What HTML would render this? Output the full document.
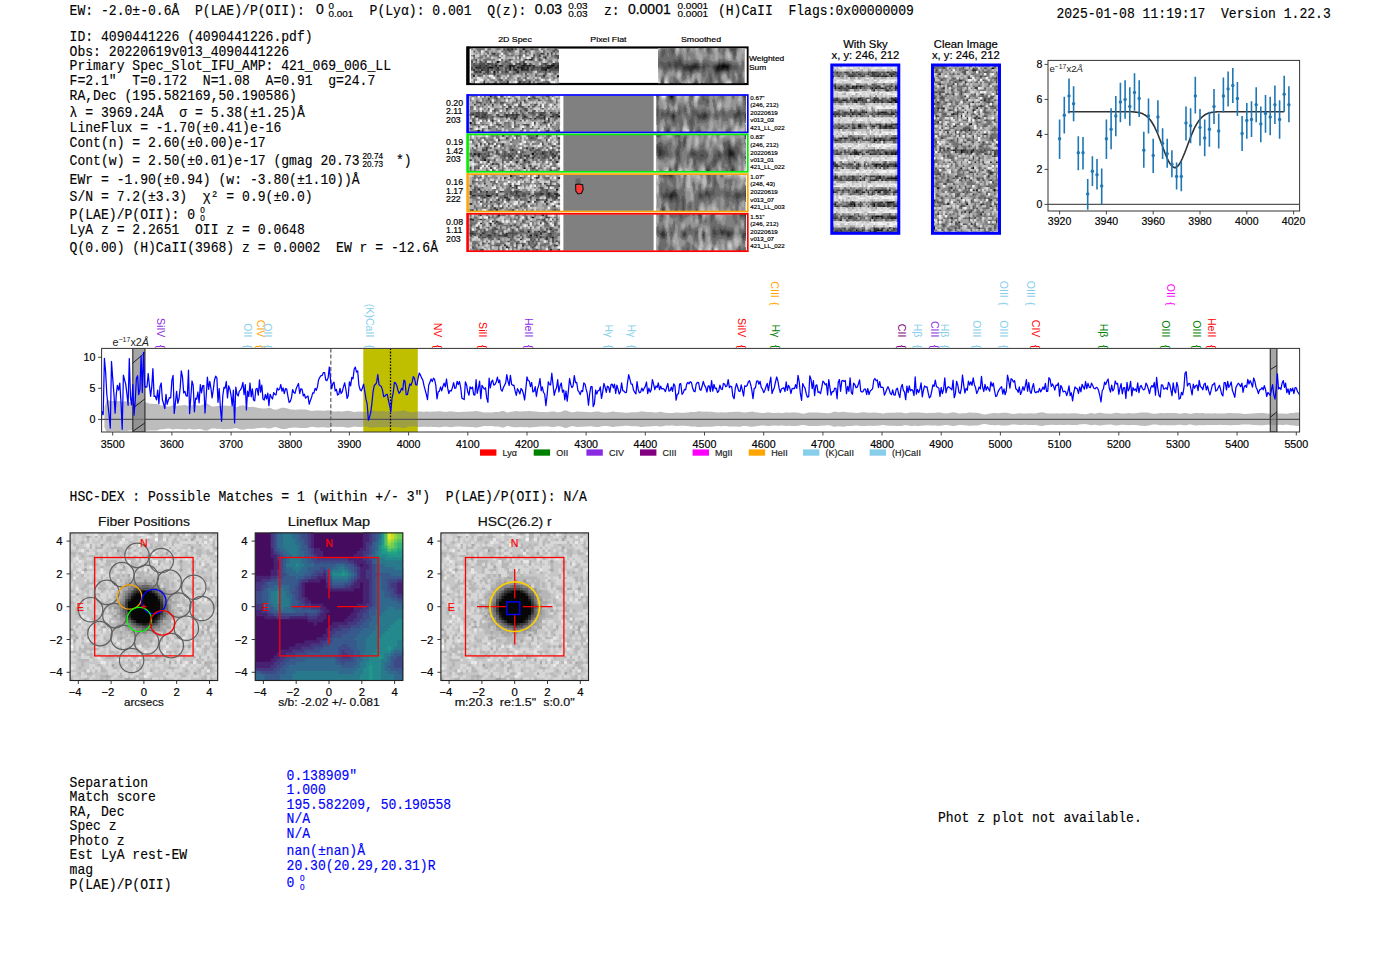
<!DOCTYPE html>
<html><head><meta charset="utf-8"><style>html,body{margin:0;padding:0;background:#fff;overflow:hidden}svg{display:block} text{white-space:pre}</style></head>
<body><svg xml:space="preserve" width="1400" height="953" viewBox="0 0 1400 953">
<rect width="1400" height="953" fill="#fff"/>
<text transform="translate(69.60 14.90) scale(0.934 1)" font-family="'Liberation Mono', monospace" font-size="14" fill="#000" stroke="#000" stroke-width="0.15">EW: -2.0±-0.6Å  P(LAE)/P(OII):</text>
<text transform="translate(316.00 14.30) scale(1.0 1)" font-family="'Liberation Sans', sans-serif" font-size="14" fill="#000" stroke="#000" stroke-width="0.25">0</text>
<text transform="translate(328.60 8.60) scale(1.13 1)" font-family="'Liberation Sans', sans-serif" font-size="8.7" fill="#000" stroke="#000" stroke-width="0.18">0</text>
<text transform="translate(328.60 17.40) scale(1.13 1)" font-family="'Liberation Sans', sans-serif" font-size="8.7" fill="#000" stroke="#000" stroke-width="0.18">0.001</text>
<text transform="translate(369.60 14.90) scale(0.934 1)" font-family="'Liberation Mono', monospace" font-size="14" fill="#000" stroke="#000" stroke-width="0.15">P(Lyα): 0.001  Q(z):</text>
<text transform="translate(534.80 14.30) scale(1.0 1)" font-family="'Liberation Sans', sans-serif" font-size="14" fill="#000" stroke="#000" stroke-width="0.25">0.03</text>
<text transform="translate(568.20 8.90) scale(1.15 1)" font-family="'Liberation Sans', sans-serif" font-size="8.7" fill="#000" stroke="#000" stroke-width="0.18">0.03</text>
<text transform="translate(568.20 17.40) scale(1.15 1)" font-family="'Liberation Sans', sans-serif" font-size="8.7" fill="#000" stroke="#000" stroke-width="0.18">0.03</text>
<text transform="translate(604.00 14.90) scale(0.934 1)" font-family="'Liberation Mono', monospace" font-size="14" fill="#000" stroke="#000" stroke-width="0.15">z:</text>
<text transform="translate(627.90 14.30) scale(1.0 1)" font-family="'Liberation Sans', sans-serif" font-size="14" fill="#000" stroke="#000" stroke-width="0.25">0.0001</text>
<text transform="translate(677.50 8.90) scale(1.15 1)" font-family="'Liberation Sans', sans-serif" font-size="8.7" fill="#000" stroke="#000" stroke-width="0.18">0.0001</text>
<text transform="translate(677.50 17.40) scale(1.15 1)" font-family="'Liberation Sans', sans-serif" font-size="8.7" fill="#000" stroke="#000" stroke-width="0.18">0.0001</text>
<text transform="translate(717.90 14.90) scale(0.934 1)" font-family="'Liberation Mono', monospace" font-size="14" fill="#000" stroke="#000" stroke-width="0.15">(H)CaII  Flags:0x00000009</text>
<text transform="translate(1056.40 17.60) scale(0.934 1)" font-family="'Liberation Mono', monospace" font-size="14" fill="#000" stroke="#000" stroke-width="0.15">2025-01-08 11:19:17  Version 1.22.3</text>
<text transform="translate(69.60 41.30) scale(0.934 1)" font-family="'Liberation Mono', monospace" font-size="14" fill="#000" stroke="#000" stroke-width="0.15">ID: 4090441226 (4090441226.pdf)</text>
<text transform="translate(69.60 55.60) scale(0.934 1)" font-family="'Liberation Mono', monospace" font-size="14" fill="#000" stroke="#000" stroke-width="0.15">Obs: 20220619v013_4090441226</text>
<text transform="translate(69.60 70.20) scale(0.934 1)" font-family="'Liberation Mono', monospace" font-size="14" fill="#000" stroke="#000" stroke-width="0.15">Primary Spec_Slot_IFU_AMP: 421_069_006_LL</text>
<text transform="translate(69.60 84.90) scale(0.934 1)" font-family="'Liberation Mono', monospace" font-size="14" fill="#000" stroke="#000" stroke-width="0.15">F=2.1"  T=0.172  N=1.08  A=0.91  g=24.7</text>
<text transform="translate(69.60 99.90) scale(0.934 1)" font-family="'Liberation Mono', monospace" font-size="14" fill="#000" stroke="#000" stroke-width="0.15">RA,Dec (195.582169,50.190586)</text>
<text transform="translate(69.60 117.00) scale(0.934 1)" font-family="'Liberation Mono', monospace" font-size="14" fill="#000" stroke="#000" stroke-width="0.15">λ = 3969.24Å  σ = 5.38(±1.25)Å</text>
<text transform="translate(69.60 132.00) scale(0.934 1)" font-family="'Liberation Mono', monospace" font-size="14" fill="#000" stroke="#000" stroke-width="0.15">LineFlux = -1.70(±0.41)e-16</text>
<text transform="translate(69.60 147.00) scale(0.934 1)" font-family="'Liberation Mono', monospace" font-size="14" fill="#000" stroke="#000" stroke-width="0.15">Cont(n) = 2.60(±0.00)e-17</text>
<text transform="translate(69.60 164.90) scale(0.934 1)" font-family="'Liberation Mono', monospace" font-size="14" fill="#000" stroke="#000" stroke-width="0.15">Cont(w) = 2.50(±0.01)e-17 (gmag 20.73</text>
<text transform="translate(69.60 183.50) scale(0.934 1)" font-family="'Liberation Mono', monospace" font-size="14" fill="#000" stroke="#000" stroke-width="0.15">EWr = -1.90(±0.94) (w: -3.80(±1.10))Å</text>
<text transform="translate(69.60 200.60) scale(0.934 1)" font-family="'Liberation Mono', monospace" font-size="14" fill="#000" stroke="#000" stroke-width="0.15">S/N = 7.2(±3.3)  χ² = 0.9(±0.0)</text>
<text transform="translate(69.60 218.50) scale(0.934 1)" font-family="'Liberation Mono', monospace" font-size="14" fill="#000" stroke="#000" stroke-width="0.15">P(LAE)/P(OII): 0</text>
<text transform="translate(69.60 234.20) scale(0.934 1)" font-family="'Liberation Mono', monospace" font-size="14" fill="#000" stroke="#000" stroke-width="0.15">LyA z = 2.2651  OII z = 0.0648</text>
<text transform="translate(69.60 252.00) scale(0.934 1)" font-family="'Liberation Mono', monospace" font-size="14" fill="#000" stroke="#000" stroke-width="0.15">Q(0.00) (H)CaII(3968) z = 0.0002  EW r = -12.6Å</text>
<text transform="translate(362.50 158.80) scale(1.0 1)" font-family="'Liberation Sans', sans-serif" font-size="8.2" fill="#000" stroke="#000" stroke-width="0.18">20.74</text>
<text transform="translate(362.50 167.20) scale(1.0 1)" font-family="'Liberation Sans', sans-serif" font-size="8.2" fill="#000" stroke="#000" stroke-width="0.18">20.73</text>
<text transform="translate(396.00 164.90) scale(0.934 1)" font-family="'Liberation Mono', monospace" font-size="14" fill="#000" stroke="#000" stroke-width="0.15">*)</text>
<text transform="translate(200.30 212.90) scale(1.0 1)" font-family="'Liberation Sans', sans-serif" font-size="8.2" fill="#000" stroke="#000" stroke-width="0.18">0</text>
<text transform="translate(200.30 221.00) scale(1.0 1)" font-family="'Liberation Sans', sans-serif" font-size="8.2" fill="#000" stroke="#000" stroke-width="0.18">0</text>
<text transform="translate(69.60 786.80) scale(0.934 1)" font-family="'Liberation Mono', monospace" font-size="14" fill="#000" stroke="#000" stroke-width="0.15">Separation</text>
<text transform="translate(69.60 801.00) scale(0.934 1)" font-family="'Liberation Mono', monospace" font-size="14" fill="#000" stroke="#000" stroke-width="0.15">Match score</text>
<text transform="translate(69.60 816.40) scale(0.934 1)" font-family="'Liberation Mono', monospace" font-size="14" fill="#000" stroke="#000" stroke-width="0.15">RA, Dec</text>
<text transform="translate(69.60 830.40) scale(0.934 1)" font-family="'Liberation Mono', monospace" font-size="14" fill="#000" stroke="#000" stroke-width="0.15">Spec z</text>
<text transform="translate(69.60 845.10) scale(0.934 1)" font-family="'Liberation Mono', monospace" font-size="14" fill="#000" stroke="#000" stroke-width="0.15">Photo z</text>
<text transform="translate(69.60 859.40) scale(0.934 1)" font-family="'Liberation Mono', monospace" font-size="14" fill="#000" stroke="#000" stroke-width="0.15">Est LyA rest-EW</text>
<text transform="translate(69.60 873.80) scale(0.934 1)" font-family="'Liberation Mono', monospace" font-size="14" fill="#000" stroke="#000" stroke-width="0.15">mag</text>
<text transform="translate(69.60 889.20) scale(0.934 1)" font-family="'Liberation Mono', monospace" font-size="14" fill="#000" stroke="#000" stroke-width="0.15">P(LAE)/P(OII)</text>
<text transform="translate(286.60 779.70) scale(0.934 1)" font-family="'Liberation Mono', monospace" font-size="14" fill="#0000ff" stroke="#0000ff" stroke-width="0.15">0.138909"</text>
<text transform="translate(286.60 794.40) scale(0.934 1)" font-family="'Liberation Mono', monospace" font-size="14" fill="#0000ff" stroke="#0000ff" stroke-width="0.15">1.000</text>
<text transform="translate(286.60 808.80) scale(0.934 1)" font-family="'Liberation Mono', monospace" font-size="14" fill="#0000ff" stroke="#0000ff" stroke-width="0.15">195.582209, 50.190558</text>
<text transform="translate(286.60 823.10) scale(0.934 1)" font-family="'Liberation Mono', monospace" font-size="14" fill="#0000ff" stroke="#0000ff" stroke-width="0.15">N/A</text>
<text transform="translate(286.60 837.80) scale(0.934 1)" font-family="'Liberation Mono', monospace" font-size="14" fill="#0000ff" stroke="#0000ff" stroke-width="0.15">N/A</text>
<text transform="translate(286.60 854.60) scale(0.934 1)" font-family="'Liberation Mono', monospace" font-size="14" fill="#0000ff" stroke="#0000ff" stroke-width="0.15">nan(±nan)Å</text>
<text transform="translate(286.60 870.10) scale(0.934 1)" font-family="'Liberation Mono', monospace" font-size="14" fill="#0000ff" stroke="#0000ff" stroke-width="0.15">20.30(20.29,20.31)R</text>
<text transform="translate(286.60 887.00) scale(0.934 1)" font-family="'Liberation Mono', monospace" font-size="14" fill="#0000ff" stroke="#0000ff" stroke-width="0.15">0</text>
<text transform="translate(300.00 881.00) scale(1.0 1)" font-family="'Liberation Sans', sans-serif" font-size="8.2" fill="#0000ff" stroke="#0000ff" stroke-width="0.18">0</text>
<text transform="translate(300.00 890.00) scale(1.0 1)" font-family="'Liberation Sans', sans-serif" font-size="8.2" fill="#0000ff" stroke="#0000ff" stroke-width="0.18">0</text>
<text transform="translate(938.00 822.40) scale(0.934 1)" font-family="'Liberation Mono', monospace" font-size="14" fill="#000" stroke="#000" stroke-width="0.15">Phot z plot not available.</text>
<text transform="translate(69.60 501.10) scale(0.934 1)" font-family="'Liberation Mono', monospace" font-size="14" fill="#000" stroke="#000" stroke-width="0.15">HSC-DEX : Possible Matches = 1 (within +/- 3")  P(LAE)/P(OII): N/A</text>
<text transform="translate(515.00 41.80) scale(1.1 1)" font-family="'Liberation Sans', sans-serif" font-size="8.0" fill="#000" text-anchor="middle" stroke="#000" stroke-width="0.18">2D Spec</text>
<text transform="translate(608.40 41.80) scale(1.1 1)" font-family="'Liberation Sans', sans-serif" font-size="8.0" fill="#000" text-anchor="middle" stroke="#000" stroke-width="0.18">Pixel Flat</text>
<text transform="translate(701.00 41.80) scale(1.1 1)" font-family="'Liberation Sans', sans-serif" font-size="8.0" fill="#000" text-anchor="middle" stroke="#000" stroke-width="0.18">Smoothed</text>
<rect x="467.5" y="47.5" width="280" height="36.5" fill="#fff" stroke="#000" stroke-width="2.2"/>
<g><rect x="471" y="48.6" width="87.5" height="34.4" fill="#8f8f8f"/>
<path stroke="#0f0f0f" stroke-width="2.52" d="M522.7 49.6h2.5M530.7 59.7h2.5M496.9 61.8h2.5M494.9 65.8h2.5M498.8 65.8h2.5M508.8 65.8h2.5M522.7 65.8h2.5M528.7 65.8h2.5M550.5 65.8h4.5M475 67.8h2.5M488.9 67.8h4.5M496.9 67.8h2.5M508.8 67.8h2.5M516.7 67.8h2.5M520.7 67.8h2.5M526.7 67.8h2.5M546.6 67.8h4.5M554.5 67.8h2.5M508.8 69.8h2.5M514.8 69.8h2.5M520.7 69.8h2.5M544.6 69.8h2.5M492.9 71.9h2.5M516.7 71.9h2.5M473 75.9h2.5M556.5 75.9h2.5"/>
<path stroke="#2f2f2f" stroke-width="2.52" d="M506.8 49.6h2.5M510.8 49.6h2.5M524.7 51.6h2.5M492.9 53.7h2.5M540.6 53.7h2.5M546.6 53.7h2.5M550.5 53.7h2.5M538.6 55.7h2.5M544.6 57.7h2.5M524.7 59.7h2.5M528.7 59.7h2.5M522.7 61.8h2.5M486.9 63.8h2.5M518.7 63.8h2.5M522.7 63.8h4.5M544.6 63.8h2.5M552.5 63.8h2.5M479 65.8h2.5M484.9 65.8h2.5M500.8 65.8h2.5M510.8 65.8h4.5M520.7 65.8h2.5M524.7 65.8h4.5M532.6 65.8h2.5M546.6 65.8h4.5M556.5 65.8h2.5M477 67.8h4.5M482.9 67.8h2.5M486.9 67.8h2.5M512.8 67.8h2.5M518.7 67.8h2.5M522.7 67.8h2.5M532.6 67.8h2.5M540.6 67.8h6.5M550.5 67.8h2.5M556.5 67.8h2.5M473 69.8h2.5M480.9 69.8h2.5M486.9 69.8h2.5M496.9 69.8h2.5M512.8 69.8h2.5M522.7 69.8h6.5M530.7 69.8h2.5M540.6 69.8h4.5M475 71.9h2.5M479 71.9h2.5M486.9 71.9h2.5M504.8 71.9h2.5M492.9 73.9h2.5M524.7 73.9h2.5M542.6 75.9h2.5M482.9 82h2.5M506.8 82h2.5M518.7 82h2.5M528.7 82h2.5"/>
<path stroke="#4f4f4f" stroke-width="2.52" d="M502.8 49.6h2.5M508.8 49.6h2.5M514.8 49.6h2.5M530.7 49.6h2.5M554.5 49.6h2.5M473 51.6h2.5M484.9 51.6h2.5M508.8 51.6h2.5M518.7 51.6h2.5M552.5 51.6h2.5M486.9 53.7h2.5M490.9 53.7h2.5M542.6 53.7h2.5M473 55.7h2.5M496.9 55.7h2.5M518.7 55.7h2.5M532.6 55.7h2.5M554.5 55.7h4.5M498.8 57.7h2.5M518.7 57.7h2.5M530.7 57.7h4.5M542.6 57.7h2.5M556.5 57.7h2.5M475 59.7h2.5M500.8 59.7h2.5M508.8 59.7h2.5M538.6 59.7h2.5M471 61.8h2.5M479 61.8h2.5M484.9 61.8h2.5M504.8 61.8h2.5M473 63.8h2.5M479 63.8h6.5M488.9 63.8h4.5M494.9 63.8h2.5M508.8 63.8h2.5M514.8 63.8h4.5M528.7 63.8h2.5M542.6 63.8h2.5M554.5 63.8h4.5M473 65.8h6.5M480.9 65.8h4.5M486.9 65.8h2.5M490.9 65.8h4.5M506.8 65.8h2.5M514.8 65.8h2.5M518.7 65.8h2.5M530.7 65.8h2.5M540.6 65.8h2.5M544.6 65.8h2.5M554.5 65.8h2.5M471 67.8h2.5M480.9 67.8h2.5M484.9 67.8h2.5M492.9 67.8h4.5M504.8 67.8h4.5M524.7 67.8h2.5M530.7 67.8h2.5M534.6 67.8h6.5M552.5 67.8h2.5M471 69.8h2.5M477 69.8h2.5M482.9 69.8h4.5M490.9 69.8h2.5M494.9 69.8h2.5M498.8 69.8h2.5M504.8 69.8h2.5M516.7 69.8h2.5M532.6 69.8h2.5M536.6 69.8h2.5M548.6 69.8h10.4M473 71.9h2.5M477 71.9h2.5M484.9 71.9h2.5M496.9 71.9h2.5M500.8 71.9h2.5M506.8 71.9h2.5M514.8 71.9h2.5M526.7 71.9h2.5M538.6 71.9h2.5M544.6 71.9h2.5M548.6 71.9h2.5M482.9 73.9h2.5M486.9 73.9h2.5M512.8 73.9h2.5M544.6 73.9h2.5M554.5 73.9h2.5M477 75.9h4.5M496.9 75.9h2.5M526.7 75.9h2.5M534.6 75.9h2.5M516.7 77.9h2.5M524.7 77.9h2.5M498.8 80h4.5M534.6 80h2.5M494.9 82h2.5M522.7 82h2.5M532.6 82h2.5M546.6 82h2.5"/>
<path stroke="#6f6f6f" stroke-width="2.52" d="M477 49.6h6.5M486.9 49.6h4.5M496.9 49.6h2.5M504.8 49.6h2.5M524.7 49.6h2.5M532.6 49.6h6.5M540.6 49.6h2.5M546.6 49.6h2.5M479 51.6h2.5M500.8 51.6h2.5M504.8 51.6h2.5M510.8 51.6h2.5M520.7 51.6h2.5M526.7 51.6h2.5M542.6 51.6h2.5M556.5 51.6h2.5M496.9 53.7h2.5M502.8 53.7h4.5M518.7 53.7h2.5M524.7 53.7h2.5M528.7 53.7h2.5M536.6 53.7h2.5M554.5 53.7h2.5M484.9 55.7h2.5M488.9 55.7h2.5M492.9 55.7h4.5M506.8 55.7h2.5M510.8 55.7h2.5M520.7 55.7h2.5M524.7 55.7h4.5M536.6 55.7h2.5M546.6 55.7h2.5M550.5 55.7h2.5M473 57.7h2.5M479 57.7h4.5M496.9 57.7h2.5M514.8 57.7h2.5M536.6 57.7h2.5M554.5 57.7h2.5M473 59.7h2.5M482.9 59.7h8.5M492.9 59.7h2.5M510.8 59.7h2.5M526.7 59.7h2.5M532.6 59.7h2.5M540.6 59.7h2.5M475 61.8h2.5M490.9 61.8h2.5M506.8 61.8h2.5M518.7 61.8h4.5M548.6 61.8h4.5M471 63.8h2.5M475 63.8h2.5M484.9 63.8h2.5M500.8 63.8h4.5M506.8 63.8h2.5M520.7 63.8h2.5M540.6 63.8h2.5M546.6 63.8h2.5M471 65.8h2.5M496.9 65.8h2.5M504.8 65.8h2.5M542.6 65.8h2.5M473 67.8h2.5M498.8 67.8h4.5M514.8 67.8h2.5M528.7 67.8h2.5M475 69.8h2.5M488.9 69.8h2.5M492.9 69.8h2.5M500.8 69.8h2.5M506.8 69.8h2.5M510.8 69.8h2.5M518.7 69.8h2.5M528.7 69.8h2.5M534.6 69.8h2.5M538.6 69.8h2.5M488.9 71.9h2.5M502.8 71.9h2.5M512.8 71.9h2.5M518.7 71.9h8.5M528.7 71.9h4.5M536.6 71.9h2.5M540.6 71.9h4.5M546.6 71.9h2.5M552.5 71.9h6.5M471 73.9h4.5M477 73.9h2.5M488.9 73.9h4.5M500.8 73.9h6.5M508.8 73.9h2.5M520.7 73.9h2.5M534.6 73.9h2.5M480.9 75.9h2.5M498.8 75.9h2.5M508.8 75.9h2.5M524.7 75.9h2.5M538.6 75.9h4.5M550.5 75.9h2.5M486.9 77.9h2.5M506.8 77.9h2.5M518.7 77.9h2.5M522.7 77.9h2.5M532.6 77.9h2.5M540.6 77.9h4.5M546.6 77.9h2.5M552.5 77.9h2.5M473 80h4.5M490.9 80h2.5M496.9 80h2.5M504.8 80h2.5M516.7 80h2.5M520.7 80h2.5M526.7 80h2.5M536.6 80h2.5M473 82h2.5M498.8 82h2.5M502.8 82h2.5M520.7 82h2.5M524.7 82h2.5M542.6 82h4.5"/>
<path stroke="#afafaf" stroke-width="2.52" d="M473 49.6h2.5M490.9 49.6h4.5M500.8 49.6h2.5M516.7 49.6h2.5M544.6 49.6h2.5M475 51.6h2.5M482.9 51.6h2.5M488.9 51.6h2.5M492.9 51.6h2.5M496.9 51.6h2.5M522.7 51.6h2.5M532.6 51.6h2.5M546.6 51.6h2.5M473 53.7h2.5M477 53.7h2.5M484.9 53.7h2.5M488.9 53.7h2.5M508.8 53.7h2.5M514.8 53.7h4.5M526.7 53.7h2.5M544.6 53.7h2.5M548.6 53.7h2.5M552.5 53.7h2.5M556.5 53.7h2.5M528.7 55.7h2.5M540.6 55.7h2.5M548.6 55.7h2.5M475 57.7h2.5M482.9 57.7h2.5M492.9 57.7h4.5M506.8 57.7h6.5M520.7 57.7h6.5M534.6 57.7h2.5M540.6 57.7h2.5M546.6 57.7h2.5M477 59.7h2.5M480.9 59.7h2.5M494.9 59.7h4.5M502.8 59.7h2.5M512.8 59.7h2.5M552.5 59.7h4.5M473 61.8h2.5M477 61.8h2.5M492.9 61.8h2.5M526.7 61.8h6.5M544.6 61.8h2.5M498.8 63.8h2.5M526.7 63.8h2.5M532.6 63.8h2.5M548.6 63.8h2.5M490.9 71.9h2.5M498.8 71.9h2.5M508.8 71.9h2.5M532.6 71.9h2.5M522.7 73.9h2.5M526.7 73.9h2.5M532.6 73.9h2.5M538.6 73.9h4.5M546.6 73.9h2.5M550.5 73.9h2.5M556.5 73.9h2.5M475 75.9h2.5M486.9 75.9h2.5M500.8 75.9h4.5M512.8 75.9h4.5M518.7 75.9h2.5M522.7 75.9h2.5M528.7 75.9h2.5M532.6 75.9h2.5M546.6 75.9h4.5M554.5 75.9h2.5M473 77.9h4.5M480.9 77.9h6.5M512.8 77.9h2.5M520.7 77.9h2.5M528.7 77.9h4.5M548.6 77.9h4.5M494.9 80h2.5M502.8 80h2.5M510.8 80h2.5M514.8 80h2.5M532.6 80h2.5M546.6 80h2.5M556.5 80h2.5M471 82h2.5M479 82h4.5M484.9 82h2.5M488.9 82h4.5M496.9 82h2.5M510.8 82h2.5M530.7 82h2.5M534.6 82h2.5M556.5 82h2.5"/>
<path stroke="#cfcfcf" stroke-width="2.52" d="M484.9 49.6h2.5M538.6 49.6h2.5M471 51.6h2.5M498.8 51.6h2.5M514.8 51.6h4.5M530.7 51.6h2.5M540.6 51.6h2.5M471 53.7h2.5M480.9 53.7h2.5M530.7 53.7h2.5M475 55.7h4.5M486.9 55.7h2.5M498.8 55.7h2.5M502.8 55.7h2.5M530.7 55.7h2.5M471 57.7h2.5M490.9 57.7h2.5M500.8 57.7h4.5M512.8 57.7h2.5M516.7 57.7h2.5M528.7 57.7h2.5M520.7 59.7h2.5M534.6 59.7h2.5M542.6 59.7h2.5M486.9 61.8h4.5M510.8 61.8h2.5M516.7 61.8h2.5M524.7 61.8h2.5M542.6 61.8h2.5M552.5 61.8h2.5M512.8 63.8h2.5M538.6 63.8h2.5M471 71.9h2.5M534.6 71.9h2.5M548.6 73.9h2.5M482.9 75.9h2.5M506.8 75.9h2.5M516.7 75.9h2.5M479 77.9h2.5M490.9 77.9h2.5M500.8 77.9h2.5M504.8 77.9h2.5M514.8 77.9h2.5M526.7 77.9h2.5M534.6 77.9h2.5M538.6 77.9h2.5M471 80h2.5M477 80h2.5M486.9 80h2.5M522.7 80h2.5M542.6 80h2.5M554.5 80h2.5M508.8 82h2.5M512.8 82h2.5M554.5 82h2.5"/>
<path stroke="#efefef" stroke-width="2.52" d="M480.9 51.6h2.5M500.8 53.7h2.5M522.7 55.7h2.5M526.7 57.7h2.5M498.8 59.7h2.5M488.9 75.9h4.5M477 77.9h2.5M492.9 77.9h2.5M479 80h4.5M540.6 80h2.5M548.6 80h2.5M475 82h4.5M514.8 82h2.5M550.5 82h4.5"/>
</g>
<g><rect x="658" y="48.6" width="86.8" height="34.4" fill="#7f7f7f"/>
<path stroke="#090909" stroke-width="1.51" d="M721.9 65.3h3.5M717.9 66.3h2.5M720.9 66.3h7.5M717.9 67.3h2.5M720.9 67.3h7.5M716.9 68.3h2.5M721.9 68.3h2.5"/>
<path stroke="#1d1d1d" stroke-width="1.51" d="M718.9 64.3h1.5M721.9 64.3h4.5M717.9 65.3h4.5M724.8 65.3h4.5M692.9 66.3h4.5M716.9 66.3h1.5M719.9 66.3h1.5M727.8 66.3h1.5M690.9 67.3h5.5M715.9 67.3h2.5M719.9 67.3h1.5M727.8 67.3h1.5M689.9 68.3h2.5M715.9 68.3h1.5M718.9 68.3h3.5M723.8 68.3h5.5M715.9 69.3h8.5M725.8 69.3h2.5M716.9 70.4h2.5"/>
<path stroke="#313131" stroke-width="1.51" d="M718.9 63.3h1.5M721.9 63.3h3.5M675 64.3h1.5M693.9 64.3h3.5M717.9 64.3h1.5M719.9 64.3h2.5M725.8 64.3h3.5M675 65.3h1.5M690.9 65.3h7.5M715.9 65.3h2.5M728.8 65.3h1.5M675 66.3h1.5M685.9 66.3h7.5M696.9 66.3h2.5M714.9 66.3h2.5M728.8 66.3h1.5M682.9 67.3h8.5M695.9 67.3h3.5M713.9 67.3h2.5M728.8 67.3h1.5M682.9 68.3h7.5M691.9 68.3h6.5M713.9 68.3h2.5M728.8 68.3h1.5M687.9 69.3h6.5M714.9 69.3h1.5M723.8 69.3h2.5M727.8 69.3h1.5M688.9 70.4h3.5M714.9 70.4h2.5M718.9 70.4h4.5M725.8 70.4h3.5M689.9 71.4h1.5M714.9 71.4h5.5"/>
<path stroke="#444444" stroke-width="1.51" d="M706.9 49.1h2.5M729.8 49.1h6.5M730.8 50.1h5.5M733.8 51.1h1.5M733.8 52.1h1.5M733.8 53.2h1.5M679 59.2h1.5M678 60.2h3.5M675 61.2h1.5M678 61.2h3.5M674 62.3h8.5M718.9 62.3h1.5M721.9 62.3h3.5M668 63.3h2.5M674 63.3h8.5M692.9 63.3h5.5M717.9 63.3h1.5M719.9 63.3h2.5M724.8 63.3h4.5M668 64.3h3.5M674 64.3h1.5M676 64.3h7.5M685.9 64.3h2.5M690.9 64.3h3.5M696.9 64.3h2.5M702.9 64.3h1.5M716.9 64.3h1.5M728.8 64.3h2.5M667 65.3h4.5M674 65.3h1.5M676 65.3h15.5M697.9 65.3h1.5M702.9 65.3h2.5M713.9 65.3h2.5M729.8 65.3h2.5M668 66.3h3.5M674 66.3h1.5M676 66.3h10.5M698.9 66.3h1.5M701.9 66.3h3.5M712.9 66.3h2.5M729.8 66.3h2.5M664 67.3h2.5M674 67.3h4.5M680.9 67.3h2.5M698.9 67.3h1.5M701.9 67.3h3.5M712.9 67.3h1.5M729.8 67.3h2.5M675 68.3h2.5M681.9 68.3h1.5M697.9 68.3h2.5M701.9 68.3h3.5M712.9 68.3h1.5M729.8 68.3h2.5M681.9 69.3h6.5M693.9 69.3h5.5M702.9 69.3h1.5M713.9 69.3h1.5M728.8 69.3h2.5M682.9 70.4h6.5M691.9 70.4h2.5M713.9 70.4h1.5M722.9 70.4h3.5M728.8 70.4h1.5M683.9 71.4h1.5M688.9 71.4h1.5M690.9 71.4h2.5M713.9 71.4h1.5M719.9 71.4h2.5M726.8 71.4h2.5M689.9 72.4h2.5M714.9 72.4h5.5M714.9 73.4h4.5M662 81.5h1.5M662 82.5h1.5M694.9 82.5h2.5"/>
<path stroke="#585858" stroke-width="1.51" d="M670 49.1h4.5M708.9 49.1h1.5M735.8 49.1h1.5M662 50.1h3.5M670 50.1h4.5M706.9 50.1h3.5M729.8 50.1h1.5M662 51.1h3.5M670 51.1h4.5M706.9 51.1h2.5M730.8 51.1h3.5M734.8 51.1h1.5M661 52.1h4.5M671 52.1h3.5M731.8 52.1h2.5M734.8 52.1h1.5M661 53.2h4.5M671 53.2h3.5M732.8 53.2h1.5M734.8 53.2h1.5M661 54.2h4.5M671 54.2h2.5M732.8 54.2h3.5M661 55.2h3.5M672 55.2h1.5M732.8 55.2h3.5M661 56.2h3.5M733.8 56.2h1.5M661 57.2h2.5M678 57.2h3.5M733.8 57.2h1.5M678 58.2h3.5M673 59.2h2.5M677 59.2h2.5M679.9 59.2h2.5M673 60.2h5.5M680.9 60.2h1.5M660 61.2h2.5M667 61.2h4.5M672 61.2h3.5M676 61.2h2.5M680.9 61.2h2.5M718.9 61.2h1.5M721.9 61.2h3.5M659 62.3h5.5M666 62.3h8.5M681.9 62.3h1.5M691.9 62.3h6.5M702.9 62.3h2.5M717.9 62.3h1.5M719.9 62.3h2.5M724.8 62.3h4.5M659 63.3h9.5M670 63.3h4.5M681.9 63.3h2.5M685.9 63.3h3.5M689.9 63.3h3.5M697.9 63.3h1.5M702.9 63.3h5.5M716.9 63.3h1.5M728.8 63.3h2.5M659 64.3h9.5M671 64.3h3.5M682.9 64.3h3.5M687.9 64.3h3.5M698.9 64.3h1.5M701.9 64.3h1.5M703.9 64.3h5.5M712.9 64.3h4.5M730.8 64.3h1.5M660 65.3h7.5M671 65.3h3.5M698.9 65.3h1.5M701.9 65.3h1.5M704.9 65.3h5.5M711.9 65.3h2.5M731.8 65.3h5.5M661 66.3h7.5M671 66.3h3.5M699.9 66.3h2.5M704.9 66.3h8.5M731.8 66.3h6.5M662 67.3h2.5M666 67.3h6.5M673 67.3h1.5M678 67.3h3.5M699.9 67.3h2.5M704.9 67.3h5.5M710.9 67.3h2.5M731.8 67.3h6.5M663 68.3h8.5M674 68.3h1.5M677 68.3h5.5M699.9 68.3h2.5M704.9 68.3h1.5M711.9 68.3h1.5M731.8 68.3h6.5M663 69.3h4.5M675 69.3h2.5M680.9 69.3h1.5M698.9 69.3h1.5M700.9 69.3h2.5M703.9 69.3h2.5M711.9 69.3h2.5M730.8 69.3h8.5M664 70.4h2.5M681.9 70.4h1.5M693.9 70.4h5.5M701.9 70.4h3.5M712.9 70.4h1.5M729.8 70.4h1.5M731.8 70.4h1.5M681.9 71.4h2.5M684.9 71.4h4.5M692.9 71.4h1.5M701.9 71.4h3.5M721.9 71.4h5.5M728.8 71.4h1.5M682.9 72.4h3.5M688.9 72.4h1.5M691.9 72.4h1.5M702.9 72.4h1.5M713.9 72.4h1.5M719.9 72.4h2.5M726.8 72.4h3.5M682.9 73.4h2.5M688.9 73.4h3.5M709.9 73.4h1.5M713.9 73.4h1.5M718.9 73.4h2.5M726.8 73.4h2.5M682.9 74.4h2.5M689.9 74.4h1.5M708.9 74.4h2.5M714.9 74.4h5.5M727.8 74.4h1.5M738.8 74.4h2.5M682.9 75.4h2.5M708.9 75.4h2.5M714.9 75.4h5.5M738.8 75.4h2.5M708.9 76.4h2.5M717.9 76.4h2.5M738.8 76.4h2.5M708.9 77.4h3.5M717.9 77.4h2.5M738.8 77.4h2.5M708.9 78.4h3.5M717.9 78.4h2.5M732.8 78.4h1.5M739.8 78.4h1.5M662 79.5h1.5M708.9 79.5h3.5M717.9 79.5h2.5M738.8 79.5h2.5M661 80.5h2.5M708.9 80.5h3.5M718.9 80.5h1.5M738.8 80.5h2.5M661 81.5h1.5M675 81.5h2.5M694.9 81.5h2.5M708.9 81.5h3.5M718.9 81.5h1.5M738.8 81.5h3.5M661 82.5h1.5M663 82.5h1.5M675 82.5h3.5M693.9 82.5h1.5M706.9 82.5h1.5M708.9 82.5h3.5M718.9 82.5h2.5M737.8 82.5h4.5"/>
<path stroke="#6b6b6b" stroke-width="1.51" d="M661 49.1h5.5M668 49.1h2.5M674 49.1h1.5M686.9 49.1h2.5M705.9 49.1h1.5M709.9 49.1h1.5M717.9 49.1h2.5M722.9 49.1h2.5M728.8 49.1h1.5M661 50.1h1.5M665 50.1h1.5M668 50.1h2.5M674 50.1h1.5M686.9 50.1h2.5M705.9 50.1h1.5M709.9 50.1h1.5M718.9 50.1h1.5M722.9 50.1h2.5M728.8 50.1h1.5M735.8 50.1h1.5M661 51.1h1.5M665 51.1h2.5M668 51.1h2.5M674 51.1h1.5M686.9 51.1h1.5M705.9 51.1h1.5M708.9 51.1h2.5M718.9 51.1h1.5M721.9 51.1h3.5M729.8 51.1h1.5M735.8 51.1h1.5M660 52.1h1.5M665 52.1h2.5M668 52.1h3.5M674 52.1h1.5M686.9 52.1h1.5M706.9 52.1h4.5M721.9 52.1h2.5M730.8 52.1h1.5M735.8 52.1h1.5M660 53.2h1.5M665 53.2h2.5M669 53.2h2.5M674 53.2h1.5M707.9 53.2h2.5M721.9 53.2h2.5M731.8 53.2h1.5M660 54.2h1.5M665 54.2h2.5M669 54.2h2.5M673 54.2h2.5M722.9 54.2h1.5M731.8 54.2h1.5M660 55.2h1.5M664 55.2h3.5M669 55.2h3.5M673 55.2h2.5M679 55.2h2.5M660 56.2h1.5M664 56.2h3.5M670 56.2h5.5M678 56.2h4.5M732.8 56.2h1.5M734.8 56.2h1.5M659 57.2h2.5M663 57.2h5.5M669 57.2h6.5M677 57.2h1.5M680.9 57.2h1.5M732.8 57.2h1.5M734.8 57.2h1.5M659 58.2h19.5M680.9 58.2h2.5M732.8 58.2h3.5M658 59.2h15.5M675 59.2h2.5M681.9 59.2h1.5M722.9 59.2h1.5M733.8 59.2h1.5M658 60.2h15.5M681.9 60.2h1.5M692.9 60.2h4.5M702.9 60.2h5.5M717.9 60.2h3.5M721.9 60.2h3.5M658 61.2h2.5M662 61.2h5.5M671 61.2h1.5M682.9 61.2h1.5M685.9 61.2h2.5M690.9 61.2h7.5M702.9 61.2h6.5M717.9 61.2h1.5M719.9 61.2h2.5M724.8 61.2h3.5M658 62.3h1.5M664 62.3h2.5M682.9 62.3h1.5M684.9 62.3h7.5M697.9 62.3h1.5M701.9 62.3h1.5M704.9 62.3h6.5M716.9 62.3h1.5M728.8 62.3h3.5M741.8 62.3h2.5M658 63.3h1.5M683.9 63.3h2.5M688.9 63.3h1.5M698.9 63.3h1.5M701.9 63.3h1.5M707.9 63.3h9.5M730.8 63.3h6.5M741.8 63.3h2.5M658 64.3h1.5M699.9 64.3h2.5M708.9 64.3h4.5M731.8 64.3h6.5M741.8 64.3h2.5M658 65.3h2.5M699.9 65.3h2.5M709.9 65.3h2.5M736.8 65.3h2.5M741.8 65.3h2.5M658 66.3h3.5M737.8 66.3h1.5M740.8 66.3h3.5M660 67.3h2.5M672 67.3h1.5M709.9 67.3h1.5M737.8 67.3h2.5M740.8 67.3h3.5M661 68.3h2.5M671 68.3h3.5M705.9 68.3h6.5M737.8 68.3h6.5M662 69.3h1.5M667 69.3h5.5M674 69.3h1.5M677 69.3h4.5M699.9 69.3h1.5M705.9 69.3h6.5M738.8 69.3h4.5M663 70.4h1.5M666 70.4h2.5M674 70.4h3.5M680.9 70.4h1.5M698.9 70.4h3.5M704.9 70.4h8.5M730.8 70.4h1.5M732.8 70.4h10.5M663 71.4h4.5M675 71.4h1.5M680.9 71.4h1.5M693.9 71.4h5.5M700.9 71.4h1.5M704.9 71.4h1.5M707.9 71.4h6.5M729.8 71.4h4.5M735.8 71.4h6.5M664 72.4h2.5M681.9 72.4h1.5M685.9 72.4h3.5M692.9 72.4h1.5M700.9 72.4h2.5M703.9 72.4h2.5M707.9 72.4h4.5M712.9 72.4h1.5M721.9 72.4h5.5M729.8 72.4h1.5M731.8 72.4h2.5M736.8 72.4h5.5M664 73.4h1.5M681.9 73.4h1.5M684.9 73.4h4.5M691.9 73.4h1.5M701.9 73.4h4.5M707.9 73.4h2.5M710.9 73.4h1.5M712.9 73.4h1.5M720.9 73.4h1.5M725.8 73.4h1.5M728.8 73.4h1.5M731.8 73.4h2.5M737.8 73.4h4.5M681.9 74.4h1.5M684.9 74.4h2.5M688.9 74.4h1.5M690.9 74.4h1.5M701.9 74.4h3.5M707.9 74.4h1.5M710.9 74.4h1.5M713.9 74.4h1.5M719.9 74.4h1.5M726.8 74.4h1.5M728.8 74.4h1.5M731.8 74.4h2.5M737.8 74.4h1.5M740.8 74.4h1.5M681.9 75.4h1.5M684.9 75.4h1.5M689.9 75.4h2.5M701.9 75.4h3.5M707.9 75.4h1.5M710.9 75.4h1.5M713.9 75.4h1.5M719.9 75.4h1.5M726.8 75.4h3.5M731.8 75.4h2.5M737.8 75.4h1.5M740.8 75.4h1.5M681.9 76.4h4.5M689.9 76.4h1.5M702.9 76.4h2.5M707.9 76.4h1.5M710.9 76.4h1.5M713.9 76.4h4.5M719.9 76.4h1.5M727.8 76.4h2.5M731.8 76.4h3.5M737.8 76.4h1.5M740.8 76.4h1.5M662 77.4h1.5M681.9 77.4h4.5M706.9 77.4h2.5M714.9 77.4h3.5M719.9 77.4h1.5M727.8 77.4h1.5M731.8 77.4h3.5M737.8 77.4h1.5M740.8 77.4h1.5M661 78.4h3.5M673 78.4h3.5M681.9 78.4h3.5M706.9 78.4h2.5M716.9 78.4h1.5M719.9 78.4h1.5M731.8 78.4h1.5M733.8 78.4h1.5M737.8 78.4h2.5M740.8 78.4h2.5M661 79.5h1.5M663 79.5h1.5M673 79.5h3.5M682.9 79.5h1.5M694.9 79.5h1.5M705.9 79.5h3.5M716.9 79.5h1.5M719.9 79.5h1.5M731.8 79.5h3.5M737.8 79.5h1.5M740.8 79.5h2.5M663 80.5h1.5M673 80.5h4.5M694.9 80.5h2.5M705.9 80.5h3.5M711.9 80.5h1.5M717.9 80.5h1.5M719.9 80.5h1.5M731.8 80.5h3.5M737.8 80.5h1.5M740.8 80.5h2.5M663 81.5h1.5M673 81.5h2.5M677 81.5h1.5M693.9 81.5h1.5M705.9 81.5h3.5M711.9 81.5h1.5M717.9 81.5h1.5M719.9 81.5h2.5M732.8 81.5h2.5M736.8 81.5h2.5M741.8 81.5h1.5M669 82.5h2.5M673 82.5h2.5M678 82.5h1.5M696.9 82.5h1.5M704.9 82.5h2.5M707.9 82.5h1.5M711.9 82.5h1.5M717.9 82.5h1.5M720.9 82.5h1.5M732.8 82.5h5.5M741.8 82.5h3.5"/>
<path stroke="#939393" stroke-width="1.51" d="M675 49.1h1.5M679 49.1h1.5M680.9 49.1h2.5M684.9 49.1h1.5M689.9 49.1h1.5M691.9 49.1h3.5M697.9 49.1h1.5M702.9 49.1h1.5M704.9 49.1h1.5M711.9 49.1h2.5M716.9 49.1h1.5M725.8 49.1h2.5M737.8 49.1h2.5M743.8 49.1h1.5M659 50.1h1.5M675 50.1h1.5M679 50.1h1.5M680.9 50.1h2.5M684.9 50.1h1.5M689.9 50.1h5.5M697.9 50.1h1.5M701.9 50.1h2.5M704.9 50.1h1.5M711.9 50.1h2.5M716.9 50.1h1.5M725.8 50.1h1.5M727.8 50.1h1.5M737.8 50.1h2.5M743.8 50.1h1.5M658 51.1h1.5M675 51.1h1.5M679 51.1h1.5M680.9 51.1h3.5M684.9 51.1h1.5M689.9 51.1h6.5M697.9 51.1h2.5M700.9 51.1h3.5M704.9 51.1h1.5M712.9 51.1h1.5M716.9 51.1h1.5M725.8 51.1h1.5M736.8 51.1h3.5M743.8 51.1h1.5M658 52.1h1.5M675 52.1h1.5M678 52.1h1.5M681.9 52.1h2.5M684.9 52.1h1.5M690.9 52.1h2.5M693.9 52.1h2.5M698.9 52.1h7.5M712.9 52.1h2.5M716.9 52.1h1.5M724.8 52.1h1.5M728.8 52.1h1.5M736.8 52.1h1.5M743.8 52.1h1.5M675 53.2h1.5M677 53.2h2.5M681.9 53.2h4.5M693.9 53.2h2.5M698.9 53.2h7.5M712.9 53.2h2.5M717.9 53.2h1.5M724.8 53.2h1.5M729.8 53.2h1.5M736.8 53.2h1.5M742.8 53.2h2.5M676 54.2h2.5M682.9 54.2h3.5M694.9 54.2h1.5M700.9 54.2h5.5M712.9 54.2h2.5M717.9 54.2h1.5M724.8 54.2h1.5M729.8 54.2h1.5M741.8 54.2h3.5M676 55.2h1.5M682.9 55.2h3.5M694.9 55.2h2.5M701.9 55.2h5.5M709.9 55.2h5.5M717.9 55.2h3.5M724.8 55.2h1.5M730.8 55.2h1.5M740.8 55.2h4.5M682.9 56.2h3.5M694.9 56.2h2.5M701.9 56.2h4.5M709.9 56.2h5.5M717.9 56.2h3.5M724.8 56.2h1.5M730.8 56.2h1.5M740.8 56.2h4.5M683.9 57.2h2.5M687.9 57.2h2.5M695.9 57.2h2.5M701.9 57.2h1.5M709.9 57.2h5.5M717.9 57.2h4.5M724.8 57.2h1.5M730.8 57.2h1.5M735.8 57.2h1.5M740.8 57.2h4.5M683.9 58.2h2.5M687.9 58.2h2.5M695.9 58.2h2.5M701.9 58.2h1.5M709.9 58.2h5.5M717.9 58.2h1.5M719.9 58.2h1.5M724.8 58.2h2.5M730.8 58.2h1.5M735.8 58.2h1.5M740.8 58.2h4.5M683.9 59.2h2.5M687.9 59.2h2.5M696.9 59.2h2.5M701.9 59.2h1.5M709.9 59.2h5.5M716.9 59.2h1.5M725.8 59.2h2.5M730.8 59.2h1.5M735.8 59.2h2.5M739.8 59.2h2.5M743.8 59.2h1.5M698.9 60.2h1.5M700.9 60.2h1.5M711.9 60.2h6.5M727.8 60.2h4.5M736.8 60.2h1.5M739.8 60.2h2.5M743.8 60.2h1.5M698.9 61.2h3.5M715.9 61.2h1.5M736.8 61.2h4.5M699.9 62.3h2.5M737.8 62.3h3.5M738.8 63.3h2.5M738.8 64.3h1.5M658 69.3h2.5M659 70.4h3.5M743.8 70.4h1.5M661 71.4h1.5M672 71.4h2.5M678 71.4h2.5M743.8 71.4h1.5M661 72.4h1.5M668 72.4h2.5M671 72.4h3.5M677 72.4h1.5M679.9 72.4h1.5M742.8 72.4h1.5M661 73.4h1.5M667 73.4h7.5M676 73.4h1.5M679.9 73.4h1.5M695.9 73.4h4.5M723.8 73.4h1.5M734.8 73.4h1.5M742.8 73.4h1.5M661 74.4h1.5M666 74.4h8.5M675 74.4h2.5M692.9 74.4h5.5M698.9 74.4h2.5M721.9 74.4h4.5M734.8 74.4h2.5M742.8 74.4h1.5M661 75.4h1.5M665 75.4h8.5M675 75.4h2.5M691.9 75.4h1.5M693.9 75.4h3.5M699.9 75.4h1.5M721.9 75.4h1.5M734.8 75.4h2.5M742.8 75.4h1.5M660 76.4h1.5M665 76.4h1.5M668 76.4h2.5M676 76.4h1.5M679.9 76.4h1.5M686.9 76.4h2.5M691.9 76.4h1.5M693.9 76.4h3.5M699.9 76.4h1.5M720.9 76.4h2.5M725.8 76.4h1.5M735.8 76.4h1.5M742.8 76.4h1.5M660 77.4h1.5M664 77.4h1.5M668 77.4h1.5M676 77.4h1.5M679.9 77.4h1.5M686.9 77.4h2.5M693.9 77.4h3.5M699.9 77.4h1.5M720.9 77.4h1.5M725.8 77.4h1.5M735.8 77.4h1.5M743.8 77.4h1.5M660 78.4h1.5M664 78.4h1.5M668 78.4h1.5M677 78.4h1.5M679.9 78.4h1.5M686.9 78.4h3.5M690.9 78.4h1.5M693.9 78.4h1.5M696.9 78.4h1.5M699.9 78.4h1.5M720.9 78.4h2.5M725.8 78.4h2.5M735.8 78.4h1.5M743.8 78.4h1.5M664 79.5h1.5M668 79.5h1.5M678 79.5h3.5M685.9 79.5h2.5M688.9 79.5h3.5M696.9 79.5h1.5M699.9 79.5h1.5M721.9 79.5h1.5M726.8 79.5h4.5M668 80.5h1.5M679 80.5h2.5M684.9 80.5h2.5M689.9 80.5h2.5M692.9 80.5h1.5M699.9 80.5h1.5M721.9 80.5h2.5M729.8 80.5h1.5M668 81.5h1.5M679.9 81.5h1.5M682.9 81.5h4.5M689.9 81.5h2.5M692.9 81.5h1.5M697.9 81.5h1.5M699.9 81.5h1.5M702.9 81.5h1.5M714.9 81.5h2.5M722.9 81.5h2.5M730.8 81.5h1.5M668 82.5h1.5M680.9 82.5h4.5M690.9 82.5h2.5M697.9 82.5h1.5M699.9 82.5h1.5M702.9 82.5h1.5M713.9 82.5h3.5M722.9 82.5h2.5M730.8 82.5h1.5"/>
<path stroke="#a6a6a6" stroke-width="1.51" d="M659 49.1h1.5M678 49.1h1.5M682.9 49.1h2.5M690.9 49.1h1.5M694.9 49.1h1.5M696.9 49.1h1.5M703.9 49.1h1.5M713.9 49.1h1.5M739.8 49.1h2.5M742.8 49.1h1.5M658 50.1h1.5M678 50.1h1.5M682.9 50.1h2.5M694.9 50.1h3.5M703.9 50.1h1.5M713.9 50.1h3.5M726.8 50.1h1.5M739.8 50.1h4.5M676 51.1h1.5M678 51.1h1.5M683.9 51.1h1.5M695.9 51.1h2.5M703.9 51.1h1.5M713.9 51.1h3.5M726.8 51.1h2.5M739.8 51.1h4.5M676 52.1h2.5M683.9 52.1h1.5M695.9 52.1h3.5M714.9 52.1h2.5M725.8 52.1h3.5M737.8 52.1h6.5M676 53.2h1.5M695.9 53.2h3.5M714.9 53.2h3.5M725.8 53.2h2.5M728.8 53.2h1.5M737.8 53.2h5.5M695.9 54.2h5.5M714.9 54.2h3.5M725.8 54.2h1.5M728.8 54.2h1.5M736.8 54.2h5.5M696.9 55.2h5.5M714.9 55.2h3.5M725.8 55.2h1.5M729.8 55.2h1.5M736.8 55.2h4.5M696.9 56.2h5.5M714.9 56.2h3.5M725.8 56.2h2.5M729.8 56.2h1.5M736.8 56.2h4.5M697.9 57.2h4.5M714.9 57.2h3.5M725.8 57.2h2.5M729.8 57.2h1.5M736.8 57.2h4.5M697.9 58.2h4.5M714.9 58.2h3.5M726.8 58.2h4.5M736.8 58.2h4.5M698.9 59.2h3.5M714.9 59.2h2.5M727.8 59.2h3.5M737.8 59.2h2.5M699.9 60.2h1.5M737.8 60.2h2.5M658 70.4h1.5M658 71.4h3.5M658 72.4h3.5M678 72.4h2.5M743.8 72.4h1.5M659 73.4h2.5M677 73.4h3.5M743.8 73.4h1.5M659 74.4h2.5M677 74.4h1.5M679.9 74.4h1.5M697.9 74.4h1.5M743.8 74.4h1.5M659 75.4h2.5M677 75.4h1.5M679.9 75.4h1.5M692.9 75.4h1.5M696.9 75.4h3.5M722.9 75.4h3.5M743.8 75.4h1.5M659 76.4h1.5M666 76.4h2.5M677 76.4h1.5M679 76.4h1.5M692.9 76.4h1.5M696.9 76.4h3.5M722.9 76.4h3.5M743.8 76.4h1.5M659 77.4h1.5M665 77.4h3.5M677 77.4h3.5M691.9 77.4h2.5M696.9 77.4h3.5M721.9 77.4h4.5M659 78.4h1.5M665 78.4h1.5M667 78.4h1.5M678 78.4h2.5M691.9 78.4h2.5M697.9 78.4h2.5M722.9 78.4h3.5M659 79.5h1.5M667 79.5h1.5M687.9 79.5h1.5M691.9 79.5h2.5M697.9 79.5h2.5M722.9 79.5h4.5M659 80.5h1.5M664 80.5h1.5M667 80.5h1.5M686.9 80.5h3.5M691.9 80.5h1.5M697.9 80.5h2.5M723.8 80.5h6.5M664 81.5h1.5M667 81.5h1.5M686.9 81.5h1.5M688.9 81.5h1.5M691.9 81.5h1.5M698.9 81.5h1.5M724.8 81.5h2.5M729.8 81.5h1.5M664 82.5h1.5M684.9 82.5h3.5M689.9 82.5h1.5M698.9 82.5h1.5M724.8 82.5h1.5"/>
<path stroke="#bababa" stroke-width="1.51" d="M658 49.1h1.5M676 49.1h1.5M695.9 49.1h1.5M714.9 49.1h2.5M741.8 49.1h1.5M676 50.1h2.5M677 51.1h1.5M727.8 53.2h1.5M726.8 54.2h2.5M726.8 55.2h3.5M727.8 56.2h2.5M727.8 57.2h2.5M658 73.4h1.5M658 74.4h1.5M678 74.4h2.5M658 75.4h1.5M678 75.4h2.5M658 76.4h1.5M678 76.4h1.5M658 77.4h1.5M658 78.4h1.5M666 78.4h1.5M665 79.5h2.5M665 80.5h2.5M659 81.5h1.5M687.9 81.5h1.5M726.8 81.5h3.5M659 82.5h1.5M667 82.5h1.5M687.9 82.5h2.5M725.8 82.5h1.5M729.8 82.5h1.5"/>
<path stroke="#cdcdcd" stroke-width="1.51" d="M677 49.1h1.5M658 79.5h1.5M658 80.5h1.5M658 81.5h1.5M665 81.5h2.5M666 82.5h1.5M726.8 82.5h3.5"/>
<path stroke="#e1e1e1" stroke-width="1.51" d="M658 82.5h1.5M665 82.5h1.5"/>
</g>
<rect x="466.4" y="46.6" width="3.2" height="38.4" fill="#000"/>
<rect x="744.8" y="48.6" width="1.8" height="34.4" fill="#fff"/>
<text transform="translate(749.00 61.00) scale(1.05 1)" font-family="'Liberation Sans', sans-serif" font-size="8.0" fill="#000" stroke="#000" stroke-width="0.18">Weighted</text>
<text transform="translate(749.00 70.00) scale(1.05 1)" font-family="'Liberation Sans', sans-serif" font-size="8.0" fill="#000" stroke="#000" stroke-width="0.18">Sum</text>
<g><rect x="469.6" y="95.6" width="90" height="36.2" fill="#6f6f6f"/>
<path stroke="#0f0f0f" stroke-width="2.51" d="M489.6 96.6h2.5M475.6 116.7h2.5M557.6 116.7h2.5M469.6 122.8h2.5M477.6 130.8h2.5"/>
<path stroke="#2f2f2f" stroke-width="2.51" d="M487.6 98.6h2.5M527.6 98.6h2.5M523.6 100.6h2.5M489.6 102.6h2.5M519.6 102.6h2.5M473.6 104.7h2.5M483.6 104.7h2.5M491.6 104.7h2.5M509.6 106.7h2.5M527.6 106.7h2.5M505.6 108.7h2.5M525.6 110.7h2.5M549.6 112.7h2.5M471.6 114.7h2.5M483.6 114.7h2.5M505.6 114.7h2.5M511.6 114.7h2.5M515.6 114.7h4.5M539.6 114.7h2.5M555.6 114.7h2.5M481.6 116.7h2.5M499.6 116.7h2.5M505.6 116.7h2.5M515.6 116.7h2.5M523.6 116.7h2.5M543.6 116.7h2.5M549.6 116.7h4.5M513.6 118.7h2.5M533.6 118.7h2.5M543.6 118.7h2.5M547.6 118.7h2.5M491.6 120.7h2.5M547.6 120.7h2.5M533.6 122.8h2.5M543.6 122.8h2.5M549.6 124.8h2.5M477.6 126.8h2.5M501.6 126.8h2.5M481.6 130.8h2.5"/>
<path stroke="#4f4f4f" stroke-width="2.51" d="M483.6 96.6h2.5M493.6 96.6h2.5M499.6 96.6h4.5M531.6 96.6h2.5M545.6 96.6h4.5M495.6 98.6h2.5M503.6 98.6h2.5M507.6 98.6h2.5M533.6 98.6h2.5M515.6 100.6h2.5M537.6 100.6h2.5M475.6 102.6h6.5M493.6 102.6h2.5M499.6 102.6h4.5M555.6 102.6h2.5M519.6 104.7h2.5M533.6 104.7h4.5M553.6 104.7h2.5M477.6 106.7h2.5M491.6 106.7h2.5M507.6 106.7h2.5M517.6 106.7h6.5M531.6 106.7h2.5M539.6 106.7h2.5M487.6 108.7h2.5M515.6 108.7h2.5M523.6 108.7h4.5M541.6 108.7h2.5M493.6 110.7h2.5M505.6 110.7h2.5M519.6 110.7h2.5M533.6 110.7h2.5M475.6 112.7h4.5M481.6 112.7h2.5M485.6 112.7h2.5M511.6 112.7h2.5M515.6 112.7h2.5M527.6 112.7h2.5M531.6 112.7h2.5M539.6 112.7h6.5M557.6 112.7h2.5M469.6 114.7h2.5M475.6 114.7h4.5M481.6 114.7h2.5M495.6 114.7h4.5M503.6 114.7h2.5M507.6 114.7h4.5M513.6 114.7h2.5M521.6 114.7h2.5M533.6 114.7h2.5M541.6 114.7h2.5M551.6 114.7h4.5M477.6 116.7h2.5M483.6 116.7h4.5M491.6 116.7h2.5M497.6 116.7h2.5M501.6 116.7h2.5M507.6 116.7h2.5M511.6 116.7h2.5M525.6 116.7h2.5M535.6 116.7h4.5M555.6 116.7h2.5M479.6 118.7h2.5M483.6 118.7h4.5M509.6 118.7h2.5M521.6 118.7h2.5M529.6 118.7h2.5M539.6 118.7h4.5M555.6 118.7h2.5M471.6 120.7h2.5M485.6 120.7h2.5M519.6 120.7h2.5M523.6 120.7h2.5M473.6 122.8h2.5M513.6 122.8h2.5M551.6 122.8h2.5M473.6 124.8h2.5M481.6 124.8h2.5M495.6 124.8h6.5M523.6 124.8h6.5M539.6 124.8h2.5M487.6 126.8h2.5M513.6 126.8h2.5M469.6 128.8h2.5M487.6 128.8h2.5M521.6 128.8h2.5M537.6 128.8h2.5M545.6 130.8h4.5M555.6 130.8h4.5"/>
<path stroke="#8f8f8f" stroke-width="2.51" d="M469.6 96.6h2.5M473.6 96.6h2.5M487.6 96.6h2.5M491.6 96.6h2.5M505.6 96.6h2.5M513.6 96.6h2.5M519.6 96.6h6.5M529.6 96.6h2.5M539.6 96.6h2.5M543.6 96.6h2.5M469.6 98.6h2.5M475.6 98.6h2.5M483.6 98.6h4.5M489.6 98.6h4.5M497.6 98.6h6.5M509.6 98.6h2.5M519.6 98.6h6.5M543.6 98.6h2.5M549.6 98.6h2.5M557.6 98.6h2.5M477.6 100.6h2.5M483.6 100.6h2.5M493.6 100.6h2.5M499.6 100.6h2.5M503.6 100.6h2.5M507.6 100.6h2.5M517.6 100.6h6.5M527.6 100.6h2.5M531.6 100.6h4.5M543.6 100.6h4.5M551.6 100.6h2.5M481.6 102.6h4.5M487.6 102.6h2.5M497.6 102.6h2.5M505.6 102.6h2.5M535.6 102.6h2.5M541.6 102.6h2.5M545.6 102.6h4.5M551.6 102.6h2.5M475.6 104.7h2.5M481.6 104.7h2.5M495.6 104.7h2.5M509.6 104.7h2.5M531.6 104.7h2.5M543.6 104.7h2.5M475.6 106.7h2.5M479.6 106.7h2.5M485.6 106.7h2.5M515.6 106.7h2.5M523.6 106.7h2.5M537.6 106.7h2.5M545.6 106.7h4.5M475.6 108.7h4.5M497.6 108.7h4.5M511.6 108.7h4.5M519.6 108.7h2.5M531.6 108.7h2.5M539.6 108.7h2.5M545.6 108.7h2.5M549.6 108.7h2.5M469.6 110.7h6.5M485.6 110.7h2.5M501.6 110.7h2.5M507.6 110.7h2.5M515.6 110.7h4.5M521.6 110.7h2.5M537.6 110.7h2.5M549.6 110.7h6.5M557.6 110.7h2.5M491.6 112.7h2.5M497.6 112.7h2.5M501.6 112.7h2.5M513.6 112.7h2.5M523.6 112.7h2.5M545.6 112.7h2.5M555.6 112.7h2.5M491.6 114.7h2.5M501.6 114.7h2.5M519.6 114.7h2.5M525.6 114.7h4.5M547.6 114.7h4.5M493.6 116.7h2.5M517.6 116.7h4.5M527.6 116.7h2.5M533.6 116.7h2.5M545.6 116.7h4.5M469.6 118.7h2.5M487.6 118.7h2.5M499.6 118.7h4.5M517.6 118.7h2.5M531.6 118.7h2.5M551.6 118.7h2.5M477.6 120.7h2.5M493.6 120.7h4.5M501.6 120.7h2.5M507.6 120.7h2.5M511.6 120.7h2.5M515.6 120.7h4.5M529.6 120.7h2.5M533.6 120.7h4.5M539.6 120.7h2.5M545.6 120.7h2.5M551.6 120.7h2.5M471.6 122.8h2.5M481.6 122.8h4.5M497.6 122.8h2.5M509.6 122.8h2.5M537.6 122.8h4.5M555.6 122.8h4.5M477.6 124.8h4.5M483.6 124.8h2.5M487.6 124.8h2.5M493.6 124.8h2.5M505.6 124.8h2.5M509.6 124.8h2.5M515.6 124.8h2.5M541.6 124.8h4.5M557.6 124.8h2.5M471.6 126.8h2.5M489.6 126.8h2.5M499.6 126.8h2.5M503.6 126.8h4.5M537.6 126.8h2.5M549.6 126.8h2.5M553.6 126.8h4.5M483.6 128.8h2.5M491.6 128.8h4.5M499.6 128.8h2.5M503.6 128.8h8.5M513.6 128.8h2.5M523.6 128.8h6.5M535.6 128.8h2.5M551.6 128.8h2.5M555.6 128.8h2.5M469.6 130.8h6.5M479.6 130.8h2.5M489.6 130.8h6.5M503.6 130.8h2.5M507.6 130.8h6.5M525.6 130.8h4.5M535.6 130.8h2.5M543.6 130.8h2.5M553.6 130.8h2.5"/>
<path stroke="#afafaf" stroke-width="2.51" d="M485.6 96.6h2.5M509.6 96.6h2.5M535.6 96.6h4.5M549.6 96.6h2.5M553.6 96.6h2.5M557.6 96.6h2.5M473.6 98.6h2.5M477.6 98.6h4.5M505.6 98.6h2.5M539.6 98.6h2.5M545.6 98.6h2.5M553.6 98.6h2.5M471.6 100.6h4.5M501.6 100.6h2.5M511.6 100.6h4.5M525.6 100.6h2.5M535.6 100.6h2.5M541.6 100.6h2.5M469.6 102.6h2.5M473.6 102.6h2.5M491.6 102.6h2.5M507.6 102.6h4.5M517.6 102.6h2.5M527.6 102.6h2.5M531.6 102.6h2.5M553.6 102.6h2.5M557.6 102.6h2.5M469.6 104.7h4.5M477.6 104.7h2.5M485.6 104.7h2.5M489.6 104.7h2.5M493.6 104.7h2.5M497.6 104.7h2.5M525.6 104.7h2.5M547.6 104.7h2.5M551.6 104.7h2.5M555.6 104.7h2.5M483.6 106.7h2.5M489.6 106.7h2.5M493.6 106.7h6.5M525.6 106.7h2.5M529.6 106.7h2.5M535.6 106.7h2.5M481.6 108.7h2.5M485.6 108.7h2.5M503.6 108.7h2.5M517.6 108.7h2.5M527.6 108.7h2.5M543.6 108.7h2.5M553.6 108.7h6.5M475.6 110.7h2.5M483.6 110.7h2.5M503.6 110.7h2.5M509.6 110.7h2.5M527.6 110.7h4.5M539.6 110.7h2.5M545.6 110.7h2.5M555.6 110.7h2.5M489.6 112.7h2.5M505.6 112.7h2.5M517.6 112.7h2.5M525.6 112.7h2.5M547.6 112.7h2.5M493.6 114.7h2.5M499.6 114.7h2.5M535.6 114.7h2.5M529.6 116.7h2.5M495.6 118.7h4.5M503.6 118.7h2.5M519.6 118.7h2.5M549.6 118.7h2.5M557.6 118.7h2.5M475.6 120.7h2.5M483.6 120.7h2.5M503.6 120.7h2.5M509.6 120.7h2.5M527.6 120.7h2.5M537.6 120.7h2.5M541.6 120.7h2.5M549.6 120.7h2.5M555.6 120.7h4.5M485.6 122.8h4.5M501.6 122.8h2.5M515.6 122.8h8.5M525.6 122.8h6.5M549.6 122.8h2.5M491.6 124.8h2.5M501.6 124.8h2.5M519.6 124.8h2.5M529.6 124.8h2.5M537.6 124.8h2.5M551.6 124.8h4.5M469.6 126.8h2.5M473.6 126.8h4.5M523.6 126.8h2.5M539.6 126.8h4.5M477.6 128.8h2.5M485.6 128.8h2.5M497.6 128.8h2.5M515.6 128.8h4.5M533.6 128.8h2.5M545.6 128.8h2.5M483.6 130.8h2.5M487.6 130.8h2.5M513.6 130.8h6.5M533.6 130.8h2.5M539.6 130.8h4.5M549.6 130.8h4.5"/>
<path stroke="#cfcfcf" stroke-width="2.51" d="M481.6 96.6h2.5M503.6 96.6h2.5M515.6 96.6h4.5M555.6 96.6h2.5M511.6 98.6h2.5M517.6 98.6h2.5M525.6 98.6h2.5M479.6 100.6h2.5M509.6 100.6h2.5M553.6 100.6h2.5M557.6 100.6h2.5M521.6 102.6h2.5M529.6 102.6h2.5M533.6 102.6h2.5M537.6 102.6h4.5M543.6 102.6h2.5M513.6 104.7h2.5M521.6 104.7h4.5M527.6 104.7h2.5M537.6 104.7h2.5M557.6 104.7h2.5M473.6 106.7h2.5M487.6 106.7h2.5M499.6 106.7h2.5M505.6 106.7h2.5M511.6 106.7h2.5M549.6 106.7h2.5M553.6 106.7h2.5M557.6 106.7h2.5M489.6 108.7h4.5M533.6 108.7h6.5M547.6 108.7h2.5M551.6 108.7h2.5M479.6 110.7h2.5M511.6 110.7h2.5M535.6 110.7h2.5M541.6 110.7h2.5M487.6 112.7h2.5M495.6 112.7h2.5M509.6 112.7h2.5M471.6 116.7h2.5M475.6 118.7h2.5M493.6 118.7h2.5M507.6 118.7h2.5M545.6 118.7h2.5M469.6 120.7h2.5M505.6 120.7h2.5M521.6 120.7h2.5M525.6 120.7h2.5M475.6 122.8h2.5M489.6 122.8h2.5M493.6 122.8h2.5M499.6 122.8h2.5M511.6 122.8h2.5M523.6 122.8h2.5M535.6 122.8h2.5M553.6 122.8h2.5M511.6 124.8h2.5M535.6 124.8h2.5M479.6 126.8h2.5M483.6 126.8h4.5M495.6 126.8h2.5M519.6 126.8h2.5M529.6 126.8h2.5M533.6 126.8h4.5M543.6 126.8h2.5M547.6 126.8h2.5M473.6 128.8h2.5M479.6 128.8h2.5M501.6 128.8h2.5M519.6 128.8h2.5M539.6 128.8h4.5M549.6 128.8h2.5M485.6 130.8h2.5M501.6 130.8h2.5M505.6 130.8h2.5M529.6 130.8h4.5"/>
<path stroke="#efefef" stroke-width="2.51" d="M477.6 96.6h2.5M497.6 96.6h2.5M507.6 96.6h2.5M527.6 96.6h2.5M471.6 98.6h2.5M551.6 98.6h2.5M491.6 100.6h2.5M505.6 100.6h2.5M503.6 104.7h2.5M515.6 104.7h2.5M541.6 104.7h2.5M549.6 104.7h2.5M541.6 106.7h2.5M473.6 108.7h2.5M479.6 108.7h2.5M489.6 110.7h2.5M499.6 110.7h2.5M479.6 120.7h2.5M487.6 120.7h2.5M497.6 120.7h2.5M477.6 122.8h2.5M531.6 122.8h2.5M489.6 124.8h2.5M531.6 124.8h2.5M547.6 124.8h2.5M481.6 126.8h2.5M511.6 126.8h2.5M521.6 126.8h2.5M475.6 128.8h2.5M523.6 130.8h2.5M537.6 130.8h2.5"/>
</g>
<rect x="563.4" y="95.6" width="90.2" height="36.2" fill="#808080"/>
<g><rect x="656.5" y="95.6" width="89" height="36.2" fill="#7f7f7f"/>
<path stroke="#090909" stroke-width="1.51" d="M670.5 96.1h2.5M670.5 97.1h2.5"/>
<path stroke="#1d1d1d" stroke-width="1.51" d="M669.5 96.1h1.5M672.5 96.1h1.5M670.5 98.1h2.5M672.5 116.2h1.5"/>
<path stroke="#313131" stroke-width="1.51" d="M656.5 96.1h1.5M669.5 97.1h1.5M672.5 97.1h1.5M669.5 98.1h1.5M672.5 98.1h1.5M670.5 99.1h2.5M737.5 112.2h1.5M737.5 113.2h2.5M672.5 114.2h1.5M703.5 114.2h2.5M737.5 114.2h1.5M671.5 115.2h3.5M702.5 115.2h4.5M671.5 116.2h1.5M673.5 116.2h1.5M702.5 116.2h4.5M671.5 117.2h3.5M702.5 117.2h3.5M672.5 118.2h2.5"/>
<path stroke="#444444" stroke-width="1.51" d="M668.5 96.1h1.5M673.5 96.1h1.5M743.5 96.1h2.5M656.5 97.1h1.5M668.5 97.1h1.5M673.5 97.1h1.5M743.5 97.1h2.5M668.5 98.1h1.5M744.5 98.1h1.5M669.5 99.1h1.5M672.5 99.1h1.5M670.5 100.1h3.5M656.5 109.2h1.5M656.5 110.2h1.5M737.5 110.2h2.5M656.5 111.2h1.5M737.5 111.2h2.5M656.5 112.2h1.5M667.5 112.2h1.5M703.5 112.2h2.5M736.5 112.2h1.5M738.5 112.2h2.5M656.5 113.2h1.5M661.5 113.2h1.5M666.5 113.2h2.5M672.5 113.2h2.5M701.5 113.2h5.5M735.5 113.2h2.5M739.5 113.2h1.5M656.5 114.2h1.5M661.5 114.2h1.5M666.5 114.2h2.5M671.5 114.2h1.5M673.5 114.2h1.5M696.5 114.2h2.5M700.5 114.2h3.5M705.5 114.2h2.5M734.5 114.2h3.5M738.5 114.2h2.5M744.5 114.2h1.5M656.5 115.2h1.5M661.5 115.2h1.5M670.5 115.2h1.5M674.5 115.2h1.5M696.5 115.2h6.5M706.5 115.2h1.5M733.5 115.2h7.5M744.5 115.2h1.5M670.5 116.2h1.5M674.5 116.2h1.5M696.5 116.2h6.5M706.5 116.2h1.5M733.5 116.2h7.5M744.5 116.2h1.5M670.5 117.2h1.5M674.5 117.2h1.5M697.5 117.2h5.5M705.5 117.2h2.5M734.5 117.2h3.5M744.5 117.2h1.5M671.5 118.2h1.5M697.5 118.2h9.5M734.5 118.2h2.5M744.5 118.2h1.5M671.5 119.2h3.5M701.5 119.2h4.5M672.5 120.2h2.5M666.5 129.3h2.5M666.5 130.3h2.5M666.5 131.3h3.5M697.5 131.3h1.5"/>
<path stroke="#585858" stroke-width="1.51" d="M657.5 96.1h1.5M667.5 96.1h1.5M689.5 96.1h3.5M701.5 96.1h2.5M732.5 96.1h1.5M742.5 96.1h1.5M657.5 97.1h1.5M667.5 97.1h1.5M690.5 97.1h2.5M701.5 97.1h3.5M742.5 97.1h1.5M656.5 98.1h1.5M667.5 98.1h1.5M673.5 98.1h1.5M701.5 98.1h3.5M743.5 98.1h1.5M656.5 99.1h1.5M668.5 99.1h1.5M673.5 99.1h1.5M701.5 99.1h6.5M743.5 99.1h2.5M668.5 100.1h2.5M673.5 100.1h1.5M701.5 100.1h7.5M743.5 100.1h2.5M670.5 101.1h4.5M702.5 101.1h2.5M705.5 101.1h3.5M744.5 101.1h1.5M671.5 102.1h3.5M705.5 102.1h3.5M744.5 102.1h1.5M672.5 103.1h1.5M705.5 103.1h3.5M744.5 103.1h1.5M706.5 104.1h1.5M744.5 104.1h1.5M744.5 105.2h1.5M656.5 107.2h1.5M684.5 107.2h1.5M656.5 108.2h1.5M683.5 108.2h2.5M737.5 108.2h1.5M657.5 109.2h1.5M678.5 109.2h1.5M683.5 109.2h2.5M692.5 109.2h1.5M736.5 109.2h3.5M657.5 110.2h1.5M666.5 110.2h2.5M678.5 110.2h2.5M683.5 110.2h2.5M691.5 110.2h3.5M736.5 110.2h1.5M739.5 110.2h1.5M657.5 111.2h1.5M661.5 111.2h1.5M666.5 111.2h3.5M678.5 111.2h2.5M683.5 111.2h3.5M691.5 111.2h6.5M702.5 111.2h3.5M721.5 111.2h2.5M736.5 111.2h1.5M739.5 111.2h2.5M657.5 112.2h1.5M660.5 112.2h3.5M665.5 112.2h2.5M668.5 112.2h1.5M672.5 112.2h2.5M677.5 112.2h3.5M684.5 112.2h1.5M691.5 112.2h7.5M700.5 112.2h3.5M705.5 112.2h1.5M715.5 112.2h1.5M721.5 112.2h3.5M735.5 112.2h1.5M740.5 112.2h5.5M657.5 113.2h1.5M660.5 113.2h1.5M662.5 113.2h4.5M668.5 113.2h4.5M677.5 113.2h3.5M691.5 113.2h10.5M706.5 113.2h2.5M715.5 113.2h1.5M721.5 113.2h3.5M732.5 113.2h3.5M740.5 113.2h5.5M657.5 114.2h1.5M660.5 114.2h1.5M662.5 114.2h4.5M668.5 114.2h3.5M674.5 114.2h1.5M677.5 114.2h3.5M691.5 114.2h5.5M698.5 114.2h2.5M707.5 114.2h2.5M714.5 114.2h3.5M721.5 114.2h3.5M731.5 114.2h3.5M740.5 114.2h4.5M657.5 115.2h1.5M659.5 115.2h2.5M662.5 115.2h8.5M675.5 115.2h1.5M677.5 115.2h2.5M691.5 115.2h5.5M707.5 115.2h2.5M714.5 115.2h3.5M722.5 115.2h3.5M732.5 115.2h1.5M740.5 115.2h4.5M656.5 116.2h2.5M660.5 116.2h10.5M675.5 116.2h1.5M691.5 116.2h3.5M695.5 116.2h1.5M707.5 116.2h1.5M714.5 116.2h3.5M722.5 116.2h3.5M732.5 116.2h1.5M740.5 116.2h2.5M743.5 116.2h1.5M656.5 117.2h2.5M660.5 117.2h2.5M664.5 117.2h3.5M669.5 117.2h1.5M675.5 117.2h1.5M690.5 117.2h3.5M696.5 117.2h1.5M707.5 117.2h1.5M715.5 117.2h2.5M733.5 117.2h1.5M737.5 117.2h4.5M743.5 117.2h1.5M656.5 118.2h2.5M665.5 118.2h1.5M670.5 118.2h1.5M674.5 118.2h1.5M690.5 118.2h3.5M696.5 118.2h1.5M706.5 118.2h2.5M733.5 118.2h1.5M736.5 118.2h5.5M656.5 119.2h1.5M670.5 119.2h1.5M674.5 119.2h1.5M689.5 119.2h4.5M697.5 119.2h4.5M705.5 119.2h2.5M734.5 119.2h2.5M738.5 119.2h3.5M744.5 119.2h1.5M656.5 120.2h1.5M671.5 120.2h1.5M674.5 120.2h1.5M688.5 120.2h5.5M697.5 120.2h9.5M734.5 120.2h1.5M739.5 120.2h2.5M744.5 120.2h1.5M671.5 121.2h4.5M688.5 121.2h5.5M739.5 121.2h2.5M672.5 122.2h3.5M688.5 122.2h5.5M739.5 122.2h1.5M673.5 123.3h1.5M680.5 123.3h1.5M688.5 123.3h5.5M680.5 124.3h1.5M689.5 124.3h4.5M689.5 125.3h3.5M690.5 126.3h2.5M666.5 127.3h2.5M690.5 127.3h2.5M665.5 128.3h4.5M690.5 128.3h2.5M665.5 129.3h1.5M668.5 129.3h1.5M690.5 129.3h2.5M665.5 130.3h1.5M668.5 130.3h1.5M690.5 130.3h1.5M697.5 130.3h2.5M665.5 131.3h1.5M690.5 131.3h1.5M696.5 131.3h1.5M698.5 131.3h1.5M726.5 131.3h3.5"/>
<path stroke="#6b6b6b" stroke-width="1.51" d="M674.5 96.1h1.5M692.5 96.1h1.5M700.5 96.1h1.5M703.5 96.1h4.5M719.5 96.1h4.5M731.5 96.1h1.5M733.5 96.1h1.5M674.5 97.1h1.5M689.5 97.1h1.5M692.5 97.1h1.5M700.5 97.1h1.5M704.5 97.1h4.5M720.5 97.1h3.5M731.5 97.1h3.5M657.5 98.1h1.5M666.5 98.1h1.5M674.5 98.1h1.5M689.5 98.1h3.5M700.5 98.1h1.5M704.5 98.1h4.5M721.5 98.1h2.5M732.5 98.1h1.5M742.5 98.1h1.5M657.5 99.1h1.5M666.5 99.1h2.5M674.5 99.1h1.5M689.5 99.1h3.5M699.5 99.1h2.5M707.5 99.1h1.5M722.5 99.1h1.5M742.5 99.1h1.5M656.5 100.1h2.5M667.5 100.1h1.5M674.5 100.1h1.5M689.5 100.1h2.5M699.5 100.1h2.5M708.5 100.1h1.5M713.5 100.1h1.5M656.5 101.1h1.5M667.5 101.1h3.5M674.5 101.1h1.5M689.5 101.1h1.5M698.5 101.1h4.5M704.5 101.1h1.5M708.5 101.1h1.5M712.5 101.1h2.5M743.5 101.1h1.5M656.5 102.1h1.5M667.5 102.1h4.5M689.5 102.1h1.5M698.5 102.1h7.5M708.5 102.1h1.5M712.5 102.1h2.5M743.5 102.1h1.5M656.5 103.1h1.5M671.5 103.1h1.5M673.5 103.1h1.5M689.5 103.1h1.5M698.5 103.1h7.5M712.5 103.1h2.5M743.5 103.1h1.5M656.5 104.1h1.5M671.5 104.1h3.5M689.5 104.1h1.5M698.5 104.1h4.5M703.5 104.1h3.5M707.5 104.1h1.5M713.5 104.1h1.5M743.5 104.1h1.5M656.5 105.2h1.5M672.5 105.2h1.5M689.5 105.2h2.5M704.5 105.2h4.5M713.5 105.2h2.5M743.5 105.2h1.5M656.5 106.2h2.5M678.5 106.2h2.5M683.5 106.2h2.5M689.5 106.2h4.5M705.5 106.2h2.5M713.5 106.2h2.5M743.5 106.2h2.5M657.5 107.2h1.5M667.5 107.2h1.5M678.5 107.2h2.5M682.5 107.2h2.5M685.5 107.2h1.5M690.5 107.2h3.5M714.5 107.2h1.5M736.5 107.2h3.5M743.5 107.2h2.5M657.5 108.2h1.5M667.5 108.2h1.5M677.5 108.2h4.5M682.5 108.2h1.5M685.5 108.2h1.5M690.5 108.2h4.5M704.5 108.2h1.5M714.5 108.2h1.5M736.5 108.2h1.5M738.5 108.2h2.5M743.5 108.2h2.5M666.5 109.2h3.5M677.5 109.2h1.5M679.5 109.2h2.5M682.5 109.2h1.5M685.5 109.2h1.5M690.5 109.2h2.5M693.5 109.2h2.5M701.5 109.2h4.5M714.5 109.2h1.5M721.5 109.2h2.5M739.5 109.2h2.5M742.5 109.2h3.5M658.5 110.2h1.5M660.5 110.2h3.5M668.5 110.2h1.5M677.5 110.2h1.5M680.5 110.2h3.5M685.5 110.2h1.5M690.5 110.2h1.5M694.5 110.2h4.5M700.5 110.2h6.5M714.5 110.2h2.5M720.5 110.2h4.5M730.5 110.2h2.5M735.5 110.2h1.5M740.5 110.2h5.5M658.5 111.2h3.5M662.5 111.2h4.5M669.5 111.2h1.5M672.5 111.2h2.5M677.5 111.2h1.5M680.5 111.2h3.5M690.5 111.2h1.5M697.5 111.2h5.5M705.5 111.2h4.5M714.5 111.2h3.5M720.5 111.2h1.5M723.5 111.2h1.5M729.5 111.2h7.5M741.5 111.2h4.5M658.5 112.2h2.5M663.5 112.2h2.5M669.5 112.2h3.5M674.5 112.2h1.5M676.5 112.2h1.5M680.5 112.2h4.5M685.5 112.2h1.5M690.5 112.2h1.5M698.5 112.2h2.5M706.5 112.2h4.5M714.5 112.2h1.5M716.5 112.2h1.5M719.5 112.2h2.5M724.5 112.2h1.5M728.5 112.2h7.5M658.5 113.2h2.5M674.5 113.2h3.5M680.5 113.2h1.5M682.5 113.2h5.5M690.5 113.2h1.5M708.5 113.2h2.5M714.5 113.2h1.5M716.5 113.2h5.5M724.5 113.2h2.5M727.5 113.2h5.5M658.5 114.2h2.5M675.5 114.2h2.5M680.5 114.2h1.5M683.5 114.2h4.5M690.5 114.2h1.5M709.5 114.2h1.5M713.5 114.2h1.5M717.5 114.2h4.5M724.5 114.2h7.5M658.5 115.2h1.5M676.5 115.2h1.5M679.5 115.2h2.5M684.5 115.2h3.5M689.5 115.2h2.5M709.5 115.2h1.5M713.5 115.2h1.5M717.5 115.2h5.5M725.5 115.2h7.5M658.5 116.2h2.5M676.5 116.2h5.5M685.5 116.2h6.5M694.5 116.2h1.5M708.5 116.2h2.5M713.5 116.2h1.5M717.5 116.2h2.5M720.5 116.2h2.5M725.5 116.2h7.5M742.5 116.2h1.5M658.5 117.2h2.5M662.5 117.2h2.5M667.5 117.2h2.5M676.5 117.2h5.5M686.5 117.2h4.5M693.5 117.2h3.5M708.5 117.2h1.5M713.5 117.2h2.5M717.5 117.2h1.5M721.5 117.2h9.5M731.5 117.2h2.5M741.5 117.2h2.5M658.5 118.2h7.5M666.5 118.2h4.5M675.5 118.2h6.5M686.5 118.2h4.5M693.5 118.2h3.5M708.5 118.2h1.5M714.5 118.2h4.5M721.5 118.2h6.5M732.5 118.2h1.5M741.5 118.2h3.5M657.5 119.2h4.5M664.5 119.2h3.5M669.5 119.2h1.5M675.5 119.2h6.5M686.5 119.2h3.5M693.5 119.2h1.5M695.5 119.2h2.5M707.5 119.2h1.5M715.5 119.2h3.5M722.5 119.2h5.5M733.5 119.2h1.5M736.5 119.2h2.5M741.5 119.2h1.5M743.5 119.2h1.5M657.5 120.2h2.5M664.5 120.2h2.5M670.5 120.2h1.5M675.5 120.2h7.5M687.5 120.2h1.5M693.5 120.2h1.5M696.5 120.2h1.5M706.5 120.2h2.5M722.5 120.2h5.5M733.5 120.2h1.5M735.5 120.2h4.5M741.5 120.2h1.5M656.5 121.2h3.5M664.5 121.2h2.5M670.5 121.2h1.5M675.5 121.2h2.5M678.5 121.2h4.5M687.5 121.2h1.5M693.5 121.2h1.5M696.5 121.2h11.5M734.5 121.2h2.5M738.5 121.2h1.5M741.5 121.2h1.5M744.5 121.2h1.5M656.5 122.2h2.5M665.5 122.2h1.5M671.5 122.2h1.5M675.5 122.2h2.5M678.5 122.2h4.5M687.5 122.2h1.5M693.5 122.2h1.5M696.5 122.2h10.5M734.5 122.2h1.5M738.5 122.2h1.5M740.5 122.2h1.5M744.5 122.2h1.5M656.5 123.3h2.5M665.5 123.3h1.5M671.5 123.3h2.5M674.5 123.3h2.5M678.5 123.3h2.5M681.5 123.3h1.5M687.5 123.3h1.5M693.5 123.3h1.5M697.5 123.3h1.5M738.5 123.3h3.5M656.5 124.3h1.5M665.5 124.3h2.5M671.5 124.3h5.5M679.5 124.3h1.5M681.5 124.3h1.5M687.5 124.3h2.5M693.5 124.3h1.5M739.5 124.3h2.5M665.5 125.3h4.5M672.5 125.3h4.5M679.5 125.3h3.5M688.5 125.3h1.5M692.5 125.3h2.5M739.5 125.3h1.5M665.5 126.3h5.5M679.5 126.3h3.5M688.5 126.3h2.5M692.5 126.3h1.5M664.5 127.3h2.5M668.5 127.3h2.5M679.5 127.3h2.5M689.5 127.3h1.5M692.5 127.3h1.5M697.5 127.3h2.5M664.5 128.3h1.5M669.5 128.3h1.5M680.5 128.3h1.5M689.5 128.3h1.5M692.5 128.3h1.5M697.5 128.3h2.5M728.5 128.3h1.5M664.5 129.3h1.5M669.5 129.3h1.5M680.5 129.3h1.5M689.5 129.3h1.5M696.5 129.3h4.5M727.5 129.3h3.5M664.5 130.3h1.5M669.5 130.3h1.5M679.5 130.3h2.5M689.5 130.3h1.5M691.5 130.3h1.5M696.5 130.3h1.5M699.5 130.3h1.5M726.5 130.3h4.5M657.5 131.3h1.5M664.5 131.3h1.5M669.5 131.3h1.5M679.5 131.3h2.5M689.5 131.3h1.5M691.5 131.3h1.5M695.5 131.3h1.5M699.5 131.3h1.5M725.5 131.3h1.5M729.5 131.3h1.5"/>
<path stroke="#939393" stroke-width="1.51" d="M675.5 96.1h1.5M681.5 96.1h2.5M693.5 96.1h1.5M709.5 96.1h3.5M714.5 96.1h3.5M724.5 96.1h4.5M729.5 96.1h1.5M734.5 96.1h4.5M665.5 97.1h1.5M681.5 97.1h2.5M693.5 97.1h1.5M698.5 97.1h1.5M709.5 97.1h3.5M714.5 97.1h3.5M724.5 97.1h2.5M730.5 97.1h1.5M734.5 97.1h4.5M659.5 98.1h1.5M665.5 98.1h1.5M680.5 98.1h3.5M687.5 98.1h1.5M693.5 98.1h1.5M698.5 98.1h1.5M709.5 98.1h3.5M714.5 98.1h2.5M724.5 98.1h2.5M730.5 98.1h1.5M734.5 98.1h4.5M741.5 98.1h1.5M659.5 99.1h1.5M676.5 99.1h1.5M679.5 99.1h4.5M687.5 99.1h1.5M697.5 99.1h1.5M709.5 99.1h2.5M715.5 99.1h1.5M724.5 99.1h2.5M730.5 99.1h1.5M734.5 99.1h3.5M741.5 99.1h1.5M659.5 100.1h1.5M664.5 100.1h1.5M676.5 100.1h1.5M678.5 100.1h5.5M687.5 100.1h1.5M697.5 100.1h1.5M709.5 100.1h2.5M715.5 100.1h1.5M718.5 100.1h2.5M724.5 100.1h2.5M730.5 100.1h2.5M733.5 100.1h4.5M741.5 100.1h1.5M659.5 101.1h2.5M664.5 101.1h1.5M676.5 101.1h8.5M687.5 101.1h1.5M709.5 101.1h2.5M717.5 101.1h4.5M724.5 101.1h2.5M730.5 101.1h7.5M741.5 101.1h1.5M658.5 102.1h4.5M664.5 102.1h2.5M675.5 102.1h9.5M686.5 102.1h1.5M696.5 102.1h1.5M709.5 102.1h2.5M716.5 102.1h2.5M720.5 102.1h1.5M723.5 102.1h2.5M730.5 102.1h8.5M740.5 102.1h2.5M658.5 103.1h4.5M665.5 103.1h1.5M675.5 103.1h3.5M683.5 103.1h4.5M693.5 103.1h1.5M696.5 103.1h1.5M709.5 103.1h3.5M716.5 103.1h1.5M720.5 103.1h5.5M730.5 103.1h8.5M740.5 103.1h1.5M658.5 104.1h4.5M665.5 104.1h1.5M675.5 104.1h2.5M685.5 104.1h3.5M693.5 104.1h1.5M696.5 104.1h1.5M709.5 104.1h3.5M716.5 104.1h1.5M721.5 104.1h4.5M729.5 104.1h6.5M737.5 104.1h4.5M659.5 105.2h4.5M665.5 105.2h1.5M669.5 105.2h1.5M674.5 105.2h1.5M676.5 105.2h1.5M686.5 105.2h2.5M693.5 105.2h1.5M696.5 105.2h1.5M709.5 105.2h3.5M716.5 105.2h1.5M721.5 105.2h3.5M729.5 105.2h6.5M738.5 105.2h3.5M659.5 106.2h4.5M669.5 106.2h2.5M674.5 106.2h1.5M676.5 106.2h1.5M686.5 106.2h2.5M694.5 106.2h3.5M709.5 106.2h3.5M716.5 106.2h1.5M720.5 106.2h4.5M729.5 106.2h6.5M659.5 107.2h4.5M665.5 107.2h1.5M669.5 107.2h3.5M673.5 107.2h1.5M676.5 107.2h1.5M686.5 107.2h2.5M694.5 107.2h2.5M709.5 107.2h3.5M716.5 107.2h1.5M720.5 107.2h1.5M723.5 107.2h2.5M728.5 107.2h2.5M732.5 107.2h3.5M662.5 108.2h2.5M665.5 108.2h1.5M670.5 108.2h2.5M673.5 108.2h1.5M676.5 108.2h1.5M687.5 108.2h2.5M709.5 108.2h4.5M716.5 108.2h1.5M720.5 108.2h1.5M724.5 108.2h6.5M733.5 108.2h2.5M663.5 109.2h2.5M670.5 109.2h2.5M674.5 109.2h1.5M676.5 109.2h1.5M687.5 109.2h2.5M710.5 109.2h3.5M716.5 109.2h2.5M719.5 109.2h1.5M724.5 109.2h5.5M733.5 109.2h2.5M670.5 110.2h1.5M674.5 110.2h2.5M687.5 110.2h2.5M710.5 110.2h3.5M717.5 110.2h2.5M725.5 110.2h2.5M675.5 111.2h1.5M687.5 111.2h2.5M711.5 111.2h2.5M687.5 112.2h2.5M711.5 112.2h2.5M710.5 118.2h1.5M684.5 119.2h1.5M710.5 119.2h2.5M719.5 119.2h1.5M730.5 119.2h2.5M662.5 120.2h1.5M683.5 120.2h3.5M709.5 120.2h4.5M718.5 120.2h2.5M729.5 120.2h1.5M731.5 120.2h1.5M661.5 121.2h2.5M683.5 121.2h3.5M709.5 121.2h1.5M711.5 121.2h5.5M718.5 121.2h2.5M729.5 121.2h1.5M732.5 121.2h1.5M660.5 122.2h4.5M683.5 122.2h1.5M685.5 122.2h1.5M708.5 122.2h2.5M712.5 122.2h4.5M718.5 122.2h2.5M729.5 122.2h1.5M732.5 122.2h1.5M660.5 123.3h4.5M683.5 123.3h1.5M685.5 123.3h1.5M708.5 123.3h2.5M712.5 123.3h4.5M718.5 123.3h2.5M729.5 123.3h1.5M732.5 123.3h1.5M736.5 123.3h2.5M742.5 123.3h2.5M659.5 124.3h2.5M662.5 124.3h2.5M683.5 124.3h1.5M708.5 124.3h1.5M712.5 124.3h5.5M718.5 124.3h2.5M723.5 124.3h2.5M729.5 124.3h2.5M732.5 124.3h1.5M735.5 124.3h3.5M742.5 124.3h2.5M659.5 125.3h2.5M662.5 125.3h2.5M686.5 125.3h1.5M708.5 125.3h1.5M712.5 125.3h8.5M722.5 125.3h4.5M730.5 125.3h6.5M737.5 125.3h1.5M741.5 125.3h4.5M659.5 126.3h1.5M662.5 126.3h1.5M682.5 126.3h1.5M686.5 126.3h1.5M701.5 126.3h2.5M708.5 126.3h1.5M712.5 126.3h1.5M714.5 126.3h6.5M722.5 126.3h5.5M730.5 126.3h5.5M738.5 126.3h1.5M741.5 126.3h1.5M743.5 126.3h2.5M659.5 127.3h1.5M662.5 127.3h1.5M682.5 127.3h1.5M687.5 127.3h1.5M700.5 127.3h4.5M708.5 127.3h1.5M712.5 127.3h1.5M714.5 127.3h6.5M722.5 127.3h1.5M724.5 127.3h2.5M732.5 127.3h2.5M738.5 127.3h4.5M744.5 127.3h1.5M659.5 128.3h1.5M671.5 128.3h3.5M687.5 128.3h1.5M700.5 128.3h4.5M708.5 128.3h1.5M711.5 128.3h2.5M715.5 128.3h8.5M724.5 128.3h2.5M732.5 128.3h2.5M739.5 128.3h1.5M744.5 128.3h1.5M659.5 129.3h1.5M671.5 129.3h4.5M701.5 129.3h4.5M707.5 129.3h1.5M711.5 129.3h2.5M716.5 129.3h2.5M719.5 129.3h3.5M724.5 129.3h1.5M732.5 129.3h1.5M744.5 129.3h1.5M659.5 130.3h1.5M671.5 130.3h1.5M674.5 130.3h1.5M688.5 130.3h1.5M693.5 130.3h1.5M701.5 130.3h7.5M711.5 130.3h2.5M716.5 130.3h2.5M720.5 130.3h2.5M724.5 130.3h1.5M731.5 130.3h2.5M744.5 130.3h1.5M659.5 131.3h1.5M670.5 131.3h1.5M674.5 131.3h1.5M688.5 131.3h1.5M693.5 131.3h1.5M701.5 131.3h6.5M711.5 131.3h2.5M716.5 131.3h1.5M721.5 131.3h1.5M723.5 131.3h2.5M731.5 131.3h1.5M744.5 131.3h1.5"/>
<path stroke="#a6a6a6" stroke-width="1.51" d="M659.5 96.1h1.5M665.5 96.1h1.5M676.5 96.1h1.5M679.5 96.1h2.5M683.5 96.1h1.5M687.5 96.1h1.5M698.5 96.1h1.5M728.5 96.1h1.5M738.5 96.1h1.5M740.5 96.1h1.5M659.5 97.1h1.5M676.5 97.1h1.5M678.5 97.1h3.5M683.5 97.1h1.5M687.5 97.1h1.5M726.5 97.1h4.5M738.5 97.1h1.5M740.5 97.1h1.5M660.5 98.1h1.5M664.5 98.1h1.5M676.5 98.1h4.5M683.5 98.1h1.5M697.5 98.1h1.5M726.5 98.1h4.5M738.5 98.1h1.5M740.5 98.1h1.5M660.5 99.1h1.5M664.5 99.1h1.5M677.5 99.1h2.5M683.5 99.1h1.5M686.5 99.1h1.5M693.5 99.1h1.5M726.5 99.1h4.5M737.5 99.1h1.5M740.5 99.1h1.5M660.5 100.1h4.5M677.5 100.1h1.5M683.5 100.1h2.5M686.5 100.1h1.5M693.5 100.1h1.5M696.5 100.1h1.5M726.5 100.1h4.5M737.5 100.1h1.5M740.5 100.1h1.5M661.5 101.1h3.5M684.5 101.1h3.5M693.5 101.1h1.5M696.5 101.1h1.5M726.5 101.1h4.5M737.5 101.1h4.5M662.5 102.1h2.5M684.5 102.1h2.5M693.5 102.1h1.5M718.5 102.1h2.5M725.5 102.1h5.5M738.5 102.1h2.5M662.5 103.1h3.5M694.5 103.1h2.5M717.5 103.1h3.5M725.5 103.1h5.5M738.5 103.1h2.5M662.5 104.1h3.5M694.5 104.1h2.5M717.5 104.1h1.5M720.5 104.1h1.5M725.5 104.1h4.5M663.5 105.2h2.5M675.5 105.2h1.5M694.5 105.2h2.5M720.5 105.2h1.5M724.5 105.2h5.5M663.5 106.2h3.5M675.5 106.2h1.5M724.5 106.2h5.5M663.5 107.2h2.5M674.5 107.2h2.5M717.5 107.2h1.5M719.5 107.2h1.5M725.5 107.2h3.5M664.5 108.2h1.5M674.5 108.2h2.5M717.5 108.2h3.5M675.5 109.2h1.5M718.5 109.2h1.5M730.5 120.2h1.5M710.5 121.2h1.5M730.5 121.2h2.5M684.5 122.2h1.5M710.5 122.2h2.5M730.5 122.2h2.5M684.5 123.3h1.5M710.5 123.3h2.5M730.5 123.3h2.5M661.5 124.3h1.5M684.5 124.3h2.5M709.5 124.3h3.5M731.5 124.3h1.5M661.5 125.3h1.5M683.5 125.3h3.5M709.5 125.3h3.5M736.5 125.3h1.5M660.5 126.3h2.5M683.5 126.3h1.5M685.5 126.3h1.5M709.5 126.3h3.5M735.5 126.3h3.5M742.5 126.3h1.5M660.5 127.3h2.5M686.5 127.3h1.5M709.5 127.3h3.5M723.5 127.3h1.5M734.5 127.3h1.5M737.5 127.3h1.5M742.5 127.3h2.5M660.5 128.3h3.5M682.5 128.3h1.5M686.5 128.3h1.5M709.5 128.3h2.5M723.5 128.3h1.5M734.5 128.3h1.5M737.5 128.3h2.5M740.5 128.3h4.5M660.5 129.3h1.5M662.5 129.3h1.5M682.5 129.3h1.5M687.5 129.3h1.5M708.5 129.3h3.5M718.5 129.3h1.5M722.5 129.3h2.5M733.5 129.3h1.5M737.5 129.3h4.5M743.5 129.3h1.5M662.5 130.3h1.5M672.5 130.3h2.5M708.5 130.3h3.5M718.5 130.3h2.5M722.5 130.3h2.5M733.5 130.3h1.5M738.5 130.3h1.5M743.5 130.3h1.5M662.5 131.3h1.5M671.5 131.3h3.5M707.5 131.3h2.5M710.5 131.3h1.5M717.5 131.3h4.5M722.5 131.3h1.5M732.5 131.3h1.5M743.5 131.3h1.5"/>
<path stroke="#bababa" stroke-width="1.51" d="M660.5 96.1h1.5M677.5 96.1h2.5M684.5 96.1h3.5M694.5 96.1h1.5M697.5 96.1h1.5M739.5 96.1h1.5M660.5 97.1h1.5M664.5 97.1h1.5M677.5 97.1h1.5M684.5 97.1h3.5M697.5 97.1h1.5M739.5 97.1h1.5M661.5 98.1h1.5M684.5 98.1h3.5M696.5 98.1h1.5M739.5 98.1h1.5M661.5 99.1h3.5M684.5 99.1h2.5M696.5 99.1h1.5M738.5 99.1h2.5M685.5 100.1h1.5M694.5 100.1h1.5M738.5 100.1h2.5M694.5 101.1h2.5M694.5 102.1h2.5M718.5 104.1h2.5M717.5 105.2h3.5M717.5 106.2h3.5M718.5 107.2h1.5M684.5 126.3h1.5M683.5 127.3h3.5M735.5 127.3h2.5M683.5 128.3h1.5M685.5 128.3h1.5M735.5 128.3h2.5M661.5 129.3h1.5M686.5 129.3h1.5M734.5 129.3h3.5M741.5 129.3h2.5M660.5 130.3h2.5M682.5 130.3h1.5M687.5 130.3h1.5M734.5 130.3h1.5M736.5 130.3h2.5M739.5 130.3h4.5M660.5 131.3h1.5M682.5 131.3h1.5M709.5 131.3h1.5M733.5 131.3h1.5M736.5 131.3h5.5M742.5 131.3h1.5"/>
<path stroke="#cdcdcd" stroke-width="1.51" d="M664.5 96.1h1.5M661.5 97.1h1.5M694.5 97.1h1.5M696.5 97.1h1.5M662.5 98.1h2.5M694.5 98.1h2.5M694.5 99.1h2.5M695.5 100.1h1.5M684.5 128.3h1.5M683.5 129.3h3.5M683.5 130.3h4.5M735.5 130.3h1.5M661.5 131.3h1.5M683.5 131.3h3.5M687.5 131.3h1.5M734.5 131.3h2.5M741.5 131.3h1.5"/>
<path stroke="#e1e1e1" stroke-width="1.51" d="M661.5 96.1h1.5M695.5 96.1h2.5M662.5 97.1h2.5M695.5 97.1h1.5M686.5 131.3h1.5"/>
<path stroke="#f5f5f5" stroke-width="1.51" d="M662.5 96.1h2.5"/>
</g>
<rect x="467.4" y="95.0" width="280.4" height="37.4" fill="none" stroke="#0000ff" stroke-width="1.7"/>
<rect x="466.5" y="94.2" width="2.4" height="39.0" fill="#0000ff"/>
<text transform="translate(446.00 106.00) scale(1.05 1)" font-family="'Liberation Sans', sans-serif" font-size="8.4" fill="#000" stroke="#000" stroke-width="0.18">0.20</text>
<text transform="translate(446.00 114.40) scale(1.05 1)" font-family="'Liberation Sans', sans-serif" font-size="8.4" fill="#000" stroke="#000" stroke-width="0.18">2.11</text>
<text transform="translate(446.00 122.80) scale(1.05 1)" font-family="'Liberation Sans', sans-serif" font-size="8.4" fill="#000" stroke="#000" stroke-width="0.18">203</text>
<text transform="translate(750.30 100.00) scale(1.05 1)" font-family="'Liberation Sans', sans-serif" font-size="5.9" fill="#000" stroke="#000" stroke-width="0.18">0.67"</text>
<text transform="translate(750.30 107.20) scale(1.05 1)" font-family="'Liberation Sans', sans-serif" font-size="5.9" fill="#000" stroke="#000" stroke-width="0.18">(246, 212)</text>
<text transform="translate(750.30 115.20) scale(1.05 1)" font-family="'Liberation Sans', sans-serif" font-size="5.9" fill="#000" stroke="#000" stroke-width="0.18">20220619</text>
<text transform="translate(750.30 122.40) scale(1.05 1)" font-family="'Liberation Sans', sans-serif" font-size="5.9" fill="#000" stroke="#000" stroke-width="0.18">v013_03</text>
<text transform="translate(750.30 129.60) scale(1.05 1)" font-family="'Liberation Sans', sans-serif" font-size="5.9" fill="#000" stroke="#000" stroke-width="0.18">421_LL_022</text>
<g><rect x="469.6" y="135" width="90" height="36.2" fill="#8f8f8f"/>
<path stroke="#0f0f0f" stroke-width="2.51" d="M473.6 154.1h2.5M477.6 154.1h2.5M531.6 154.1h2.5M509.6 156.1h2.5M483.6 160.1h2.5M523.6 160.1h2.5M523.6 168.2h2.5"/>
<path stroke="#2f2f2f" stroke-width="2.51" d="M501.6 136h2.5M535.6 136h2.5M505.6 138h2.5M557.6 138h2.5M497.6 140h2.5M545.6 140h2.5M479.6 144.1h2.5M487.6 144.1h2.5M501.6 144.1h2.5M541.6 144.1h2.5M475.6 146.1h2.5M493.6 146.1h2.5M553.6 146.1h2.5M485.6 148.1h2.5M489.6 148.1h2.5M525.6 148.1h2.5M531.6 148.1h2.5M481.6 150.1h2.5M485.6 150.1h2.5M511.6 150.1h2.5M495.6 152.1h2.5M541.6 152.1h2.5M549.6 152.1h2.5M507.6 154.1h2.5M541.6 154.1h2.5M551.6 154.1h2.5M477.6 156.1h2.5M487.6 156.1h2.5M523.6 156.1h2.5M527.6 156.1h2.5M553.6 156.1h2.5M511.6 158.1h2.5M519.6 158.1h2.5M531.6 158.1h2.5M551.6 158.1h2.5M557.6 158.1h2.5M469.6 160.1h2.5M549.6 160.1h2.5M487.6 162.2h2.5M515.6 162.2h2.5M555.6 162.2h2.5M491.6 164.2h2.5M529.6 166.2h2.5M477.6 168.2h2.5M489.6 168.2h2.5M531.6 168.2h2.5"/>
<path stroke="#4f4f4f" stroke-width="2.51" d="M515.6 136h2.5M527.6 136h2.5M547.6 136h2.5M483.6 138h2.5M515.6 138h2.5M529.6 138h4.5M471.6 140h2.5M493.6 142h2.5M509.6 142h2.5M483.6 144.1h2.5M491.6 144.1h2.5M495.6 144.1h2.5M531.6 144.1h2.5M547.6 144.1h2.5M557.6 144.1h2.5M501.6 146.1h2.5M551.6 146.1h2.5M471.6 148.1h2.5M545.6 148.1h2.5M557.6 148.1h2.5M473.6 150.1h2.5M483.6 150.1h2.5M495.6 150.1h2.5M509.6 150.1h2.5M529.6 150.1h2.5M535.6 150.1h4.5M551.6 150.1h2.5M487.6 152.1h2.5M491.6 152.1h2.5M503.6 152.1h2.5M515.6 152.1h2.5M521.6 152.1h2.5M533.6 152.1h2.5M543.6 152.1h4.5M555.6 152.1h4.5M469.6 154.1h2.5M475.6 154.1h2.5M479.6 154.1h2.5M483.6 154.1h2.5M487.6 154.1h2.5M495.6 154.1h4.5M503.6 154.1h2.5M511.6 154.1h2.5M515.6 154.1h2.5M519.6 154.1h2.5M535.6 154.1h2.5M539.6 154.1h2.5M543.6 154.1h2.5M549.6 154.1h2.5M555.6 154.1h2.5M471.6 156.1h2.5M481.6 156.1h2.5M485.6 156.1h2.5M501.6 156.1h8.5M513.6 156.1h2.5M519.6 156.1h2.5M525.6 156.1h2.5M533.6 156.1h2.5M543.6 156.1h4.5M551.6 156.1h2.5M557.6 156.1h2.5M481.6 158.1h4.5M503.6 158.1h2.5M507.6 158.1h2.5M515.6 158.1h2.5M525.6 158.1h2.5M537.6 158.1h2.5M541.6 158.1h4.5M547.6 158.1h2.5M481.6 160.1h2.5M487.6 160.1h2.5M493.6 160.1h2.5M501.6 160.1h2.5M509.6 160.1h2.5M477.6 162.2h2.5M501.6 162.2h2.5M523.6 162.2h2.5M527.6 162.2h2.5M495.6 164.2h4.5M519.6 164.2h2.5M483.6 166.2h2.5M497.6 166.2h2.5M509.6 166.2h2.5M513.6 166.2h2.5M533.6 166.2h2.5M469.6 168.2h2.5M473.6 168.2h2.5M533.6 168.2h2.5M557.6 168.2h2.5M491.6 170.2h2.5M501.6 170.2h2.5M535.6 170.2h2.5M549.6 170.2h2.5"/>
<path stroke="#6f6f6f" stroke-width="2.51" d="M491.6 136h2.5M495.6 136h2.5M509.6 136h2.5M513.6 136h2.5M517.6 136h2.5M529.6 136h4.5M545.6 136h2.5M549.6 136h2.5M555.6 136h2.5M475.6 138h2.5M479.6 138h4.5M495.6 138h4.5M507.6 138h2.5M519.6 138h2.5M527.6 138h2.5M533.6 138h4.5M543.6 138h2.5M547.6 138h2.5M469.6 140h2.5M477.6 140h2.5M483.6 140h4.5M489.6 140h4.5M511.6 140h2.5M529.6 140h6.5M537.6 140h4.5M557.6 140h2.5M471.6 142h2.5M477.6 142h2.5M485.6 142h2.5M519.6 142h2.5M541.6 142h2.5M545.6 142h2.5M557.6 142h2.5M489.6 144.1h2.5M499.6 144.1h2.5M525.6 144.1h4.5M533.6 144.1h2.5M537.6 144.1h2.5M549.6 144.1h2.5M555.6 144.1h2.5M487.6 146.1h2.5M495.6 146.1h2.5M509.6 146.1h2.5M513.6 146.1h2.5M517.6 146.1h2.5M543.6 146.1h2.5M475.6 148.1h2.5M481.6 148.1h4.5M487.6 148.1h2.5M499.6 148.1h2.5M503.6 148.1h2.5M509.6 148.1h2.5M521.6 148.1h4.5M529.6 148.1h2.5M537.6 148.1h6.5M493.6 150.1h2.5M501.6 150.1h2.5M513.6 150.1h2.5M517.6 150.1h6.5M531.6 150.1h2.5M539.6 150.1h2.5M547.6 150.1h4.5M553.6 150.1h2.5M473.6 152.1h6.5M485.6 152.1h2.5M489.6 152.1h2.5M497.6 152.1h2.5M501.6 152.1h2.5M505.6 152.1h2.5M509.6 152.1h2.5M513.6 152.1h2.5M519.6 152.1h2.5M523.6 152.1h2.5M537.6 152.1h4.5M547.6 152.1h2.5M551.6 152.1h4.5M481.6 154.1h2.5M485.6 154.1h2.5M501.6 154.1h2.5M505.6 154.1h2.5M509.6 154.1h2.5M513.6 154.1h2.5M517.6 154.1h2.5M537.6 154.1h2.5M545.6 154.1h2.5M469.6 156.1h2.5M489.6 156.1h2.5M499.6 156.1h2.5M511.6 156.1h2.5M517.6 156.1h2.5M521.6 156.1h2.5M535.6 156.1h2.5M539.6 156.1h4.5M547.6 156.1h2.5M499.6 158.1h4.5M521.6 158.1h2.5M529.6 158.1h2.5M545.6 158.1h2.5M473.6 160.1h2.5M479.6 160.1h2.5M503.6 160.1h6.5M517.6 160.1h2.5M525.6 160.1h2.5M531.6 160.1h2.5M535.6 160.1h2.5M539.6 160.1h6.5M547.6 160.1h2.5M553.6 160.1h2.5M473.6 162.2h2.5M505.6 162.2h4.5M525.6 162.2h2.5M535.6 162.2h2.5M541.6 162.2h2.5M551.6 162.2h2.5M479.6 164.2h2.5M485.6 164.2h2.5M489.6 164.2h2.5M493.6 164.2h2.5M509.6 164.2h2.5M521.6 164.2h2.5M547.6 164.2h2.5M553.6 164.2h2.5M473.6 166.2h6.5M487.6 166.2h2.5M501.6 166.2h2.5M511.6 166.2h2.5M521.6 166.2h4.5M527.6 166.2h2.5M535.6 166.2h2.5M539.6 166.2h2.5M543.6 166.2h2.5M549.6 166.2h2.5M553.6 166.2h2.5M475.6 168.2h2.5M485.6 168.2h2.5M501.6 168.2h2.5M529.6 168.2h2.5M537.6 168.2h4.5M549.6 168.2h2.5M469.6 170.2h2.5M473.6 170.2h2.5M485.6 170.2h2.5M493.6 170.2h2.5M499.6 170.2h2.5M513.6 170.2h2.5M517.6 170.2h2.5M525.6 170.2h2.5M529.6 170.2h4.5M553.6 170.2h4.5"/>
<path stroke="#afafaf" stroke-width="2.51" d="M473.6 136h4.5M481.6 136h4.5M487.6 136h2.5M499.6 136h2.5M505.6 136h2.5M539.6 136h2.5M543.6 136h2.5M473.6 138h2.5M477.6 138h2.5M485.6 138h2.5M503.6 138h2.5M509.6 138h2.5M517.6 138h2.5M541.6 138h2.5M551.6 138h4.5M473.6 140h2.5M493.6 140h2.5M541.6 140h4.5M475.6 142h2.5M481.6 142h2.5M489.6 142h2.5M495.6 142h2.5M499.6 142h2.5M505.6 142h4.5M527.6 142h2.5M533.6 142h2.5M543.6 142h2.5M547.6 142h2.5M469.6 144.1h2.5M481.6 144.1h2.5M505.6 144.1h2.5M517.6 144.1h2.5M521.6 144.1h2.5M543.6 144.1h4.5M551.6 144.1h2.5M515.6 146.1h2.5M525.6 146.1h2.5M529.6 146.1h4.5M535.6 146.1h2.5M545.6 146.1h4.5M555.6 146.1h4.5M469.6 148.1h2.5M477.6 148.1h4.5M491.6 148.1h2.5M495.6 148.1h4.5M501.6 148.1h2.5M505.6 148.1h2.5M517.6 148.1h2.5M535.6 148.1h2.5M543.6 148.1h2.5M553.6 148.1h2.5M477.6 150.1h4.5M487.6 150.1h6.5M505.6 150.1h2.5M523.6 150.1h2.5M541.6 150.1h2.5M493.6 152.1h2.5M507.6 152.1h2.5M489.6 154.1h2.5M557.6 154.1h2.5M495.6 156.1h2.5M529.6 156.1h2.5M469.6 158.1h2.5M475.6 158.1h2.5M487.6 158.1h4.5M497.6 158.1h2.5M505.6 158.1h2.5M513.6 158.1h2.5M523.6 158.1h2.5M555.6 158.1h2.5M471.6 160.1h2.5M477.6 160.1h2.5M497.6 160.1h4.5M529.6 160.1h2.5M537.6 160.1h2.5M545.6 160.1h2.5M551.6 160.1h2.5M481.6 162.2h2.5M497.6 162.2h4.5M511.6 162.2h2.5M519.6 162.2h2.5M531.6 162.2h2.5M539.6 162.2h2.5M549.6 162.2h2.5M475.6 164.2h2.5M483.6 164.2h2.5M513.6 164.2h2.5M517.6 164.2h2.5M525.6 164.2h2.5M535.6 164.2h2.5M543.6 164.2h2.5M555.6 164.2h2.5M491.6 166.2h6.5M499.6 166.2h2.5M519.6 166.2h2.5M531.6 166.2h2.5M541.6 166.2h2.5M483.6 168.2h2.5M499.6 168.2h2.5M509.6 168.2h2.5M513.6 168.2h2.5M519.6 168.2h2.5M525.6 168.2h4.5M471.6 170.2h2.5M475.6 170.2h10.5M503.6 170.2h2.5M521.6 170.2h2.5M539.6 170.2h2.5M543.6 170.2h2.5"/>
<path stroke="#cfcfcf" stroke-width="2.51" d="M477.6 136h4.5M511.6 136h2.5M521.6 136h4.5M551.6 136h4.5M557.6 136h2.5M471.6 138h2.5M493.6 138h2.5M499.6 138h4.5M521.6 138h2.5M525.6 138h2.5M537.6 138h4.5M549.6 138h2.5M509.6 140h2.5M521.6 140h2.5M553.6 140h2.5M501.6 142h4.5M521.6 142h2.5M531.6 142h2.5M551.6 142h2.5M555.6 142h2.5M477.6 144.1h2.5M485.6 144.1h2.5M509.6 144.1h2.5M529.6 144.1h2.5M469.6 146.1h4.5M477.6 146.1h2.5M481.6 146.1h2.5M489.6 146.1h4.5M523.6 146.1h2.5M533.6 146.1h2.5M539.6 146.1h2.5M473.6 148.1h2.5M545.6 150.1h2.5M555.6 150.1h2.5M499.6 152.1h2.5M493.6 156.1h2.5M515.6 156.1h2.5M491.6 158.1h2.5M549.6 158.1h2.5M495.6 160.1h2.5M519.6 160.1h2.5M469.6 162.2h4.5M483.6 162.2h2.5M489.6 162.2h2.5M503.6 162.2h2.5M533.6 162.2h2.5M469.6 164.2h2.5M473.6 164.2h2.5M487.6 164.2h2.5M499.6 164.2h2.5M505.6 164.2h4.5M511.6 164.2h2.5M531.6 164.2h4.5M537.6 164.2h2.5M471.6 166.2h2.5M515.6 166.2h2.5M525.6 166.2h2.5M537.6 166.2h2.5M545.6 166.2h4.5M557.6 166.2h2.5M471.6 168.2h2.5M487.6 168.2h2.5M505.6 168.2h2.5M517.6 168.2h2.5M535.6 168.2h2.5M543.6 168.2h2.5M553.6 168.2h2.5M495.6 170.2h2.5M505.6 170.2h4.5M511.6 170.2h2.5M523.6 170.2h2.5M527.6 170.2h2.5"/>
<path stroke="#efefef" stroke-width="2.51" d="M471.6 136h2.5M485.6 136h2.5M513.6 138h2.5M481.6 140h2.5M495.6 140h2.5M547.6 140h2.5M469.6 142h2.5M483.6 142h2.5M523.6 142h2.5M493.6 144.1h2.5M519.6 144.1h2.5M539.6 144.1h2.5M553.6 144.1h2.5M497.6 146.1h2.5M537.6 146.1h2.5M519.6 148.1h2.5M549.6 148.1h2.5M517.6 152.1h2.5M479.6 162.2h2.5M509.6 162.2h2.5M545.6 162.2h2.5M471.6 164.2h2.5M549.6 164.2h2.5M557.6 164.2h2.5M481.6 166.2h2.5M485.6 166.2h2.5M503.6 166.2h2.5M479.6 168.2h2.5M493.6 168.2h2.5M551.6 168.2h2.5M489.6 170.2h2.5"/>
</g>
<rect x="563.4" y="135.0" width="90.2" height="36.2" fill="#808080"/>
<g><rect x="656.5" y="135" width="89" height="36.2" fill="#6b6b6b"/>
<path stroke="#090909" stroke-width="1.51" d="M729.5 152.6h1.5M729.5 153.6h1.5"/>
<path stroke="#1d1d1d" stroke-width="1.51" d="M728.5 150.6h2.5M728.5 151.6h3.5M728.5 152.6h1.5M730.5 152.6h2.5M728.5 153.6h1.5M730.5 153.6h3.5M728.5 154.6h5.5M728.5 155.6h3.5"/>
<path stroke="#313131" stroke-width="1.51" d="M728.5 147.6h1.5M728.5 148.6h2.5M658.5 149.6h2.5M727.5 149.6h4.5M658.5 150.6h3.5M727.5 150.6h1.5M730.5 150.6h2.5M658.5 151.6h3.5M727.5 151.6h1.5M731.5 151.6h2.5M658.5 152.6h3.5M727.5 152.6h1.5M732.5 152.6h2.5M658.5 153.6h3.5M727.5 153.6h1.5M733.5 153.6h1.5M658.5 154.6h3.5M727.5 154.6h1.5M733.5 154.6h1.5M658.5 155.6h2.5M727.5 155.6h1.5M731.5 155.6h3.5M727.5 156.6h7.5M728.5 157.6h2.5M728.5 158.6h1.5M706.5 169.7h2.5M731.5 169.7h2.5M706.5 170.7h2.5M731.5 170.7h2.5"/>
<path stroke="#444444" stroke-width="1.51" d="M656.5 135.5h2.5M744.5 135.5h1.5M744.5 136.5h1.5M683.5 140.5h1.5M683.5 141.5h1.5M683.5 142.5h1.5M683.5 143.5h1.5M727.5 144.6h2.5M727.5 145.6h2.5M656.5 146.6h5.5M726.5 146.6h4.5M656.5 147.6h5.5M726.5 147.6h2.5M729.5 147.6h1.5M656.5 148.6h6.5M726.5 148.6h2.5M730.5 148.6h1.5M656.5 149.6h2.5M660.5 149.6h2.5M725.5 149.6h2.5M731.5 149.6h2.5M656.5 150.6h2.5M661.5 150.6h3.5M725.5 150.6h2.5M732.5 150.6h2.5M656.5 151.6h2.5M661.5 151.6h4.5M676.5 151.6h2.5M691.5 151.6h1.5M724.5 151.6h3.5M733.5 151.6h2.5M656.5 152.6h2.5M661.5 152.6h4.5M676.5 152.6h2.5M690.5 152.6h4.5M718.5 152.6h1.5M724.5 152.6h3.5M734.5 152.6h1.5M657.5 153.6h1.5M661.5 153.6h4.5M676.5 153.6h2.5M690.5 153.6h5.5M717.5 153.6h2.5M724.5 153.6h3.5M734.5 153.6h1.5M657.5 154.6h1.5M661.5 154.6h3.5M676.5 154.6h2.5M690.5 154.6h6.5M700.5 154.6h3.5M717.5 154.6h3.5M724.5 154.6h3.5M734.5 154.6h1.5M657.5 155.6h1.5M660.5 155.6h3.5M676.5 155.6h2.5M691.5 155.6h5.5M699.5 155.6h4.5M717.5 155.6h3.5M725.5 155.6h2.5M734.5 155.6h1.5M658.5 156.6h3.5M699.5 156.6h4.5M716.5 156.6h4.5M726.5 156.6h1.5M734.5 156.6h1.5M727.5 157.6h1.5M730.5 157.6h5.5M727.5 158.6h1.5M729.5 158.6h2.5M732.5 158.6h3.5M714.5 159.6h1.5M727.5 159.6h3.5M713.5 160.6h2.5M728.5 160.6h2.5M713.5 161.6h2.5M728.5 161.6h2.5M713.5 162.7h1.5M728.5 162.7h2.5M675.5 166.7h1.5M675.5 167.7h1.5M707.5 167.7h1.5M731.5 167.7h2.5M675.5 168.7h1.5M706.5 168.7h2.5M731.5 168.7h2.5M675.5 169.7h1.5M708.5 169.7h1.5M730.5 169.7h1.5M669.5 170.7h1.5M675.5 170.7h1.5M708.5 170.7h1.5M730.5 170.7h1.5"/>
<path stroke="#585858" stroke-width="1.51" d="M658.5 135.5h2.5M675.5 135.5h4.5M656.5 136.5h3.5M678.5 136.5h1.5M684.5 137.5h1.5M744.5 137.5h1.5M683.5 138.5h2.5M744.5 138.5h1.5M683.5 139.5h2.5M678.5 140.5h1.5M682.5 140.5h1.5M684.5 140.5h1.5M678.5 141.5h1.5M682.5 141.5h1.5M684.5 141.5h1.5M727.5 141.5h1.5M678.5 142.5h2.5M682.5 142.5h1.5M684.5 142.5h1.5M726.5 142.5h3.5M658.5 143.5h3.5M678.5 143.5h2.5M682.5 143.5h1.5M684.5 143.5h1.5M723.5 143.5h6.5M656.5 144.6h5.5M678.5 144.6h2.5M682.5 144.6h3.5M723.5 144.6h4.5M729.5 144.6h1.5M656.5 145.6h6.5M678.5 145.6h2.5M682.5 145.6h3.5M723.5 145.6h4.5M729.5 145.6h1.5M661.5 146.6h1.5M665.5 146.6h1.5M677.5 146.6h3.5M683.5 146.6h1.5M723.5 146.6h3.5M730.5 146.6h1.5M735.5 146.6h1.5M661.5 147.6h5.5M677.5 147.6h3.5M723.5 147.6h3.5M730.5 147.6h2.5M734.5 147.6h3.5M662.5 148.6h4.5M676.5 148.6h3.5M723.5 148.6h3.5M731.5 148.6h7.5M662.5 149.6h4.5M676.5 149.6h3.5M691.5 149.6h1.5M723.5 149.6h2.5M733.5 149.6h5.5M664.5 150.6h3.5M675.5 150.6h4.5M690.5 150.6h4.5M700.5 150.6h3.5M723.5 150.6h2.5M734.5 150.6h4.5M665.5 151.6h2.5M675.5 151.6h1.5M678.5 151.6h1.5M690.5 151.6h1.5M692.5 151.6h3.5M699.5 151.6h5.5M716.5 151.6h3.5M723.5 151.6h1.5M735.5 151.6h3.5M665.5 152.6h2.5M675.5 152.6h1.5M678.5 152.6h1.5M689.5 152.6h1.5M694.5 152.6h3.5M698.5 152.6h7.5M716.5 152.6h2.5M719.5 152.6h1.5M723.5 152.6h1.5M735.5 152.6h3.5M656.5 153.6h1.5M665.5 153.6h3.5M675.5 153.6h1.5M678.5 153.6h1.5M689.5 153.6h1.5M695.5 153.6h11.5M715.5 153.6h2.5M719.5 153.6h1.5M723.5 153.6h1.5M735.5 153.6h2.5M656.5 154.6h1.5M664.5 154.6h4.5M675.5 154.6h1.5M678.5 154.6h1.5M689.5 154.6h1.5M696.5 154.6h4.5M703.5 154.6h4.5M714.5 154.6h3.5M720.5 154.6h1.5M722.5 154.6h2.5M735.5 154.6h2.5M656.5 155.6h1.5M663.5 155.6h4.5M675.5 155.6h1.5M678.5 155.6h1.5M689.5 155.6h2.5M696.5 155.6h3.5M703.5 155.6h4.5M713.5 155.6h4.5M720.5 155.6h1.5M722.5 155.6h3.5M735.5 155.6h1.5M657.5 156.6h1.5M661.5 156.6h3.5M675.5 156.6h4.5M690.5 156.6h9.5M703.5 156.6h4.5M713.5 156.6h3.5M720.5 156.6h1.5M723.5 156.6h3.5M735.5 156.6h1.5M744.5 156.6h1.5M658.5 157.6h5.5M676.5 157.6h3.5M692.5 157.6h14.5M713.5 157.6h8.5M724.5 157.6h3.5M735.5 157.6h1.5M744.5 157.6h1.5M659.5 158.6h1.5M676.5 158.6h3.5M693.5 158.6h12.5M713.5 158.6h7.5M724.5 158.6h3.5M731.5 158.6h1.5M735.5 158.6h1.5M744.5 158.6h1.5M676.5 159.6h3.5M693.5 159.6h3.5M698.5 159.6h4.5M712.5 159.6h2.5M715.5 159.6h3.5M725.5 159.6h2.5M730.5 159.6h6.5M677.5 160.6h2.5M693.5 160.6h2.5M699.5 160.6h1.5M712.5 160.6h1.5M715.5 160.6h2.5M726.5 160.6h2.5M730.5 160.6h1.5M733.5 160.6h1.5M677.5 161.6h1.5M693.5 161.6h2.5M712.5 161.6h1.5M715.5 161.6h1.5M727.5 161.6h1.5M730.5 161.6h1.5M676.5 162.7h1.5M693.5 162.7h2.5M711.5 162.7h2.5M714.5 162.7h2.5M727.5 162.7h1.5M730.5 162.7h1.5M675.5 163.7h2.5M693.5 163.7h2.5M711.5 163.7h4.5M728.5 163.7h3.5M675.5 164.7h2.5M694.5 164.7h1.5M711.5 164.7h4.5M728.5 164.7h3.5M674.5 165.7h3.5M708.5 165.7h1.5M712.5 165.7h2.5M728.5 165.7h5.5M674.5 166.7h1.5M676.5 166.7h1.5M706.5 166.7h3.5M729.5 166.7h5.5M674.5 167.7h1.5M676.5 167.7h1.5M705.5 167.7h2.5M708.5 167.7h2.5M730.5 167.7h1.5M733.5 167.7h1.5M669.5 168.7h1.5M674.5 168.7h1.5M676.5 168.7h1.5M705.5 168.7h1.5M708.5 168.7h2.5M730.5 168.7h1.5M733.5 168.7h1.5M669.5 169.7h1.5M674.5 169.7h1.5M676.5 169.7h1.5M705.5 169.7h1.5M709.5 169.7h1.5M733.5 169.7h1.5M670.5 170.7h1.5M674.5 170.7h1.5M676.5 170.7h1.5M695.5 170.7h1.5M705.5 170.7h1.5M709.5 170.7h1.5M726.5 170.7h1.5M733.5 170.7h1.5"/>
<path stroke="#7f7f7f" stroke-width="1.51" d="M661.5 135.5h1.5M672.5 135.5h2.5M680.5 135.5h1.5M682.5 135.5h2.5M686.5 135.5h1.5M697.5 135.5h3.5M703.5 135.5h4.5M718.5 135.5h1.5M735.5 135.5h1.5M743.5 135.5h1.5M660.5 136.5h1.5M672.5 136.5h2.5M680.5 136.5h3.5M686.5 136.5h1.5M698.5 136.5h2.5M703.5 136.5h3.5M716.5 136.5h2.5M743.5 136.5h1.5M659.5 137.5h2.5M673.5 137.5h1.5M680.5 137.5h3.5M686.5 137.5h1.5M703.5 137.5h3.5M716.5 137.5h2.5M743.5 137.5h1.5M656.5 138.5h5.5M673.5 138.5h4.5M680.5 138.5h2.5M686.5 138.5h1.5M703.5 138.5h3.5M716.5 138.5h2.5M723.5 138.5h6.5M736.5 138.5h4.5M743.5 138.5h1.5M656.5 139.5h6.5M668.5 139.5h4.5M673.5 139.5h4.5M680.5 139.5h2.5M702.5 139.5h3.5M717.5 139.5h1.5M722.5 139.5h8.5M735.5 139.5h6.5M743.5 139.5h1.5M656.5 140.5h7.5M664.5 140.5h8.5M674.5 140.5h3.5M680.5 140.5h2.5M702.5 140.5h3.5M710.5 140.5h1.5M722.5 140.5h1.5M724.5 140.5h2.5M729.5 140.5h1.5M735.5 140.5h3.5M740.5 140.5h1.5M743.5 140.5h1.5M656.5 141.5h2.5M661.5 141.5h8.5M670.5 141.5h2.5M674.5 141.5h3.5M701.5 141.5h4.5M710.5 141.5h1.5M721.5 141.5h1.5M734.5 141.5h3.5M740.5 141.5h1.5M743.5 141.5h1.5M656.5 142.5h1.5M662.5 142.5h5.5M671.5 142.5h1.5M674.5 142.5h3.5M699.5 142.5h3.5M703.5 142.5h2.5M709.5 142.5h3.5M721.5 142.5h1.5M730.5 142.5h1.5M734.5 142.5h1.5M740.5 142.5h2.5M743.5 142.5h1.5M663.5 143.5h2.5M671.5 143.5h1.5M675.5 143.5h2.5M691.5 143.5h1.5M699.5 143.5h3.5M704.5 143.5h1.5M709.5 143.5h3.5M721.5 143.5h1.5M730.5 143.5h1.5M734.5 143.5h1.5M741.5 143.5h4.5M671.5 144.6h2.5M674.5 144.6h3.5M685.5 144.6h1.5M691.5 144.6h2.5M698.5 144.6h3.5M704.5 144.6h1.5M709.5 144.6h3.5M721.5 144.6h1.5M733.5 144.6h1.5M741.5 144.6h2.5M744.5 144.6h1.5M671.5 145.6h2.5M674.5 145.6h2.5M685.5 145.6h1.5M690.5 145.6h3.5M698.5 145.6h1.5M704.5 145.6h1.5M709.5 145.6h2.5M713.5 145.6h3.5M731.5 145.6h3.5M741.5 145.6h1.5M671.5 146.6h5.5M685.5 146.6h1.5M690.5 146.6h3.5M698.5 146.6h1.5M704.5 146.6h1.5M709.5 146.6h2.5M712.5 146.6h5.5M732.5 146.6h1.5M740.5 146.6h2.5M671.5 147.6h4.5M685.5 147.6h1.5M690.5 147.6h1.5M692.5 147.6h2.5M697.5 147.6h2.5M704.5 147.6h1.5M709.5 147.6h9.5M722.5 147.6h1.5M740.5 147.6h2.5M671.5 148.6h4.5M684.5 148.6h2.5M689.5 148.6h1.5M693.5 148.6h2.5M697.5 148.6h1.5M704.5 148.6h2.5M709.5 148.6h1.5M711.5 148.6h2.5M716.5 148.6h3.5M722.5 148.6h1.5M740.5 148.6h2.5M670.5 149.6h4.5M684.5 149.6h2.5M689.5 149.6h1.5M694.5 149.6h4.5M705.5 149.6h2.5M711.5 149.6h2.5M718.5 149.6h1.5M722.5 149.6h1.5M740.5 149.6h2.5M671.5 150.6h3.5M683.5 150.6h3.5M688.5 150.6h1.5M706.5 150.6h3.5M710.5 150.6h2.5M719.5 150.6h1.5M741.5 150.6h1.5M671.5 151.6h2.5M682.5 151.6h7.5M707.5 151.6h2.5M710.5 151.6h2.5M720.5 151.6h2.5M741.5 151.6h1.5M672.5 152.6h1.5M681.5 152.6h7.5M708.5 152.6h1.5M710.5 152.6h2.5M721.5 152.6h1.5M741.5 152.6h1.5M744.5 152.6h1.5M672.5 153.6h1.5M681.5 153.6h6.5M708.5 153.6h1.5M710.5 153.6h2.5M742.5 153.6h3.5M672.5 154.6h2.5M681.5 154.6h5.5M708.5 154.6h4.5M742.5 154.6h2.5M672.5 155.6h2.5M681.5 155.6h5.5M708.5 155.6h4.5M738.5 155.6h2.5M742.5 155.6h2.5M672.5 156.6h2.5M681.5 156.6h5.5M708.5 156.6h4.5M737.5 156.6h3.5M742.5 156.6h2.5M671.5 157.6h4.5M681.5 157.6h5.5M708.5 157.6h4.5M737.5 157.6h3.5M742.5 157.6h1.5M656.5 158.6h1.5M664.5 158.6h8.5M674.5 158.6h1.5M681.5 158.6h5.5M689.5 158.6h2.5M707.5 158.6h4.5M737.5 158.6h1.5M739.5 158.6h2.5M742.5 158.6h2.5M657.5 159.6h1.5M664.5 159.6h7.5M674.5 159.6h1.5M681.5 159.6h5.5M688.5 159.6h2.5M691.5 159.6h1.5M707.5 159.6h4.5M737.5 159.6h1.5M740.5 159.6h4.5M658.5 160.6h10.5M674.5 160.6h1.5M681.5 160.6h5.5M688.5 160.6h1.5M707.5 160.6h3.5M737.5 160.6h1.5M740.5 160.6h4.5M660.5 161.6h7.5M674.5 161.6h1.5M681.5 161.6h3.5M685.5 161.6h1.5M688.5 161.6h1.5M706.5 161.6h3.5M718.5 161.6h3.5M737.5 161.6h1.5M740.5 161.6h2.5M744.5 161.6h1.5M663.5 162.7h3.5M674.5 162.7h1.5M681.5 162.7h3.5M685.5 162.7h1.5M688.5 162.7h1.5M701.5 162.7h3.5M707.5 162.7h1.5M717.5 162.7h4.5M736.5 162.7h2.5M740.5 162.7h2.5M744.5 162.7h1.5M664.5 163.7h2.5M673.5 163.7h1.5M679.5 163.7h4.5M685.5 163.7h1.5M688.5 163.7h1.5M697.5 163.7h1.5M699.5 163.7h5.5M717.5 163.7h1.5M720.5 163.7h1.5M734.5 163.7h4.5M740.5 163.7h2.5M673.5 164.7h1.5M678.5 164.7h5.5M685.5 164.7h3.5M691.5 164.7h1.5M697.5 164.7h4.5M703.5 164.7h1.5M716.5 164.7h1.5M720.5 164.7h1.5M724.5 164.7h2.5M734.5 164.7h4.5M740.5 164.7h2.5M668.5 165.7h2.5M673.5 165.7h1.5M678.5 165.7h1.5M680.5 165.7h3.5M686.5 165.7h2.5M691.5 165.7h1.5M697.5 165.7h3.5M703.5 165.7h1.5M716.5 165.7h1.5M720.5 165.7h1.5M724.5 165.7h3.5M734.5 165.7h3.5M741.5 165.7h1.5M668.5 166.7h2.5M681.5 166.7h2.5M686.5 166.7h1.5M691.5 166.7h1.5M697.5 166.7h2.5M704.5 166.7h1.5M715.5 166.7h2.5M720.5 166.7h1.5M725.5 166.7h1.5M734.5 166.7h3.5M741.5 166.7h1.5M659.5 167.7h2.5M668.5 167.7h1.5M670.5 167.7h1.5M672.5 167.7h1.5M691.5 167.7h2.5M697.5 167.7h2.5M704.5 167.7h1.5M714.5 167.7h3.5M720.5 167.7h1.5M735.5 167.7h2.5M741.5 167.7h1.5M659.5 168.7h2.5M671.5 168.7h2.5M677.5 168.7h1.5M692.5 168.7h1.5M697.5 168.7h1.5M704.5 168.7h1.5M711.5 168.7h6.5M721.5 168.7h1.5M723.5 168.7h1.5M735.5 168.7h2.5M741.5 168.7h1.5M659.5 169.7h3.5M671.5 169.7h3.5M677.5 169.7h1.5M692.5 169.7h2.5M697.5 169.7h1.5M704.5 169.7h1.5M711.5 169.7h7.5M721.5 169.7h3.5M728.5 169.7h1.5M735.5 169.7h2.5M741.5 169.7h1.5M659.5 170.7h3.5M671.5 170.7h1.5M673.5 170.7h1.5M692.5 170.7h2.5M697.5 170.7h1.5M704.5 170.7h1.5M710.5 170.7h2.5M715.5 170.7h3.5M721.5 170.7h4.5M728.5 170.7h1.5M735.5 170.7h2.5M741.5 170.7h1.5"/>
<path stroke="#939393" stroke-width="1.51" d="M662.5 135.5h3.5M671.5 135.5h1.5M681.5 135.5h1.5M687.5 135.5h2.5M691.5 135.5h3.5M696.5 135.5h1.5M700.5 135.5h3.5M711.5 135.5h2.5M714.5 135.5h2.5M726.5 135.5h3.5M733.5 135.5h2.5M736.5 135.5h3.5M742.5 135.5h1.5M661.5 136.5h5.5M671.5 136.5h1.5M687.5 136.5h2.5M691.5 136.5h3.5M697.5 136.5h1.5M700.5 136.5h3.5M706.5 136.5h1.5M710.5 136.5h3.5M715.5 136.5h1.5M718.5 136.5h1.5M724.5 136.5h6.5M734.5 136.5h6.5M661.5 137.5h6.5M669.5 137.5h4.5M687.5 137.5h2.5M691.5 137.5h3.5M698.5 137.5h5.5M706.5 137.5h1.5M710.5 137.5h2.5M715.5 137.5h1.5M718.5 137.5h1.5M722.5 137.5h8.5M734.5 137.5h7.5M742.5 137.5h1.5M661.5 138.5h12.5M687.5 138.5h1.5M691.5 138.5h3.5M698.5 138.5h5.5M706.5 138.5h1.5M710.5 138.5h2.5M718.5 138.5h1.5M721.5 138.5h2.5M729.5 138.5h1.5M734.5 138.5h2.5M740.5 138.5h3.5M662.5 139.5h6.5M672.5 139.5h1.5M686.5 139.5h1.5M691.5 139.5h3.5M698.5 139.5h4.5M705.5 139.5h2.5M709.5 139.5h3.5M716.5 139.5h1.5M718.5 139.5h4.5M730.5 139.5h1.5M734.5 139.5h1.5M741.5 139.5h2.5M663.5 140.5h1.5M672.5 140.5h2.5M686.5 140.5h1.5M690.5 140.5h4.5M698.5 140.5h4.5M705.5 140.5h1.5M708.5 140.5h2.5M711.5 140.5h1.5M716.5 140.5h6.5M730.5 140.5h1.5M734.5 140.5h1.5M741.5 140.5h2.5M672.5 141.5h2.5M686.5 141.5h1.5M690.5 141.5h4.5M698.5 141.5h3.5M705.5 141.5h1.5M708.5 141.5h2.5M711.5 141.5h2.5M716.5 141.5h5.5M730.5 141.5h1.5M741.5 141.5h2.5M672.5 142.5h2.5M686.5 142.5h1.5M690.5 142.5h4.5M698.5 142.5h1.5M705.5 142.5h1.5M708.5 142.5h1.5M712.5 142.5h1.5M716.5 142.5h5.5M731.5 142.5h1.5M733.5 142.5h1.5M742.5 142.5h1.5M672.5 143.5h3.5M686.5 143.5h1.5M690.5 143.5h1.5M692.5 143.5h2.5M698.5 143.5h1.5M705.5 143.5h1.5M708.5 143.5h1.5M712.5 143.5h9.5M731.5 143.5h3.5M673.5 144.6h1.5M686.5 144.6h1.5M690.5 144.6h1.5M693.5 144.6h1.5M697.5 144.6h1.5M705.5 144.6h1.5M708.5 144.6h1.5M712.5 144.6h9.5M731.5 144.6h2.5M743.5 144.6h1.5M673.5 145.6h1.5M686.5 145.6h1.5M689.5 145.6h1.5M693.5 145.6h1.5M697.5 145.6h1.5M705.5 145.6h1.5M708.5 145.6h1.5M711.5 145.6h2.5M716.5 145.6h3.5M721.5 145.6h1.5M742.5 145.6h3.5M686.5 146.6h1.5M689.5 146.6h1.5M693.5 146.6h1.5M696.5 146.6h2.5M705.5 146.6h1.5M707.5 146.6h2.5M711.5 146.6h1.5M717.5 146.6h2.5M721.5 146.6h1.5M742.5 146.6h3.5M686.5 147.6h1.5M689.5 147.6h1.5M694.5 147.6h3.5M705.5 147.6h4.5M718.5 147.6h2.5M721.5 147.6h1.5M742.5 147.6h3.5M686.5 148.6h3.5M695.5 148.6h2.5M706.5 148.6h3.5M710.5 148.6h1.5M719.5 148.6h1.5M721.5 148.6h1.5M742.5 148.6h1.5M744.5 148.6h1.5M686.5 149.6h3.5M707.5 149.6h4.5M719.5 149.6h3.5M742.5 149.6h1.5M686.5 150.6h2.5M709.5 150.6h1.5M720.5 150.6h2.5M742.5 150.6h3.5M709.5 151.6h1.5M742.5 151.6h3.5M709.5 152.6h1.5M742.5 152.6h2.5M709.5 153.6h1.5M672.5 158.6h2.5M738.5 158.6h1.5M656.5 159.6h1.5M671.5 159.6h3.5M690.5 159.6h1.5M738.5 159.6h2.5M656.5 160.6h2.5M668.5 160.6h4.5M673.5 160.6h1.5M689.5 160.6h3.5M738.5 160.6h2.5M657.5 161.6h3.5M667.5 161.6h3.5M673.5 161.6h1.5M684.5 161.6h1.5M689.5 161.6h3.5M738.5 161.6h2.5M742.5 161.6h2.5M657.5 162.7h6.5M666.5 162.7h4.5M673.5 162.7h1.5M684.5 162.7h1.5M689.5 162.7h1.5M691.5 162.7h1.5M738.5 162.7h2.5M742.5 162.7h2.5M658.5 163.7h6.5M666.5 163.7h4.5M683.5 163.7h2.5M689.5 163.7h1.5M691.5 163.7h1.5M718.5 163.7h2.5M738.5 163.7h2.5M742.5 163.7h3.5M657.5 164.7h13.5M672.5 164.7h1.5M683.5 164.7h2.5M688.5 164.7h1.5M690.5 164.7h1.5M701.5 164.7h2.5M717.5 164.7h3.5M738.5 164.7h2.5M742.5 164.7h1.5M657.5 165.7h11.5M670.5 165.7h3.5M679.5 165.7h1.5M683.5 165.7h3.5M688.5 165.7h1.5M690.5 165.7h1.5M700.5 165.7h3.5M717.5 165.7h3.5M737.5 165.7h4.5M742.5 165.7h1.5M657.5 166.7h11.5M670.5 166.7h3.5M678.5 166.7h3.5M683.5 166.7h3.5M687.5 166.7h2.5M690.5 166.7h1.5M699.5 166.7h2.5M703.5 166.7h1.5M717.5 166.7h1.5M719.5 166.7h1.5M737.5 166.7h1.5M740.5 166.7h1.5M742.5 166.7h1.5M657.5 167.7h2.5M661.5 167.7h2.5M667.5 167.7h1.5M671.5 167.7h1.5M678.5 167.7h1.5M680.5 167.7h8.5M690.5 167.7h1.5M699.5 167.7h1.5M703.5 167.7h1.5M717.5 167.7h1.5M737.5 167.7h1.5M740.5 167.7h1.5M742.5 167.7h1.5M657.5 168.7h2.5M661.5 168.7h2.5M667.5 168.7h1.5M681.5 168.7h3.5M690.5 168.7h2.5M698.5 168.7h2.5M717.5 168.7h1.5M720.5 168.7h1.5M737.5 168.7h1.5M740.5 168.7h1.5M742.5 168.7h1.5M658.5 169.7h1.5M662.5 169.7h1.5M682.5 169.7h2.5M691.5 169.7h1.5M698.5 169.7h1.5M720.5 169.7h1.5M737.5 169.7h1.5M740.5 169.7h1.5M742.5 169.7h1.5M658.5 170.7h1.5M662.5 170.7h1.5M672.5 170.7h1.5M677.5 170.7h1.5M682.5 170.7h2.5M691.5 170.7h1.5M698.5 170.7h1.5M712.5 170.7h3.5M720.5 170.7h1.5M737.5 170.7h1.5M740.5 170.7h1.5M742.5 170.7h1.5"/>
<path stroke="#a6a6a6" stroke-width="1.51" d="M665.5 135.5h2.5M670.5 135.5h1.5M689.5 135.5h2.5M694.5 135.5h2.5M707.5 135.5h1.5M710.5 135.5h1.5M713.5 135.5h1.5M719.5 135.5h1.5M723.5 135.5h3.5M729.5 135.5h4.5M739.5 135.5h3.5M666.5 136.5h5.5M689.5 136.5h2.5M694.5 136.5h3.5M707.5 136.5h1.5M713.5 136.5h2.5M719.5 136.5h1.5M722.5 136.5h2.5M730.5 136.5h4.5M740.5 136.5h3.5M667.5 137.5h2.5M689.5 137.5h2.5M694.5 137.5h4.5M707.5 137.5h1.5M709.5 137.5h1.5M712.5 137.5h3.5M719.5 137.5h3.5M730.5 137.5h4.5M741.5 137.5h1.5M688.5 138.5h3.5M694.5 138.5h1.5M697.5 138.5h1.5M707.5 138.5h3.5M712.5 138.5h1.5M715.5 138.5h1.5M719.5 138.5h2.5M730.5 138.5h2.5M733.5 138.5h1.5M687.5 139.5h4.5M694.5 139.5h1.5M697.5 139.5h1.5M707.5 139.5h2.5M712.5 139.5h1.5M715.5 139.5h1.5M731.5 139.5h1.5M733.5 139.5h1.5M687.5 140.5h3.5M694.5 140.5h1.5M697.5 140.5h1.5M706.5 140.5h2.5M712.5 140.5h2.5M715.5 140.5h1.5M731.5 140.5h1.5M733.5 140.5h1.5M687.5 141.5h3.5M694.5 141.5h1.5M697.5 141.5h1.5M706.5 141.5h2.5M713.5 141.5h3.5M731.5 141.5h3.5M687.5 142.5h3.5M694.5 142.5h1.5M697.5 142.5h1.5M706.5 142.5h2.5M713.5 142.5h3.5M732.5 142.5h1.5M687.5 143.5h3.5M694.5 143.5h1.5M696.5 143.5h2.5M706.5 143.5h2.5M687.5 144.6h3.5M694.5 144.6h1.5M696.5 144.6h1.5M706.5 144.6h2.5M687.5 145.6h2.5M694.5 145.6h3.5M706.5 145.6h2.5M719.5 145.6h2.5M687.5 146.6h2.5M694.5 146.6h2.5M706.5 146.6h1.5M719.5 146.6h2.5M687.5 147.6h2.5M720.5 147.6h1.5M720.5 148.6h1.5M743.5 148.6h1.5M743.5 149.6h2.5M672.5 160.6h1.5M656.5 161.6h1.5M670.5 161.6h3.5M656.5 162.7h1.5M670.5 162.7h3.5M690.5 162.7h1.5M656.5 163.7h2.5M670.5 163.7h3.5M690.5 163.7h1.5M656.5 164.7h1.5M670.5 164.7h2.5M689.5 164.7h1.5M743.5 164.7h2.5M656.5 165.7h1.5M689.5 165.7h1.5M743.5 165.7h2.5M656.5 166.7h1.5M689.5 166.7h1.5M701.5 166.7h2.5M718.5 166.7h1.5M738.5 166.7h2.5M743.5 166.7h1.5M656.5 167.7h1.5M663.5 167.7h4.5M679.5 167.7h1.5M688.5 167.7h2.5M700.5 167.7h3.5M718.5 167.7h2.5M738.5 167.7h2.5M743.5 167.7h1.5M656.5 168.7h1.5M663.5 168.7h3.5M678.5 168.7h1.5M680.5 168.7h1.5M684.5 168.7h6.5M700.5 168.7h2.5M703.5 168.7h1.5M718.5 168.7h2.5M738.5 168.7h2.5M743.5 168.7h1.5M656.5 169.7h2.5M663.5 169.7h2.5M667.5 169.7h1.5M678.5 169.7h1.5M681.5 169.7h1.5M684.5 169.7h1.5M686.5 169.7h5.5M699.5 169.7h2.5M703.5 169.7h1.5M718.5 169.7h2.5M738.5 169.7h2.5M743.5 169.7h1.5M657.5 170.7h1.5M663.5 170.7h1.5M667.5 170.7h1.5M681.5 170.7h1.5M684.5 170.7h1.5M689.5 170.7h2.5M699.5 170.7h2.5M718.5 170.7h2.5M738.5 170.7h2.5M743.5 170.7h1.5"/>
<path stroke="#bababa" stroke-width="1.51" d="M667.5 135.5h3.5M708.5 135.5h2.5M720.5 135.5h3.5M708.5 136.5h2.5M720.5 136.5h2.5M708.5 137.5h1.5M695.5 138.5h2.5M713.5 138.5h2.5M732.5 138.5h1.5M695.5 139.5h2.5M713.5 139.5h2.5M732.5 139.5h1.5M695.5 140.5h2.5M714.5 140.5h1.5M732.5 140.5h1.5M695.5 141.5h2.5M695.5 142.5h2.5M695.5 143.5h1.5M695.5 144.6h1.5M744.5 166.7h1.5M744.5 167.7h1.5M666.5 168.7h1.5M679.5 168.7h1.5M702.5 168.7h1.5M665.5 169.7h2.5M679.5 169.7h2.5M685.5 169.7h1.5M701.5 169.7h2.5M656.5 170.7h1.5M664.5 170.7h1.5M678.5 170.7h1.5M680.5 170.7h1.5M685.5 170.7h4.5M701.5 170.7h3.5"/>
<path stroke="#cdcdcd" stroke-width="1.51" d="M744.5 168.7h1.5M744.5 169.7h1.5M665.5 170.7h2.5M679.5 170.7h1.5"/>
<path stroke="#e1e1e1" stroke-width="1.51" d="M744.5 170.7h1.5"/>
</g>
<rect x="467.4" y="134.4" width="280.4" height="37.4" fill="none" stroke="#00ee00" stroke-width="1.7"/>
<rect x="466.5" y="133.6" width="2.4" height="39.0" fill="#00ee00"/>
<text transform="translate(446.00 145.40) scale(1.05 1)" font-family="'Liberation Sans', sans-serif" font-size="8.4" fill="#000" stroke="#000" stroke-width="0.18">0.19</text>
<text transform="translate(446.00 153.80) scale(1.05 1)" font-family="'Liberation Sans', sans-serif" font-size="8.4" fill="#000" stroke="#000" stroke-width="0.18">1.42</text>
<text transform="translate(446.00 162.20) scale(1.05 1)" font-family="'Liberation Sans', sans-serif" font-size="8.4" fill="#000" stroke="#000" stroke-width="0.18">203</text>
<text transform="translate(750.30 139.40) scale(1.05 1)" font-family="'Liberation Sans', sans-serif" font-size="5.9" fill="#000" stroke="#000" stroke-width="0.18">0.83"</text>
<text transform="translate(750.30 146.60) scale(1.05 1)" font-family="'Liberation Sans', sans-serif" font-size="5.9" fill="#000" stroke="#000" stroke-width="0.18">(246, 212)</text>
<text transform="translate(750.30 154.60) scale(1.05 1)" font-family="'Liberation Sans', sans-serif" font-size="5.9" fill="#000" stroke="#000" stroke-width="0.18">20220619</text>
<text transform="translate(750.30 161.80) scale(1.05 1)" font-family="'Liberation Sans', sans-serif" font-size="5.9" fill="#000" stroke="#000" stroke-width="0.18">v013_01</text>
<text transform="translate(750.30 169.00) scale(1.05 1)" font-family="'Liberation Sans', sans-serif" font-size="5.9" fill="#000" stroke="#000" stroke-width="0.18">421_LL_022</text>
<g><rect x="469.6" y="174.7" width="90" height="36.2" fill="#8f8f8f"/>
<path stroke="#0f0f0f" stroke-width="2.51" d="M509.6 175.7h2.5M555.6 189.8h2.5M547.6 193.8h2.5M485.6 195.8h4.5M527.6 201.9h2.5M469.6 203.9h2.5"/>
<path stroke="#2f2f2f" stroke-width="2.51" d="M537.6 175.7h2.5M503.6 177.7h2.5M519.6 177.7h2.5M535.6 177.7h4.5M557.6 177.7h2.5M483.6 183.8h2.5M543.6 183.8h2.5M509.6 185.8h2.5M515.6 185.8h2.5M515.6 187.8h2.5M477.6 189.8h2.5M469.6 191.8h2.5M479.6 191.8h2.5M485.6 191.8h2.5M499.6 191.8h2.5M515.6 191.8h2.5M469.6 193.8h2.5M515.6 193.8h2.5M539.6 193.8h4.5M553.6 193.8h4.5M471.6 195.8h4.5M477.6 195.8h2.5M489.6 195.8h2.5M495.6 195.8h2.5M517.6 195.8h2.5M531.6 195.8h2.5M547.6 195.8h2.5M555.6 195.8h4.5M483.6 197.8h2.5M503.6 197.8h4.5M529.6 197.8h2.5M555.6 197.8h2.5M497.6 199.8h2.5M507.6 199.8h2.5M535.6 199.8h2.5M545.6 199.8h2.5M479.6 201.9h2.5M533.6 201.9h2.5M543.6 201.9h2.5M545.6 203.9h2.5M507.6 205.9h2.5M553.6 205.9h2.5M493.6 207.9h2.5M471.6 209.9h2.5M495.6 209.9h2.5M511.6 209.9h2.5"/>
<path stroke="#4f4f4f" stroke-width="2.51" d="M479.6 177.7h2.5M547.6 177.7h2.5M529.6 179.7h2.5M471.6 181.7h2.5M489.6 181.7h2.5M493.6 181.7h2.5M549.6 181.7h2.5M539.6 183.8h2.5M549.6 183.8h2.5M469.6 185.8h2.5M485.6 185.8h2.5M491.6 185.8h2.5M513.6 185.8h2.5M545.6 185.8h8.5M557.6 185.8h2.5M473.6 187.8h2.5M511.6 187.8h2.5M539.6 187.8h4.5M547.6 187.8h2.5M473.6 189.8h2.5M541.6 189.8h2.5M545.6 189.8h2.5M473.6 191.8h2.5M493.6 191.8h2.5M501.6 191.8h2.5M509.6 191.8h2.5M513.6 191.8h2.5M517.6 191.8h4.5M539.6 191.8h2.5M545.6 191.8h2.5M485.6 193.8h2.5M491.6 193.8h2.5M495.6 193.8h2.5M505.6 193.8h2.5M509.6 193.8h4.5M521.6 193.8h4.5M527.6 193.8h2.5M533.6 193.8h6.5M545.6 193.8h2.5M549.6 193.8h2.5M479.6 195.8h4.5M503.6 195.8h2.5M513.6 195.8h4.5M521.6 195.8h4.5M535.6 195.8h6.5M545.6 195.8h2.5M549.6 195.8h4.5M481.6 197.8h2.5M499.6 197.8h2.5M517.6 197.8h2.5M545.6 197.8h4.5M551.6 197.8h4.5M501.6 199.8h2.5M505.6 199.8h2.5M515.6 199.8h2.5M519.6 199.8h2.5M537.6 199.8h2.5M553.6 199.8h2.5M485.6 201.9h2.5M489.6 201.9h2.5M549.6 201.9h2.5M497.6 203.9h2.5M523.6 203.9h2.5M557.6 203.9h2.5M473.6 205.9h2.5M481.6 205.9h2.5M485.6 205.9h2.5M491.6 205.9h2.5M519.6 205.9h2.5M525.6 205.9h2.5M529.6 205.9h2.5M483.6 207.9h2.5M499.6 207.9h4.5M515.6 207.9h2.5M469.6 209.9h2.5M475.6 209.9h2.5M489.6 209.9h2.5M553.6 209.9h2.5"/>
<path stroke="#6f6f6f" stroke-width="2.51" d="M473.6 175.7h2.5M485.6 175.7h2.5M511.6 175.7h4.5M529.6 175.7h2.5M473.6 177.7h2.5M477.6 177.7h2.5M495.6 177.7h2.5M499.6 177.7h2.5M505.6 177.7h2.5M511.6 177.7h2.5M515.6 177.7h2.5M521.6 177.7h4.5M529.6 177.7h2.5M533.6 177.7h2.5M543.6 177.7h4.5M483.6 179.7h2.5M487.6 179.7h2.5M507.6 179.7h2.5M513.6 179.7h2.5M517.6 179.7h2.5M521.6 179.7h2.5M545.6 179.7h2.5M473.6 181.7h4.5M483.6 181.7h2.5M497.6 181.7h2.5M515.6 181.7h2.5M523.6 181.7h2.5M529.6 181.7h2.5M551.6 181.7h4.5M471.6 183.8h2.5M477.6 183.8h2.5M491.6 183.8h6.5M507.6 183.8h4.5M519.6 183.8h2.5M525.6 183.8h4.5M533.6 183.8h2.5M537.6 183.8h2.5M545.6 183.8h2.5M555.6 183.8h2.5M499.6 185.8h2.5M517.6 185.8h4.5M523.6 185.8h2.5M527.6 185.8h2.5M535.6 185.8h2.5M539.6 185.8h2.5M553.6 185.8h4.5M475.6 187.8h2.5M481.6 187.8h2.5M495.6 187.8h2.5M501.6 187.8h2.5M507.6 187.8h2.5M513.6 187.8h2.5M533.6 187.8h2.5M537.6 187.8h2.5M553.6 187.8h4.5M471.6 189.8h2.5M493.6 189.8h2.5M505.6 189.8h6.5M517.6 189.8h2.5M543.6 189.8h2.5M471.6 191.8h2.5M475.6 191.8h2.5M481.6 191.8h4.5M489.6 191.8h4.5M497.6 191.8h2.5M503.6 191.8h6.5M525.6 191.8h4.5M533.6 191.8h2.5M541.6 191.8h4.5M553.6 191.8h4.5M471.6 193.8h2.5M475.6 193.8h8.5M487.6 193.8h4.5M493.6 193.8h2.5M517.6 193.8h4.5M525.6 193.8h2.5M543.6 193.8h2.5M551.6 193.8h2.5M475.6 195.8h2.5M483.6 195.8h2.5M493.6 195.8h2.5M501.6 195.8h2.5M505.6 195.8h2.5M509.6 195.8h4.5M519.6 195.8h2.5M469.6 197.8h6.5M479.6 197.8h2.5M485.6 197.8h2.5M489.6 197.8h2.5M493.6 197.8h2.5M501.6 197.8h2.5M513.6 197.8h4.5M523.6 197.8h2.5M535.6 197.8h4.5M475.6 199.8h4.5M481.6 199.8h2.5M485.6 199.8h4.5M495.6 199.8h2.5M521.6 199.8h6.5M529.6 199.8h2.5M539.6 199.8h4.5M551.6 199.8h2.5M557.6 199.8h2.5M475.6 201.9h2.5M481.6 201.9h2.5M493.6 201.9h4.5M501.6 201.9h2.5M507.6 201.9h2.5M517.6 201.9h2.5M529.6 201.9h2.5M535.6 201.9h2.5M483.6 203.9h2.5M503.6 203.9h2.5M509.6 203.9h2.5M521.6 203.9h2.5M535.6 203.9h2.5M547.6 203.9h2.5M497.6 205.9h2.5M501.6 205.9h2.5M515.6 205.9h2.5M521.6 205.9h4.5M531.6 205.9h2.5M551.6 205.9h2.5M473.6 207.9h4.5M481.6 207.9h2.5M489.6 207.9h2.5M505.6 207.9h2.5M523.6 207.9h2.5M487.6 209.9h2.5M491.6 209.9h2.5M507.6 209.9h4.5M521.6 209.9h2.5M525.6 209.9h2.5M531.6 209.9h2.5M551.6 209.9h2.5M555.6 209.9h4.5"/>
<path stroke="#afafaf" stroke-width="2.51" d="M471.6 175.7h2.5M477.6 175.7h2.5M489.6 175.7h2.5M495.6 175.7h6.5M503.6 175.7h6.5M521.6 175.7h2.5M531.6 175.7h2.5M535.6 175.7h2.5M539.6 175.7h2.5M547.6 175.7h2.5M551.6 175.7h4.5M557.6 175.7h2.5M469.6 177.7h2.5M513.6 177.7h2.5M525.6 177.7h4.5M469.6 179.7h2.5M485.6 179.7h2.5M495.6 179.7h4.5M505.6 179.7h2.5M511.6 179.7h2.5M519.6 179.7h2.5M523.6 179.7h2.5M527.6 179.7h2.5M539.6 179.7h4.5M551.6 179.7h4.5M469.6 181.7h2.5M485.6 181.7h4.5M509.6 181.7h4.5M519.6 181.7h2.5M525.6 181.7h4.5M533.6 181.7h2.5M543.6 181.7h2.5M469.6 183.8h2.5M481.6 183.8h2.5M485.6 183.8h6.5M497.6 183.8h2.5M531.6 183.8h2.5M547.6 183.8h2.5M551.6 183.8h2.5M471.6 185.8h2.5M479.6 185.8h2.5M483.6 185.8h2.5M487.6 185.8h4.5M497.6 185.8h2.5M503.6 185.8h2.5M521.6 185.8h2.5M525.6 185.8h2.5M531.6 185.8h2.5M537.6 185.8h2.5M541.6 185.8h4.5M471.6 187.8h2.5M483.6 187.8h6.5M503.6 187.8h2.5M531.6 187.8h2.5M535.6 187.8h2.5M543.6 187.8h2.5M469.6 189.8h2.5M481.6 189.8h2.5M485.6 189.8h2.5M489.6 189.8h2.5M519.6 189.8h2.5M537.6 189.8h2.5M553.6 189.8h2.5M477.6 191.8h2.5M499.6 193.8h4.5M531.6 193.8h2.5M491.6 197.8h2.5M531.6 197.8h2.5M541.6 197.8h2.5M469.6 199.8h2.5M479.6 199.8h2.5M493.6 199.8h2.5M499.6 199.8h2.5M503.6 199.8h2.5M517.6 199.8h2.5M527.6 199.8h2.5M531.6 199.8h4.5M547.6 199.8h4.5M469.6 201.9h2.5M473.6 201.9h2.5M483.6 201.9h2.5M487.6 201.9h2.5M509.6 201.9h4.5M539.6 201.9h2.5M547.6 201.9h2.5M557.6 201.9h2.5M473.6 203.9h2.5M493.6 203.9h2.5M501.6 203.9h2.5M507.6 203.9h2.5M511.6 203.9h2.5M519.6 203.9h2.5M525.6 203.9h6.5M533.6 203.9h2.5M537.6 203.9h4.5M543.6 203.9h2.5M553.6 203.9h2.5M469.6 205.9h4.5M475.6 205.9h6.5M483.6 205.9h2.5M503.6 205.9h2.5M517.6 205.9h2.5M537.6 205.9h4.5M547.6 205.9h4.5M469.6 207.9h4.5M487.6 207.9h2.5M503.6 207.9h2.5M507.6 207.9h2.5M511.6 207.9h2.5M521.6 207.9h2.5M527.6 207.9h2.5M531.6 207.9h2.5M535.6 207.9h8.5M557.6 207.9h2.5M473.6 209.9h2.5M477.6 209.9h2.5M485.6 209.9h2.5M501.6 209.9h2.5M519.6 209.9h2.5M527.6 209.9h2.5M539.6 209.9h2.5M545.6 209.9h2.5"/>
<path stroke="#cfcfcf" stroke-width="2.51" d="M469.6 175.7h2.5M487.6 175.7h2.5M519.6 175.7h2.5M545.6 175.7h2.5M481.6 177.7h2.5M497.6 177.7h2.5M501.6 177.7h2.5M507.6 177.7h2.5M539.6 177.7h2.5M549.6 177.7h2.5M479.6 179.7h2.5M489.6 179.7h4.5M501.6 179.7h2.5M525.6 179.7h2.5M533.6 179.7h2.5M537.6 179.7h2.5M513.6 181.7h2.5M521.6 181.7h2.5M539.6 181.7h4.5M545.6 181.7h4.5M557.6 181.7h2.5M475.6 183.8h2.5M505.6 183.8h2.5M515.6 183.8h2.5M541.6 183.8h2.5M553.6 183.8h2.5M477.6 185.8h2.5M481.6 185.8h2.5M493.6 185.8h2.5M511.6 185.8h2.5M499.6 187.8h2.5M519.6 187.8h4.5M525.6 187.8h6.5M545.6 187.8h2.5M551.6 187.8h2.5M499.6 189.8h4.5M511.6 189.8h2.5M527.6 189.8h2.5M531.6 189.8h4.5M531.6 191.8h2.5M557.6 191.8h2.5M477.6 197.8h2.5M495.6 197.8h2.5M511.6 197.8h2.5M539.6 197.8h2.5M543.6 197.8h2.5M557.6 197.8h2.5M483.6 199.8h2.5M489.6 199.8h2.5M477.6 201.9h2.5M513.6 201.9h2.5M519.6 201.9h4.5M541.6 201.9h2.5M555.6 201.9h2.5M505.6 203.9h2.5M515.6 203.9h2.5M549.6 203.9h2.5M487.6 205.9h2.5M493.6 205.9h4.5M505.6 205.9h2.5M509.6 205.9h2.5M557.6 205.9h2.5M529.6 207.9h2.5M533.6 207.9h2.5M481.6 209.9h2.5M515.6 209.9h2.5M523.6 209.9h2.5M533.6 209.9h2.5"/>
<path stroke="#efefef" stroke-width="2.51" d="M481.6 175.7h2.5M527.6 175.7h2.5M533.6 175.7h2.5M531.6 177.7h2.5M553.6 177.7h2.5M475.6 179.7h2.5M495.6 181.7h2.5M507.6 181.7h2.5M517.6 181.7h2.5M531.6 181.7h2.5M503.6 183.8h2.5M511.6 183.8h2.5M517.6 183.8h2.5M529.6 185.8h2.5M533.6 185.8h2.5M491.6 187.8h4.5M517.6 187.8h2.5M549.6 187.8h2.5M495.6 191.8h2.5M503.6 201.9h2.5M515.6 201.9h2.5M531.6 201.9h2.5M553.6 201.9h2.5M479.6 203.9h2.5M513.6 203.9h2.5M551.6 203.9h2.5M499.6 205.9h2.5M527.6 205.9h2.5M555.6 205.9h2.5M547.6 207.9h2.5M483.6 209.9h2.5"/>
</g>
<rect x="563.4" y="174.7" width="90.2" height="36.2" fill="#808080"/>
<g><rect x="656.5" y="174.7" width="89" height="36.2" fill="#7f7f7f"/>
<path stroke="#1d1d1d" stroke-width="1.51" d="M670.5 194.3h3.5M670.5 195.3h2.5M669.5 196.3h3.5M669.5 197.3h2.5"/>
<path stroke="#313131" stroke-width="1.51" d="M668.5 175.2h3.5M673.5 191.3h1.5M671.5 192.3h4.5M670.5 193.3h5.5M705.5 193.3h1.5M669.5 194.3h1.5M673.5 194.3h3.5M668.5 195.3h2.5M672.5 195.3h4.5M668.5 196.3h1.5M672.5 196.3h4.5M668.5 197.3h1.5M671.5 197.3h2.5M669.5 198.3h3.5M669.5 199.3h2.5M662.5 210.4h1.5"/>
<path stroke="#444444" stroke-width="1.51" d="M663.5 175.2h2.5M667.5 175.2h1.5M671.5 175.2h1.5M668.5 176.2h4.5M669.5 177.2h2.5M672.5 190.3h3.5M671.5 191.3h2.5M674.5 191.3h1.5M705.5 191.3h2.5M665.5 192.3h1.5M669.5 192.3h2.5M675.5 192.3h1.5M704.5 192.3h4.5M664.5 193.3h6.5M675.5 193.3h1.5M699.5 193.3h1.5M704.5 193.3h1.5M706.5 193.3h3.5M735.5 193.3h2.5M744.5 193.3h1.5M664.5 194.3h5.5M676.5 194.3h1.5M698.5 194.3h3.5M704.5 194.3h6.5M734.5 194.3h6.5M744.5 194.3h1.5M662.5 195.3h6.5M676.5 195.3h1.5M698.5 195.3h4.5M704.5 195.3h6.5M734.5 195.3h6.5M744.5 195.3h1.5M662.5 196.3h6.5M676.5 196.3h1.5M698.5 196.3h4.5M707.5 196.3h2.5M734.5 196.3h6.5M744.5 196.3h1.5M662.5 197.3h6.5M673.5 197.3h4.5M699.5 197.3h3.5M708.5 197.3h1.5M735.5 197.3h4.5M667.5 198.3h2.5M672.5 198.3h5.5M735.5 198.3h3.5M668.5 199.3h1.5M671.5 199.3h2.5M674.5 199.3h3.5M736.5 199.3h1.5M669.5 200.3h3.5M676.5 200.3h1.5M682.5 200.3h1.5M670.5 201.3h1.5M676.5 201.3h1.5M682.5 201.3h1.5M682.5 202.4h1.5M682.5 203.4h1.5M682.5 204.4h1.5M682.5 205.4h1.5M682.5 206.4h1.5M662.5 207.4h1.5M682.5 207.4h1.5M661.5 208.4h2.5M682.5 208.4h1.5M661.5 209.4h3.5M682.5 209.4h1.5M661.5 210.4h1.5M663.5 210.4h1.5M682.5 210.4h1.5"/>
<path stroke="#585858" stroke-width="1.51" d="M662.5 175.2h1.5M665.5 175.2h2.5M672.5 175.2h1.5M707.5 175.2h2.5M662.5 176.2h6.5M672.5 176.2h1.5M707.5 176.2h2.5M664.5 177.2h1.5M668.5 177.2h1.5M671.5 177.2h2.5M707.5 177.2h2.5M713.5 177.2h1.5M669.5 178.2h4.5M707.5 178.2h2.5M713.5 178.2h2.5M671.5 179.2h2.5M707.5 179.2h2.5M713.5 179.2h2.5M708.5 180.2h1.5M713.5 180.2h2.5M713.5 181.2h2.5M713.5 182.2h3.5M713.5 183.2h3.5M713.5 184.3h3.5M713.5 185.3h3.5M660.5 186.3h1.5M713.5 186.3h2.5M660.5 187.3h1.5M665.5 187.3h1.5M713.5 187.3h2.5M660.5 188.3h1.5M665.5 188.3h2.5M673.5 188.3h1.5M712.5 188.3h2.5M660.5 189.3h1.5M665.5 189.3h3.5M672.5 189.3h3.5M706.5 189.3h1.5M712.5 189.3h2.5M744.5 189.3h1.5M660.5 190.3h1.5M664.5 190.3h5.5M670.5 190.3h2.5M675.5 190.3h1.5M699.5 190.3h1.5M705.5 190.3h3.5M711.5 190.3h3.5M744.5 190.3h1.5M660.5 191.3h1.5M664.5 191.3h7.5M675.5 191.3h1.5M698.5 191.3h2.5M704.5 191.3h1.5M707.5 191.3h7.5M724.5 191.3h2.5M728.5 191.3h1.5M735.5 191.3h1.5M743.5 191.3h2.5M660.5 192.3h2.5M663.5 192.3h2.5M666.5 192.3h3.5M676.5 192.3h1.5M698.5 192.3h3.5M708.5 192.3h6.5M724.5 192.3h6.5M734.5 192.3h6.5M742.5 192.3h3.5M660.5 193.3h4.5M676.5 193.3h1.5M697.5 193.3h2.5M700.5 193.3h4.5M709.5 193.3h6.5M724.5 193.3h6.5M733.5 193.3h2.5M737.5 193.3h7.5M660.5 194.3h4.5M677.5 194.3h1.5M697.5 194.3h1.5M701.5 194.3h3.5M710.5 194.3h4.5M724.5 194.3h6.5M733.5 194.3h1.5M740.5 194.3h4.5M660.5 195.3h2.5M677.5 195.3h1.5M682.5 195.3h1.5M697.5 195.3h1.5M702.5 195.3h2.5M710.5 195.3h4.5M724.5 195.3h7.5M732.5 195.3h2.5M740.5 195.3h4.5M661.5 196.3h1.5M677.5 196.3h2.5M681.5 196.3h2.5M697.5 196.3h1.5M702.5 196.3h5.5M709.5 196.3h2.5M724.5 196.3h10.5M740.5 196.3h4.5M661.5 197.3h1.5M677.5 197.3h2.5M681.5 197.3h3.5M697.5 197.3h2.5M702.5 197.3h6.5M709.5 197.3h2.5M725.5 197.3h4.5M731.5 197.3h4.5M739.5 197.3h3.5M743.5 197.3h2.5M662.5 198.3h5.5M677.5 198.3h2.5M681.5 198.3h3.5M697.5 198.3h7.5M707.5 198.3h3.5M726.5 198.3h2.5M732.5 198.3h3.5M738.5 198.3h3.5M744.5 198.3h1.5M662.5 199.3h6.5M673.5 199.3h1.5M677.5 199.3h2.5M680.5 199.3h4.5M697.5 199.3h6.5M708.5 199.3h2.5M726.5 199.3h1.5M733.5 199.3h3.5M737.5 199.3h2.5M744.5 199.3h1.5M667.5 200.3h2.5M672.5 200.3h4.5M677.5 200.3h2.5M680.5 200.3h2.5M683.5 200.3h1.5M709.5 200.3h1.5M735.5 200.3h3.5M668.5 201.3h2.5M671.5 201.3h5.5M677.5 201.3h2.5M680.5 201.3h2.5M683.5 201.3h1.5M735.5 201.3h3.5M669.5 202.4h4.5M674.5 202.4h5.5M681.5 202.4h1.5M683.5 202.4h1.5M736.5 202.4h2.5M670.5 203.4h1.5M675.5 203.4h3.5M681.5 203.4h1.5M683.5 203.4h1.5M736.5 203.4h2.5M675.5 204.4h3.5M681.5 204.4h1.5M683.5 204.4h1.5M736.5 204.4h1.5M662.5 205.4h1.5M675.5 205.4h3.5M681.5 205.4h1.5M683.5 205.4h1.5M689.5 205.4h1.5M661.5 206.4h2.5M675.5 206.4h3.5M681.5 206.4h1.5M683.5 206.4h1.5M688.5 206.4h2.5M661.5 207.4h1.5M663.5 207.4h1.5M675.5 207.4h2.5M681.5 207.4h1.5M683.5 207.4h1.5M688.5 207.4h2.5M663.5 208.4h1.5M674.5 208.4h3.5M681.5 208.4h1.5M683.5 208.4h1.5M695.5 208.4h1.5M674.5 209.4h3.5M681.5 209.4h1.5M683.5 209.4h1.5M695.5 209.4h2.5M674.5 210.4h3.5M681.5 210.4h1.5M683.5 210.4h1.5M695.5 210.4h2.5M736.5 210.4h1.5"/>
<path stroke="#6b6b6b" stroke-width="1.51" d="M659.5 175.2h3.5M673.5 175.2h1.5M684.5 175.2h1.5M706.5 175.2h1.5M709.5 175.2h1.5M713.5 175.2h2.5M720.5 175.2h2.5M659.5 176.2h1.5M661.5 176.2h1.5M673.5 176.2h1.5M683.5 176.2h2.5M706.5 176.2h1.5M709.5 176.2h1.5M712.5 176.2h3.5M720.5 176.2h2.5M662.5 177.2h2.5M665.5 177.2h3.5M673.5 177.2h1.5M683.5 177.2h2.5M706.5 177.2h1.5M709.5 177.2h1.5M712.5 177.2h1.5M714.5 177.2h1.5M663.5 178.2h6.5M673.5 178.2h2.5M683.5 178.2h2.5M706.5 178.2h1.5M709.5 178.2h1.5M712.5 178.2h1.5M715.5 178.2h1.5M664.5 179.2h2.5M668.5 179.2h3.5M673.5 179.2h2.5M683.5 179.2h1.5M709.5 179.2h1.5M712.5 179.2h1.5M715.5 179.2h1.5M664.5 180.2h2.5M669.5 180.2h6.5M683.5 180.2h1.5M707.5 180.2h1.5M709.5 180.2h1.5M712.5 180.2h1.5M715.5 180.2h1.5M725.5 180.2h1.5M728.5 180.2h3.5M664.5 181.2h2.5M670.5 181.2h5.5M683.5 181.2h1.5M707.5 181.2h3.5M712.5 181.2h1.5M715.5 181.2h1.5M724.5 181.2h7.5M664.5 182.2h2.5M671.5 182.2h4.5M683.5 182.2h1.5M707.5 182.2h2.5M712.5 182.2h1.5M724.5 182.2h2.5M728.5 182.2h3.5M660.5 183.2h2.5M663.5 183.2h3.5M672.5 183.2h3.5M682.5 183.2h2.5M692.5 183.2h2.5M707.5 183.2h2.5M712.5 183.2h1.5M716.5 183.2h1.5M724.5 183.2h2.5M728.5 183.2h3.5M659.5 184.3h7.5M672.5 184.3h3.5M682.5 184.3h2.5M692.5 184.3h2.5M712.5 184.3h1.5M716.5 184.3h1.5M728.5 184.3h3.5M659.5 185.3h8.5M673.5 185.3h2.5M682.5 185.3h2.5M692.5 185.3h2.5M699.5 185.3h1.5M712.5 185.3h1.5M716.5 185.3h2.5M729.5 185.3h1.5M659.5 186.3h1.5M661.5 186.3h7.5M673.5 186.3h2.5M682.5 186.3h2.5M692.5 186.3h2.5M698.5 186.3h2.5M712.5 186.3h1.5M715.5 186.3h3.5M729.5 186.3h1.5M744.5 186.3h1.5M659.5 187.3h1.5M661.5 187.3h4.5M666.5 187.3h3.5M672.5 187.3h3.5M682.5 187.3h2.5M692.5 187.3h2.5M698.5 187.3h2.5M712.5 187.3h1.5M715.5 187.3h3.5M724.5 187.3h1.5M729.5 187.3h1.5M743.5 187.3h2.5M659.5 188.3h1.5M661.5 188.3h4.5M667.5 188.3h6.5M674.5 188.3h2.5M682.5 188.3h1.5M692.5 188.3h2.5M698.5 188.3h2.5M705.5 188.3h3.5M711.5 188.3h1.5M714.5 188.3h4.5M724.5 188.3h1.5M729.5 188.3h1.5M742.5 188.3h3.5M659.5 189.3h1.5M661.5 189.3h4.5M668.5 189.3h4.5M675.5 189.3h1.5M680.5 189.3h3.5M693.5 189.3h1.5M698.5 189.3h3.5M704.5 189.3h2.5M707.5 189.3h5.5M714.5 189.3h5.5M723.5 189.3h3.5M728.5 189.3h2.5M734.5 189.3h2.5M742.5 189.3h2.5M659.5 190.3h1.5M661.5 190.3h3.5M669.5 190.3h1.5M676.5 190.3h1.5M679.5 190.3h4.5M693.5 190.3h1.5M698.5 190.3h1.5M700.5 190.3h1.5M704.5 190.3h1.5M708.5 190.3h3.5M714.5 190.3h5.5M723.5 190.3h7.5M734.5 190.3h3.5M741.5 190.3h3.5M659.5 191.3h1.5M661.5 191.3h3.5M676.5 191.3h7.5M697.5 191.3h1.5M700.5 191.3h2.5M703.5 191.3h1.5M714.5 191.3h10.5M726.5 191.3h2.5M729.5 191.3h2.5M733.5 191.3h2.5M736.5 191.3h7.5M659.5 192.3h1.5M662.5 192.3h1.5M677.5 192.3h7.5M696.5 192.3h2.5M701.5 192.3h3.5M714.5 192.3h10.5M730.5 192.3h1.5M732.5 192.3h2.5M740.5 192.3h2.5M659.5 193.3h1.5M677.5 193.3h7.5M696.5 193.3h1.5M715.5 193.3h9.5M730.5 193.3h3.5M659.5 194.3h1.5M678.5 194.3h6.5M694.5 194.3h3.5M714.5 194.3h6.5M722.5 194.3h2.5M730.5 194.3h3.5M659.5 195.3h1.5M678.5 195.3h4.5M683.5 195.3h1.5M694.5 195.3h3.5M714.5 195.3h6.5M722.5 195.3h2.5M731.5 195.3h1.5M659.5 196.3h2.5M679.5 196.3h2.5M683.5 196.3h1.5M694.5 196.3h3.5M711.5 196.3h5.5M718.5 196.3h1.5M723.5 196.3h1.5M660.5 197.3h1.5M679.5 197.3h2.5M684.5 197.3h1.5M694.5 197.3h3.5M711.5 197.3h4.5M723.5 197.3h2.5M729.5 197.3h2.5M742.5 197.3h1.5M660.5 198.3h2.5M679.5 198.3h2.5M684.5 198.3h1.5M694.5 198.3h3.5M704.5 198.3h3.5M710.5 198.3h3.5M724.5 198.3h2.5M728.5 198.3h4.5M741.5 198.3h3.5M661.5 199.3h1.5M679.5 199.3h1.5M684.5 199.3h1.5M695.5 199.3h2.5M703.5 199.3h5.5M710.5 199.3h2.5M724.5 199.3h2.5M727.5 199.3h6.5M739.5 199.3h3.5M743.5 199.3h1.5M661.5 200.3h6.5M679.5 200.3h1.5M684.5 200.3h1.5M694.5 200.3h12.5M707.5 200.3h2.5M710.5 200.3h1.5M725.5 200.3h4.5M730.5 200.3h5.5M738.5 200.3h3.5M744.5 200.3h1.5M662.5 201.3h3.5M667.5 201.3h1.5M679.5 201.3h1.5M684.5 201.3h1.5M694.5 201.3h6.5M702.5 201.3h3.5M708.5 201.3h3.5M725.5 201.3h3.5M731.5 201.3h4.5M738.5 201.3h1.5M744.5 201.3h1.5M662.5 202.4h2.5M668.5 202.4h1.5M673.5 202.4h1.5M679.5 202.4h2.5M684.5 202.4h1.5M689.5 202.4h1.5M694.5 202.4h5.5M704.5 202.4h1.5M708.5 202.4h3.5M725.5 202.4h3.5M732.5 202.4h4.5M738.5 202.4h1.5M661.5 203.4h2.5M668.5 203.4h2.5M671.5 203.4h4.5M678.5 203.4h3.5M684.5 203.4h1.5M688.5 203.4h3.5M694.5 203.4h4.5M725.5 203.4h3.5M735.5 203.4h1.5M661.5 204.4h2.5M669.5 204.4h6.5M678.5 204.4h3.5M684.5 204.4h1.5M688.5 204.4h3.5M694.5 204.4h4.5M725.5 204.4h3.5M735.5 204.4h1.5M737.5 204.4h1.5M661.5 205.4h1.5M663.5 205.4h1.5M669.5 205.4h6.5M678.5 205.4h3.5M684.5 205.4h1.5M687.5 205.4h2.5M690.5 205.4h1.5M694.5 205.4h4.5M725.5 205.4h3.5M735.5 205.4h3.5M660.5 206.4h1.5M663.5 206.4h1.5M669.5 206.4h6.5M678.5 206.4h3.5M684.5 206.4h1.5M687.5 206.4h1.5M690.5 206.4h1.5M694.5 206.4h3.5M725.5 206.4h2.5M735.5 206.4h3.5M660.5 207.4h1.5M669.5 207.4h3.5M673.5 207.4h2.5M677.5 207.4h4.5M684.5 207.4h1.5M687.5 207.4h1.5M690.5 207.4h1.5M694.5 207.4h3.5M735.5 207.4h3.5M660.5 208.4h1.5M670.5 208.4h2.5M673.5 208.4h1.5M677.5 208.4h4.5M684.5 208.4h1.5M687.5 208.4h4.5M694.5 208.4h1.5M696.5 208.4h1.5M735.5 208.4h3.5M660.5 209.4h1.5M664.5 209.4h1.5M670.5 209.4h2.5M673.5 209.4h1.5M677.5 209.4h1.5M679.5 209.4h2.5M687.5 209.4h4.5M694.5 209.4h1.5M697.5 209.4h1.5M735.5 209.4h3.5M660.5 210.4h1.5M664.5 210.4h1.5M670.5 210.4h1.5M673.5 210.4h1.5M677.5 210.4h1.5M680.5 210.4h1.5M687.5 210.4h3.5M694.5 210.4h1.5M697.5 210.4h1.5M731.5 210.4h1.5M735.5 210.4h1.5M737.5 210.4h1.5"/>
<path stroke="#939393" stroke-width="1.51" d="M679.5 175.2h1.5M682.5 175.2h1.5M699.5 175.2h1.5M716.5 175.2h1.5M718.5 175.2h1.5M731.5 175.2h2.5M676.5 176.2h1.5M682.5 176.2h1.5M699.5 176.2h3.5M716.5 176.2h1.5M718.5 176.2h1.5M723.5 176.2h1.5M730.5 176.2h4.5M736.5 176.2h1.5M658.5 177.2h1.5M676.5 177.2h1.5M682.5 177.2h1.5M685.5 177.2h1.5M691.5 177.2h1.5M700.5 177.2h2.5M705.5 177.2h1.5M716.5 177.2h1.5M718.5 177.2h1.5M723.5 177.2h8.5M732.5 177.2h6.5M658.5 178.2h1.5M676.5 178.2h2.5M680.5 178.2h2.5M685.5 178.2h1.5M690.5 178.2h4.5M700.5 178.2h2.5M705.5 178.2h1.5M716.5 178.2h1.5M718.5 178.2h2.5M723.5 178.2h1.5M727.5 178.2h2.5M733.5 178.2h6.5M658.5 179.2h2.5M661.5 179.2h1.5M676.5 179.2h2.5M680.5 179.2h2.5M685.5 179.2h1.5M690.5 179.2h5.5M700.5 179.2h1.5M705.5 179.2h1.5M716.5 179.2h7.5M736.5 179.2h3.5M744.5 179.2h1.5M658.5 180.2h2.5M676.5 180.2h2.5M680.5 180.2h2.5M685.5 180.2h1.5M690.5 180.2h2.5M693.5 180.2h2.5M700.5 180.2h1.5M705.5 180.2h1.5M717.5 180.2h6.5M737.5 180.2h3.5M743.5 180.2h2.5M658.5 181.2h1.5M676.5 181.2h2.5M680.5 181.2h2.5M685.5 181.2h1.5M690.5 181.2h2.5M694.5 181.2h1.5M698.5 181.2h3.5M717.5 181.2h6.5M733.5 181.2h1.5M737.5 181.2h3.5M743.5 181.2h2.5M658.5 182.2h1.5M676.5 182.2h2.5M680.5 182.2h2.5M685.5 182.2h1.5M690.5 182.2h1.5M694.5 182.2h7.5M718.5 182.2h5.5M733.5 182.2h1.5M737.5 182.2h3.5M742.5 182.2h2.5M658.5 183.2h1.5M676.5 183.2h3.5M680.5 183.2h1.5M685.5 183.2h1.5M690.5 183.2h1.5M694.5 183.2h4.5M700.5 183.2h2.5M710.5 183.2h1.5M718.5 183.2h5.5M732.5 183.2h2.5M737.5 183.2h3.5M742.5 183.2h2.5M657.5 184.3h1.5M676.5 184.3h3.5M680.5 184.3h1.5M685.5 184.3h1.5M690.5 184.3h1.5M695.5 184.3h2.5M701.5 184.3h1.5M705.5 184.3h1.5M710.5 184.3h1.5M719.5 184.3h4.5M732.5 184.3h2.5M736.5 184.3h3.5M741.5 184.3h2.5M657.5 185.3h1.5M676.5 185.3h3.5M680.5 185.3h1.5M685.5 185.3h1.5M690.5 185.3h1.5M695.5 185.3h2.5M701.5 185.3h1.5M705.5 185.3h1.5M709.5 185.3h2.5M719.5 185.3h4.5M732.5 185.3h2.5M736.5 185.3h3.5M740.5 185.3h2.5M657.5 186.3h1.5M676.5 186.3h3.5M685.5 186.3h1.5M695.5 186.3h2.5M701.5 186.3h1.5M705.5 186.3h1.5M709.5 186.3h2.5M719.5 186.3h4.5M731.5 186.3h3.5M736.5 186.3h2.5M740.5 186.3h2.5M676.5 187.3h2.5M685.5 187.3h1.5M691.5 187.3h1.5M695.5 187.3h2.5M701.5 187.3h1.5M704.5 187.3h1.5M720.5 187.3h3.5M731.5 187.3h3.5M736.5 187.3h5.5M677.5 188.3h1.5M685.5 188.3h1.5M691.5 188.3h1.5M695.5 188.3h2.5M701.5 188.3h3.5M731.5 188.3h2.5M737.5 188.3h4.5M685.5 189.3h1.5M691.5 189.3h1.5M696.5 189.3h1.5M702.5 189.3h2.5M731.5 189.3h2.5M738.5 189.3h1.5M685.5 190.3h1.5M691.5 190.3h1.5M685.5 191.3h4.5M691.5 191.3h1.5M657.5 192.3h1.5M685.5 192.3h5.5M691.5 192.3h1.5M657.5 193.3h1.5M685.5 193.3h5.5M657.5 194.3h1.5M685.5 194.3h5.5M692.5 194.3h1.5M656.5 195.3h2.5M685.5 195.3h5.5M692.5 195.3h1.5M656.5 196.3h2.5M685.5 196.3h5.5M692.5 196.3h1.5M656.5 197.3h1.5M685.5 197.3h5.5M692.5 197.3h1.5M658.5 198.3h1.5M685.5 198.3h5.5M692.5 198.3h1.5M721.5 198.3h1.5M657.5 199.3h3.5M686.5 199.3h4.5M692.5 199.3h1.5M720.5 199.3h2.5M657.5 200.3h3.5M686.5 200.3h3.5M690.5 200.3h3.5M720.5 200.3h3.5M657.5 201.3h3.5M686.5 201.3h2.5M690.5 201.3h2.5M713.5 201.3h2.5M720.5 201.3h3.5M742.5 201.3h2.5M657.5 202.4h4.5M686.5 202.4h1.5M712.5 202.4h4.5M720.5 202.4h3.5M740.5 202.4h2.5M743.5 202.4h1.5M657.5 203.4h3.5M665.5 203.4h2.5M700.5 203.4h3.5M711.5 203.4h2.5M714.5 203.4h2.5M720.5 203.4h3.5M739.5 203.4h3.5M743.5 203.4h1.5M657.5 204.4h3.5M664.5 204.4h3.5M699.5 204.4h2.5M702.5 204.4h1.5M711.5 204.4h1.5M714.5 204.4h2.5M720.5 204.4h3.5M739.5 204.4h2.5M743.5 204.4h1.5M657.5 205.4h3.5M664.5 205.4h4.5M699.5 205.4h1.5M702.5 205.4h2.5M707.5 205.4h4.5M715.5 205.4h1.5M720.5 205.4h3.5M739.5 205.4h2.5M743.5 205.4h1.5M656.5 206.4h4.5M665.5 206.4h1.5M667.5 206.4h1.5M699.5 206.4h1.5M703.5 206.4h1.5M706.5 206.4h5.5M715.5 206.4h1.5M720.5 206.4h2.5M732.5 206.4h2.5M738.5 206.4h3.5M743.5 206.4h1.5M656.5 207.4h4.5M665.5 207.4h1.5M667.5 207.4h1.5M698.5 207.4h1.5M703.5 207.4h2.5M706.5 207.4h2.5M715.5 207.4h2.5M720.5 207.4h2.5M732.5 207.4h2.5M738.5 207.4h1.5M740.5 207.4h4.5M658.5 208.4h1.5M665.5 208.4h1.5M667.5 208.4h1.5M698.5 208.4h1.5M704.5 208.4h3.5M716.5 208.4h2.5M720.5 208.4h2.5M728.5 208.4h1.5M733.5 208.4h1.5M738.5 208.4h1.5M740.5 208.4h4.5M665.5 209.4h1.5M668.5 209.4h1.5M698.5 209.4h1.5M704.5 209.4h3.5M717.5 209.4h1.5M720.5 209.4h3.5M726.5 209.4h3.5M738.5 209.4h1.5M740.5 209.4h4.5M665.5 210.4h1.5M668.5 210.4h1.5M698.5 210.4h1.5M704.5 210.4h2.5M721.5 210.4h2.5M726.5 210.4h1.5M728.5 210.4h2.5M738.5 210.4h1.5M740.5 210.4h4.5"/>
<path stroke="#a6a6a6" stroke-width="1.51" d="M657.5 175.2h1.5M680.5 175.2h1.5M686.5 175.2h1.5M689.5 175.2h4.5M694.5 175.2h2.5M698.5 175.2h1.5M702.5 175.2h3.5M717.5 175.2h1.5M723.5 175.2h4.5M730.5 175.2h1.5M733.5 175.2h5.5M657.5 176.2h1.5M680.5 176.2h2.5M686.5 176.2h1.5M689.5 176.2h7.5M698.5 176.2h1.5M702.5 176.2h1.5M704.5 176.2h1.5M717.5 176.2h1.5M724.5 176.2h6.5M734.5 176.2h2.5M737.5 176.2h2.5M657.5 177.2h1.5M680.5 177.2h2.5M686.5 177.2h1.5M689.5 177.2h2.5M692.5 177.2h4.5M699.5 177.2h1.5M702.5 177.2h1.5M704.5 177.2h1.5M717.5 177.2h1.5M738.5 177.2h1.5M657.5 178.2h1.5M686.5 178.2h1.5M689.5 178.2h1.5M694.5 178.2h3.5M699.5 178.2h1.5M702.5 178.2h1.5M704.5 178.2h1.5M717.5 178.2h1.5M739.5 178.2h1.5M743.5 178.2h2.5M657.5 179.2h1.5M686.5 179.2h1.5M689.5 179.2h1.5M695.5 179.2h5.5M701.5 179.2h1.5M739.5 179.2h2.5M742.5 179.2h2.5M657.5 180.2h1.5M686.5 180.2h1.5M689.5 180.2h1.5M695.5 180.2h5.5M701.5 180.2h1.5M740.5 180.2h3.5M657.5 181.2h1.5M686.5 181.2h1.5M689.5 181.2h1.5M695.5 181.2h3.5M701.5 181.2h1.5M705.5 181.2h1.5M740.5 181.2h3.5M656.5 182.2h2.5M689.5 182.2h1.5M701.5 182.2h1.5M705.5 182.2h1.5M740.5 182.2h2.5M656.5 183.2h2.5M689.5 183.2h1.5M705.5 183.2h1.5M740.5 183.2h2.5M656.5 184.3h1.5M689.5 184.3h1.5M702.5 184.3h1.5M739.5 184.3h2.5M656.5 185.3h1.5M689.5 185.3h1.5M702.5 185.3h1.5M704.5 185.3h1.5M739.5 185.3h1.5M689.5 186.3h2.5M702.5 186.3h3.5M738.5 186.3h2.5M657.5 187.3h1.5M686.5 187.3h1.5M689.5 187.3h2.5M702.5 187.3h2.5M657.5 188.3h1.5M686.5 188.3h5.5M657.5 189.3h1.5M686.5 189.3h5.5M657.5 190.3h1.5M686.5 190.3h5.5M657.5 191.3h1.5M689.5 191.3h2.5M690.5 192.3h1.5M656.5 193.3h1.5M690.5 193.3h2.5M656.5 194.3h1.5M690.5 194.3h2.5M690.5 195.3h2.5M690.5 196.3h2.5M690.5 197.3h2.5M690.5 198.3h2.5M690.5 199.3h2.5M742.5 202.4h1.5M713.5 203.4h1.5M742.5 203.4h1.5M701.5 204.4h1.5M712.5 204.4h2.5M741.5 204.4h2.5M700.5 205.4h2.5M711.5 205.4h4.5M741.5 205.4h2.5M666.5 206.4h1.5M700.5 206.4h3.5M711.5 206.4h4.5M741.5 206.4h2.5M666.5 207.4h1.5M699.5 207.4h2.5M702.5 207.4h1.5M708.5 207.4h4.5M714.5 207.4h1.5M739.5 207.4h1.5M656.5 208.4h2.5M666.5 208.4h1.5M699.5 208.4h1.5M702.5 208.4h2.5M707.5 208.4h5.5M714.5 208.4h2.5M739.5 208.4h1.5M656.5 209.4h3.5M666.5 209.4h2.5M699.5 209.4h1.5M703.5 209.4h1.5M707.5 209.4h5.5M714.5 209.4h3.5M739.5 209.4h1.5M658.5 210.4h1.5M666.5 210.4h2.5M699.5 210.4h1.5M703.5 210.4h1.5M706.5 210.4h1.5M709.5 210.4h4.5M717.5 210.4h1.5M727.5 210.4h1.5M739.5 210.4h1.5"/>
<path stroke="#bababa" stroke-width="1.51" d="M681.5 175.2h1.5M688.5 175.2h1.5M693.5 175.2h1.5M696.5 175.2h2.5M727.5 175.2h3.5M738.5 175.2h1.5M687.5 176.2h2.5M696.5 176.2h2.5M703.5 176.2h1.5M739.5 176.2h1.5M687.5 177.2h2.5M696.5 177.2h3.5M703.5 177.2h1.5M739.5 177.2h2.5M742.5 177.2h3.5M687.5 178.2h2.5M697.5 178.2h2.5M703.5 178.2h1.5M740.5 178.2h3.5M656.5 179.2h1.5M687.5 179.2h2.5M702.5 179.2h3.5M741.5 179.2h1.5M656.5 180.2h1.5M687.5 180.2h2.5M702.5 180.2h3.5M656.5 181.2h1.5M687.5 181.2h2.5M702.5 181.2h3.5M686.5 182.2h3.5M702.5 182.2h3.5M686.5 183.2h3.5M702.5 183.2h3.5M686.5 184.3h3.5M703.5 184.3h2.5M686.5 185.3h3.5M703.5 185.3h1.5M656.5 186.3h1.5M686.5 186.3h3.5M656.5 187.3h1.5M687.5 187.3h2.5M656.5 188.3h1.5M656.5 189.3h1.5M656.5 190.3h1.5M656.5 191.3h1.5M656.5 192.3h1.5M701.5 207.4h1.5M712.5 207.4h2.5M700.5 208.4h2.5M712.5 208.4h2.5M700.5 209.4h3.5M712.5 209.4h2.5M656.5 210.4h2.5M700.5 210.4h3.5M707.5 210.4h2.5M713.5 210.4h4.5"/>
<path stroke="#cdcdcd" stroke-width="1.51" d="M656.5 175.2h1.5M687.5 175.2h1.5M739.5 175.2h1.5M742.5 175.2h3.5M656.5 176.2h1.5M740.5 176.2h5.5M656.5 177.2h1.5M741.5 177.2h1.5M656.5 178.2h1.5"/>
<path stroke="#e1e1e1" stroke-width="1.51" d="M740.5 175.2h2.5"/>
</g>
<rect x="467.4" y="174.1" width="280.4" height="37.4" fill="none" stroke="#ffa500" stroke-width="1.7"/>
<rect x="466.5" y="173.3" width="2.4" height="39.0" fill="#ffa500"/>
<text transform="translate(446.00 185.10) scale(1.05 1)" font-family="'Liberation Sans', sans-serif" font-size="8.4" fill="#000" stroke="#000" stroke-width="0.18">0.16</text>
<text transform="translate(446.00 193.50) scale(1.05 1)" font-family="'Liberation Sans', sans-serif" font-size="8.4" fill="#000" stroke="#000" stroke-width="0.18">1.17</text>
<text transform="translate(446.00 201.90) scale(1.05 1)" font-family="'Liberation Sans', sans-serif" font-size="8.4" fill="#000" stroke="#000" stroke-width="0.18">222</text>
<text transform="translate(750.30 179.10) scale(1.05 1)" font-family="'Liberation Sans', sans-serif" font-size="5.9" fill="#000" stroke="#000" stroke-width="0.18">1.07"</text>
<text transform="translate(750.30 186.30) scale(1.05 1)" font-family="'Liberation Sans', sans-serif" font-size="5.9" fill="#000" stroke="#000" stroke-width="0.18">(248, 43)</text>
<text transform="translate(750.30 194.30) scale(1.05 1)" font-family="'Liberation Sans', sans-serif" font-size="5.9" fill="#000" stroke="#000" stroke-width="0.18">20220619</text>
<text transform="translate(750.30 201.50) scale(1.05 1)" font-family="'Liberation Sans', sans-serif" font-size="5.9" fill="#000" stroke="#000" stroke-width="0.18">v013_07</text>
<text transform="translate(750.30 208.70) scale(1.05 1)" font-family="'Liberation Sans', sans-serif" font-size="5.9" fill="#000" stroke="#000" stroke-width="0.18">421_LL_003</text>
<g><rect x="469.6" y="214.4" width="90" height="36.2" fill="#8f8f8f"/>
<path stroke="#0f0f0f" stroke-width="2.51" d="M531.6 217.4h2.5M489.6 223.5h2.5M527.6 231.5h2.5M529.6 235.5h2.5M535.6 235.5h2.5M551.6 237.5h2.5M555.6 245.6h2.5M505.6 247.6h2.5"/>
<path stroke="#2f2f2f" stroke-width="2.51" d="M479.6 215.4h2.5M497.6 215.4h2.5M541.6 215.4h2.5M545.6 217.4h2.5M469.6 219.4h4.5M479.6 219.4h2.5M491.6 221.4h2.5M495.6 221.4h2.5M479.6 223.5h2.5M539.6 223.5h2.5M489.6 225.5h2.5M549.6 229.5h2.5M537.6 231.5h2.5M543.6 231.5h2.5M469.6 233.5h4.5M481.6 233.5h2.5M493.6 233.5h2.5M505.6 233.5h2.5M539.6 233.5h2.5M549.6 233.5h2.5M479.6 235.5h2.5M487.6 235.5h4.5M497.6 235.5h2.5M503.6 235.5h4.5M539.6 237.5h2.5M545.6 237.5h2.5M519.6 239.5h2.5M545.6 239.5h2.5M515.6 243.6h2.5M503.6 245.6h2.5M521.6 245.6h2.5M481.6 249.6h2.5M549.6 249.6h2.5"/>
<path stroke="#4f4f4f" stroke-width="2.51" d="M515.6 215.4h2.5M545.6 215.4h2.5M487.6 217.4h2.5M517.6 217.4h2.5M525.6 217.4h2.5M547.6 217.4h2.5M483.6 219.4h2.5M525.6 219.4h2.5M541.6 219.4h4.5M551.6 219.4h2.5M555.6 219.4h2.5M521.6 221.4h2.5M543.6 221.4h2.5M549.6 221.4h2.5M493.6 223.5h2.5M497.6 223.5h4.5M545.6 223.5h2.5M553.6 223.5h2.5M469.6 225.5h2.5M509.6 225.5h2.5M513.6 225.5h2.5M527.6 225.5h2.5M553.6 225.5h2.5M475.6 227.5h4.5M493.6 227.5h2.5M499.6 227.5h2.5M515.6 227.5h4.5M529.6 227.5h2.5M539.6 227.5h2.5M549.6 227.5h2.5M469.6 229.5h2.5M477.6 229.5h2.5M483.6 229.5h2.5M491.6 229.5h6.5M511.6 229.5h2.5M545.6 229.5h2.5M555.6 229.5h2.5M469.6 231.5h4.5M475.6 231.5h2.5M483.6 231.5h2.5M491.6 231.5h2.5M501.6 231.5h2.5M511.6 231.5h2.5M519.6 231.5h4.5M533.6 231.5h2.5M541.6 231.5h2.5M551.6 231.5h2.5M473.6 233.5h2.5M483.6 233.5h2.5M491.6 233.5h2.5M501.6 233.5h2.5M507.6 233.5h10.5M533.6 233.5h4.5M547.6 233.5h2.5M469.6 235.5h2.5M473.6 235.5h2.5M485.6 235.5h2.5M493.6 235.5h2.5M499.6 235.5h4.5M511.6 235.5h2.5M519.6 235.5h2.5M533.6 235.5h2.5M547.6 235.5h4.5M477.6 237.5h2.5M481.6 237.5h4.5M487.6 237.5h4.5M507.6 237.5h2.5M511.6 237.5h2.5M517.6 237.5h2.5M521.6 237.5h2.5M527.6 237.5h4.5M535.6 237.5h2.5M549.6 237.5h2.5M491.6 239.5h2.5M497.6 239.5h2.5M509.6 239.5h2.5M529.6 239.5h2.5M533.6 239.5h2.5M537.6 239.5h2.5M551.6 239.5h2.5M485.6 241.6h2.5M507.6 241.6h2.5M517.6 241.6h2.5M527.6 241.6h2.5M531.6 241.6h2.5M547.6 241.6h2.5M551.6 241.6h2.5M555.6 241.6h2.5M481.6 243.6h4.5M487.6 243.6h2.5M521.6 243.6h2.5M527.6 243.6h2.5M535.6 243.6h2.5M477.6 245.6h2.5M495.6 245.6h4.5M515.6 245.6h2.5M533.6 245.6h2.5M553.6 245.6h2.5M471.6 247.6h2.5M501.6 247.6h2.5M507.6 247.6h2.5M515.6 247.6h2.5M531.6 247.6h2.5M547.6 247.6h2.5M479.6 249.6h2.5M497.6 249.6h2.5M525.6 249.6h2.5M535.6 249.6h2.5M557.6 249.6h2.5"/>
<path stroke="#6f6f6f" stroke-width="2.51" d="M469.6 215.4h2.5M477.6 215.4h2.5M485.6 215.4h2.5M491.6 215.4h2.5M501.6 215.4h4.5M507.6 215.4h2.5M517.6 215.4h2.5M523.6 215.4h2.5M533.6 215.4h2.5M555.6 215.4h2.5M473.6 217.4h4.5M491.6 217.4h2.5M495.6 217.4h2.5M553.6 217.4h4.5M477.6 219.4h2.5M493.6 219.4h2.5M503.6 219.4h2.5M509.6 219.4h2.5M513.6 219.4h4.5M535.6 219.4h4.5M547.6 219.4h2.5M469.6 221.4h2.5M475.6 221.4h2.5M481.6 221.4h2.5M493.6 221.4h2.5M509.6 221.4h2.5M523.6 221.4h2.5M529.6 221.4h2.5M545.6 221.4h2.5M553.6 221.4h4.5M469.6 223.5h6.5M501.6 223.5h2.5M507.6 223.5h2.5M519.6 223.5h2.5M527.6 223.5h2.5M531.6 223.5h2.5M555.6 223.5h2.5M481.6 225.5h4.5M495.6 225.5h2.5M501.6 225.5h6.5M519.6 225.5h2.5M535.6 225.5h2.5M543.6 225.5h6.5M557.6 225.5h2.5M469.6 227.5h2.5M485.6 227.5h4.5M491.6 227.5h2.5M505.6 227.5h2.5M533.6 227.5h2.5M551.6 227.5h2.5M557.6 227.5h2.5M479.6 229.5h2.5M499.6 229.5h4.5M509.6 229.5h2.5M517.6 229.5h2.5M521.6 229.5h2.5M527.6 229.5h4.5M539.6 229.5h4.5M551.6 229.5h4.5M473.6 231.5h2.5M479.6 231.5h2.5M485.6 231.5h6.5M493.6 231.5h2.5M497.6 231.5h4.5M513.6 231.5h2.5M529.6 231.5h2.5M535.6 231.5h2.5M545.6 231.5h2.5M549.6 231.5h2.5M475.6 233.5h4.5M485.6 233.5h2.5M489.6 233.5h2.5M495.6 233.5h4.5M517.6 233.5h4.5M523.6 233.5h4.5M529.6 233.5h4.5M537.6 233.5h2.5M551.6 233.5h4.5M557.6 233.5h2.5M481.6 235.5h4.5M491.6 235.5h2.5M495.6 235.5h2.5M507.6 235.5h4.5M513.6 235.5h2.5M525.6 235.5h2.5M537.6 235.5h2.5M545.6 235.5h2.5M551.6 235.5h2.5M555.6 235.5h4.5M479.6 237.5h2.5M491.6 237.5h2.5M495.6 237.5h4.5M509.6 237.5h2.5M531.6 237.5h4.5M541.6 237.5h4.5M553.6 237.5h4.5M469.6 239.5h2.5M481.6 239.5h2.5M489.6 239.5h2.5M511.6 239.5h2.5M531.6 239.5h2.5M547.6 239.5h2.5M473.6 241.6h2.5M499.6 241.6h2.5M513.6 241.6h2.5M525.6 241.6h2.5M535.6 241.6h4.5M557.6 241.6h2.5M471.6 243.6h6.5M495.6 243.6h8.5M509.6 243.6h4.5M517.6 243.6h2.5M523.6 243.6h2.5M529.6 243.6h4.5M543.6 243.6h6.5M557.6 243.6h2.5M473.6 245.6h2.5M481.6 245.6h2.5M489.6 245.6h2.5M493.6 245.6h2.5M511.6 245.6h2.5M529.6 245.6h2.5M539.6 245.6h6.5M473.6 247.6h2.5M489.6 247.6h2.5M497.6 247.6h2.5M511.6 247.6h2.5M539.6 247.6h2.5M549.6 247.6h2.5M473.6 249.6h4.5M501.6 249.6h2.5M511.6 249.6h2.5M519.6 249.6h4.5M527.6 249.6h2.5M531.6 249.6h4.5M539.6 249.6h2.5M547.6 249.6h2.5"/>
<path stroke="#afafaf" stroke-width="2.51" d="M475.6 215.4h2.5M481.6 215.4h4.5M489.6 215.4h2.5M493.6 215.4h2.5M505.6 215.4h2.5M509.6 215.4h2.5M519.6 215.4h2.5M527.6 215.4h2.5M531.6 215.4h2.5M553.6 215.4h2.5M471.6 217.4h2.5M477.6 217.4h2.5M503.6 217.4h2.5M511.6 217.4h2.5M515.6 217.4h2.5M519.6 217.4h2.5M535.6 217.4h4.5M541.6 217.4h2.5M551.6 217.4h2.5M557.6 217.4h2.5M485.6 219.4h2.5M489.6 219.4h4.5M495.6 219.4h2.5M499.6 219.4h2.5M505.6 219.4h4.5M531.6 219.4h4.5M553.6 219.4h2.5M477.6 221.4h2.5M483.6 221.4h2.5M503.6 221.4h2.5M511.6 221.4h2.5M519.6 221.4h2.5M525.6 221.4h4.5M537.6 221.4h2.5M547.6 221.4h2.5M551.6 221.4h2.5M557.6 221.4h2.5M503.6 223.5h4.5M509.6 223.5h2.5M517.6 223.5h2.5M533.6 223.5h2.5M551.6 223.5h2.5M487.6 225.5h2.5M491.6 225.5h4.5M521.6 225.5h2.5M541.6 225.5h2.5M549.6 225.5h2.5M471.6 227.5h4.5M483.6 227.5h2.5M489.6 227.5h2.5M497.6 227.5h2.5M501.6 227.5h4.5M511.6 227.5h4.5M523.6 227.5h2.5M535.6 227.5h2.5M541.6 227.5h2.5M553.6 227.5h4.5M473.6 229.5h2.5M531.6 229.5h8.5M543.6 229.5h2.5M557.6 229.5h2.5M477.6 231.5h2.5M495.6 231.5h2.5M505.6 231.5h2.5M531.6 231.5h2.5M557.6 231.5h2.5M499.6 233.5h2.5M517.6 235.5h2.5M523.6 235.5h2.5M513.6 237.5h2.5M519.6 237.5h2.5M523.6 237.5h2.5M557.6 237.5h2.5M475.6 239.5h2.5M483.6 239.5h4.5M493.6 239.5h2.5M501.6 239.5h2.5M505.6 239.5h4.5M515.6 239.5h2.5M523.6 239.5h2.5M535.6 239.5h2.5M539.6 239.5h4.5M549.6 239.5h2.5M557.6 239.5h2.5M479.6 241.6h2.5M495.6 241.6h2.5M521.6 241.6h2.5M545.6 241.6h2.5M549.6 241.6h2.5M485.6 243.6h2.5M513.6 243.6h2.5M525.6 243.6h2.5M469.6 245.6h2.5M475.6 245.6h2.5M479.6 245.6h2.5M483.6 245.6h2.5M487.6 245.6h2.5M501.6 245.6h2.5M507.6 245.6h2.5M517.6 245.6h2.5M537.6 245.6h2.5M557.6 245.6h2.5M477.6 247.6h4.5M485.6 247.6h4.5M493.6 247.6h4.5M503.6 247.6h2.5M509.6 247.6h2.5M519.6 247.6h2.5M523.6 247.6h2.5M537.6 247.6h2.5M541.6 247.6h2.5M545.6 247.6h2.5M551.6 247.6h2.5M555.6 247.6h2.5M493.6 249.6h4.5M513.6 249.6h2.5M517.6 249.6h2.5M529.6 249.6h2.5"/>
<path stroke="#cfcfcf" stroke-width="2.51" d="M471.6 215.4h2.5M511.6 215.4h2.5M547.6 215.4h4.5M557.6 215.4h2.5M499.6 217.4h4.5M527.6 217.4h2.5M539.6 217.4h2.5M497.6 219.4h2.5M501.6 219.4h2.5M519.6 219.4h2.5M529.6 219.4h2.5M545.6 219.4h2.5M479.6 221.4h2.5M507.6 221.4h2.5M485.6 223.5h2.5M491.6 223.5h2.5M537.6 223.5h2.5M557.6 223.5h2.5M479.6 225.5h2.5M485.6 225.5h2.5M525.6 225.5h2.5M529.6 225.5h2.5M539.6 225.5h2.5M479.6 227.5h2.5M519.6 227.5h2.5M527.6 227.5h2.5M531.6 227.5h2.5M537.6 227.5h2.5M485.6 229.5h2.5M507.6 229.5h2.5M515.6 229.5h2.5M503.6 231.5h2.5M547.6 231.5h2.5M473.6 237.5h4.5M471.6 239.5h4.5M477.6 239.5h2.5M517.6 239.5h2.5M525.6 239.5h4.5M483.6 241.6h2.5M487.6 241.6h2.5M491.6 241.6h2.5M497.6 241.6h2.5M519.6 241.6h2.5M469.6 243.6h2.5M479.6 243.6h2.5M491.6 243.6h2.5M505.6 243.6h4.5M537.6 243.6h2.5M549.6 243.6h2.5M555.6 243.6h2.5M485.6 245.6h2.5M513.6 245.6h2.5M519.6 245.6h2.5M469.6 247.6h2.5M481.6 247.6h2.5M491.6 247.6h2.5M499.6 247.6h2.5M517.6 247.6h2.5M527.6 247.6h2.5M535.6 247.6h2.5M483.6 249.6h2.5M487.6 249.6h2.5M499.6 249.6h2.5M509.6 249.6h2.5"/>
<path stroke="#efefef" stroke-width="2.51" d="M551.6 215.4h2.5M479.6 217.4h2.5M483.6 217.4h4.5M521.6 217.4h2.5M549.6 219.4h2.5M489.6 221.4h2.5M501.6 221.4h2.5M505.6 221.4h2.5M513.6 221.4h2.5M477.6 223.5h2.5M529.6 223.5h2.5M541.6 223.5h2.5M549.6 223.5h2.5M475.6 225.5h2.5M523.6 225.5h2.5M551.6 225.5h2.5M471.6 229.5h2.5M523.6 241.6h2.5M543.6 241.6h2.5M557.6 247.6h2.5M505.6 249.6h2.5M545.6 249.6h2.5"/>
</g>
<rect x="563.4" y="214.4" width="90.2" height="36.2" fill="#808080"/>
<g><rect x="656.5" y="214.4" width="89" height="36.2" fill="#7f7f7f"/>
<path stroke="#1d1d1d" stroke-width="1.51" d="M744.5 214.9h1.5"/>
<path stroke="#313131" stroke-width="1.51" d="M698.5 214.9h2.5M740.5 214.9h2.5M744.5 215.9h1.5M721.5 231h1.5M661.5 232h2.5M720.5 232h3.5M727.5 232h1.5M661.5 233h3.5M720.5 233h3.5M726.5 233h3.5M660.5 234h4.5M683.5 234h2.5M721.5 234h1.5M726.5 234h4.5M660.5 235h4.5M683.5 235h1.5M726.5 235h3.5M661.5 236h3.5M727.5 236h2.5"/>
<path stroke="#444444" stroke-width="1.51" d="M679.5 214.9h1.5M711.5 214.9h2.5M742.5 214.9h2.5M698.5 215.9h2.5M740.5 215.9h2.5M743.5 215.9h1.5M699.5 216.9h1.5M744.5 216.9h1.5M699.5 217.9h1.5M744.5 217.9h1.5M744.5 218.9h1.5M719.5 229h1.5M662.5 230h1.5M712.5 230h2.5M719.5 230h6.5M661.5 231h3.5M712.5 231h3.5M719.5 231h2.5M722.5 231h7.5M660.5 232h1.5M663.5 232h1.5M683.5 232h2.5M712.5 232h3.5M719.5 232h1.5M723.5 232h4.5M728.5 232h4.5M659.5 233h2.5M664.5 233h1.5M682.5 233h4.5M702.5 233h1.5M712.5 233h4.5M719.5 233h1.5M723.5 233h3.5M729.5 233h3.5M743.5 233h2.5M659.5 234h1.5M664.5 234h1.5M682.5 234h1.5M685.5 234h1.5M702.5 234h2.5M712.5 234h4.5M720.5 234h1.5M722.5 234h4.5M730.5 234h2.5M742.5 234h3.5M659.5 235h1.5M664.5 235h1.5M682.5 235h1.5M684.5 235h2.5M702.5 235h2.5M713.5 235h2.5M720.5 235h3.5M725.5 235h1.5M729.5 235h2.5M742.5 235h3.5M660.5 236h1.5M664.5 236h1.5M682.5 236h3.5M702.5 236h2.5M726.5 236h1.5M729.5 236h2.5M742.5 236h3.5M660.5 237h5.5M683.5 237h1.5M702.5 237h2.5M726.5 237h3.5M742.5 237h2.5M661.5 238h3.5M742.5 238h2.5M743.5 239h1.5M738.5 250.1h2.5"/>
<path stroke="#585858" stroke-width="1.51" d="M660.5 214.9h2.5M670.5 214.9h2.5M678.5 214.9h1.5M680.5 214.9h2.5M697.5 214.9h1.5M700.5 214.9h1.5M710.5 214.9h1.5M713.5 214.9h1.5M733.5 214.9h2.5M739.5 214.9h1.5M660.5 215.9h2.5M678.5 215.9h4.5M700.5 215.9h1.5M710.5 215.9h3.5M739.5 215.9h1.5M742.5 215.9h1.5M660.5 216.9h2.5M679.5 216.9h3.5M698.5 216.9h1.5M700.5 216.9h1.5M710.5 216.9h3.5M740.5 216.9h4.5M679.5 217.9h3.5M698.5 217.9h1.5M700.5 217.9h1.5M710.5 217.9h3.5M743.5 217.9h1.5M680.5 218.9h1.5M699.5 218.9h1.5M710.5 218.9h3.5M699.5 219.9h1.5M710.5 219.9h2.5M744.5 219.9h1.5M710.5 220.9h2.5M744.5 220.9h1.5M710.5 221.9h2.5M744.5 221.9h1.5M744.5 222.9h1.5M744.5 224h1.5M744.5 225h1.5M713.5 226h1.5M744.5 226h1.5M712.5 227h3.5M718.5 227h2.5M744.5 227h1.5M662.5 228h1.5M712.5 228h3.5M718.5 228h3.5M723.5 228h2.5M744.5 228h1.5M656.5 229h1.5M661.5 229h3.5M688.5 229h2.5M711.5 229h5.5M717.5 229h2.5M720.5 229h7.5M744.5 229h1.5M656.5 230h2.5M660.5 230h2.5M663.5 230h1.5M684.5 230h1.5M688.5 230h2.5M711.5 230h1.5M714.5 230h5.5M725.5 230h7.5M744.5 230h1.5M656.5 231h5.5M664.5 231h1.5M683.5 231h3.5M688.5 231h2.5M694.5 231h3.5M711.5 231h1.5M715.5 231h4.5M729.5 231h4.5M743.5 231h2.5M656.5 232h4.5M664.5 232h1.5M670.5 232h2.5M681.5 232h2.5M685.5 232h1.5M694.5 232h3.5M702.5 232h2.5M711.5 232h1.5M715.5 232h4.5M732.5 232h1.5M742.5 232h3.5M656.5 233h3.5M670.5 233h2.5M681.5 233h1.5M693.5 233h4.5M703.5 233h1.5M711.5 233h1.5M716.5 233h3.5M732.5 233h1.5M741.5 233h2.5M657.5 234h2.5M665.5 234h1.5M670.5 234h2.5M681.5 234h1.5M694.5 234h3.5M701.5 234h1.5M711.5 234h1.5M716.5 234h4.5M732.5 234h1.5M741.5 234h1.5M658.5 235h1.5M665.5 235h1.5M670.5 235h1.5M681.5 235h1.5M694.5 235h2.5M701.5 235h1.5M711.5 235h2.5M715.5 235h5.5M723.5 235h2.5M731.5 235h1.5M741.5 235h1.5M659.5 236h1.5M665.5 236h1.5M681.5 236h1.5M685.5 236h1.5M694.5 236h2.5M701.5 236h1.5M711.5 236h6.5M720.5 236h6.5M731.5 236h1.5M741.5 236h1.5M659.5 237h1.5M681.5 237h2.5M684.5 237h2.5M694.5 237h2.5M711.5 237h5.5M725.5 237h1.5M729.5 237h2.5M741.5 237h1.5M744.5 237h1.5M660.5 238h1.5M664.5 238h1.5M683.5 238h2.5M702.5 238h2.5M712.5 238h3.5M726.5 238h4.5M741.5 238h1.5M744.5 238h1.5M660.5 239h5.5M702.5 239h2.5M742.5 239h1.5M742.5 240h2.5M659.5 247.1h1.5M687.5 247.1h1.5M659.5 248.1h1.5M686.5 248.1h2.5M659.5 249.1h1.5M686.5 249.1h2.5M738.5 249.1h2.5M659.5 250.1h1.5M686.5 250.1h2.5M737.5 250.1h1.5M743.5 250.1h2.5"/>
<path stroke="#6b6b6b" stroke-width="1.51" d="M659.5 214.9h1.5M662.5 214.9h1.5M669.5 214.9h1.5M672.5 214.9h6.5M682.5 214.9h7.5M692.5 214.9h2.5M732.5 214.9h1.5M735.5 214.9h1.5M738.5 214.9h1.5M659.5 215.9h1.5M662.5 215.9h1.5M669.5 215.9h7.5M677.5 215.9h1.5M682.5 215.9h5.5M697.5 215.9h1.5M709.5 215.9h1.5M713.5 215.9h1.5M732.5 215.9h4.5M659.5 216.9h1.5M662.5 216.9h1.5M670.5 216.9h5.5M677.5 216.9h2.5M682.5 216.9h3.5M697.5 216.9h1.5M709.5 216.9h1.5M713.5 216.9h1.5M732.5 216.9h4.5M739.5 216.9h1.5M659.5 217.9h3.5M678.5 217.9h1.5M682.5 217.9h1.5M709.5 217.9h1.5M713.5 217.9h1.5M732.5 217.9h4.5M739.5 217.9h4.5M659.5 218.9h3.5M678.5 218.9h2.5M681.5 218.9h1.5M698.5 218.9h1.5M700.5 218.9h1.5M709.5 218.9h1.5M713.5 218.9h1.5M733.5 218.9h3.5M743.5 218.9h1.5M659.5 219.9h3.5M678.5 219.9h4.5M698.5 219.9h1.5M700.5 219.9h1.5M705.5 219.9h1.5M709.5 219.9h1.5M712.5 219.9h2.5M733.5 219.9h3.5M743.5 219.9h1.5M659.5 220.9h2.5M679.5 220.9h2.5M698.5 220.9h3.5M704.5 220.9h2.5M709.5 220.9h1.5M712.5 220.9h3.5M734.5 220.9h3.5M673.5 221.9h1.5M699.5 221.9h2.5M704.5 221.9h2.5M709.5 221.9h1.5M712.5 221.9h4.5M734.5 221.9h3.5M673.5 222.9h1.5M699.5 222.9h1.5M709.5 222.9h7.5M734.5 222.9h2.5M673.5 224h1.5M710.5 224h6.5M672.5 225h2.5M710.5 225h10.5M662.5 226h1.5M672.5 226h2.5M688.5 226h2.5M710.5 226h3.5M714.5 226h7.5M724.5 226h2.5M656.5 227h2.5M661.5 227h3.5M672.5 227h2.5M688.5 227h2.5M710.5 227h2.5M715.5 227h3.5M720.5 227h6.5M656.5 228h3.5M661.5 228h1.5M663.5 228h1.5M669.5 228h1.5M671.5 228h3.5M687.5 228h3.5M696.5 228h1.5M710.5 228h2.5M715.5 228h3.5M721.5 228h2.5M725.5 228h7.5M657.5 229h4.5M669.5 229h5.5M684.5 229h4.5M690.5 229h1.5M694.5 229h3.5M710.5 229h1.5M716.5 229h1.5M727.5 229h6.5M743.5 229h1.5M658.5 230h2.5M664.5 230h1.5M669.5 230h5.5M683.5 230h1.5M685.5 230h3.5M690.5 230h7.5M710.5 230h1.5M732.5 230h1.5M739.5 230h1.5M743.5 230h1.5M669.5 231h5.5M681.5 231h2.5M686.5 231h2.5M690.5 231h4.5M702.5 231h2.5M710.5 231h1.5M733.5 231h1.5M739.5 231h4.5M665.5 232h1.5M669.5 232h1.5M672.5 232h1.5M680.5 232h1.5M686.5 232h8.5M701.5 232h1.5M710.5 232h1.5M733.5 232h1.5M739.5 232h3.5M665.5 233h1.5M669.5 233h1.5M672.5 233h1.5M680.5 233h1.5M686.5 233h7.5M701.5 233h1.5M710.5 233h1.5M733.5 233h1.5M739.5 233h2.5M656.5 234h1.5M669.5 234h1.5M672.5 234h1.5M680.5 234h1.5M686.5 234h2.5M689.5 234h5.5M704.5 234h1.5M710.5 234h1.5M740.5 234h1.5M656.5 235h2.5M669.5 235h1.5M671.5 235h2.5M680.5 235h1.5M686.5 235h1.5M692.5 235h2.5M696.5 235h1.5M704.5 235h1.5M710.5 235h1.5M732.5 235h1.5M740.5 235h1.5M657.5 236h2.5M669.5 236h3.5M680.5 236h1.5M686.5 236h1.5M693.5 236h1.5M696.5 236h1.5M704.5 236h1.5M710.5 236h1.5M717.5 236h3.5M732.5 236h1.5M740.5 236h1.5M658.5 237h1.5M665.5 237h1.5M670.5 237h2.5M680.5 237h1.5M686.5 237h1.5M693.5 237h1.5M696.5 237h1.5M701.5 237h1.5M704.5 237h1.5M710.5 237h1.5M716.5 237h9.5M731.5 237h1.5M659.5 238h1.5M665.5 238h1.5M670.5 238h1.5M681.5 238h2.5M685.5 238h1.5M693.5 238h4.5M701.5 238h1.5M704.5 238h1.5M710.5 238h2.5M715.5 238h11.5M730.5 238h2.5M659.5 239h1.5M665.5 239h1.5M670.5 239h1.5M682.5 239h4.5M693.5 239h4.5M711.5 239h6.5M725.5 239h6.5M741.5 239h1.5M744.5 239h1.5M660.5 240h5.5M693.5 240h4.5M702.5 240h2.5M711.5 240h5.5M726.5 240h1.5M741.5 240h1.5M744.5 240h1.5M660.5 241h5.5M696.5 241h1.5M703.5 241h1.5M712.5 241h3.5M742.5 241h2.5M660.5 242.1h5.5M712.5 242.1h3.5M742.5 242.1h2.5M659.5 243.1h6.5M686.5 243.1h2.5M712.5 243.1h3.5M743.5 243.1h1.5M659.5 244.1h7.5M686.5 244.1h3.5M713.5 244.1h1.5M658.5 245.1h8.5M685.5 245.1h4.5M658.5 246.1h8.5M670.5 246.1h1.5M685.5 246.1h4.5M692.5 246.1h1.5M658.5 247.1h1.5M660.5 247.1h5.5M670.5 247.1h2.5M685.5 247.1h2.5M688.5 247.1h1.5M692.5 247.1h1.5M738.5 247.1h2.5M658.5 248.1h1.5M660.5 248.1h4.5M669.5 248.1h3.5M682.5 248.1h2.5M685.5 248.1h1.5M688.5 248.1h1.5M692.5 248.1h2.5M738.5 248.1h2.5M743.5 248.1h2.5M658.5 249.1h1.5M660.5 249.1h4.5M668.5 249.1h4.5M682.5 249.1h4.5M688.5 249.1h1.5M692.5 249.1h2.5M711.5 249.1h2.5M737.5 249.1h1.5M740.5 249.1h1.5M742.5 249.1h3.5M658.5 250.1h1.5M660.5 250.1h3.5M668.5 250.1h4.5M681.5 250.1h5.5M688.5 250.1h1.5M692.5 250.1h4.5M711.5 250.1h2.5M736.5 250.1h1.5M740.5 250.1h1.5M742.5 250.1h1.5"/>
<path stroke="#939393" stroke-width="1.51" d="M656.5 214.9h2.5M665.5 214.9h1.5M705.5 214.9h3.5M722.5 214.9h3.5M729.5 214.9h1.5M656.5 215.9h2.5M665.5 215.9h1.5M690.5 215.9h1.5M695.5 215.9h1.5M704.5 215.9h4.5M722.5 215.9h3.5M657.5 216.9h1.5M665.5 216.9h1.5M668.5 216.9h1.5M689.5 216.9h3.5M695.5 216.9h2.5M704.5 216.9h1.5M707.5 216.9h1.5M715.5 216.9h1.5M722.5 216.9h3.5M657.5 217.9h1.5M665.5 217.9h1.5M668.5 217.9h1.5M687.5 217.9h5.5M695.5 217.9h2.5M702.5 217.9h2.5M715.5 217.9h3.5M721.5 217.9h4.5M657.5 218.9h1.5M664.5 218.9h2.5M668.5 218.9h3.5M686.5 218.9h4.5M691.5 218.9h1.5M694.5 218.9h3.5M702.5 218.9h2.5M716.5 218.9h3.5M721.5 218.9h4.5M657.5 219.9h1.5M664.5 219.9h2.5M668.5 219.9h4.5M685.5 219.9h5.5M691.5 219.9h1.5M694.5 219.9h1.5M697.5 219.9h1.5M702.5 219.9h1.5M717.5 219.9h7.5M657.5 220.9h1.5M663.5 220.9h2.5M668.5 220.9h4.5M683.5 220.9h7.5M691.5 220.9h1.5M694.5 220.9h1.5M697.5 220.9h1.5M718.5 220.9h6.5M740.5 220.9h3.5M657.5 221.9h1.5M663.5 221.9h2.5M668.5 221.9h4.5M682.5 221.9h11.5M694.5 221.9h1.5M697.5 221.9h1.5M720.5 221.9h4.5M740.5 221.9h3.5M656.5 222.9h2.5M663.5 222.9h2.5M667.5 222.9h5.5M681.5 222.9h14.5M696.5 222.9h2.5M721.5 222.9h3.5M740.5 222.9h1.5M742.5 222.9h1.5M656.5 224h1.5M664.5 224h1.5M667.5 224h1.5M670.5 224h1.5M680.5 224h2.5M684.5 224h4.5M690.5 224h8.5M721.5 224h2.5M740.5 224h1.5M664.5 225h1.5M667.5 225h1.5M675.5 225h1.5M680.5 225h1.5M684.5 225h3.5M690.5 225h7.5M701.5 225h1.5M740.5 225h1.5M664.5 226h1.5M667.5 226h1.5M675.5 226h1.5M680.5 226h1.5M684.5 226h1.5M691.5 226h5.5M700.5 226h7.5M736.5 226h1.5M740.5 226h1.5M742.5 226h1.5M664.5 227h1.5M667.5 227h1.5M675.5 227h2.5M680.5 227h1.5M683.5 227h1.5M691.5 227h2.5M699.5 227h9.5M734.5 227h4.5M740.5 227h3.5M665.5 228h3.5M675.5 228h2.5M680.5 228h4.5M699.5 228h3.5M703.5 228h2.5M706.5 228h3.5M734.5 228h4.5M741.5 228h2.5M665.5 229h3.5M675.5 229h2.5M680.5 229h3.5M698.5 229h1.5M701.5 229h1.5M704.5 229h1.5M706.5 229h3.5M734.5 229h4.5M666.5 230h1.5M675.5 230h2.5M698.5 230h1.5M701.5 230h1.5M704.5 230h1.5M707.5 230h2.5M734.5 230h1.5M736.5 230h2.5M666.5 231h1.5M674.5 231h3.5M698.5 231h1.5M700.5 231h1.5M704.5 231h1.5M707.5 231h2.5M734.5 231h4.5M674.5 232h3.5M698.5 232h1.5M700.5 232h1.5M705.5 232h1.5M707.5 232h2.5M734.5 232h4.5M674.5 233h3.5M700.5 233h1.5M705.5 233h4.5M734.5 233h3.5M667.5 234h1.5M674.5 234h1.5M676.5 234h1.5M700.5 234h1.5M705.5 234h4.5M734.5 234h3.5M667.5 235h1.5M673.5 235h1.5M676.5 235h1.5M705.5 235h4.5M734.5 235h5.5M667.5 236h1.5M673.5 236h1.5M676.5 236h1.5M688.5 236h2.5M700.5 236h1.5M705.5 236h4.5M733.5 236h2.5M736.5 236h4.5M667.5 237h2.5M676.5 237h2.5M688.5 237h3.5M700.5 237h1.5M705.5 237h2.5M708.5 237h2.5M733.5 237h1.5M737.5 237h3.5M656.5 238h2.5M667.5 238h2.5M672.5 238h1.5M676.5 238h3.5M687.5 238h4.5M700.5 238h1.5M705.5 238h2.5M709.5 238h1.5M733.5 238h1.5M739.5 238h1.5M657.5 239h1.5M667.5 239h2.5M672.5 239h1.5M677.5 239h3.5M687.5 239h5.5M698.5 239h1.5M700.5 239h1.5M705.5 239h2.5M709.5 239h1.5M732.5 239h1.5M740.5 239h1.5M657.5 240h1.5M667.5 240h2.5M672.5 240h1.5M677.5 240h4.5M687.5 240h5.5M698.5 240h1.5M701.5 240h1.5M705.5 240h2.5M709.5 240h1.5M721.5 240h1.5M732.5 240h1.5M740.5 240h1.5M657.5 241h1.5M667.5 241h2.5M678.5 241h5.5M688.5 241h4.5M698.5 241h1.5M701.5 241h1.5M705.5 241h2.5M709.5 241h1.5M720.5 241h3.5M727.5 241h6.5M740.5 241h1.5M657.5 242.1h1.5M667.5 242.1h2.5M678.5 242.1h6.5M689.5 242.1h3.5M698.5 242.1h1.5M705.5 242.1h2.5M709.5 242.1h2.5M720.5 242.1h4.5M726.5 242.1h2.5M730.5 242.1h3.5M740.5 242.1h1.5M657.5 243.1h1.5M668.5 243.1h1.5M672.5 243.1h1.5M678.5 243.1h6.5M690.5 243.1h2.5M698.5 243.1h1.5M702.5 243.1h1.5M704.5 243.1h3.5M710.5 243.1h1.5M716.5 243.1h2.5M720.5 243.1h4.5M726.5 243.1h1.5M731.5 243.1h2.5M739.5 243.1h2.5M657.5 244.1h1.5M668.5 244.1h1.5M672.5 244.1h1.5M678.5 244.1h6.5M690.5 244.1h1.5M694.5 244.1h2.5M698.5 244.1h1.5M702.5 244.1h5.5M710.5 244.1h1.5M716.5 244.1h2.5M720.5 244.1h4.5M726.5 244.1h1.5M732.5 244.1h1.5M738.5 244.1h3.5M656.5 245.1h2.5M672.5 245.1h4.5M678.5 245.1h5.5M694.5 245.1h2.5M698.5 245.1h1.5M702.5 245.1h4.5M711.5 245.1h1.5M715.5 245.1h4.5M720.5 245.1h1.5M723.5 245.1h1.5M726.5 245.1h1.5M732.5 245.1h1.5M738.5 245.1h1.5M740.5 245.1h1.5M656.5 246.1h1.5M672.5 246.1h4.5M678.5 246.1h3.5M694.5 246.1h4.5M703.5 246.1h3.5M711.5 246.1h1.5M714.5 246.1h1.5M717.5 246.1h4.5M723.5 246.1h1.5M726.5 246.1h1.5M732.5 246.1h1.5M737.5 246.1h1.5M656.5 247.1h1.5M673.5 247.1h3.5M679.5 247.1h1.5M695.5 247.1h3.5M703.5 247.1h2.5M717.5 247.1h4.5M723.5 247.1h1.5M726.5 247.1h1.5M732.5 247.1h2.5M736.5 247.1h1.5M656.5 248.1h1.5M675.5 248.1h1.5M679.5 248.1h1.5M696.5 248.1h2.5M702.5 248.1h3.5M710.5 248.1h1.5M713.5 248.1h1.5M717.5 248.1h4.5M726.5 248.1h1.5M732.5 248.1h5.5M656.5 249.1h1.5M675.5 249.1h1.5M679.5 249.1h1.5M697.5 249.1h1.5M702.5 249.1h2.5M710.5 249.1h1.5M713.5 249.1h1.5M718.5 249.1h3.5M726.5 249.1h1.5M732.5 249.1h3.5M680.5 250.1h1.5M697.5 250.1h1.5M702.5 250.1h2.5M718.5 250.1h3.5M726.5 250.1h1.5M732.5 250.1h2.5"/>
<path stroke="#a6a6a6" stroke-width="1.51" d="M666.5 214.9h2.5M702.5 214.9h1.5M704.5 214.9h1.5M715.5 214.9h2.5M719.5 214.9h3.5M666.5 215.9h2.5M702.5 215.9h2.5M715.5 215.9h7.5M656.5 216.9h1.5M666.5 216.9h2.5M702.5 216.9h2.5M716.5 216.9h6.5M656.5 217.9h1.5M666.5 217.9h2.5M718.5 217.9h3.5M656.5 218.9h1.5M666.5 218.9h2.5M690.5 218.9h1.5M719.5 218.9h2.5M656.5 219.9h1.5M666.5 219.9h2.5M690.5 219.9h1.5M695.5 219.9h2.5M656.5 220.9h1.5M665.5 220.9h3.5M690.5 220.9h1.5M695.5 220.9h2.5M656.5 221.9h1.5M665.5 221.9h3.5M695.5 221.9h2.5M665.5 222.9h2.5M695.5 222.9h1.5M741.5 222.9h1.5M665.5 224h2.5M682.5 224h2.5M741.5 224h2.5M665.5 225h2.5M681.5 225h3.5M741.5 225h2.5M665.5 226h2.5M681.5 226h3.5M741.5 226h1.5M665.5 227h2.5M681.5 227h2.5M705.5 228h1.5M699.5 229h2.5M705.5 229h1.5M699.5 230h2.5M705.5 230h2.5M735.5 230h1.5M699.5 231h1.5M705.5 231h2.5M699.5 232h1.5M706.5 232h1.5M698.5 233h2.5M675.5 234h1.5M698.5 234h2.5M674.5 235h2.5M698.5 235h2.5M674.5 236h2.5M698.5 236h2.5M735.5 236h1.5M673.5 237h3.5M698.5 237h2.5M707.5 237h1.5M734.5 237h3.5M673.5 238h3.5M698.5 238h2.5M707.5 238h2.5M734.5 238h5.5M656.5 239h1.5M673.5 239h4.5M699.5 239h1.5M707.5 239h2.5M733.5 239h1.5M736.5 239h4.5M656.5 240h1.5M673.5 240h4.5M699.5 240h2.5M707.5 240h2.5M733.5 240h1.5M737.5 240h3.5M656.5 241h1.5M672.5 241h1.5M674.5 241h4.5M699.5 241h2.5M707.5 241h2.5M733.5 241h1.5M738.5 241h2.5M656.5 242.1h1.5M672.5 242.1h6.5M699.5 242.1h1.5M701.5 242.1h1.5M707.5 242.1h2.5M728.5 242.1h2.5M733.5 242.1h1.5M738.5 242.1h2.5M656.5 243.1h1.5M673.5 243.1h5.5M699.5 243.1h1.5M701.5 243.1h1.5M707.5 243.1h3.5M727.5 243.1h1.5M730.5 243.1h1.5M733.5 243.1h1.5M737.5 243.1h2.5M656.5 244.1h1.5M673.5 244.1h5.5M699.5 244.1h1.5M701.5 244.1h1.5M707.5 244.1h3.5M727.5 244.1h1.5M730.5 244.1h2.5M733.5 244.1h1.5M737.5 244.1h1.5M676.5 245.1h2.5M706.5 245.1h2.5M710.5 245.1h1.5M721.5 245.1h2.5M731.5 245.1h1.5M733.5 245.1h2.5M737.5 245.1h1.5M676.5 246.1h2.5M698.5 246.1h1.5M702.5 246.1h1.5M706.5 246.1h2.5M710.5 246.1h1.5M715.5 246.1h2.5M721.5 246.1h2.5M731.5 246.1h1.5M733.5 246.1h4.5M676.5 247.1h3.5M698.5 247.1h1.5M701.5 247.1h2.5M705.5 247.1h2.5M710.5 247.1h1.5M714.5 247.1h3.5M721.5 247.1h2.5M727.5 247.1h1.5M731.5 247.1h1.5M734.5 247.1h2.5M676.5 248.1h3.5M701.5 248.1h1.5M705.5 248.1h2.5M721.5 248.1h3.5M727.5 248.1h1.5M731.5 248.1h1.5M676.5 249.1h3.5M701.5 249.1h1.5M704.5 249.1h2.5M717.5 249.1h1.5M721.5 249.1h3.5M727.5 249.1h1.5M731.5 249.1h1.5M676.5 250.1h1.5M678.5 250.1h2.5M701.5 250.1h1.5M704.5 250.1h2.5M713.5 250.1h1.5M717.5 250.1h1.5M721.5 250.1h3.5M727.5 250.1h2.5M731.5 250.1h1.5"/>
<path stroke="#bababa" stroke-width="1.51" d="M703.5 214.9h1.5M717.5 214.9h2.5M734.5 239h2.5M734.5 240h3.5M673.5 241h1.5M734.5 241h4.5M700.5 242.1h1.5M734.5 242.1h4.5M700.5 243.1h1.5M728.5 243.1h2.5M734.5 243.1h3.5M700.5 244.1h1.5M728.5 244.1h2.5M734.5 244.1h3.5M699.5 245.1h3.5M708.5 245.1h2.5M727.5 245.1h1.5M730.5 245.1h1.5M735.5 245.1h2.5M699.5 246.1h3.5M708.5 246.1h2.5M727.5 246.1h1.5M730.5 246.1h1.5M699.5 247.1h2.5M707.5 247.1h3.5M730.5 247.1h1.5M698.5 248.1h3.5M707.5 248.1h3.5M714.5 248.1h3.5M728.5 248.1h3.5M698.5 249.1h1.5M700.5 249.1h1.5M706.5 249.1h2.5M709.5 249.1h1.5M716.5 249.1h1.5M728.5 249.1h3.5M677.5 250.1h1.5M698.5 250.1h1.5M700.5 250.1h1.5M706.5 250.1h2.5M709.5 250.1h1.5M729.5 250.1h2.5"/>
<path stroke="#cdcdcd" stroke-width="1.51" d="M728.5 245.1h2.5M728.5 246.1h2.5M728.5 247.1h2.5M699.5 249.1h1.5M708.5 249.1h1.5M714.5 249.1h2.5M699.5 250.1h1.5M708.5 250.1h1.5M714.5 250.1h1.5M716.5 250.1h1.5"/>
<path stroke="#e1e1e1" stroke-width="1.51" d="M715.5 250.1h1.5"/>
</g>
<rect x="467.4" y="213.8" width="280.4" height="37.4" fill="none" stroke="#ff0000" stroke-width="1.7"/>
<rect x="466.5" y="213.0" width="2.4" height="39.0" fill="#ff0000"/>
<text transform="translate(446.00 224.80) scale(1.05 1)" font-family="'Liberation Sans', sans-serif" font-size="8.4" fill="#000" stroke="#000" stroke-width="0.18">0.08</text>
<text transform="translate(446.00 233.20) scale(1.05 1)" font-family="'Liberation Sans', sans-serif" font-size="8.4" fill="#000" stroke="#000" stroke-width="0.18">1.11</text>
<text transform="translate(446.00 241.60) scale(1.05 1)" font-family="'Liberation Sans', sans-serif" font-size="8.4" fill="#000" stroke="#000" stroke-width="0.18">203</text>
<text transform="translate(750.30 218.80) scale(1.05 1)" font-family="'Liberation Sans', sans-serif" font-size="5.9" fill="#000" stroke="#000" stroke-width="0.18">1.51"</text>
<text transform="translate(750.30 226.00) scale(1.05 1)" font-family="'Liberation Sans', sans-serif" font-size="5.9" fill="#000" stroke="#000" stroke-width="0.18">(246, 212)</text>
<text transform="translate(750.30 234.00) scale(1.05 1)" font-family="'Liberation Sans', sans-serif" font-size="5.9" fill="#000" stroke="#000" stroke-width="0.18">20220619</text>
<text transform="translate(750.30 241.20) scale(1.05 1)" font-family="'Liberation Sans', sans-serif" font-size="5.9" fill="#000" stroke="#000" stroke-width="0.18">v013_07</text>
<text transform="translate(750.30 248.40) scale(1.05 1)" font-family="'Liberation Sans', sans-serif" font-size="5.9" fill="#000" stroke="#000" stroke-width="0.18">421_LL_022</text>
<rect x="575.5" y="178.5" width="5" height="5.5" fill="#555" opacity="0.6"/>
<path d="M575.6 184.6L578.5 184.0L582.6 184.8L583.2 189.5L581.5 193.2L578.0 194.0L575.8 191.0Z" fill="#ff3838" stroke="#111" stroke-width="1.1"/>
<text transform="translate(865.40 47.50) scale(1.13 1)" font-family="'Liberation Sans', sans-serif" font-size="10.0" fill="#000" text-anchor="middle" stroke="#000" stroke-width="0.18">With Sky</text>
<text transform="translate(865.40 58.50) scale(1.13 1)" font-family="'Liberation Sans', sans-serif" font-size="10.0" fill="#000" text-anchor="middle" stroke="#000" stroke-width="0.18">x, y: 246, 212</text>
<text transform="translate(965.80 47.50) scale(1.13 1)" font-family="'Liberation Sans', sans-serif" font-size="10.0" fill="#000" text-anchor="middle" stroke="#000" stroke-width="0.18">Clean Image</text>
<text transform="translate(965.80 58.50) scale(1.13 1)" font-family="'Liberation Sans', sans-serif" font-size="10.0" fill="#000" text-anchor="middle" stroke="#000" stroke-width="0.18">x, y: 246, 212</text>
<g><rect x="832" y="65.2" width="66.4" height="168" fill="#f2f2f2"/>
<path stroke="#0c0c0c" stroke-width="2.50" d="M886.7 72.2h2.5M876.9 76.2h2.5M884.7 76.2h2.5M890.6 76.2h2.5M845.7 86.2h2.5M851.5 86.2h2.5M855.4 86.2h2.5M859.3 86.2h2.5M834 88.2h2.5M837.9 88.2h2.5M871.1 88.2h2.5M875 88.2h2.5M880.8 88.2h2.5M890.6 98.2h2.5M843.7 100.2h2.5M853.5 100.2h2.5M892.5 100.2h4.4M855.4 102.2h2.5M873 102.2h2.5M888.6 102.2h2.5M894.5 102.2h4.4M865.2 112.2h2.5M880.8 112.2h2.5M832 114.2h2.5M851.5 114.2h2.5M859.3 114.2h2.5M892.5 114.2h2.5M857.4 126.2h4.4M878.9 126.2h2.5M884.7 126.2h2.5M888.6 126.2h2.5M896.4 128.2h2.5M839.8 138.2h2.5M843.7 138.2h2.5M857.4 138.2h2.5M890.6 138.2h2.5M894.5 138.2h2.5M873 140.2h4.4M878.9 140.2h2.5M882.8 140.2h2.5M855.4 152.2h2.5M884.7 152.2h2.5M849.6 154.2h2.5M869.1 154.2h2.5M884.7 154.2h2.5M890.6 154.2h2.5M894.5 154.2h2.5M832 164.2h2.5M857.4 164.2h2.5M875 164.2h2.5M878.9 164.2h2.5M882.8 164.2h2.5M875 166.2h2.5M880.8 166.2h2.5M886.7 166.2h2.5M894.5 166.2h2.5M878.9 176.2h2.5M834 178.2h2.5M878.9 178.2h2.5M886.7 178.2h2.5M890.6 178.2h8.3M859.3 180.2h2.5M880.8 180.2h2.5M855.4 190.2h2.5M875 190.2h2.5M888.6 190.2h2.5M896.4 190.2h2.5M832 192.2h2.5M867.2 192.2h2.5M876.9 192.2h2.5M886.7 202.2h6.4M896.4 202.2h2.5M834 204.2h2.5M853.5 204.2h2.5M873 204.2h2.5M853.5 206.2h2.5M873 206.2h2.5M882.8 206.2h2.5M875 216.2h4.4M880.8 216.2h2.5M871.1 218.2h2.5M890.6 218.2h2.5M894.5 218.2h2.5M839.8 220.2h2.5M855.4 230.2h2.5M876.9 230.2h2.5M880.8 230.2h2.5M886.7 230.2h2.5M834 232.2h2.5M859.3 232.2h2.5M873 232.2h2.5M888.6 232.2h2.5"/>
<path stroke="#262626" stroke-width="2.50" d="M835.9 72.2h2.5M851.5 72.2h2.5M871.1 72.2h2.5M894.5 72.2h2.5M867.2 74.2h2.5M878.9 74.2h2.5M888.6 74.2h2.5M892.5 74.2h2.5M896.4 74.2h2.5M832 76.2h2.5M851.5 76.2h2.5M861.3 76.2h2.5M880.8 76.2h2.5M896.4 76.2h2.5M834 86.2h2.5M839.8 86.2h2.5M861.3 86.2h2.5M876.9 86.2h2.5M890.6 86.2h2.5M894.5 86.2h2.5M851.5 88.2h2.5M855.4 88.2h2.5M859.3 88.2h2.5M888.6 88.2h2.5M894.5 88.2h4.4M873 90.2h2.5M886.7 90.2h2.5M849.6 98.2h2.5M857.4 98.2h4.4M832 100.2h2.5M835.9 100.2h2.5M841.8 100.2h2.5M857.4 100.2h2.5M861.3 100.2h2.5M896.4 100.2h2.5M880.8 102.2h2.5M890.6 102.2h2.5M849.6 110.2h2.5M861.3 112.2h2.5M882.8 112.2h4.4M890.6 112.2h2.5M896.4 112.2h2.5M835.9 114.2h2.5M847.6 114.2h2.5M857.4 114.2h2.5M876.9 114.2h2.5M890.6 114.2h2.5M896.4 114.2h2.5M849.6 116.2h2.5M878.9 124.2h2.5M884.7 124.2h2.5M894.5 124.2h4.4M841.8 126.2h2.5M871.1 126.2h4.4M890.6 126.2h2.5M837.9 128.2h2.5M853.5 128.2h2.5M878.9 128.2h2.5M884.7 128.2h2.5M892.5 128.2h2.5M845.7 138.2h2.5M873 138.2h2.5M878.9 138.2h2.5M892.5 138.2h2.5M896.4 138.2h2.5M834 140.2h4.4M853.5 140.2h2.5M896.4 150.2h2.5M839.8 152.2h2.5M853.5 152.2h2.5M859.3 152.2h2.5M865.2 152.2h2.5M890.6 152.2h2.5M894.5 152.2h4.4M835.9 154.2h2.5M853.5 154.2h6.4M861.3 154.2h2.5M878.9 154.2h2.5M892.5 154.2h2.5M832 162.2h2.5M876.9 164.2h2.5M888.6 164.2h2.5M894.5 164.2h2.5M834 166.2h4.4M896.4 166.2h2.5M841.8 168.2h2.5M855.4 168.2h2.5M878.9 168.2h2.5M834 176.2h2.5M851.5 176.2h2.5M859.3 176.2h2.5M896.4 176.2h2.5M863.2 178.2h2.5M875 178.2h2.5M888.6 178.2h2.5M855.4 180.2h2.5M873 180.2h2.5M884.7 180.2h2.5M841.8 190.2h2.5M847.6 190.2h2.5M865.2 190.2h2.5M878.9 190.2h4.4M884.7 190.2h2.5M855.4 192.2h2.5M861.3 192.2h4.4M878.9 192.2h2.5M894.5 192.2h2.5M880.8 202.2h2.5M849.6 204.2h4.4M876.9 204.2h2.5M886.7 204.2h2.5M835.9 206.2h2.5M859.3 206.2h2.5M878.9 206.2h2.5M894.5 206.2h4.4M849.6 216.2h2.5M871.1 216.2h2.5M878.9 216.2h2.5M847.6 218.2h2.5M880.8 218.2h2.5M892.5 218.2h2.5M873 228.2h2.5M880.8 228.2h2.5M892.5 228.2h2.5M839.8 230.2h2.5M861.3 230.2h2.5M873 230.2h4.4M878.9 230.2h2.5M845.7 232.2h2.5M853.5 232.2h2.5M857.4 232.2h2.5M869.1 232.2h2.5M875 232.2h2.5M890.6 232.2h2.5"/>
<path stroke="#3f3f3f" stroke-width="2.50" d="M832 72.2h2.5M843.7 72.2h4.4M855.4 72.2h2.5M873 72.2h4.4M853.5 74.2h2.5M857.4 74.2h4.4M871.1 74.2h4.4M882.8 74.2h2.5M890.6 74.2h2.5M837.9 76.2h2.5M847.6 76.2h4.4M871.1 76.2h6.4M882.8 76.2h2.5M886.7 76.2h2.5M834 84.2h2.5M847.6 86.2h2.5M853.5 86.2h2.5M857.4 86.2h2.5M878.9 86.2h2.5M896.4 86.2h2.5M839.8 88.2h2.5M843.7 88.2h2.5M847.6 88.2h4.4M853.5 88.2h2.5M878.9 88.2h2.5M882.8 88.2h4.4M845.7 90.2h2.5M884.7 90.2h2.5M894.5 90.2h2.5M835.9 98.2h2.5M873 98.2h6.4M892.5 98.2h6.4M834 100.2h2.5M845.7 100.2h2.5M855.4 100.2h2.5M859.3 100.2h2.5M871.1 100.2h12.2M886.7 100.2h2.5M890.6 100.2h2.5M837.9 102.2h4.4M845.7 102.2h2.5M853.5 102.2h2.5M865.2 102.2h2.5M876.9 102.2h2.5M886.7 102.2h2.5M843.7 112.2h4.4M849.6 112.2h6.4M863.2 112.2h2.5M876.9 112.2h4.4M894.5 112.2h2.5M834 114.2h2.5M837.9 114.2h2.5M843.7 114.2h2.5M871.1 114.2h2.5M878.9 114.2h2.5M882.8 114.2h8.3M834 116.2h2.5M837.9 124.2h2.5M851.5 124.2h2.5M857.4 124.2h4.4M869.1 124.2h2.5M875 124.2h4.4M890.6 124.2h4.4M847.6 126.2h2.5M882.8 126.2h2.5M886.7 126.2h2.5M839.8 128.2h2.5M843.7 128.2h4.4M851.5 128.2h2.5M859.3 128.2h2.5M882.8 128.2h2.5M888.6 128.2h4.4M837.9 138.2h2.5M851.5 138.2h4.4M869.1 138.2h2.5M876.9 138.2h2.5M880.8 138.2h2.5M849.6 140.2h2.5M867.2 140.2h2.5M888.6 140.2h2.5M892.5 140.2h2.5M873 142.2h2.5M882.8 142.2h2.5M835.9 150.2h2.5M843.7 150.2h2.5M853.5 150.2h2.5M871.1 150.2h4.4M876.9 150.2h2.5M843.7 152.2h2.5M851.5 152.2h2.5M857.4 152.2h2.5M867.2 152.2h2.5M886.7 152.2h2.5M892.5 152.2h2.5M837.9 154.2h2.5M871.1 154.2h6.4M880.8 154.2h2.5M886.7 154.2h2.5M896.4 154.2h2.5M834 164.2h4.4M847.6 164.2h6.4M863.2 164.2h2.5M871.1 164.2h4.4M890.6 164.2h4.4M896.4 164.2h2.5M837.9 166.2h2.5M857.4 166.2h2.5M863.2 166.2h2.5M873 166.2h2.5M882.8 166.2h4.4M892.5 166.2h2.5M851.5 168.2h2.5M882.8 168.2h2.5M835.9 176.2h2.5M839.8 176.2h2.5M843.7 176.2h2.5M869.1 176.2h6.4M876.9 176.2h2.5M882.8 176.2h2.5M894.5 176.2h2.5M835.9 178.2h2.5M839.8 178.2h2.5M847.6 178.2h2.5M851.5 178.2h4.4M876.9 178.2h2.5M839.8 180.2h2.5M845.7 180.2h2.5M849.6 180.2h4.4M863.2 180.2h2.5M869.1 180.2h4.4M875 180.2h2.5M894.5 180.2h4.4M832 190.2h2.5M837.9 190.2h2.5M857.4 190.2h4.4M873 190.2h2.5M876.9 190.2h2.5M882.8 190.2h2.5M834 192.2h2.5M841.8 192.2h2.5M853.5 192.2h2.5M857.4 192.2h2.5M871.1 192.2h2.5M882.8 192.2h6.4M892.5 192.2h2.5M896.4 192.2h2.5M859.3 194.2h2.5M871.1 194.2h2.5M884.7 194.2h2.5M892.5 194.2h2.5M849.6 202.2h6.4M859.3 202.2h2.5M878.9 202.2h2.5M884.7 202.2h2.5M892.5 202.2h2.5M847.6 204.2h2.5M857.4 204.2h2.5M871.1 204.2h2.5M878.9 204.2h2.5M882.8 204.2h2.5M888.6 204.2h2.5M892.5 204.2h2.5M896.4 204.2h2.5M834 206.2h2.5M841.8 206.2h6.4M849.6 206.2h2.5M867.2 206.2h2.5M876.9 206.2h2.5M880.8 206.2h2.5M886.7 206.2h4.4M892.5 206.2h2.5M839.8 216.2h2.5M847.6 216.2h2.5M851.5 216.2h2.5M857.4 216.2h2.5M873 216.2h2.5M886.7 216.2h10.3M832 218.2h6.4M839.8 218.2h2.5M843.7 218.2h2.5M849.6 218.2h2.5M855.4 218.2h2.5M875 218.2h2.5M886.7 218.2h4.4M845.7 220.2h2.5M869.1 220.2h2.5M873 220.2h2.5M832 228.2h2.5M843.7 228.2h2.5M851.5 228.2h2.5M875 228.2h4.4M882.8 228.2h2.5M888.6 228.2h2.5M896.4 228.2h2.5M835.9 230.2h2.5M843.7 230.2h2.5M847.6 230.2h4.4M869.1 230.2h2.5M892.5 230.2h2.5M832 232.2h2.5M835.9 232.2h2.5M839.8 232.2h4.4M849.6 232.2h2.5M871.1 232.2h2.5M896.4 232.2h2.5"/>
<path stroke="#595959" stroke-width="2.50" d="M839.8 72.2h2.5M847.6 72.2h2.5M867.2 72.2h4.4M876.9 72.2h2.5M880.8 72.2h4.4M888.6 72.2h6.4M896.4 72.2h2.5M835.9 74.2h2.5M845.7 74.2h8.3M863.2 74.2h2.5M875 74.2h4.4M894.5 74.2h2.5M841.8 76.2h2.5M853.5 76.2h4.4M859.3 76.2h2.5M863.2 76.2h2.5M869.1 76.2h2.5M878.9 76.2h2.5M894.5 76.2h2.5M871.1 84.2h4.4M882.8 84.2h2.5M832 86.2h2.5M841.8 86.2h2.5M863.2 86.2h2.5M869.1 86.2h2.5M873 86.2h4.4M884.7 86.2h6.4M835.9 88.2h2.5M841.8 88.2h2.5M845.7 88.2h2.5M863.2 88.2h2.5M869.1 88.2h2.5M873 88.2h2.5M876.9 88.2h2.5M839.8 90.2h2.5M843.7 90.2h2.5M890.6 90.2h2.5M834 98.2h2.5M845.7 98.2h2.5M861.3 98.2h2.5M865.2 98.2h4.4M880.8 98.2h4.4M837.9 100.2h4.4M849.6 100.2h4.4M863.2 100.2h4.4M884.7 100.2h2.5M832 102.2h4.4M847.6 102.2h2.5M851.5 102.2h2.5M861.3 102.2h4.4M869.1 102.2h2.5M882.8 102.2h2.5M892.5 102.2h2.5M837.9 110.2h2.5M861.3 110.2h2.5M832 112.2h8.3M841.8 112.2h2.5M855.4 112.2h6.4M873 112.2h2.5M886.7 112.2h2.5M892.5 112.2h2.5M839.8 114.2h4.4M845.7 114.2h2.5M853.5 114.2h4.4M863.2 114.2h2.5M869.1 114.2h2.5M875 114.2h2.5M880.8 114.2h2.5M837.9 116.2h2.5M841.8 116.2h4.4M855.4 116.2h2.5M861.3 116.2h2.5M867.2 116.2h2.5M873 116.2h2.5M894.5 116.2h2.5M832 126.2h2.5M835.9 126.2h2.5M839.8 126.2h2.5M851.5 126.2h4.4M863.2 126.2h4.4M880.8 126.2h2.5M894.5 126.2h4.4M857.4 128.2h2.5M880.8 128.2h2.5M886.7 128.2h2.5M894.5 128.2h2.5M847.6 136.2h4.4M832 138.2h2.5M841.8 138.2h2.5M855.4 138.2h2.5M859.3 138.2h4.4M865.2 138.2h2.5M875 138.2h2.5M882.8 138.2h4.4M888.6 138.2h2.5M837.9 140.2h4.4M843.7 140.2h2.5M851.5 140.2h2.5M855.4 140.2h2.5M861.3 140.2h6.4M869.1 140.2h2.5M880.8 140.2h2.5M884.7 140.2h4.4M890.6 140.2h2.5M894.5 140.2h2.5M855.4 142.2h2.5M892.5 142.2h4.4M832 150.2h2.5M847.6 150.2h2.5M855.4 150.2h2.5M861.3 150.2h2.5M867.2 150.2h4.4M880.8 150.2h2.5M892.5 150.2h2.5M832 152.2h2.5M835.9 152.2h2.5M845.7 152.2h4.4M873 152.2h8.3M882.8 152.2h2.5M888.6 152.2h2.5M834 154.2h2.5M839.8 154.2h2.5M843.7 154.2h2.5M851.5 154.2h2.5M863.2 154.2h2.5M888.6 154.2h2.5M834 162.2h2.5M853.5 162.2h2.5M884.7 162.2h2.5M894.5 162.2h2.5M841.8 164.2h4.4M855.4 164.2h2.5M884.7 164.2h4.4M832 166.2h2.5M839.8 166.2h2.5M845.7 166.2h2.5M849.6 166.2h2.5M853.5 166.2h4.4M859.3 166.2h2.5M867.2 166.2h2.5M876.9 166.2h4.4M888.6 166.2h4.4M835.9 168.2h2.5M857.4 168.2h2.5M875 168.2h2.5M886.7 168.2h2.5M847.6 176.2h4.4M853.5 176.2h2.5M865.2 176.2h2.5M875 176.2h2.5M890.6 176.2h2.5M837.9 178.2h2.5M845.7 178.2h2.5M861.3 178.2h2.5M869.1 178.2h2.5M880.8 178.2h6.4M832 180.2h2.5M837.9 180.2h2.5M841.8 180.2h2.5M847.6 180.2h2.5M853.5 180.2h2.5M876.9 180.2h2.5M886.7 180.2h8.3M843.7 188.2h2.5M835.9 190.2h2.5M845.7 190.2h2.5M869.1 190.2h2.5M886.7 190.2h2.5M894.5 190.2h2.5M835.9 192.2h2.5M847.6 192.2h2.5M851.5 192.2h2.5M873 192.2h2.5M839.8 194.2h2.5M849.6 194.2h2.5M867.2 194.2h2.5M882.8 194.2h2.5M834 202.2h4.4M845.7 202.2h2.5M871.1 202.2h8.3M832 204.2h2.5M839.8 204.2h2.5M859.3 204.2h4.4M865.2 204.2h2.5M869.1 204.2h2.5M880.8 204.2h2.5M890.6 204.2h2.5M894.5 204.2h2.5M837.9 206.2h2.5M847.6 206.2h2.5M851.5 206.2h2.5M871.1 206.2h2.5M884.7 206.2h2.5M834 214.2h2.5M853.5 214.2h2.5M888.6 214.2h2.5M832 216.2h6.4M841.8 216.2h2.5M845.7 216.2h2.5M859.3 216.2h2.5M882.8 216.2h2.5M896.4 216.2h2.5M851.5 218.2h4.4M859.3 218.2h2.5M863.2 218.2h2.5M873 218.2h2.5M876.9 218.2h2.5M882.8 218.2h4.4M896.4 218.2h2.5M834 220.2h2.5M837.9 220.2h2.5M853.5 220.2h2.5M884.7 220.2h2.5M896.4 220.2h2.5M837.9 228.2h2.5M841.8 228.2h2.5M849.6 228.2h2.5M853.5 228.2h2.5M863.2 228.2h2.5M894.5 228.2h2.5M834 230.2h2.5M837.9 230.2h2.5M851.5 230.2h2.5M857.4 230.2h2.5M863.2 230.2h2.5M867.2 230.2h2.5M890.6 230.2h2.5M894.5 230.2h4.4M837.9 232.2h2.5M851.5 232.2h2.5M855.4 232.2h2.5M861.3 232.2h2.5M880.8 232.2h8.3"/>
<path stroke="#727272" stroke-width="2.50" d="M834 72.2h2.5M837.9 72.2h2.5M853.5 72.2h2.5M857.4 72.2h6.4M878.9 72.2h2.5M884.7 72.2h2.5M834 74.2h2.5M837.9 74.2h4.4M855.4 74.2h2.5M861.3 74.2h2.5M865.2 74.2h2.5M869.1 74.2h2.5M884.7 74.2h2.5M835.9 76.2h2.5M857.4 76.2h2.5M888.6 76.2h2.5M892.5 76.2h2.5M845.7 84.2h2.5M865.2 84.2h2.5M875 84.2h2.5M890.6 84.2h2.5M896.4 84.2h2.5M835.9 86.2h4.4M865.2 86.2h4.4M871.1 86.2h2.5M857.4 88.2h2.5M861.3 88.2h2.5M865.2 88.2h2.5M892.5 88.2h2.5M834 90.2h2.5M837.9 90.2h2.5M841.8 90.2h2.5M847.6 90.2h2.5M853.5 90.2h2.5M871.1 90.2h2.5M876.9 90.2h2.5M888.6 90.2h2.5M896.4 90.2h2.5M832 98.2h2.5M837.9 98.2h2.5M841.8 98.2h2.5M851.5 98.2h6.4M863.2 98.2h2.5M869.1 98.2h2.5M884.7 98.2h2.5M888.6 98.2h2.5M847.6 100.2h2.5M869.1 100.2h2.5M882.8 100.2h2.5M888.6 100.2h2.5M835.9 102.2h2.5M841.8 102.2h2.5M859.3 102.2h2.5M867.2 102.2h2.5M871.1 102.2h2.5M875 102.2h2.5M878.9 102.2h2.5M884.7 102.2h2.5M863.2 104.2h2.5M853.5 110.2h4.4M863.2 110.2h2.5M890.6 110.2h2.5M894.5 110.2h2.5M847.6 112.2h2.5M871.1 112.2h2.5M875 112.2h2.5M849.6 114.2h2.5M861.3 114.2h2.5M873 114.2h2.5M894.5 114.2h2.5M859.3 116.2h2.5M871.1 116.2h2.5M876.9 116.2h2.5M880.8 116.2h2.5M888.6 116.2h4.4M896.4 116.2h2.5M834 124.2h2.5M845.7 124.2h4.4M853.5 124.2h2.5M861.3 124.2h4.4M871.1 124.2h2.5M880.8 124.2h2.5M886.7 124.2h4.4M834 126.2h2.5M837.9 126.2h2.5M861.3 126.2h2.5M869.1 126.2h2.5M875 126.2h2.5M892.5 126.2h2.5M832 128.2h6.4M841.8 128.2h2.5M855.4 128.2h2.5M861.3 128.2h2.5M865.2 128.2h2.5M871.1 128.2h4.4M876.9 128.2h2.5M832 136.2h2.5M841.8 136.2h2.5M851.5 136.2h2.5M884.7 136.2h2.5M892.5 136.2h4.4M834 138.2h2.5M847.6 138.2h4.4M871.1 138.2h2.5M832 140.2h2.5M845.7 140.2h2.5M857.4 140.2h2.5M876.9 140.2h2.5M834 142.2h8.3M843.7 142.2h2.5M871.1 142.2h2.5M876.9 142.2h4.4M834 150.2h2.5M875 150.2h2.5M878.9 150.2h2.5M882.8 150.2h4.4M888.6 150.2h4.4M894.5 150.2h2.5M834 152.2h2.5M837.9 152.2h2.5M849.6 152.2h2.5M861.3 152.2h2.5M869.1 152.2h4.4M832 154.2h2.5M847.6 154.2h2.5M876.9 154.2h2.5M882.8 154.2h2.5M839.8 162.2h2.5M882.8 162.2h2.5M839.8 164.2h2.5M845.7 164.2h2.5M859.3 164.2h2.5M867.2 164.2h2.5M880.8 164.2h2.5M847.6 166.2h2.5M851.5 166.2h2.5M865.2 166.2h2.5M869.1 166.2h2.5M832 168.2h2.5M847.6 168.2h2.5M865.2 168.2h2.5M884.7 168.2h2.5M832 176.2h2.5M841.8 176.2h2.5M855.4 176.2h4.4M863.2 176.2h2.5M867.2 176.2h2.5M880.8 176.2h2.5M886.7 176.2h4.4M832 178.2h2.5M843.7 178.2h2.5M849.6 178.2h2.5M855.4 178.2h4.4M834 180.2h4.4M843.7 180.2h2.5M857.4 180.2h2.5M861.3 180.2h2.5M882.8 180.2h2.5M849.6 188.2h2.5M861.3 188.2h2.5M880.8 188.2h6.4M888.6 188.2h2.5M834 190.2h2.5M839.8 190.2h2.5M843.7 190.2h2.5M851.5 190.2h4.4M861.3 190.2h2.5M867.2 190.2h2.5M871.1 190.2h2.5M892.5 190.2h2.5M859.3 192.2h2.5M888.6 192.2h4.4M851.5 194.2h4.4M857.4 194.2h2.5M861.3 194.2h2.5M869.1 194.2h2.5M873 194.2h2.5M878.9 194.2h4.4M886.7 194.2h4.4M841.8 202.2h2.5M863.2 202.2h2.5M867.2 202.2h2.5M837.9 204.2h2.5M845.7 204.2h2.5M875 204.2h2.5M884.7 204.2h2.5M857.4 206.2h2.5M875 206.2h2.5M890.6 206.2h2.5M832 214.2h2.5M837.9 214.2h2.5M841.8 214.2h2.5M857.4 214.2h2.5M843.7 216.2h2.5M853.5 216.2h2.5M861.3 216.2h2.5M867.2 216.2h4.4M884.7 216.2h2.5M837.9 218.2h2.5M861.3 218.2h2.5M869.1 218.2h2.5M878.9 218.2h2.5M847.6 220.2h2.5M851.5 220.2h2.5M855.4 220.2h6.4M865.2 220.2h2.5M875 220.2h2.5M886.7 220.2h2.5M890.6 220.2h4.4M834 228.2h4.4M839.8 228.2h2.5M847.6 228.2h2.5M855.4 228.2h4.4M861.3 228.2h2.5M886.7 228.2h2.5M832 230.2h2.5M841.8 230.2h2.5M845.7 230.2h2.5M853.5 230.2h2.5M859.3 230.2h2.5M884.7 230.2h2.5M843.7 232.2h2.5M847.6 232.2h2.5M863.2 232.2h2.5M867.2 232.2h2.5M876.9 232.2h4.4M892.5 232.2h4.4"/>
<path stroke="#8c8c8c" stroke-width="2.50" d="M834 70.2h2.5M841.8 72.2h2.5M863.2 72.2h4.4M832 74.2h2.5M841.8 74.2h4.4M880.8 74.2h2.5M886.7 74.2h2.5M834 76.2h2.5M839.8 76.2h2.5M845.7 76.2h2.5M867.2 76.2h2.5M832 78.2h2.5M849.6 78.2h2.5M857.4 78.2h2.5M873 78.2h2.5M832 84.2h2.5M837.9 84.2h2.5M843.7 84.2h2.5M847.6 84.2h4.4M855.4 84.2h4.4M863.2 84.2h2.5M880.8 84.2h2.5M888.6 84.2h2.5M894.5 84.2h2.5M843.7 86.2h2.5M849.6 86.2h2.5M882.8 86.2h2.5M892.5 86.2h2.5M867.2 88.2h2.5M886.7 88.2h2.5M890.6 88.2h2.5M835.9 90.2h2.5M855.4 90.2h4.4M861.3 90.2h6.4M878.9 90.2h2.5M882.8 90.2h2.5M892.5 90.2h2.5M869.1 96.2h2.5M875 96.2h2.5M843.7 98.2h2.5M871.1 98.2h2.5M843.7 102.2h2.5M849.6 102.2h2.5M857.4 102.2h2.5M839.8 104.2h2.5M859.3 104.2h4.4M871.1 108.2h2.5M839.8 110.2h4.4M859.3 110.2h2.5M871.1 110.2h4.4M876.9 110.2h2.5M884.7 110.2h2.5M888.6 110.2h2.5M892.5 110.2h2.5M839.8 112.2h2.5M867.2 112.2h4.4M888.6 112.2h2.5M865.2 114.2h4.4M832 116.2h2.5M835.9 116.2h2.5M851.5 116.2h2.5M863.2 116.2h4.4M882.8 116.2h6.4M835.9 124.2h2.5M839.8 124.2h6.4M849.6 124.2h2.5M855.4 124.2h2.5M867.2 124.2h2.5M873 124.2h2.5M843.7 126.2h4.4M849.6 126.2h2.5M855.4 126.2h2.5M876.9 126.2h2.5M847.6 128.2h4.4M863.2 128.2h2.5M869.1 128.2h2.5M837.9 130.2h2.5M841.8 130.2h2.5M851.5 130.2h2.5M853.5 136.2h2.5M857.4 136.2h6.4M869.1 136.2h2.5M873 136.2h2.5M876.9 136.2h2.5M880.8 136.2h2.5M886.7 136.2h2.5M890.6 136.2h2.5M896.4 136.2h2.5M835.9 138.2h2.5M867.2 138.2h2.5M886.7 138.2h2.5M841.8 140.2h2.5M847.6 140.2h2.5M859.3 140.2h2.5M871.1 140.2h2.5M896.4 140.2h2.5M841.8 142.2h2.5M847.6 142.2h6.4M859.3 142.2h2.5M869.1 142.2h2.5M875 142.2h2.5M884.7 142.2h2.5M896.4 142.2h2.5M839.8 150.2h4.4M851.5 150.2h2.5M859.3 150.2h2.5M863.2 150.2h4.4M886.7 150.2h2.5M841.8 152.2h2.5M880.8 152.2h2.5M845.7 154.2h2.5M859.3 154.2h2.5M867.2 154.2h2.5M847.6 162.2h2.5M857.4 162.2h2.5M863.2 162.2h4.4M871.1 162.2h4.4M888.6 162.2h6.4M896.4 162.2h2.5M869.1 164.2h2.5M841.8 166.2h4.4M871.1 166.2h2.5M839.8 168.2h2.5M845.7 168.2h2.5M849.6 168.2h2.5M853.5 168.2h2.5M863.2 168.2h2.5M869.1 168.2h4.4M892.5 168.2h6.4M834 174.2h2.5M845.7 176.2h2.5M884.7 176.2h2.5M892.5 176.2h2.5M841.8 178.2h2.5M865.2 178.2h2.5M871.1 178.2h4.4M867.2 180.2h2.5M835.9 182.2h2.5M867.2 182.2h4.4M832 188.2h8.3M845.7 188.2h2.5M851.5 188.2h4.4M857.4 188.2h4.4M865.2 188.2h2.5M869.1 188.2h4.4M875 188.2h6.4M890.6 188.2h4.4M849.6 190.2h2.5M839.8 192.2h2.5M843.7 192.2h4.4M849.6 192.2h2.5M865.2 192.2h2.5M875 192.2h2.5M832 194.2h2.5M835.9 194.2h2.5M841.8 194.2h2.5M847.6 194.2h2.5M855.4 194.2h2.5M876.9 194.2h2.5M894.5 194.2h2.5M832 202.2h2.5M843.7 202.2h2.5M847.6 202.2h2.5M861.3 202.2h2.5M869.1 202.2h2.5M882.8 202.2h2.5M894.5 202.2h2.5M835.9 204.2h2.5M841.8 204.2h4.4M855.4 204.2h2.5M832 206.2h2.5M839.8 206.2h2.5M855.4 206.2h2.5M861.3 206.2h4.4M851.5 208.2h2.5M875 208.2h2.5M892.5 208.2h2.5M835.9 214.2h2.5M843.7 214.2h2.5M847.6 214.2h2.5M855.4 214.2h2.5M861.3 214.2h2.5M867.2 214.2h2.5M873 214.2h2.5M880.8 214.2h8.3M894.5 214.2h4.4M855.4 216.2h2.5M863.2 216.2h4.4M841.8 218.2h2.5M845.7 218.2h2.5M867.2 218.2h2.5M832 220.2h2.5M835.9 220.2h2.5M849.6 220.2h2.5M861.3 220.2h4.4M867.2 220.2h2.5M876.9 220.2h6.4M888.6 220.2h2.5M849.6 226.2h2.5M859.3 228.2h2.5M869.1 228.2h4.4M878.9 228.2h2.5M884.7 228.2h2.5M890.6 228.2h2.5M865.2 230.2h2.5M871.1 230.2h2.5M882.8 230.2h2.5M888.6 230.2h2.5"/>
<path stroke="#a5a5a5" stroke-width="2.50" d="M839.8 66.2h2.5M832 68.2h2.5M849.6 70.2h2.5M861.3 70.2h2.5M867.2 70.2h4.4M890.6 70.2h2.5M849.6 72.2h2.5M865.2 76.2h2.5M839.8 78.2h4.4M845.7 78.2h2.5M851.5 78.2h4.4M859.3 78.2h2.5M875 78.2h2.5M880.8 78.2h6.4M835.9 84.2h2.5M839.8 84.2h4.4M859.3 84.2h4.4M876.9 84.2h4.4M884.7 84.2h4.4M892.5 84.2h2.5M832 88.2h2.5M875 90.2h2.5M880.8 90.2h2.5M841.8 94.2h4.4M855.4 94.2h2.5M851.5 96.2h2.5M859.3 96.2h2.5M884.7 96.2h2.5M839.8 98.2h2.5M886.7 98.2h2.5M834 104.2h2.5M837.9 104.2h2.5M841.8 104.2h2.5M845.7 104.2h2.5M851.5 104.2h2.5M880.8 104.2h2.5M890.6 104.2h4.4M865.2 108.2h2.5M835.9 110.2h2.5M843.7 110.2h2.5M865.2 110.2h2.5M880.8 110.2h4.4M886.7 110.2h2.5M896.4 110.2h2.5M845.7 116.2h4.4M853.5 116.2h2.5M857.4 116.2h2.5M875 116.2h2.5M878.9 116.2h2.5M837.9 120.2h2.5M832 122.2h2.5M851.5 122.2h2.5M869.1 122.2h2.5M890.6 122.2h2.5M832 124.2h2.5M865.2 124.2h2.5M882.8 124.2h2.5M867.2 126.2h2.5M843.7 130.2h2.5M847.6 130.2h4.4M853.5 130.2h2.5M865.2 130.2h4.4M871.1 130.2h2.5M878.9 130.2h2.5M888.6 130.2h2.5M878.9 132.2h2.5M835.9 134.2h2.5M867.2 134.2h2.5M855.4 136.2h2.5M863.2 136.2h2.5M871.1 136.2h2.5M882.8 136.2h2.5M888.6 136.2h2.5M832 142.2h2.5M845.7 142.2h2.5M853.5 142.2h2.5M861.3 142.2h4.4M867.2 142.2h2.5M886.7 142.2h6.4M865.2 146.2h2.5M837.9 148.2h6.4M847.6 148.2h4.4M873 148.2h2.5M837.9 150.2h2.5M845.7 150.2h2.5M849.6 150.2h2.5M857.4 150.2h2.5M863.2 152.2h2.5M841.8 154.2h2.5M865.2 154.2h2.5M832 156.2h2.5M839.8 156.2h2.5M845.7 156.2h2.5M853.5 156.2h2.5M861.3 156.2h2.5M876.9 156.2h2.5M886.7 156.2h2.5M832 160.2h2.5M837.9 162.2h2.5M849.6 162.2h4.4M855.4 162.2h2.5M867.2 162.2h2.5M875 162.2h4.4M880.8 162.2h2.5M837.9 164.2h2.5M861.3 166.2h2.5M834 168.2h2.5M873 168.2h2.5M876.9 168.2h2.5M888.6 168.2h4.4M834 170.2h6.4M857.4 174.2h2.5M876.9 174.2h2.5M837.9 176.2h2.5M861.3 176.2h2.5M859.3 178.2h2.5M867.2 178.2h2.5M878.9 180.2h2.5M837.9 182.2h8.3M851.5 182.2h2.5M855.4 182.2h2.5M886.7 182.2h2.5M894.5 182.2h2.5M832 184.2h4.4M841.8 188.2h2.5M847.6 188.2h2.5M855.4 188.2h2.5M863.2 188.2h2.5M873 188.2h2.5M894.5 188.2h2.5M863.2 190.2h2.5M890.6 190.2h2.5M837.9 192.2h2.5M869.1 192.2h2.5M880.8 192.2h2.5M863.2 194.2h2.5M896.4 194.2h2.5M832 196.2h2.5M832 198.2h2.5M847.6 198.2h2.5M832 200.2h2.5M837.9 200.2h2.5M841.8 200.2h2.5M871.1 200.2h2.5M896.4 200.2h2.5M839.8 202.2h2.5M855.4 202.2h4.4M865.2 202.2h2.5M867.2 204.2h2.5M869.1 206.2h2.5M835.9 208.2h4.4M847.6 208.2h2.5M859.3 208.2h2.5M871.1 208.2h2.5M890.6 208.2h2.5M896.4 208.2h2.5M835.9 212.2h2.5M845.7 214.2h2.5M849.6 214.2h2.5M869.1 214.2h4.4M890.6 214.2h2.5M837.9 216.2h2.5M857.4 218.2h2.5M843.7 220.2h2.5M882.8 220.2h2.5M894.5 220.2h2.5M832 226.2h2.5M851.5 226.2h4.4M863.2 226.2h2.5M873 226.2h2.5M882.8 226.2h2.5M845.7 228.2h2.5M867.2 228.2h2.5M865.2 232.2h2.5"/>
<path stroke="#bfbfbf" stroke-width="2.50" d="M835.9 66.2h2.5M871.1 66.2h2.5M835.9 68.2h2.5M857.4 68.2h2.5M863.2 68.2h2.5M867.2 68.2h2.5M832 70.2h2.5M835.9 70.2h4.4M845.7 70.2h4.4M851.5 70.2h2.5M859.3 70.2h2.5M875 70.2h10.3M886.7 70.2h4.4M894.5 70.2h2.5M843.7 76.2h2.5M835.9 78.2h4.4M843.7 78.2h2.5M861.3 78.2h4.4M869.1 78.2h2.5M876.9 78.2h4.4M888.6 78.2h10.3M834 80.2h2.5M849.6 80.2h4.4M863.2 80.2h6.4M871.1 80.2h2.5M876.9 80.2h2.5M841.8 82.2h2.5M873 82.2h4.4M894.5 82.2h2.5M869.1 84.2h2.5M880.8 86.2h2.5M832 90.2h2.5M849.6 90.2h4.4M859.3 90.2h2.5M867.2 90.2h2.5M832 92.2h2.5M843.7 92.2h2.5M876.9 92.2h2.5M890.6 92.2h2.5M832 94.2h2.5M835.9 94.2h2.5M869.1 94.2h2.5M873 94.2h2.5M876.9 94.2h2.5M880.8 94.2h2.5M832 96.2h2.5M835.9 96.2h2.5M847.6 96.2h4.4M853.5 96.2h4.4M863.2 96.2h2.5M871.1 96.2h2.5M878.9 96.2h4.4M888.6 96.2h4.4M847.6 98.2h2.5M878.9 98.2h2.5M832 104.2h2.5M835.9 104.2h2.5M847.6 104.2h4.4M855.4 104.2h4.4M865.2 104.2h4.4M873 104.2h6.4M884.7 104.2h4.4M896.4 104.2h2.5M863.2 106.2h4.4M871.1 106.2h2.5M882.8 106.2h2.5M832 108.2h4.4M847.6 108.2h2.5M859.3 108.2h4.4M873 108.2h2.5M832 110.2h2.5M845.7 110.2h4.4M851.5 110.2h2.5M857.4 110.2h2.5M867.2 110.2h2.5M878.9 110.2h2.5M892.5 116.2h2.5M839.8 118.2h2.5M849.6 118.2h2.5M855.4 118.2h2.5M867.2 118.2h2.5M892.5 118.2h2.5M843.7 120.2h2.5M853.5 120.2h2.5M867.2 120.2h2.5M888.6 120.2h2.5M835.9 122.2h4.4M841.8 122.2h2.5M853.5 122.2h4.4M859.3 122.2h6.4M867.2 122.2h2.5M875 122.2h2.5M878.9 122.2h2.5M875 128.2h2.5M832 130.2h6.4M845.7 130.2h2.5M855.4 130.2h10.3M875 130.2h2.5M882.8 130.2h6.4M890.6 130.2h4.4M896.4 130.2h2.5M832 132.2h2.5M837.9 132.2h2.5M851.5 132.2h2.5M861.3 132.2h2.5M865.2 132.2h4.4M873 132.2h2.5M839.8 134.2h2.5M847.6 134.2h2.5M851.5 134.2h2.5M871.1 134.2h2.5M888.6 134.2h2.5M834 136.2h2.5M837.9 136.2h2.5M843.7 136.2h4.4M865.2 136.2h4.4M875 136.2h2.5M863.2 138.2h2.5M857.4 142.2h2.5M865.2 142.2h2.5M853.5 144.2h4.4M865.2 144.2h2.5M869.1 144.2h2.5M835.9 146.2h2.5M832 148.2h4.4M863.2 148.2h2.5M867.2 148.2h6.4M878.9 148.2h2.5M886.7 148.2h4.4M892.5 148.2h4.4M834 156.2h2.5M837.9 156.2h2.5M841.8 156.2h4.4M849.6 156.2h2.5M863.2 156.2h14.2M878.9 156.2h2.5M882.8 156.2h2.5M888.6 156.2h4.4M894.5 156.2h2.5M832 158.2h2.5M839.8 158.2h4.4M845.7 158.2h2.5M859.3 158.2h2.5M869.1 158.2h2.5M884.7 158.2h2.5M847.6 160.2h2.5M851.5 160.2h2.5M855.4 160.2h2.5M865.2 160.2h2.5M878.9 160.2h2.5M843.7 162.2h4.4M859.3 162.2h2.5M869.1 162.2h2.5M878.9 162.2h2.5M886.7 162.2h2.5M853.5 164.2h2.5M861.3 164.2h2.5M837.9 168.2h2.5M843.7 168.2h2.5M859.3 168.2h4.4M867.2 168.2h2.5M880.8 168.2h2.5M849.6 170.2h6.4M859.3 170.2h2.5M873 170.2h2.5M871.1 172.2h2.5M832 174.2h2.5M835.9 174.2h2.5M841.8 174.2h4.4M847.6 174.2h2.5M855.4 174.2h2.5M861.3 174.2h4.4M869.1 174.2h8.3M884.7 174.2h2.5M890.6 174.2h2.5M894.5 174.2h2.5M865.2 180.2h2.5M832 182.2h2.5M853.5 182.2h2.5M857.4 182.2h2.5M861.3 182.2h2.5M865.2 182.2h2.5M871.1 182.2h4.4M876.9 182.2h6.4M884.7 182.2h2.5M890.6 182.2h4.4M896.4 182.2h2.5M851.5 184.2h2.5M861.3 184.2h2.5M865.2 184.2h2.5M847.6 186.2h2.5M861.3 186.2h2.5M865.2 186.2h2.5M873 186.2h2.5M839.8 188.2h2.5M886.7 188.2h2.5M834 194.2h2.5M837.9 194.2h2.5M843.7 194.2h4.4M865.2 194.2h2.5M890.6 194.2h2.5M835.9 196.2h2.5M859.3 196.2h2.5M863.2 196.2h2.5M835.9 198.2h2.5M845.7 198.2h2.5M853.5 198.2h2.5M845.7 200.2h2.5M849.6 200.2h2.5M863.2 200.2h2.5M869.1 200.2h2.5M873 200.2h2.5M876.9 200.2h2.5M882.8 200.2h6.4M894.5 200.2h2.5M837.9 202.2h2.5M863.2 204.2h2.5M865.2 206.2h2.5M832 208.2h2.5M841.8 208.2h4.4M849.6 208.2h2.5M853.5 208.2h4.4M865.2 208.2h2.5M869.1 208.2h2.5M873 208.2h2.5M880.8 208.2h2.5M888.6 208.2h2.5M894.5 208.2h2.5M837.9 210.2h2.5M847.6 210.2h4.4M855.4 210.2h2.5M861.3 210.2h2.5M871.1 210.2h4.4M863.2 212.2h4.4M839.8 214.2h2.5M851.5 214.2h2.5M859.3 214.2h2.5M863.2 214.2h2.5M875 214.2h6.4M892.5 214.2h2.5M865.2 218.2h2.5M841.8 220.2h2.5M871.1 220.2h2.5M861.3 222.2h2.5M865.2 222.2h4.4M832 224.2h2.5M839.8 224.2h4.4M847.6 224.2h2.5M886.7 224.2h2.5M834 226.2h4.4M839.8 226.2h10.3M857.4 226.2h2.5M869.1 226.2h2.5M875 226.2h2.5M894.5 226.2h2.5"/>
<path stroke="#d8d8d8" stroke-width="2.50" d="M834 66.2h2.5M837.9 66.2h2.5M845.7 66.2h4.4M851.5 66.2h2.5M863.2 66.2h6.4M873 66.2h2.5M876.9 66.2h2.5M880.8 66.2h2.5M890.6 66.2h2.5M834 68.2h2.5M847.6 68.2h2.5M853.5 68.2h4.4M861.3 68.2h2.5M865.2 68.2h2.5M869.1 68.2h2.5M878.9 68.2h2.5M886.7 68.2h4.4M894.5 68.2h2.5M839.8 70.2h6.4M853.5 70.2h4.4M863.2 70.2h4.4M871.1 70.2h4.4M884.7 70.2h2.5M896.4 70.2h2.5M834 78.2h2.5M847.6 78.2h2.5M855.4 78.2h2.5M871.1 78.2h2.5M886.7 78.2h2.5M832 80.2h2.5M839.8 80.2h2.5M847.6 80.2h2.5M861.3 80.2h2.5M869.1 80.2h2.5M882.8 80.2h2.5M832 82.2h4.4M837.9 82.2h4.4M843.7 82.2h12.2M861.3 82.2h12.2M880.8 82.2h2.5M888.6 82.2h2.5M851.5 84.2h4.4M834 92.2h4.4M841.8 92.2h2.5M861.3 92.2h10.3M875 92.2h2.5M882.8 92.2h2.5M892.5 92.2h4.4M834 94.2h2.5M837.9 94.2h4.4M847.6 94.2h4.4M857.4 94.2h2.5M861.3 94.2h4.4M867.2 94.2h2.5M871.1 94.2h2.5M884.7 94.2h2.5M834 96.2h2.5M837.9 96.2h10.3M857.4 96.2h2.5M865.2 96.2h4.4M876.9 96.2h2.5M882.8 96.2h2.5M886.7 96.2h2.5M892.5 96.2h2.5M896.4 96.2h2.5M867.2 100.2h2.5M843.7 104.2h2.5M853.5 104.2h2.5M869.1 104.2h4.4M878.9 104.2h2.5M882.8 104.2h2.5M888.6 104.2h2.5M894.5 104.2h2.5M832 106.2h8.3M849.6 106.2h6.4M857.4 106.2h2.5M867.2 106.2h4.4M873 106.2h2.5M888.6 106.2h2.5M896.4 106.2h2.5M835.9 108.2h10.3M853.5 108.2h6.4M863.2 108.2h2.5M892.5 108.2h2.5M896.4 108.2h2.5M869.1 110.2h2.5M875 110.2h2.5M869.1 116.2h2.5M832 118.2h2.5M835.9 118.2h2.5M841.8 118.2h8.3M853.5 118.2h2.5M857.4 118.2h2.5M861.3 118.2h2.5M865.2 118.2h2.5M869.1 118.2h4.4M876.9 118.2h2.5M882.8 118.2h2.5M886.7 118.2h4.4M896.4 118.2h2.5M832 120.2h6.4M839.8 120.2h4.4M845.7 120.2h2.5M849.6 120.2h2.5M863.2 120.2h2.5M871.1 120.2h4.4M880.8 120.2h2.5M884.7 120.2h2.5M894.5 120.2h4.4M834 122.2h2.5M839.8 122.2h2.5M843.7 122.2h8.3M857.4 122.2h2.5M865.2 122.2h2.5M871.1 122.2h4.4M876.9 122.2h2.5M880.8 122.2h2.5M884.7 122.2h6.4M892.5 122.2h4.4M867.2 128.2h2.5M839.8 130.2h2.5M873 130.2h2.5M876.9 130.2h2.5M880.8 130.2h2.5M894.5 130.2h2.5M834 132.2h4.4M845.7 132.2h4.4M857.4 132.2h2.5M863.2 132.2h2.5M871.1 132.2h2.5M876.9 132.2h2.5M892.5 132.2h2.5M834 134.2h2.5M837.9 134.2h2.5M843.7 134.2h2.5M859.3 134.2h2.5M876.9 134.2h2.5M882.8 134.2h2.5M835.9 136.2h2.5M839.8 136.2h2.5M878.9 136.2h2.5M880.8 142.2h2.5M832 144.2h2.5M835.9 144.2h4.4M841.8 144.2h10.3M861.3 144.2h4.4M873 144.2h2.5M886.7 144.2h2.5M832 146.2h2.5M837.9 146.2h4.4M845.7 146.2h2.5M851.5 146.2h4.4M859.3 146.2h2.5M863.2 146.2h2.5M869.1 146.2h2.5M880.8 146.2h2.5M890.6 146.2h6.4M835.9 148.2h2.5M843.7 148.2h2.5M851.5 148.2h2.5M855.4 148.2h8.3M875 148.2h2.5M884.7 148.2h2.5M890.6 148.2h2.5M896.4 148.2h2.5M835.9 156.2h2.5M847.6 156.2h2.5M851.5 156.2h2.5M855.4 156.2h2.5M859.3 156.2h2.5M880.8 156.2h2.5M884.7 156.2h2.5M892.5 156.2h2.5M896.4 156.2h2.5M834 158.2h2.5M849.6 158.2h4.4M863.2 158.2h4.4M875 158.2h2.5M878.9 158.2h2.5M886.7 158.2h4.4M834 160.2h4.4M849.6 160.2h2.5M857.4 160.2h6.4M867.2 160.2h4.4M873 160.2h2.5M880.8 160.2h2.5M890.6 160.2h2.5M894.5 160.2h2.5M835.9 162.2h2.5M861.3 162.2h2.5M832 170.2h2.5M839.8 170.2h10.3M861.3 170.2h2.5M867.2 170.2h2.5M875 170.2h2.5M878.9 170.2h2.5M886.7 170.2h2.5M896.4 170.2h2.5M832 172.2h2.5M841.8 172.2h4.4M849.6 172.2h2.5M859.3 172.2h2.5M865.2 172.2h4.4M875 172.2h2.5M886.7 172.2h2.5M894.5 172.2h2.5M837.9 174.2h4.4M845.7 174.2h2.5M849.6 174.2h6.4M859.3 174.2h2.5M867.2 174.2h2.5M878.9 174.2h6.4M886.7 174.2h4.4M892.5 174.2h2.5M834 182.2h2.5M845.7 182.2h2.5M849.6 182.2h2.5M859.3 182.2h2.5M863.2 182.2h2.5M875 182.2h2.5M882.8 182.2h2.5M888.6 182.2h2.5M835.9 184.2h4.4M843.7 184.2h2.5M847.6 184.2h2.5M853.5 184.2h6.4M863.2 184.2h2.5M867.2 184.2h2.5M871.1 184.2h6.4M878.9 184.2h2.5M882.8 184.2h2.5M886.7 184.2h2.5M832 186.2h2.5M841.8 186.2h2.5M845.7 186.2h2.5M851.5 186.2h2.5M855.4 186.2h4.4M882.8 186.2h2.5M886.7 186.2h2.5M890.6 186.2h4.4M896.4 186.2h2.5M867.2 188.2h2.5M896.4 188.2h2.5M841.8 196.2h6.4M851.5 196.2h4.4M861.3 196.2h2.5M865.2 196.2h2.5M873 196.2h6.4M884.7 196.2h2.5M834 198.2h2.5M841.8 198.2h2.5M849.6 198.2h4.4M855.4 198.2h2.5M865.2 198.2h4.4M871.1 198.2h2.5M878.9 198.2h2.5M894.5 198.2h2.5M834 200.2h4.4M843.7 200.2h2.5M847.6 200.2h2.5M853.5 200.2h2.5M857.4 200.2h6.4M865.2 200.2h4.4M875 200.2h2.5M878.9 200.2h4.4M888.6 200.2h4.4M834 208.2h2.5M839.8 208.2h2.5M857.4 208.2h2.5M861.3 208.2h4.4M876.9 208.2h4.4M882.8 208.2h4.4M832 210.2h6.4M841.8 210.2h4.4M853.5 210.2h2.5M857.4 210.2h4.4M863.2 210.2h6.4M876.9 210.2h2.5M882.8 210.2h2.5M886.7 210.2h2.5M832 212.2h2.5M837.9 212.2h4.4M843.7 212.2h2.5M849.6 212.2h6.4M861.3 212.2h2.5M878.9 212.2h4.4M832 222.2h10.3M843.7 222.2h2.5M849.6 222.2h2.5M853.5 222.2h2.5M859.3 222.2h2.5M882.8 222.2h2.5M892.5 222.2h2.5M834 224.2h2.5M849.6 224.2h6.4M857.4 224.2h4.4M863.2 224.2h4.4M869.1 224.2h4.4M875 224.2h2.5M837.9 226.2h2.5M855.4 226.2h2.5M859.3 226.2h2.5M865.2 226.2h4.4M876.9 226.2h6.4M884.7 226.2h4.4M892.5 226.2h2.5M896.4 226.2h2.5M865.2 228.2h2.5"/>
</g>
<rect x="831.8" y="65.0" width="67" height="168.3" fill="none" stroke="#0000ff" stroke-width="3"/>
<g><rect x="933" y="65.2" width="66.4" height="168" fill="#8c8c8c"/>
<path stroke="#0c0c0c" stroke-width="2.50" d="M991.6 68.2h2.5M938.9 74.2h2.5M942.8 108.2h2.5M968.2 130.2h2.5M946.7 132.2h2.5M946.7 148.2h2.5M952.5 150.2h2.5M960.3 150.2h2.5M960.3 152.2h2.5M970.1 152.2h2.5M989.6 162.2h2.5M995.5 162.2h2.5M972.1 168.2h2.5M993.5 190.2h2.5M960.3 198.2h2.5M966.2 204.2h2.5M979.9 214.2h2.5M933 228.2h2.5"/>
<path stroke="#262626" stroke-width="2.50" d="M972.1 70.2h4.4M938.9 84.2h2.5M942.8 88.2h2.5M983.8 100.2h2.5M936.9 102.2h2.5M972.1 102.2h2.5M979.9 106.2h2.5M936.9 108.2h2.5M976 108.2h2.5M972.1 110.2h2.5M950.6 114.2h4.4M960.3 116.2h2.5M966.2 118.2h2.5M977.9 118.2h2.5M936.9 122.2h2.5M968.2 124.2h4.4M954.5 126.2h2.5M983.8 134.2h2.5M938.9 150.2h2.5M962.3 150.2h2.5M972.1 150.2h2.5M954.5 152.2h2.5M993.5 154.2h2.5M974 162.2h2.5M960.3 168.2h2.5M970.1 172.2h2.5M989.6 172.2h2.5M987.7 176.2h2.5M936.9 188.2h2.5M950.6 188.2h2.5M972.1 190.2h2.5M976 190.2h2.5M985.7 194.2h2.5M933 200.2h2.5M946.7 204.2h2.5M979.9 204.2h2.5M968.2 212.2h2.5M936.9 214.2h2.5M958.4 222.2h2.5M977.9 228.2h2.5"/>
<path stroke="#3f3f3f" stroke-width="2.50" d="M940.8 66.2h2.5M993.5 66.2h2.5M942.8 68.2h2.5M972.1 68.2h2.5M983.8 68.2h2.5M935 70.2h2.5M979.9 76.2h2.5M968.2 78.2h2.5M995.5 78.2h2.5M933 80.2h2.5M958.4 80.2h4.4M964.2 82.2h2.5M995.5 82.2h2.5M952.5 84.2h2.5M974 88.2h4.4M983.8 88.2h2.5M935 92.2h2.5M938.9 94.2h2.5M952.5 94.2h2.5M960.3 94.2h2.5M979.9 94.2h4.4M995.5 94.2h2.5M964.2 96.2h2.5M997.4 96.2h2.5M933 98.2h2.5M940.8 98.2h2.5M983.8 98.2h2.5M966.2 100.2h2.5M979.9 100.2h2.5M987.7 102.2h2.5M991.6 102.2h2.5M933 104.2h2.5M968.2 106.2h2.5M991.6 106.2h2.5M940.8 108.2h2.5M962.3 108.2h2.5M948.6 110.2h2.5M956.4 112.2h2.5M962.3 112.2h2.5M966.2 112.2h2.5M993.5 112.2h2.5M956.4 114.2h2.5M977.9 114.2h2.5M935 116.2h4.4M976 116.2h2.5M983.8 116.2h2.5M997.4 116.2h2.5M974 118.2h2.5M997.4 118.2h2.5M993.5 120.2h2.5M997.4 124.2h2.5M952.5 126.2h2.5M940.8 128.2h2.5M938.9 130.2h2.5M944.7 130.2h2.5M960.3 130.2h2.5M964.2 130.2h2.5M954.5 132.2h2.5M985.7 134.2h2.5M972.1 136.2h2.5M940.8 138.2h2.5M950.6 140.2h2.5M991.6 140.2h2.5M997.4 140.2h2.5M935 142.2h2.5M964.2 142.2h2.5M977.9 142.2h2.5M981.8 142.2h2.5M960.3 144.2h2.5M995.5 144.2h2.5M997.4 146.2h2.5M938.9 148.2h2.5M954.5 148.2h2.5M942.8 150.2h2.5M954.5 150.2h2.5M964.2 150.2h2.5M970.1 150.2h2.5M983.8 150.2h2.5M991.6 150.2h2.5M995.5 150.2h2.5M962.3 152.2h2.5M966.2 152.2h2.5M993.5 152.2h2.5M997.4 152.2h2.5M983.8 154.2h2.5M989.6 154.2h2.5M997.4 154.2h2.5M942.8 156.2h2.5M946.7 156.2h2.5M993.5 156.2h2.5M972.1 158.2h2.5M968.2 160.2h2.5M981.8 162.2h2.5M942.8 168.2h2.5M987.7 170.2h2.5M991.6 172.2h2.5M936.9 174.2h4.4M942.8 174.2h2.5M976 174.2h2.5M989.6 174.2h2.5M954.5 176.2h4.4M964.2 178.2h2.5M976 178.2h2.5M946.7 180.2h2.5M970.1 180.2h2.5M989.6 180.2h2.5M944.7 184.2h2.5M952.5 190.2h2.5M972.1 194.2h2.5M989.6 200.2h2.5M981.8 204.2h2.5M993.5 204.2h2.5M960.3 206.2h2.5M989.6 206.2h2.5M995.5 206.2h2.5M938.9 210.2h2.5M970.1 210.2h2.5M964.2 212.2h2.5M981.8 212.2h2.5M944.7 214.2h2.5M950.6 218.2h2.5M968.2 218.2h2.5M940.8 220.2h2.5M995.5 220.2h2.5M950.6 222.2h2.5M995.5 222.2h2.5M970.1 224.2h2.5M933 226.2h2.5M985.7 232.2h2.5"/>
<path stroke="#595959" stroke-width="2.50" d="M956.4 66.2h2.5M970.1 66.2h2.5M933 68.2h2.5M948.6 68.2h2.5M962.3 68.2h2.5M976 68.2h2.5M964.2 70.2h4.4M981.8 70.2h2.5M935 72.2h2.5M962.3 72.2h4.4M977.9 72.2h2.5M983.8 72.2h4.4M995.5 72.2h2.5M936.9 74.2h2.5M952.5 74.2h2.5M964.2 74.2h2.5M997.4 74.2h2.5M968.2 76.2h2.5M983.8 76.2h2.5M933 78.2h2.5M952.5 78.2h2.5M993.5 78.2h2.5M940.8 80.2h2.5M981.8 80.2h2.5M995.5 80.2h2.5M935 82.2h2.5M954.5 82.2h2.5M970.1 82.2h2.5M976 82.2h2.5M979.9 82.2h2.5M936.9 84.2h2.5M956.4 84.2h2.5M987.7 84.2h2.5M946.7 86.2h2.5M950.6 86.2h2.5M962.3 86.2h2.5M995.5 86.2h2.5M940.8 88.2h2.5M997.4 88.2h2.5M950.6 90.2h2.5M960.3 90.2h2.5M995.5 90.2h2.5M933 92.2h2.5M938.9 92.2h6.4M960.3 92.2h2.5M964.2 92.2h2.5M995.5 92.2h2.5M944.7 94.2h4.4M974 94.2h2.5M933 96.2h2.5M940.8 96.2h2.5M981.8 96.2h2.5M985.7 96.2h2.5M989.6 96.2h4.4M938.9 98.2h2.5M942.8 98.2h2.5M987.7 98.2h6.4M942.8 100.2h2.5M962.3 100.2h2.5M987.7 100.2h2.5M993.5 100.2h2.5M944.7 102.2h2.5M950.6 102.2h2.5M977.9 102.2h2.5M985.7 102.2h2.5M936.9 104.2h2.5M956.4 104.2h2.5M968.2 104.2h2.5M948.6 106.2h2.5M977.9 106.2h2.5M981.8 106.2h2.5M989.6 106.2h2.5M933 108.2h2.5M952.5 108.2h2.5M956.4 108.2h2.5M983.8 108.2h4.4M993.5 108.2h2.5M936.9 110.2h2.5M950.6 110.2h2.5M983.8 110.2h2.5M933 112.2h2.5M983.8 112.2h4.4M942.8 114.2h4.4M954.5 114.2h2.5M972.1 114.2h2.5M946.7 116.2h2.5M956.4 116.2h2.5M964.2 116.2h2.5M933 120.2h2.5M938.9 120.2h2.5M964.2 120.2h2.5M983.8 120.2h4.4M977.9 122.2h2.5M933 124.2h2.5M940.8 124.2h2.5M946.7 124.2h2.5M956.4 124.2h2.5M976 124.2h2.5M944.7 126.2h2.5M948.6 126.2h2.5M983.8 126.2h2.5M962.3 128.2h8.3M993.5 128.2h2.5M946.7 130.2h2.5M954.5 130.2h2.5M962.3 130.2h2.5M972.1 130.2h2.5M991.6 130.2h2.5M970.1 132.2h2.5M977.9 132.2h2.5M935 134.2h2.5M958.4 134.2h2.5M968.2 134.2h2.5M981.8 134.2h2.5M991.6 134.2h2.5M958.4 136.2h2.5M989.6 136.2h2.5M956.4 138.2h2.5M972.1 138.2h2.5M989.6 138.2h4.4M997.4 138.2h2.5M933 140.2h2.5M956.4 140.2h2.5M966.2 140.2h4.4M972.1 142.2h2.5M946.7 144.2h2.5M981.8 144.2h2.5M989.6 144.2h2.5M997.4 144.2h2.5M933 146.2h2.5M938.9 146.2h2.5M956.4 146.2h2.5M968.2 146.2h2.5M977.9 146.2h4.4M940.8 148.2h4.4M948.6 148.2h2.5M964.2 148.2h2.5M946.7 150.2h2.5M950.6 150.2h2.5M956.4 150.2h4.4M966.2 150.2h2.5M976 150.2h2.5M979.9 150.2h2.5M993.5 150.2h2.5M997.4 150.2h2.5M936.9 152.2h2.5M964.2 152.2h2.5M977.9 152.2h6.4M989.6 152.2h2.5M995.5 152.2h2.5M976 154.2h2.5M985.7 154.2h2.5M995.5 154.2h2.5M972.1 156.2h2.5M991.6 156.2h2.5M950.6 158.2h2.5M977.9 158.2h2.5M933 160.2h2.5M977.9 160.2h2.5M933 162.2h2.5M942.8 162.2h2.5M948.6 162.2h2.5M954.5 162.2h2.5M950.6 164.2h2.5M983.8 164.2h2.5M962.3 166.2h2.5M935 168.2h2.5M970.1 168.2h2.5M977.9 168.2h2.5M983.8 168.2h2.5M936.9 170.2h2.5M958.4 170.2h2.5M966.2 170.2h2.5M981.8 170.2h2.5M933 172.2h2.5M936.9 172.2h2.5M968.2 172.2h2.5M987.7 172.2h2.5M935 174.2h2.5M991.6 174.2h2.5M946.7 176.2h2.5M935 178.2h2.5M952.5 178.2h2.5M956.4 178.2h2.5M960.3 178.2h2.5M968.2 178.2h2.5M977.9 178.2h2.5M981.8 178.2h2.5M958.4 180.2h4.4M964.2 180.2h2.5M977.9 180.2h2.5M981.8 180.2h2.5M946.7 182.2h2.5M991.6 182.2h2.5M935 184.2h2.5M942.8 184.2h2.5M952.5 184.2h2.5M933 186.2h2.5M958.4 186.2h2.5M964.2 186.2h2.5M985.7 186.2h4.4M948.6 188.2h2.5M964.2 188.2h2.5M968.2 188.2h2.5M977.9 188.2h2.5M989.6 188.2h2.5M997.4 188.2h2.5M948.6 190.2h2.5M997.4 190.2h2.5M950.6 192.2h2.5M962.3 192.2h2.5M966.2 192.2h2.5M977.9 192.2h2.5M985.7 192.2h2.5M997.4 192.2h2.5M935 194.2h2.5M956.4 194.2h4.4M936.9 196.2h2.5M944.7 196.2h2.5M954.5 196.2h4.4M940.8 198.2h2.5M977.9 198.2h2.5M983.8 198.2h2.5M987.7 198.2h2.5M956.4 200.2h2.5M970.1 200.2h2.5M987.7 200.2h2.5M933 202.2h2.5M936.9 202.2h6.4M954.5 202.2h2.5M958.4 202.2h2.5M964.2 202.2h2.5M970.1 202.2h2.5M989.6 202.2h2.5M997.4 202.2h2.5M942.8 204.2h2.5M995.5 204.2h4.4M933 206.2h2.5M938.9 206.2h2.5M962.3 206.2h2.5M972.1 206.2h2.5M946.7 208.2h2.5M960.3 208.2h2.5M972.1 208.2h2.5M976 208.2h2.5M985.7 208.2h2.5M936.9 212.2h2.5M960.3 212.2h2.5M970.1 212.2h2.5M983.8 214.2h2.5M989.6 214.2h2.5M997.4 214.2h2.5M954.5 218.2h2.5M964.2 218.2h2.5M974 218.2h2.5M997.4 218.2h2.5M936.9 220.2h2.5M968.2 220.2h2.5M987.7 220.2h2.5M954.5 222.2h2.5M940.8 224.2h4.4M954.5 224.2h4.4M962.3 224.2h4.4M974 224.2h2.5M991.6 224.2h2.5M942.8 226.2h2.5M958.4 226.2h2.5M974 226.2h2.5M993.5 226.2h2.5M946.7 228.2h2.5M954.5 228.2h2.5M958.4 228.2h2.5M987.7 228.2h4.4M993.5 228.2h2.5M940.8 230.2h2.5M948.6 230.2h2.5M954.5 230.2h2.5M970.1 230.2h2.5M983.8 230.2h2.5M989.6 230.2h2.5M956.4 232.2h2.5M987.7 232.2h2.5M997.4 232.2h2.5"/>
<path stroke="#727272" stroke-width="2.50" d="M935 66.2h6.4M944.7 66.2h2.5M952.5 66.2h2.5M968.2 66.2h2.5M977.9 66.2h2.5M981.8 66.2h2.5M987.7 66.2h2.5M997.4 66.2h2.5M935 68.2h4.4M940.8 68.2h2.5M944.7 68.2h2.5M954.5 68.2h2.5M958.4 68.2h4.4M968.2 68.2h2.5M974 68.2h2.5M979.9 68.2h2.5M940.8 70.2h2.5M944.7 70.2h2.5M950.6 70.2h2.5M958.4 70.2h2.5M987.7 70.2h2.5M997.4 70.2h2.5M936.9 72.2h6.4M974 72.2h2.5M987.7 72.2h2.5M991.6 72.2h2.5M944.7 74.2h2.5M948.6 74.2h2.5M956.4 74.2h4.4M970.1 74.2h4.4M981.8 74.2h2.5M985.7 74.2h4.4M936.9 76.2h2.5M974 76.2h2.5M997.4 76.2h2.5M938.9 78.2h2.5M942.8 78.2h4.4M954.5 78.2h2.5M958.4 78.2h2.5M970.1 78.2h2.5M991.6 78.2h2.5M948.6 80.2h4.4M956.4 80.2h2.5M962.3 80.2h2.5M977.9 80.2h2.5M983.8 80.2h2.5M989.6 80.2h2.5M993.5 80.2h2.5M936.9 82.2h4.4M948.6 82.2h2.5M952.5 82.2h2.5M956.4 82.2h2.5M974 82.2h2.5M983.8 82.2h10.3M940.8 84.2h2.5M946.7 84.2h2.5M962.3 84.2h2.5M997.4 84.2h2.5M933 86.2h2.5M956.4 86.2h6.4M964.2 86.2h4.4M972.1 86.2h2.5M977.9 86.2h2.5M987.7 86.2h2.5M991.6 86.2h2.5M997.4 86.2h2.5M935 88.2h2.5M946.7 88.2h2.5M952.5 88.2h2.5M960.3 88.2h2.5M966.2 88.2h2.5M970.1 88.2h2.5M993.5 88.2h2.5M936.9 90.2h2.5M940.8 90.2h2.5M956.4 90.2h4.4M964.2 90.2h4.4M979.9 90.2h6.4M997.4 90.2h2.5M952.5 92.2h2.5M962.3 92.2h2.5M958.4 94.2h2.5M970.1 94.2h2.5M935 96.2h2.5M944.7 96.2h2.5M960.3 96.2h2.5M968.2 96.2h2.5M972.1 96.2h4.4M977.9 96.2h4.4M983.8 96.2h2.5M960.3 98.2h4.4M968.2 98.2h2.5M976 98.2h2.5M981.8 98.2h2.5M985.7 98.2h2.5M935 100.2h2.5M938.9 100.2h4.4M948.6 100.2h2.5M985.7 100.2h2.5M938.9 102.2h2.5M954.5 102.2h4.4M962.3 102.2h4.4M968.2 102.2h2.5M989.6 102.2h2.5M997.4 102.2h2.5M935 104.2h2.5M942.8 104.2h2.5M950.6 104.2h2.5M983.8 104.2h2.5M991.6 104.2h2.5M997.4 104.2h2.5M936.9 106.2h2.5M940.8 106.2h2.5M952.5 106.2h2.5M972.1 106.2h4.4M987.7 106.2h2.5M993.5 106.2h2.5M935 108.2h2.5M974 108.2h2.5M979.9 108.2h2.5M989.6 108.2h4.4M933 110.2h2.5M940.8 110.2h2.5M952.5 110.2h2.5M964.2 110.2h2.5M995.5 110.2h2.5M935 112.2h2.5M938.9 112.2h4.4M954.5 112.2h2.5M958.4 112.2h4.4M977.9 112.2h2.5M981.8 112.2h2.5M987.7 112.2h2.5M933 114.2h2.5M940.8 114.2h2.5M970.1 114.2h2.5M983.8 114.2h2.5M993.5 114.2h2.5M940.8 116.2h6.4M950.6 116.2h4.4M981.8 116.2h2.5M985.7 116.2h2.5M938.9 118.2h2.5M952.5 118.2h2.5M956.4 118.2h2.5M940.8 120.2h2.5M944.7 120.2h2.5M948.6 120.2h2.5M962.3 120.2h2.5M966.2 120.2h2.5M970.1 120.2h2.5M987.7 120.2h2.5M991.6 120.2h2.5M935 122.2h2.5M940.8 122.2h2.5M958.4 122.2h2.5M976 122.2h2.5M987.7 122.2h4.4M995.5 122.2h2.5M954.5 124.2h2.5M983.8 124.2h6.4M966.2 126.2h2.5M976 126.2h2.5M981.8 126.2h2.5M985.7 126.2h2.5M993.5 126.2h2.5M997.4 126.2h2.5M933 128.2h2.5M948.6 128.2h6.4M981.8 128.2h2.5M991.6 128.2h2.5M997.4 128.2h2.5M942.8 130.2h2.5M948.6 130.2h2.5M966.2 130.2h2.5M970.1 130.2h2.5M974 130.2h4.4M979.9 130.2h2.5M989.6 130.2h2.5M993.5 130.2h4.4M942.8 132.2h2.5M966.2 132.2h2.5M985.7 132.2h2.5M993.5 132.2h2.5M933 134.2h2.5M936.9 134.2h2.5M950.6 134.2h2.5M962.3 134.2h4.4M976 134.2h2.5M993.5 134.2h6.4M936.9 136.2h2.5M940.8 136.2h6.4M948.6 136.2h2.5M954.5 136.2h2.5M964.2 136.2h2.5M977.9 136.2h2.5M981.8 136.2h2.5M985.7 136.2h2.5M991.6 136.2h6.4M964.2 138.2h2.5M968.2 138.2h2.5M993.5 138.2h2.5M946.7 140.2h4.4M952.5 140.2h2.5M962.3 140.2h2.5M970.1 140.2h2.5M976 140.2h2.5M989.6 140.2h2.5M995.5 140.2h2.5M933 142.2h2.5M948.6 142.2h2.5M952.5 142.2h2.5M956.4 142.2h2.5M935 144.2h2.5M944.7 144.2h2.5M952.5 144.2h8.3M979.9 144.2h2.5M983.8 144.2h6.4M954.5 146.2h2.5M962.3 146.2h2.5M970.1 146.2h2.5M985.7 146.2h2.5M962.3 148.2h2.5M974 148.2h2.5M977.9 148.2h2.5M981.8 148.2h8.3M997.4 148.2h2.5M935 150.2h2.5M968.2 150.2h2.5M974 150.2h2.5M985.7 150.2h6.4M933 152.2h2.5M940.8 152.2h2.5M944.7 152.2h2.5M948.6 152.2h2.5M956.4 152.2h4.4M968.2 152.2h2.5M976 152.2h2.5M985.7 152.2h2.5M948.6 154.2h2.5M958.4 154.2h2.5M964.2 154.2h2.5M968.2 154.2h2.5M933 156.2h2.5M948.6 156.2h6.4M956.4 156.2h2.5M981.8 156.2h2.5M995.5 156.2h2.5M948.6 158.2h2.5M952.5 158.2h2.5M962.3 158.2h2.5M935 160.2h2.5M950.6 160.2h4.4M962.3 160.2h2.5M970.1 160.2h2.5M993.5 160.2h2.5M935 162.2h2.5M952.5 162.2h2.5M960.3 162.2h2.5M966.2 162.2h2.5M977.9 162.2h2.5M997.4 162.2h2.5M936.9 164.2h2.5M944.7 164.2h2.5M954.5 164.2h2.5M968.2 164.2h4.4M991.6 164.2h4.4M997.4 164.2h2.5M954.5 166.2h4.4M938.9 168.2h4.4M995.5 168.2h2.5M935 170.2h2.5M942.8 170.2h2.5M950.6 170.2h2.5M960.3 170.2h2.5M964.2 170.2h2.5M977.9 170.2h2.5M989.6 170.2h2.5M935 172.2h2.5M938.9 172.2h2.5M950.6 172.2h2.5M956.4 172.2h2.5M962.3 172.2h2.5M974 172.2h2.5M977.9 172.2h2.5M993.5 172.2h2.5M997.4 172.2h2.5M933 174.2h2.5M946.7 174.2h2.5M956.4 174.2h8.3M972.1 174.2h2.5M981.8 174.2h4.4M995.5 174.2h2.5M938.9 176.2h6.4M958.4 176.2h2.5M972.1 176.2h2.5M985.7 176.2h2.5M995.5 176.2h2.5M933 178.2h2.5M936.9 178.2h2.5M940.8 178.2h4.4M946.7 178.2h2.5M966.2 178.2h2.5M985.7 178.2h2.5M995.5 178.2h2.5M987.7 180.2h2.5M995.5 180.2h4.4M936.9 182.2h4.4M948.6 182.2h4.4M966.2 182.2h6.4M979.9 182.2h2.5M983.8 182.2h2.5M936.9 184.2h2.5M966.2 184.2h8.3M977.9 184.2h2.5M983.8 184.2h2.5M987.7 184.2h2.5M993.5 184.2h4.4M935 186.2h2.5M970.1 186.2h2.5M977.9 186.2h4.4M989.6 186.2h8.3M954.5 188.2h2.5M991.6 188.2h2.5M936.9 190.2h2.5M940.8 190.2h2.5M954.5 190.2h4.4M962.3 190.2h4.4M968.2 190.2h2.5M979.9 190.2h2.5M983.8 190.2h2.5M995.5 190.2h2.5M942.8 192.2h2.5M952.5 192.2h2.5M958.4 192.2h2.5M968.2 192.2h4.4M979.9 192.2h2.5M987.7 192.2h2.5M954.5 194.2h2.5M964.2 194.2h2.5M974 194.2h2.5M993.5 194.2h2.5M950.6 196.2h2.5M964.2 196.2h2.5M970.1 196.2h2.5M979.9 196.2h6.4M989.6 196.2h2.5M952.5 198.2h2.5M972.1 198.2h2.5M979.9 198.2h2.5M993.5 198.2h6.4M935 200.2h2.5M940.8 200.2h2.5M948.6 200.2h2.5M958.4 200.2h2.5M972.1 200.2h2.5M983.8 200.2h2.5M995.5 200.2h2.5M942.8 202.2h2.5M952.5 202.2h2.5M966.2 202.2h2.5M972.1 202.2h2.5M977.9 202.2h2.5M981.8 202.2h2.5M985.7 202.2h2.5M993.5 202.2h2.5M933 204.2h2.5M938.9 204.2h2.5M956.4 204.2h2.5M960.3 204.2h2.5M974 204.2h2.5M985.7 204.2h2.5M989.6 204.2h2.5M935 206.2h2.5M974 206.2h2.5M985.7 206.2h2.5M948.6 208.2h4.4M958.4 208.2h2.5M981.8 208.2h4.4M987.7 208.2h2.5M995.5 208.2h2.5M933 210.2h2.5M954.5 210.2h2.5M966.2 210.2h4.4M976 210.2h4.4M991.6 210.2h2.5M997.4 210.2h2.5M956.4 212.2h2.5M976 212.2h6.4M935 214.2h2.5M948.6 214.2h2.5M952.5 214.2h2.5M977.9 214.2h2.5M956.4 216.2h2.5M972.1 216.2h2.5M976 216.2h4.4M983.8 216.2h2.5M989.6 216.2h4.4M942.8 218.2h2.5M946.7 218.2h2.5M956.4 218.2h2.5M962.3 218.2h2.5M966.2 218.2h2.5M970.1 218.2h2.5M979.9 218.2h2.5M991.6 218.2h2.5M995.5 218.2h2.5M976 220.2h2.5M983.8 220.2h2.5M989.6 220.2h2.5M933 222.2h2.5M944.7 222.2h2.5M974 222.2h2.5M985.7 222.2h2.5M989.6 222.2h2.5M936.9 224.2h2.5M958.4 224.2h2.5M987.7 224.2h4.4M995.5 224.2h2.5M944.7 226.2h2.5M950.6 226.2h4.4M960.3 226.2h2.5M968.2 226.2h2.5M981.8 226.2h2.5M968.2 228.2h4.4M974 228.2h4.4M979.9 228.2h6.4M935 230.2h2.5M950.6 230.2h2.5M960.3 230.2h2.5M977.9 230.2h2.5M987.7 230.2h2.5M993.5 230.2h2.5M942.8 232.2h2.5"/>
<path stroke="#a5a5a5" stroke-width="2.50" d="M950.6 66.2h2.5M954.5 66.2h2.5M960.3 66.2h2.5M964.2 66.2h2.5M979.9 66.2h2.5M983.8 66.2h2.5M991.6 66.2h2.5M950.6 68.2h4.4M956.4 68.2h2.5M964.2 68.2h2.5M981.8 68.2h2.5M987.7 68.2h2.5M995.5 68.2h2.5M933 70.2h2.5M942.8 70.2h2.5M948.6 70.2h2.5M956.4 70.2h2.5M968.2 70.2h2.5M979.9 70.2h2.5M983.8 70.2h2.5M993.5 70.2h2.5M942.8 72.2h6.4M956.4 72.2h4.4M968.2 72.2h4.4M993.5 72.2h2.5M997.4 72.2h2.5M942.8 74.2h2.5M954.5 74.2h2.5M966.2 74.2h2.5M979.9 74.2h2.5M938.9 76.2h2.5M942.8 76.2h2.5M948.6 76.2h2.5M952.5 76.2h2.5M962.3 76.2h2.5M972.1 76.2h2.5M993.5 76.2h2.5M946.7 78.2h2.5M964.2 78.2h2.5M976 78.2h2.5M981.8 78.2h4.4M997.4 78.2h2.5M972.1 80.2h2.5M991.6 80.2h2.5M997.4 80.2h2.5M942.8 82.2h6.4M950.6 82.2h2.5M968.2 82.2h2.5M972.1 82.2h2.5M993.5 82.2h2.5M944.7 84.2h2.5M958.4 84.2h2.5M972.1 84.2h6.4M983.8 84.2h4.4M995.5 84.2h2.5M935 86.2h2.5M952.5 86.2h4.4M968.2 86.2h2.5M983.8 86.2h2.5M936.9 88.2h2.5M954.5 88.2h2.5M962.3 88.2h2.5M972.1 88.2h2.5M985.7 88.2h4.4M991.6 88.2h2.5M935 90.2h2.5M946.7 90.2h4.4M968.2 90.2h2.5M972.1 90.2h2.5M985.7 90.2h2.5M991.6 90.2h2.5M954.5 92.2h4.4M974 92.2h2.5M985.7 92.2h4.4M993.5 92.2h2.5M935 94.2h2.5M940.8 94.2h2.5M962.3 94.2h2.5M977.9 94.2h2.5M983.8 94.2h2.5M989.6 94.2h2.5M993.5 94.2h2.5M936.9 96.2h2.5M946.7 96.2h2.5M950.6 96.2h2.5M954.5 96.2h2.5M976 96.2h2.5M936.9 98.2h2.5M944.7 98.2h2.5M948.6 98.2h2.5M954.5 98.2h2.5M964.2 98.2h2.5M970.1 98.2h4.4M933 100.2h2.5M956.4 100.2h2.5M960.3 100.2h2.5M972.1 100.2h2.5M991.6 100.2h2.5M997.4 100.2h2.5M940.8 102.2h2.5M952.5 102.2h2.5M966.2 102.2h2.5M974 102.2h2.5M993.5 102.2h2.5M952.5 104.2h2.5M960.3 104.2h2.5M964.2 104.2h2.5M981.8 104.2h2.5M985.7 104.2h2.5M993.5 104.2h4.4M944.7 106.2h2.5M970.1 106.2h2.5M946.7 108.2h6.4M981.8 108.2h2.5M997.4 108.2h2.5M960.3 110.2h2.5M970.1 110.2h2.5M985.7 110.2h6.4M946.7 112.2h4.4M968.2 112.2h4.4M991.6 112.2h2.5M995.5 112.2h2.5M936.9 114.2h2.5M958.4 114.2h2.5M964.2 114.2h2.5M991.6 114.2h2.5M938.9 116.2h2.5M954.5 116.2h2.5M966.2 116.2h2.5M972.1 116.2h2.5M977.9 116.2h2.5M987.7 116.2h4.4M993.5 116.2h4.4M948.6 118.2h2.5M954.5 118.2h2.5M970.1 118.2h2.5M995.5 118.2h2.5M942.8 120.2h2.5M960.3 120.2h2.5M981.8 120.2h2.5M995.5 120.2h2.5M942.8 122.2h2.5M952.5 122.2h2.5M956.4 122.2h2.5M960.3 122.2h6.4M981.8 122.2h2.5M997.4 122.2h2.5M950.6 124.2h2.5M964.2 124.2h2.5M974 124.2h2.5M977.9 124.2h2.5M995.5 124.2h2.5M933 126.2h2.5M936.9 126.2h2.5M942.8 126.2h2.5M946.7 126.2h2.5M956.4 126.2h2.5M962.3 126.2h2.5M970.1 126.2h4.4M979.9 126.2h2.5M991.6 126.2h2.5M995.5 126.2h2.5M942.8 128.2h2.5M954.5 128.2h2.5M958.4 128.2h4.4M972.1 128.2h2.5M976 128.2h2.5M983.8 128.2h2.5M987.7 128.2h4.4M933 130.2h2.5M936.9 130.2h2.5M952.5 130.2h2.5M981.8 130.2h4.4M987.7 130.2h2.5M950.6 132.2h4.4M968.2 132.2h2.5M972.1 132.2h2.5M981.8 132.2h2.5M989.6 132.2h4.4M995.5 132.2h4.4M944.7 134.2h2.5M960.3 134.2h2.5M972.1 134.2h2.5M977.9 134.2h4.4M987.7 134.2h2.5M950.6 136.2h2.5M960.3 136.2h2.5M970.1 136.2h2.5M987.7 136.2h2.5M954.5 138.2h2.5M960.3 138.2h4.4M970.1 138.2h2.5M976 138.2h2.5M936.9 140.2h2.5M940.8 140.2h2.5M944.7 140.2h2.5M954.5 140.2h2.5M979.9 140.2h6.4M938.9 142.2h2.5M944.7 142.2h4.4M960.3 142.2h2.5M966.2 142.2h2.5M974 142.2h2.5M979.9 142.2h2.5M989.6 142.2h2.5M964.2 144.2h2.5M970.1 144.2h2.5M977.9 144.2h2.5M993.5 144.2h2.5M940.8 146.2h2.5M948.6 146.2h4.4M958.4 146.2h2.5M983.8 146.2h2.5M987.7 146.2h2.5M944.7 148.2h2.5M952.5 148.2h2.5M958.4 148.2h4.4M966.2 148.2h2.5M970.1 148.2h2.5M933 150.2h2.5M940.8 150.2h2.5M952.5 152.2h2.5M991.6 152.2h2.5M933 154.2h2.5M936.9 154.2h2.5M944.7 154.2h2.5M952.5 154.2h6.4M935 156.2h4.4M940.8 156.2h2.5M944.7 156.2h2.5M954.5 156.2h2.5M960.3 156.2h2.5M964.2 156.2h2.5M974 156.2h2.5M979.9 156.2h2.5M985.7 156.2h2.5M989.6 156.2h2.5M944.7 158.2h2.5M956.4 158.2h2.5M968.2 158.2h2.5M974 158.2h2.5M985.7 158.2h2.5M989.6 158.2h2.5M993.5 158.2h2.5M997.4 158.2h2.5M940.8 160.2h4.4M954.5 160.2h2.5M958.4 160.2h4.4M974 160.2h2.5M985.7 160.2h2.5M938.9 162.2h4.4M944.7 162.2h2.5M956.4 162.2h2.5M972.1 162.2h2.5M976 162.2h2.5M979.9 162.2h2.5M991.6 162.2h4.4M938.9 164.2h2.5M942.8 164.2h2.5M962.3 164.2h2.5M966.2 164.2h2.5M972.1 164.2h6.4M985.7 164.2h6.4M995.5 164.2h2.5M936.9 166.2h2.5M940.8 166.2h2.5M958.4 166.2h4.4M964.2 166.2h2.5M970.1 166.2h2.5M976 166.2h2.5M936.9 168.2h2.5M950.6 168.2h4.4M956.4 168.2h2.5M964.2 168.2h2.5M976 168.2h2.5M981.8 168.2h2.5M985.7 168.2h2.5M993.5 168.2h2.5M997.4 168.2h2.5M952.5 170.2h2.5M972.1 170.2h2.5M993.5 170.2h2.5M942.8 172.2h2.5M954.5 172.2h2.5M960.3 172.2h2.5M964.2 172.2h2.5M976 172.2h2.5M979.9 172.2h2.5M940.8 174.2h2.5M944.7 174.2h2.5M948.6 174.2h6.4M964.2 174.2h2.5M970.1 174.2h2.5M977.9 174.2h4.4M936.9 176.2h2.5M944.7 176.2h2.5M952.5 176.2h2.5M968.2 176.2h4.4M974 176.2h6.4M981.8 176.2h2.5M989.6 176.2h4.4M938.9 178.2h2.5M944.7 178.2h2.5M974 178.2h2.5M989.6 178.2h2.5M993.5 178.2h2.5M997.4 178.2h2.5M942.8 180.2h2.5M952.5 180.2h2.5M962.3 180.2h2.5M966.2 180.2h2.5M972.1 180.2h2.5M979.9 180.2h2.5M985.7 180.2h2.5M933 182.2h2.5M958.4 182.2h2.5M964.2 182.2h2.5M977.9 182.2h2.5M981.8 182.2h2.5M987.7 182.2h2.5M997.4 182.2h2.5M933 184.2h2.5M938.9 184.2h2.5M948.6 184.2h2.5M958.4 184.2h2.5M981.8 184.2h2.5M940.8 186.2h2.5M944.7 186.2h2.5M952.5 186.2h2.5M960.3 186.2h4.4M966.2 186.2h4.4M974 186.2h2.5M997.4 186.2h2.5M940.8 188.2h2.5M952.5 188.2h2.5M956.4 188.2h2.5M972.1 188.2h4.4M981.8 188.2h2.5M987.7 188.2h2.5M935 190.2h2.5M938.9 190.2h2.5M950.6 190.2h2.5M960.3 190.2h2.5M935 192.2h2.5M938.9 192.2h2.5M972.1 192.2h4.4M981.8 192.2h2.5M991.6 192.2h2.5M995.5 192.2h2.5M938.9 194.2h2.5M944.7 194.2h2.5M950.6 194.2h2.5M968.2 194.2h2.5M977.9 194.2h2.5M983.8 194.2h2.5M989.6 194.2h4.4M995.5 194.2h2.5M942.8 196.2h2.5M948.6 196.2h2.5M960.3 196.2h2.5M966.2 196.2h2.5M976 196.2h2.5M985.7 196.2h4.4M993.5 196.2h2.5M936.9 198.2h2.5M944.7 198.2h4.4M956.4 198.2h2.5M962.3 198.2h2.5M968.2 198.2h4.4M976 198.2h2.5M954.5 200.2h2.5M960.3 200.2h2.5M977.9 200.2h2.5M981.8 200.2h2.5M956.4 202.2h2.5M960.3 202.2h2.5M983.8 202.2h2.5M935 204.2h2.5M954.5 204.2h2.5M958.4 204.2h2.5M970.1 204.2h4.4M976 204.2h4.4M940.8 206.2h2.5M954.5 206.2h2.5M966.2 206.2h2.5M993.5 206.2h2.5M935 208.2h2.5M944.7 208.2h2.5M966.2 208.2h2.5M977.9 208.2h4.4M936.9 210.2h2.5M940.8 210.2h4.4M950.6 210.2h2.5M960.3 210.2h2.5M985.7 210.2h4.4M944.7 212.2h2.5M966.2 212.2h2.5M972.1 212.2h2.5M983.8 212.2h6.4M993.5 212.2h2.5M997.4 212.2h2.5M938.9 214.2h2.5M946.7 214.2h2.5M954.5 214.2h2.5M962.3 214.2h2.5M966.2 214.2h2.5M974 214.2h2.5M981.8 214.2h2.5M985.7 214.2h2.5M995.5 214.2h2.5M940.8 216.2h2.5M952.5 216.2h4.4M964.2 216.2h4.4M995.5 216.2h2.5M976 218.2h2.5M983.8 218.2h2.5M993.5 218.2h2.5M938.9 220.2h2.5M962.3 220.2h6.4M985.7 220.2h2.5M997.4 220.2h2.5M940.8 222.2h4.4M948.6 222.2h2.5M960.3 222.2h8.3M976 222.2h4.4M981.8 222.2h2.5M997.4 222.2h2.5M935 224.2h2.5M938.9 224.2h2.5M950.6 224.2h2.5M977.9 224.2h4.4M935 226.2h4.4M977.9 226.2h2.5M983.8 226.2h2.5M989.6 226.2h4.4M944.7 228.2h2.5M960.3 228.2h2.5M972.1 228.2h2.5M991.6 228.2h2.5M952.5 230.2h2.5M956.4 230.2h4.4M962.3 230.2h4.4M974 230.2h2.5M981.8 230.2h2.5M991.6 230.2h2.5M995.5 230.2h2.5M933 232.2h4.4M946.7 232.2h2.5M954.5 232.2h2.5M958.4 232.2h2.5M964.2 232.2h2.5M970.1 232.2h2.5M974 232.2h4.4M979.9 232.2h2.5"/>
<path stroke="#bfbfbf" stroke-width="2.50" d="M958.4 66.2h2.5M946.7 68.2h2.5M966.2 68.2h2.5M970.1 68.2h2.5M997.4 68.2h2.5M938.9 70.2h2.5M991.6 70.2h2.5M995.5 70.2h2.5M950.6 72.2h2.5M954.5 72.2h2.5M935 74.2h2.5M940.8 74.2h2.5M946.7 74.2h2.5M960.3 74.2h2.5M968.2 74.2h2.5M933 76.2h2.5M940.8 76.2h2.5M946.7 76.2h2.5M954.5 76.2h6.4M964.2 76.2h2.5M989.6 76.2h2.5M935 78.2h2.5M948.6 78.2h2.5M960.3 78.2h2.5M935 80.2h4.4M946.7 80.2h2.5M966.2 80.2h2.5M940.8 82.2h2.5M962.3 82.2h2.5M977.9 82.2h2.5M981.8 82.2h2.5M997.4 82.2h2.5M933 84.2h4.4M960.3 84.2h2.5M970.1 84.2h2.5M981.8 84.2h2.5M991.6 84.2h4.4M940.8 86.2h2.5M944.7 86.2h2.5M970.1 86.2h2.5M981.8 86.2h2.5M944.7 88.2h2.5M964.2 88.2h2.5M981.8 88.2h2.5M944.7 90.2h2.5M954.5 90.2h2.5M962.3 90.2h2.5M970.1 90.2h2.5M974 90.2h2.5M944.7 92.2h2.5M948.6 92.2h2.5M976 92.2h2.5M989.6 92.2h2.5M997.4 92.2h2.5M942.8 94.2h2.5M956.4 94.2h2.5M966.2 94.2h4.4M977.9 98.2h2.5M993.5 98.2h4.4M936.9 100.2h2.5M944.7 100.2h4.4M970.1 100.2h2.5M974 100.2h2.5M977.9 100.2h2.5M979.9 102.2h2.5M995.5 102.2h2.5M946.7 104.2h2.5M958.4 104.2h2.5M972.1 104.2h2.5M976 104.2h4.4M933 106.2h2.5M942.8 106.2h2.5M946.7 106.2h2.5M956.4 106.2h2.5M962.3 106.2h4.4M944.7 108.2h2.5M954.5 108.2h2.5M964.2 108.2h2.5M970.1 108.2h2.5M977.9 108.2h2.5M987.7 108.2h2.5M938.9 110.2h2.5M962.3 110.2h2.5M966.2 110.2h4.4M976 110.2h2.5M993.5 110.2h2.5M950.6 112.2h2.5M938.9 114.2h2.5M946.7 114.2h4.4M968.2 114.2h2.5M976 114.2h2.5M979.9 114.2h4.4M995.5 114.2h4.4M933 116.2h2.5M958.4 116.2h2.5M968.2 116.2h2.5M979.9 116.2h2.5M991.6 116.2h2.5M936.9 118.2h2.5M958.4 118.2h2.5M962.3 118.2h2.5M987.7 118.2h4.4M950.6 120.2h2.5M977.9 120.2h2.5M946.7 122.2h2.5M954.5 122.2h2.5M968.2 122.2h2.5M972.1 122.2h2.5M983.8 122.2h2.5M991.6 122.2h2.5M942.8 124.2h2.5M972.1 124.2h2.5M938.9 126.2h2.5M950.6 126.2h2.5M987.7 126.2h2.5M946.7 128.2h2.5M985.7 128.2h2.5M940.8 130.2h2.5M950.6 130.2h2.5M977.9 130.2h2.5M985.7 130.2h2.5M935 132.2h2.5M940.8 132.2h2.5M944.7 132.2h2.5M948.6 132.2h2.5M962.3 132.2h2.5M976 132.2h2.5M979.9 132.2h2.5M942.8 134.2h2.5M952.5 134.2h2.5M966.2 134.2h2.5M974 134.2h2.5M966.2 136.2h2.5M979.9 136.2h2.5M983.8 136.2h2.5M936.9 138.2h2.5M946.7 138.2h6.4M958.4 138.2h2.5M974 138.2h2.5M942.8 140.2h2.5M958.4 140.2h2.5M964.2 140.2h2.5M958.4 142.2h2.5M968.2 142.2h2.5M976 142.2h2.5M997.4 142.2h2.5M942.8 144.2h2.5M948.6 144.2h2.5M962.3 144.2h2.5M966.2 144.2h2.5M974 144.2h4.4M936.9 146.2h2.5M944.7 146.2h4.4M972.1 146.2h2.5M976 146.2h2.5M989.6 146.2h4.4M936.9 148.2h2.5M976 148.2h2.5M991.6 148.2h2.5M995.5 148.2h2.5M936.9 150.2h2.5M987.7 152.2h2.5M938.9 154.2h2.5M962.3 154.2h2.5M981.8 154.2h2.5M991.6 154.2h2.5M938.9 156.2h2.5M962.3 156.2h2.5M966.2 156.2h2.5M983.8 156.2h2.5M936.9 158.2h4.4M970.1 158.2h2.5M976 158.2h2.5M983.8 158.2h2.5M991.6 158.2h2.5M946.7 160.2h2.5M966.2 160.2h2.5M979.9 160.2h2.5M983.8 160.2h2.5M987.7 160.2h6.4M995.5 160.2h2.5M950.6 162.2h2.5M958.4 162.2h2.5M962.3 162.2h4.4M983.8 162.2h2.5M946.7 164.2h4.4M952.5 164.2h2.5M958.4 164.2h2.5M964.2 164.2h2.5M979.9 164.2h2.5M935 166.2h2.5M944.7 166.2h2.5M952.5 166.2h2.5M974 166.2h2.5M981.8 166.2h6.4M997.4 166.2h2.5M944.7 168.2h2.5M962.3 168.2h2.5M954.5 170.2h2.5M970.1 170.2h2.5M983.8 170.2h2.5M997.4 170.2h2.5M944.7 172.2h4.4M966.2 172.2h2.5M981.8 172.2h4.4M954.5 174.2h2.5M974 174.2h2.5M985.7 174.2h2.5M993.5 174.2h2.5M997.4 174.2h2.5M933 176.2h2.5M958.4 178.2h2.5M983.8 178.2h2.5M933 180.2h2.5M974 180.2h2.5M954.5 182.2h4.4M985.7 182.2h2.5M940.8 184.2h2.5M946.7 184.2h2.5M950.6 184.2h2.5M964.2 184.2h2.5M979.9 184.2h2.5M985.7 184.2h2.5M956.4 186.2h2.5M933 188.2h2.5M962.3 188.2h2.5M983.8 188.2h2.5M995.5 188.2h2.5M933 190.2h2.5M977.9 190.2h2.5M985.7 190.2h2.5M989.6 190.2h2.5M933 192.2h2.5M983.8 192.2h2.5M940.8 194.2h4.4M946.7 194.2h2.5M960.3 194.2h4.4M970.1 194.2h2.5M952.5 196.2h2.5M995.5 196.2h2.5M958.4 198.2h2.5M964.2 198.2h4.4M938.9 200.2h2.5M944.7 200.2h2.5M950.6 200.2h4.4M976 200.2h2.5M993.5 200.2h2.5M962.3 202.2h2.5M991.6 202.2h2.5M995.5 202.2h2.5M950.6 204.2h4.4M968.2 204.2h2.5M942.8 206.2h4.4M948.6 206.2h2.5M970.1 206.2h2.5M976 206.2h2.5M981.8 206.2h4.4M936.9 208.2h2.5M942.8 208.2h2.5M952.5 208.2h2.5M956.4 208.2h2.5M970.1 208.2h2.5M989.6 208.2h2.5M993.5 208.2h2.5M958.4 210.2h2.5M974 210.2h2.5M979.9 210.2h2.5M935 212.2h2.5M938.9 212.2h2.5M948.6 212.2h4.4M958.4 212.2h2.5M991.6 212.2h2.5M995.5 212.2h2.5M958.4 214.2h2.5M964.2 214.2h2.5M970.1 214.2h2.5M991.6 214.2h2.5M936.9 216.2h2.5M970.1 216.2h2.5M997.4 216.2h2.5M940.8 218.2h2.5M960.3 218.2h2.5M989.6 218.2h2.5M942.8 220.2h2.5M948.6 220.2h2.5M954.5 220.2h2.5M958.4 220.2h2.5M981.8 220.2h2.5M952.5 222.2h2.5M972.1 222.2h2.5M993.5 222.2h2.5M933 224.2h2.5M952.5 224.2h2.5M968.2 224.2h2.5M997.4 224.2h2.5M938.9 226.2h2.5M946.7 226.2h2.5M962.3 226.2h2.5M970.1 226.2h2.5M987.7 226.2h2.5M935 228.2h2.5M962.3 228.2h4.4M985.7 228.2h2.5M936.9 230.2h2.5M944.7 230.2h2.5M966.2 230.2h4.4M972.1 230.2h2.5M976 230.2h2.5M979.9 230.2h2.5M985.7 230.2h2.5M938.9 232.2h4.4M944.7 232.2h2.5M950.6 232.2h2.5M977.9 232.2h2.5M989.6 232.2h2.5"/>
<path stroke="#d8d8d8" stroke-width="2.50" d="M948.6 66.2h2.5M966.2 66.2h2.5M976 66.2h2.5M989.6 66.2h2.5M977.9 68.2h2.5M966.2 72.2h2.5M933 74.2h2.5M989.6 74.2h2.5M970.1 76.2h2.5M956.4 78.2h2.5M970.1 80.2h2.5M974 80.2h2.5M987.7 80.2h2.5M954.5 84.2h2.5M966.2 84.2h2.5M936.9 86.2h2.5M989.6 86.2h2.5M948.6 88.2h2.5M968.2 88.2h2.5M979.9 88.2h2.5M970.1 92.2h4.4M981.8 92.2h2.5M954.5 94.2h2.5M964.2 94.2h2.5M976 94.2h2.5M987.7 96.2h2.5M995.5 96.2h2.5M997.4 98.2h2.5M968.2 100.2h2.5M976 100.2h2.5M948.6 104.2h2.5M970.1 104.2h2.5M966.2 106.2h2.5M985.7 106.2h2.5M958.4 108.2h2.5M966.2 108.2h2.5M944.7 110.2h2.5M954.5 110.2h2.5M964.2 112.2h2.5M979.9 112.2h2.5M962.3 114.2h2.5M944.7 118.2h4.4M964.2 118.2h2.5M983.8 118.2h2.5M952.5 120.2h2.5M958.4 120.2h2.5M938.9 122.2h2.5M944.7 122.2h2.5M944.7 124.2h2.5M966.2 124.2h2.5M993.5 124.2h2.5M935 126.2h2.5M938.9 128.2h2.5M944.7 128.2h2.5M979.9 128.2h2.5M938.9 132.2h2.5M987.7 132.2h2.5M938.9 134.2h2.5M956.4 136.2h2.5M968.2 136.2h2.5M974 136.2h2.5M960.3 140.2h2.5M993.5 140.2h2.5M940.8 142.2h4.4M985.7 142.2h2.5M991.6 144.2h2.5M950.6 148.2h2.5M993.5 148.2h2.5M950.6 152.2h2.5M972.1 154.2h2.5M958.4 156.2h2.5M970.1 156.2h2.5M954.5 158.2h2.5M995.5 158.2h2.5M944.7 160.2h2.5M948.6 160.2h2.5M964.2 160.2h2.5M985.7 162.2h4.4M935 164.2h2.5M938.9 166.2h2.5M942.8 166.2h2.5M995.5 166.2h2.5M968.2 168.2h2.5M974 168.2h2.5M989.6 168.2h2.5M946.7 170.2h4.4M976 170.2h2.5M991.6 170.2h2.5M966.2 176.2h2.5M983.8 176.2h2.5M970.1 178.2h2.5M956.4 180.2h2.5M976 182.2h2.5M985.7 188.2h2.5M958.4 190.2h2.5M981.8 190.2h2.5M944.7 192.2h2.5M933 194.2h2.5M952.5 194.2h2.5M997.4 194.2h2.5M933 196.2h2.5M933 198.2h2.5M946.7 200.2h2.5M966.2 200.2h4.4M974 200.2h2.5M944.7 202.2h2.5M968.2 202.2h2.5M979.9 202.2h2.5M991.6 204.2h2.5M946.7 206.2h2.5M952.5 206.2h2.5M956.4 206.2h2.5M997.4 206.2h2.5M933 208.2h2.5M938.9 208.2h2.5M962.3 208.2h2.5M993.5 210.2h2.5M942.8 212.2h2.5M942.8 214.2h2.5M987.7 214.2h2.5M960.3 216.2h4.4M938.9 218.2h2.5M958.4 218.2h2.5M981.8 218.2h2.5M987.7 218.2h2.5M933 220.2h4.4M970.1 220.2h2.5M974 220.2h2.5M935 222.2h2.5M991.6 222.2h2.5M948.6 224.2h2.5M960.3 224.2h2.5M976 224.2h2.5M964.2 226.2h2.5M979.9 226.2h2.5M938.9 230.2h2.5M952.5 232.2h2.5M968.2 232.2h2.5M993.5 232.2h4.4"/>
<path stroke="#f2f2f2" stroke-width="2.50" d="M972.1 66.2h2.5M952.5 70.2h2.5M976 72.2h2.5M983.8 74.2h2.5M991.6 74.2h2.5M944.7 76.2h2.5M972.1 78.2h2.5M985.7 78.2h2.5M968.2 80.2h2.5M979.9 80.2h2.5M977.9 88.2h2.5M979.9 92.2h2.5M983.8 92.2h2.5M991.6 94.2h2.5M966.2 96.2h2.5M979.9 98.2h2.5M960.3 102.2h2.5M989.6 104.2h2.5M979.9 110.2h2.5M974 112.2h2.5M997.4 112.2h2.5M962.3 116.2h2.5M933 118.2h2.5M950.6 118.2h2.5M968.2 118.2h2.5M991.6 118.2h2.5M968.2 120.2h2.5M972.1 120.2h2.5M952.5 124.2h2.5M960.3 124.2h2.5M974 126.2h2.5M974 128.2h2.5M956.4 132.2h2.5M983.8 132.2h2.5M935 136.2h2.5M962.3 136.2h2.5M977.9 138.2h2.5M977.9 140.2h2.5M936.9 142.2h2.5M995.5 142.2h2.5M938.9 144.2h2.5M935 152.2h2.5M933 158.2h2.5M940.8 158.2h2.5M968.2 162.2h2.5M946.7 166.2h2.5M991.6 166.2h2.5M987.7 168.2h2.5M938.9 170.2h2.5M948.6 172.2h2.5M997.4 176.2h2.5M989.6 182.2h2.5M942.8 186.2h2.5M972.1 186.2h2.5M970.1 190.2h2.5M987.7 194.2h2.5M962.3 200.2h2.5M985.7 200.2h2.5M950.6 202.2h2.5M964.2 208.2h2.5M938.9 216.2h2.5M944.7 216.2h2.5M938.9 222.2h2.5M987.7 222.2h2.5"/>
</g>
<rect x="932.5" y="65.0" width="67" height="168.3" fill="none" stroke="#0000ff" stroke-width="3"/>
<rect x="1048.0" y="60.4" width="251.6" height="150.6" fill="#fff" stroke="#333" stroke-width="1"/>
<line x1="1048.0" y1="204.4" x2="1299.6" y2="204.4" stroke="#555" stroke-width="1.1"/>
<polyline points="1067.8,111.7 1069.0,111.7 1070.1,111.7 1071.3,111.7 1072.5,111.7 1073.6,111.7 1074.8,111.7 1076.0,111.7 1077.1,111.7 1078.3,111.7 1079.5,111.7 1080.7,111.7 1081.8,111.7 1083.0,111.7 1084.2,111.7 1085.3,111.7 1086.5,111.7 1087.7,111.7 1088.8,111.7 1090.0,111.7 1091.2,111.7 1092.4,111.7 1093.5,111.7 1094.7,111.7 1095.9,111.7 1097.0,111.7 1098.2,111.7 1099.4,111.7 1100.5,111.7 1101.7,111.7 1102.9,111.7 1104.1,111.7 1105.2,111.7 1106.4,111.7 1107.6,111.7 1108.7,111.7 1109.9,111.7 1111.1,111.7 1112.2,111.7 1113.4,111.7 1114.6,111.7 1115.8,111.7 1116.9,111.7 1118.1,111.7 1119.3,111.7 1120.4,111.7 1121.6,111.7 1122.8,111.7 1123.9,111.7 1125.1,111.7 1126.3,111.7 1127.5,111.7 1128.6,111.7 1129.8,111.7 1131.0,111.8 1132.1,111.8 1133.3,111.9 1134.5,112.0 1135.6,112.1 1136.8,112.2 1138.0,112.4 1139.2,112.7 1140.3,113.0 1141.5,113.3 1142.7,113.8 1143.8,114.4 1145.0,115.0 1146.2,115.9 1147.3,116.8 1148.5,118.0 1149.7,119.3 1150.9,120.8 1152.0,122.5 1153.2,124.5 1154.4,126.6 1155.5,129.0 1156.7,131.5 1157.9,134.3 1159.0,137.2 1160.2,140.2 1161.4,143.3 1162.6,146.5 1163.7,149.6 1164.9,152.7 1166.1,155.6 1167.2,158.4 1168.4,160.8 1169.6,163.0 1170.8,164.8 1171.9,166.2 1173.1,167.1 1174.3,167.6 1175.4,167.6 1176.6,167.1 1177.8,166.1 1178.9,164.7 1180.1,162.9 1181.3,160.7 1182.4,158.3 1183.6,155.5 1184.8,152.6 1186.0,149.5 1187.1,146.4 1188.3,143.2 1189.5,140.1 1190.6,137.1 1191.8,134.2 1193.0,131.4 1194.1,128.9 1195.3,126.5 1196.5,124.4 1197.7,122.5 1198.8,120.7 1200.0,119.2 1201.2,117.9 1202.3,116.8 1203.5,115.8 1204.7,115.0 1205.8,114.3 1207.0,113.8 1208.2,113.3 1209.4,112.9 1210.5,112.7 1211.7,112.4 1212.9,112.2 1214.0,112.1 1215.2,112.0 1216.4,111.9 1217.5,111.8 1218.7,111.8 1219.9,111.7 1221.1,111.7 1222.2,111.7 1223.4,111.7 1224.6,111.7 1225.7,111.7 1226.9,111.7 1228.1,111.7 1229.2,111.7 1230.4,111.7 1231.6,111.7 1232.8,111.7 1233.9,111.7 1235.1,111.7 1236.3,111.7 1237.4,111.7 1238.6,111.7 1239.8,111.7 1240.9,111.7 1242.1,111.7 1243.3,111.7 1244.5,111.7 1245.6,111.7 1246.8,111.7 1248.0,111.7 1249.1,111.7 1250.3,111.7 1251.5,111.7 1252.6,111.7 1253.8,111.7 1255.0,111.7 1256.2,111.7 1257.3,111.7 1258.5,111.7 1259.7,111.7 1260.8,111.7 1262.0,111.7 1263.2,111.7 1264.3,111.7 1265.5,111.7 1266.7,111.7 1267.9,111.7 1269.0,111.7 1270.2,111.7 1271.4,111.7 1272.5,111.7 1273.7,111.7 1274.9,111.7 1276.0,111.7 1277.2,111.7 1278.4,111.7 1279.6,111.7 1280.7,111.7 1281.9,111.7 1283.1,111.7 1284.2,111.7" fill="none" stroke="#333" stroke-width="1.6"/>
<path d="M1059.6 119.5V158.9M1064.3 96.8V133.5M1069.0 78.4V113.4M1073.6 86.3V121.3M1078.3 136.2V170.3M1083.0 137.0V169.4M1087.7 179.0V209.7M1092.4 156.3V186.0M1097.0 158.9V189.5M1101.7 168.5V204.4M1106.4 119.5V158.9M1111.1 108.2V149.3M1115.8 95.9V136.2M1120.4 82.8V122.2M1125.1 80.2V118.7M1129.8 87.2V125.7M1134.5 73.2V110.8M1139.2 80.2V116.9M1143.8 131.8V167.7M1148.5 98.5V133.5M1153.2 138.8V172.9M1157.9 100.3V132.7M1162.6 128.3V158.9M1167.2 138.8V167.7M1171.9 150.2V177.3M1176.6 162.4V189.5M1181.3 161.5V191.3M1186.0 106.4V140.5M1190.6 108.2V143.2M1195.3 76.7V113.4M1200.0 109.0V145.8M1204.7 119.5V156.3M1209.4 111.7V146.7M1214.0 88.9V123.9M1218.7 113.4V148.4M1223.4 77.5V112.5M1228.1 71.4V106.4M1232.8 67.9V102.9M1237.4 81.9V116.0M1242.1 116.0V151.0M1246.8 102.9V138.8M1251.5 101.2V137.0M1256.2 87.2V122.2M1260.8 106.4V142.3M1265.5 95.0V132.7M1270.2 96.8V135.3M1274.9 85.4V123.9M1279.6 100.3V138.8M1284.2 75.8V111.7M1288.9 86.3V122.2" stroke="#1f77b4" stroke-width="1.6" fill="none"/>
<g fill="#1f77b4"><circle cx="1059.6" cy="138.8" r="1.7"/><circle cx="1064.3" cy="115.2" r="1.7"/><circle cx="1069.0" cy="95.9" r="1.7"/><circle cx="1073.6" cy="103.8" r="1.7"/><circle cx="1078.3" cy="152.8" r="1.7"/><circle cx="1083.0" cy="152.8" r="1.7"/><circle cx="1087.7" cy="193.9" r="1.7"/><circle cx="1092.4" cy="171.2" r="1.7"/><circle cx="1097.0" cy="174.7" r="1.7"/><circle cx="1101.7" cy="186.0" r="1.7"/><circle cx="1106.4" cy="138.8" r="1.7"/><circle cx="1111.1" cy="129.2" r="1.7"/><circle cx="1115.8" cy="116.0" r="1.7"/><circle cx="1120.4" cy="102.0" r="1.7"/><circle cx="1125.1" cy="99.4" r="1.7"/><circle cx="1129.8" cy="106.4" r="1.7"/><circle cx="1134.5" cy="92.4" r="1.7"/><circle cx="1139.2" cy="98.5" r="1.7"/><circle cx="1143.8" cy="150.2" r="1.7"/><circle cx="1148.5" cy="116.0" r="1.7"/><circle cx="1153.2" cy="155.4" r="1.7"/><circle cx="1157.9" cy="116.9" r="1.7"/><circle cx="1162.6" cy="143.2" r="1.7"/><circle cx="1167.2" cy="153.7" r="1.7"/><circle cx="1171.9" cy="164.2" r="1.7"/><circle cx="1176.6" cy="176.4" r="1.7"/><circle cx="1181.3" cy="176.4" r="1.7"/><circle cx="1186.0" cy="123.0" r="1.7"/><circle cx="1190.6" cy="125.7" r="1.7"/><circle cx="1195.3" cy="95.9" r="1.7"/><circle cx="1200.0" cy="127.4" r="1.7"/><circle cx="1204.7" cy="137.9" r="1.7"/><circle cx="1209.4" cy="129.2" r="1.7"/><circle cx="1214.0" cy="106.4" r="1.7"/><circle cx="1218.7" cy="130.9" r="1.7"/><circle cx="1223.4" cy="95.9" r="1.7"/><circle cx="1228.1" cy="88.9" r="1.7"/><circle cx="1232.8" cy="85.4" r="1.7"/><circle cx="1237.4" cy="98.5" r="1.7"/><circle cx="1242.1" cy="133.5" r="1.7"/><circle cx="1246.8" cy="120.4" r="1.7"/><circle cx="1251.5" cy="119.5" r="1.7"/><circle cx="1256.2" cy="104.7" r="1.7"/><circle cx="1260.8" cy="123.9" r="1.7"/><circle cx="1265.5" cy="113.4" r="1.7"/><circle cx="1270.2" cy="116.9" r="1.7"/><circle cx="1274.9" cy="104.7" r="1.7"/><circle cx="1279.6" cy="119.5" r="1.7"/><circle cx="1284.2" cy="94.2" r="1.7"/><circle cx="1288.9" cy="104.7" r="1.7"/></g>
<text transform="translate(1059.60 224.50) scale(0.97 1)" font-family="'Liberation Sans', sans-serif" font-size="10.9" fill="#000" text-anchor="middle" stroke="#000" stroke-width="0.18">3920</text>
<text transform="translate(1106.40 224.50) scale(0.97 1)" font-family="'Liberation Sans', sans-serif" font-size="10.9" fill="#000" text-anchor="middle" stroke="#000" stroke-width="0.18">3940</text>
<text transform="translate(1153.20 224.50) scale(0.97 1)" font-family="'Liberation Sans', sans-serif" font-size="10.9" fill="#000" text-anchor="middle" stroke="#000" stroke-width="0.18">3960</text>
<text transform="translate(1200.00 224.50) scale(0.97 1)" font-family="'Liberation Sans', sans-serif" font-size="10.9" fill="#000" text-anchor="middle" stroke="#000" stroke-width="0.18">3980</text>
<text transform="translate(1246.80 224.50) scale(0.97 1)" font-family="'Liberation Sans', sans-serif" font-size="10.9" fill="#000" text-anchor="middle" stroke="#000" stroke-width="0.18">4000</text>
<text transform="translate(1293.60 224.50) scale(0.97 1)" font-family="'Liberation Sans', sans-serif" font-size="10.9" fill="#000" text-anchor="middle" stroke="#000" stroke-width="0.18">4020</text>
<text transform="translate(1042.50 208.20) scale(0.97 1)" font-family="'Liberation Sans', sans-serif" font-size="10.9" fill="#000" text-anchor="end" stroke="#000" stroke-width="0.18">0</text>
<text transform="translate(1042.50 173.20) scale(0.97 1)" font-family="'Liberation Sans', sans-serif" font-size="10.9" fill="#000" text-anchor="end" stroke="#000" stroke-width="0.18">2</text>
<text transform="translate(1042.50 138.20) scale(0.97 1)" font-family="'Liberation Sans', sans-serif" font-size="10.9" fill="#000" text-anchor="end" stroke="#000" stroke-width="0.18">4</text>
<text transform="translate(1042.50 103.20) scale(0.97 1)" font-family="'Liberation Sans', sans-serif" font-size="10.9" fill="#000" text-anchor="end" stroke="#000" stroke-width="0.18">6</text>
<text transform="translate(1042.50 68.20) scale(0.97 1)" font-family="'Liberation Sans', sans-serif" font-size="10.9" fill="#000" text-anchor="end" stroke="#000" stroke-width="0.18">8</text>
<path d="M1059.6 211.0v3.5M1106.4 211.0v3.5M1153.2 211.0v3.5M1200.0 211.0v3.5M1246.8 211.0v3.5M1293.6 211.0v3.5M1048.0 204.4h-3.5M1048.0 169.4h-3.5M1048.0 134.4h-3.5M1048.0 99.4h-3.5M1048.0 64.4h-3.5" stroke="#333" stroke-width="0.9"/>
<text x="1049.5" y="72.3" font-family="'Liberation Sans', sans-serif" font-size="9.6" fill="#222">e<tspan dy="-3.6" font-size="6.8">−17</tspan><tspan dy="3.6">x2</tspan><tspan font-style="italic">Å</tspan></text>
<defs><clipPath id="specclip"><rect x="101.6" y="348.4" width="1198.0" height="83.6"/></clipPath></defs>
<g clip-path="url(#specclip)">
<rect x="363.3" y="348.4" width="54.5" height="83.6" fill="#bfbf00"/>
<polygon points="104.4,407.5 106.2,401.3 108.0,400.0 109.7,400.7 111.5,401.0 113.3,401.1 115.1,401.1 116.8,400.9 118.6,400.9 120.4,401.2 122.2,401.4 123.9,401.4 125.7,401.3 127.5,401.5 129.3,402.0 131.0,402.4 132.8,402.6 134.6,402.5 136.4,402.5 138.1,402.7 139.9,402.5 141.7,402.3 143.5,402.3 145.2,402.3 147.0,402.8 148.8,403.5 150.6,403.7 152.4,403.8 154.1,404.0 155.9,403.9 157.7,404.2 159.5,405.1 161.2,405.6 163.0,405.6 164.8,405.8 166.6,406.2 168.3,406.5 170.1,406.3 171.9,405.6 173.7,405.3 175.4,405.7 177.2,405.8 179.0,405.6 180.8,405.6 182.5,405.3 184.3,405.0 186.1,405.2 187.9,405.8 189.6,405.9 191.4,405.5 193.2,405.1 195.0,405.1 196.7,405.2 198.5,405.5 200.3,405.5 202.1,404.9 203.8,403.9 205.6,403.3 207.4,403.6 209.2,404.8 210.9,405.9 212.7,406.6 214.5,406.5 216.3,406.1 218.0,406.0 219.8,406.0 221.6,405.8 223.4,405.4 225.1,405.4 226.9,405.7 228.7,405.9 230.5,405.8 232.2,406.2 234.0,407.1 235.8,407.4 237.6,406.8 239.3,406.1 241.1,405.5 242.9,405.3 244.7,405.7 246.4,406.5 248.2,406.9 250.0,406.9 251.8,406.8 253.5,406.9 255.3,407.3 257.1,407.7 258.9,408.1 260.6,408.3 262.4,408.5 264.2,408.6 266.0,408.4 267.8,408.0 269.5,407.8 271.3,408.3 273.1,409.2 274.9,409.8 276.6,409.6 278.4,408.9 280.2,408.3 282.0,407.8 283.7,407.7 285.5,407.9 287.3,408.5 289.1,409.1 290.8,409.5 292.6,409.6 294.4,409.8 296.2,409.8 297.9,409.6 299.7,409.4 301.5,409.4 303.3,409.5 305.0,409.5 306.8,409.7 308.6,410.2 310.4,410.7 312.1,411.0 313.9,410.8 315.7,410.5 317.5,410.5 319.2,410.5 321.0,410.6 322.8,410.8 324.6,410.8 326.3,410.5 328.1,410.3 329.9,410.4 331.7,411.0 333.4,411.5 335.2,411.4 337.0,411.2 338.8,411.3 340.5,411.5 342.3,411.4 344.1,411.3 345.9,411.0 347.6,410.8 349.4,410.9 351.2,411.3 353.0,411.8 354.7,412.0 356.5,411.8 358.3,411.5 360.1,411.4 361.8,411.6 363.6,412.0 365.4,412.1 367.2,411.8 368.9,411.2 370.7,410.7 372.5,410.6 374.3,410.8 376.1,411.2 377.8,411.3 379.6,411.2 381.4,411.1 383.2,411.1 384.9,411.3 386.7,411.4 388.5,411.3 390.3,411.1 392.0,411.3 393.8,411.6 395.6,411.4 397.4,411.1 399.1,411.2 400.9,411.1 402.7,410.6 404.5,410.5 406.2,411.1 408.0,411.8 409.8,412.1 411.6,412.2 413.3,412.2 415.1,412.0 416.9,411.8 418.7,411.6 420.4,411.5 422.2,411.7 424.0,411.8 425.8,411.6 427.5,411.6 429.3,411.7 431.1,411.7 432.9,411.6 434.6,411.5 436.4,411.4 438.2,411.2 440.0,411.2 441.7,411.5 443.5,411.8 445.3,412.0 447.1,411.7 448.8,411.4 450.6,411.3 452.4,411.4 454.2,411.7 455.9,411.9 457.7,411.9 459.5,411.9 461.3,411.9 463.0,411.8 464.8,411.8 466.6,411.7 468.4,411.6 470.1,411.5 471.9,411.4 473.7,411.2 475.5,411.0 477.2,411.1 479.0,411.4 480.8,411.8 482.6,412.2 484.4,412.4 486.1,412.4 487.9,412.3 489.7,412.4 491.5,412.5 493.2,412.3 495.0,412.0 496.8,411.9 498.6,411.9 500.3,411.5 502.1,410.9 503.9,411.1 505.7,411.9 507.4,412.5 509.2,412.3 511.0,411.8 512.8,411.4 514.5,411.2 516.3,411.1 518.1,411.3 519.9,411.5 521.6,411.5 523.4,411.3 525.2,411.3 527.0,411.3 528.7,411.1 530.5,411.0 532.3,411.2 534.1,411.5 535.8,411.6 537.6,411.7 539.4,411.9 541.2,412.0 542.9,412.0 544.7,412.1 546.5,412.2 548.3,412.1 550.0,411.8 551.8,411.4 553.6,411.4 555.4,411.7 557.1,412.2 558.9,412.3 560.7,412.0 562.5,411.3 564.2,410.6 566.0,410.4 567.8,411.0 569.6,411.8 571.3,412.3 573.1,412.3 574.9,411.9 576.7,411.6 578.4,411.6 580.2,411.7 582.0,411.7 583.8,411.7 585.5,411.9 587.3,412.1 589.1,412.3 590.9,412.3 592.6,412.1 594.4,411.8 596.2,411.5 598.0,411.4 599.8,411.7 601.5,412.2 603.3,412.6 605.1,412.6 606.9,412.4 608.6,412.2 610.4,411.9 612.2,411.6 614.0,411.6 615.7,411.9 617.5,412.1 619.3,412.2 621.1,412.2 622.8,412.4 624.6,412.7 626.4,412.8 628.2,412.7 629.9,412.4 631.7,412.2 633.5,412.2 635.3,412.3 637.0,412.2 638.8,411.9 640.6,411.4 642.4,411.4 644.1,411.6 645.9,411.9 647.7,412.0 649.5,412.0 651.2,412.1 653.0,412.3 654.8,412.4 656.6,412.4 658.3,412.2 660.1,411.8 661.9,411.9 663.7,412.4 665.4,412.8 667.2,412.9 669.0,412.9 670.8,412.9 672.5,412.9 674.3,412.7 676.1,412.5 677.9,412.5 679.6,412.7 681.4,412.8 683.2,412.8 685.0,412.8 686.7,412.6 688.5,412.4 690.3,412.1 692.1,412.0 693.8,412.1 695.6,411.9 697.4,411.5 699.2,411.3 700.9,411.6 702.7,411.8 704.5,411.7 706.3,411.6 708.1,411.7 709.8,411.7 711.6,411.8 713.4,412.0 715.2,412.2 716.9,412.4 718.7,412.4 720.5,412.3 722.3,412.3 724.0,412.4 725.8,412.4 727.6,412.3 729.4,412.1 731.1,412.0 732.9,411.9 734.7,411.8 736.5,411.8 738.2,411.7 740.0,411.8 741.8,412.2 743.6,412.6 745.3,412.6 747.1,412.3 748.9,412.0 750.7,411.7 752.4,411.6 754.2,411.9 756.0,412.2 757.8,412.6 759.5,412.8 761.3,413.0 763.1,413.1 764.9,413.0 766.6,412.6 768.4,412.4 770.2,412.6 772.0,413.0 773.7,413.1 775.5,413.0 777.3,412.8 779.1,412.8 780.8,412.9 782.6,412.9 784.4,412.7 786.2,412.6 787.9,412.6 789.7,412.7 791.5,412.5 793.3,412.3 795.0,412.4 796.8,412.6 798.6,412.8 800.4,413.2 802.1,413.6 803.9,413.7 805.7,413.3 807.5,412.7 809.2,412.4 811.0,412.4 812.8,412.5 814.6,412.4 816.4,412.4 818.1,412.5 819.9,412.7 821.7,412.8 823.5,412.9 825.2,412.9 827.0,413.2 828.8,413.3 830.6,412.9 832.3,412.2 834.1,411.8 835.9,411.8 837.7,412.2 839.4,412.3 841.2,412.0 843.0,411.8 844.8,412.0 846.5,412.3 848.3,412.5 850.1,412.5 851.9,412.6 853.6,412.8 855.4,412.9 857.2,412.9 859.0,412.7 860.7,412.5 862.5,412.3 864.3,412.3 866.1,412.5 867.8,412.7 869.6,412.8 871.4,412.7 873.2,412.6 874.9,412.6 876.7,412.7 878.5,412.9 880.3,413.1 882.0,413.4 883.8,413.4 885.6,413.1 887.4,412.8 889.1,412.7 890.9,412.7 892.7,412.7 894.5,412.7 896.2,412.6 898.0,412.5 899.8,412.4 901.6,412.5 903.3,412.9 905.1,413.3 906.9,413.3 908.7,412.8 910.4,412.4 912.2,412.4 914.0,412.6 915.8,412.6 917.5,412.5 919.3,412.5 921.1,412.7 922.9,412.8 924.6,413.0 926.4,413.2 928.2,413.1 930.0,412.9 931.8,412.8 933.5,412.9 935.3,412.8 937.1,412.6 938.9,412.6 940.6,412.6 942.4,413.0 944.2,413.3 946.0,413.4 947.7,413.3 949.5,413.0 951.3,412.5 953.1,412.3 954.8,412.6 956.6,413.0 958.4,413.4 960.2,413.4 961.9,413.2 963.7,413.2 965.5,413.2 967.3,413.0 969.0,412.6 970.8,412.6 972.6,412.7 974.4,412.7 976.1,412.7 977.9,412.9 979.7,413.3 981.5,413.9 983.2,414.3 985.0,414.4 986.8,414.2 988.6,413.7 990.3,413.4 992.1,413.2 993.9,413.1 995.7,413.1 997.4,413.3 999.2,413.2 1001.0,412.9 1002.8,412.7 1004.5,412.7 1006.3,412.8 1008.1,413.0 1009.9,413.5 1011.6,413.8 1013.4,413.9 1015.2,413.8 1017.0,413.6 1018.7,413.3 1020.5,413.2 1022.3,413.4 1024.1,413.5 1025.8,413.5 1027.6,413.4 1029.4,413.2 1031.2,413.3 1032.9,413.5 1034.7,413.4 1036.5,413.2 1038.3,412.8 1040.1,412.4 1041.8,412.3 1043.6,412.6 1045.4,413.1 1047.2,413.4 1048.9,413.4 1050.7,413.5 1052.5,413.6 1054.3,413.4 1056.0,413.2 1057.8,413.4 1059.6,413.6 1061.4,413.5 1063.1,413.3 1064.9,413.3 1066.7,413.5 1068.5,413.5 1070.2,413.4 1072.0,413.3 1073.8,413.3 1075.6,413.3 1077.3,413.4 1079.1,413.8 1080.9,414.1 1082.7,414.1 1084.4,414.3 1086.2,414.2 1088.0,413.8 1089.8,413.2 1091.5,413.1 1093.3,413.4 1095.1,413.7 1096.9,413.3 1098.6,412.8 1100.4,412.7 1102.2,413.1 1104.0,413.4 1105.7,413.5 1107.5,413.6 1109.3,413.8 1111.1,413.7 1112.8,413.4 1114.6,413.0 1116.4,412.8 1118.2,412.9 1119.9,413.3 1121.7,413.5 1123.5,413.6 1125.3,413.4 1127.0,413.2 1128.8,413.1 1130.6,413.2 1132.4,413.4 1134.1,413.3 1135.9,413.2 1137.7,413.0 1139.5,412.8 1141.2,412.6 1143.0,412.4 1144.8,412.4 1146.6,412.6 1148.4,412.8 1150.1,413.1 1151.9,413.5 1153.7,413.8 1155.5,413.8 1157.2,413.5 1159.0,413.2 1160.8,413.1 1162.6,413.1 1164.3,413.2 1166.1,413.1 1167.9,413.0 1169.7,413.0 1171.4,413.0 1173.2,413.0 1175.0,413.1 1176.8,413.2 1178.5,413.5 1180.3,413.7 1182.1,413.5 1183.9,413.1 1185.6,413.0 1187.4,413.3 1189.2,413.8 1191.0,413.8 1192.7,413.5 1194.5,413.1 1196.3,412.9 1198.1,413.1 1199.8,413.2 1201.6,413.0 1203.4,413.1 1205.2,413.4 1206.9,413.4 1208.7,413.3 1210.5,413.4 1212.3,413.4 1214.0,413.3 1215.8,413.3 1217.6,413.4 1219.4,413.5 1221.1,413.5 1222.9,413.4 1224.7,413.4 1226.5,413.3 1228.2,413.1 1230.0,412.9 1231.8,413.0 1233.6,413.2 1235.3,413.3 1237.1,413.3 1238.9,413.3 1240.7,413.5 1242.4,413.8 1244.2,414.0 1246.0,413.9 1247.8,413.8 1249.5,413.8 1251.3,413.6 1253.1,413.4 1254.9,413.2 1256.6,413.2 1258.4,413.1 1260.2,413.1 1262.0,413.1 1263.8,413.1 1265.5,413.3 1267.3,413.6 1269.1,413.7 1270.9,413.6 1272.6,413.3 1274.4,413.0 1276.2,413.0 1278.0,413.4 1279.7,413.5 1281.5,413.4 1283.3,413.5 1285.1,413.7 1286.8,413.7 1288.6,413.4 1290.4,413.1 1292.2,413.0 1293.9,412.9 1295.7,412.5 1297.5,412.4 1299.3,412.4 1301.0,412.4 1302.8,412.4 1302.8,425.9 1301.0,425.8 1299.3,425.9 1297.5,425.9 1295.7,425.7 1293.9,425.4 1292.2,425.3 1290.4,425.2 1288.6,424.9 1286.8,424.6 1285.1,424.7 1283.3,424.9 1281.5,424.9 1279.7,424.8 1278.0,425.0 1276.2,425.2 1274.4,425.3 1272.6,425.0 1270.9,424.8 1269.1,424.7 1267.3,424.7 1265.5,425.0 1263.8,425.2 1262.0,425.2 1260.2,425.2 1258.4,425.2 1256.6,425.1 1254.9,425.1 1253.1,424.9 1251.3,424.7 1249.5,424.5 1247.8,424.5 1246.0,424.5 1244.2,424.4 1242.4,424.5 1240.7,424.8 1238.9,425.0 1237.1,425.0 1235.3,425.0 1233.6,425.1 1231.8,425.3 1230.0,425.3 1228.2,425.2 1226.5,425.0 1224.7,425.0 1222.9,424.9 1221.1,424.9 1219.4,424.8 1217.6,424.9 1215.8,425.0 1214.0,425.0 1212.3,424.9 1210.5,424.9 1208.7,425.0 1206.9,424.9 1205.2,424.9 1203.4,425.2 1201.6,425.3 1199.8,425.1 1198.1,425.2 1196.3,425.4 1194.5,425.2 1192.7,424.9 1191.0,424.5 1189.2,424.6 1187.4,425.0 1185.6,425.3 1183.9,425.2 1182.1,424.9 1180.3,424.7 1178.5,424.8 1176.8,425.1 1175.0,425.2 1173.2,425.2 1171.4,425.3 1169.7,425.3 1167.9,425.3 1166.1,425.2 1164.3,425.1 1162.6,425.2 1160.8,425.2 1159.0,425.1 1157.2,424.8 1155.5,424.5 1153.7,424.5 1151.9,424.8 1150.1,425.2 1148.4,425.5 1146.6,425.7 1144.8,425.9 1143.0,425.8 1141.2,425.7 1139.5,425.4 1137.7,425.2 1135.9,425.1 1134.1,425.0 1132.4,424.9 1130.6,425.1 1128.8,425.2 1127.0,425.1 1125.3,424.9 1123.5,424.8 1121.7,424.8 1119.9,425.0 1118.2,425.3 1116.4,425.5 1114.6,425.3 1112.8,424.9 1111.1,424.6 1109.3,424.6 1107.5,424.7 1105.7,424.8 1104.0,424.9 1102.2,425.2 1100.4,425.5 1098.6,425.5 1096.9,425.0 1095.1,424.7 1093.3,424.9 1091.5,425.2 1089.8,425.1 1088.0,424.6 1086.2,424.2 1084.4,424.1 1082.7,424.2 1080.9,424.3 1079.1,424.6 1077.3,424.9 1075.6,425.0 1073.8,425.0 1072.0,425.0 1070.2,425.0 1068.5,424.8 1066.7,424.8 1064.9,425.0 1063.1,425.0 1061.4,424.9 1059.6,424.8 1057.8,424.9 1056.0,425.1 1054.3,424.9 1052.5,424.7 1050.7,424.8 1048.9,424.9 1047.2,425.0 1045.4,425.2 1043.6,425.7 1041.8,426.0 1040.1,425.8 1038.3,425.4 1036.5,425.1 1034.7,424.9 1032.9,424.9 1031.2,425.0 1029.4,425.1 1027.6,425.0 1025.8,424.8 1024.1,424.8 1022.3,424.9 1020.5,425.1 1018.7,425.1 1017.0,424.8 1015.2,424.5 1013.4,424.4 1011.6,424.6 1009.9,424.9 1008.1,425.3 1006.3,425.5 1004.5,425.6 1002.8,425.6 1001.0,425.4 999.2,425.1 997.4,425.1 995.7,425.2 993.9,425.2 992.1,425.1 990.3,425.0 988.6,424.7 986.8,424.2 985.0,424.0 983.2,424.1 981.5,424.5 979.7,425.0 977.9,425.4 976.1,425.6 974.4,425.6 972.6,425.6 970.8,425.7 969.0,425.7 967.3,425.4 965.5,425.2 963.7,425.2 961.9,425.1 960.2,425.0 958.4,425.0 956.6,425.4 954.8,425.8 953.1,426.0 951.3,425.8 949.5,425.4 947.7,425.1 946.0,425.0 944.2,425.1 942.4,425.4 940.6,425.7 938.9,425.8 937.1,425.7 935.3,425.6 933.5,425.5 931.8,425.6 930.0,425.5 928.2,425.3 926.4,425.2 924.6,425.4 922.9,425.6 921.1,425.7 919.3,425.9 917.5,426.0 915.8,425.8 914.0,425.8 912.2,426.0 910.4,426.0 908.7,425.6 906.9,425.2 905.1,425.1 903.3,425.5 901.6,425.9 899.8,426.0 898.0,426.0 896.2,425.9 894.5,425.8 892.7,425.8 890.9,425.8 889.1,425.7 887.4,425.6 885.6,425.4 883.8,425.1 882.0,425.1 880.3,425.4 878.5,425.6 876.7,425.8 874.9,425.8 873.2,425.9 871.4,425.7 869.6,425.7 867.8,425.7 866.1,426.0 864.3,426.1 862.5,426.1 860.7,426.0 859.0,425.8 857.2,425.6 855.4,425.6 853.6,425.7 851.9,425.9 850.1,426.0 848.3,426.0 846.5,426.1 844.8,426.5 843.0,426.7 841.2,426.4 839.4,426.2 837.7,426.3 835.9,426.6 834.1,426.7 832.3,426.3 830.6,425.6 828.8,425.2 827.0,425.3 825.2,425.6 823.5,425.6 821.7,425.7 819.9,425.8 818.1,426.0 816.4,426.1 814.6,426.1 812.8,426.0 811.0,426.1 809.2,426.1 807.5,425.8 805.7,425.3 803.9,424.9 802.1,424.9 800.4,425.3 798.6,425.7 796.8,425.9 795.0,426.1 793.3,426.1 791.5,426.0 789.7,425.8 787.9,425.8 786.2,425.9 784.4,425.8 782.6,425.6 780.8,425.6 779.1,425.7 777.3,425.7 775.5,425.5 773.7,425.4 772.0,425.5 770.2,425.9 768.4,426.1 766.6,425.9 764.9,425.5 763.1,425.4 761.3,425.5 759.5,425.7 757.8,425.9 756.0,426.2 754.2,426.6 752.4,426.8 750.7,426.7 748.9,426.5 747.1,426.1 745.3,425.9 743.6,425.9 741.8,426.3 740.0,426.7 738.2,426.7 736.5,426.6 734.7,426.6 732.9,426.5 731.1,426.5 729.4,426.4 727.6,426.2 725.8,426.1 724.0,426.1 722.3,426.2 720.5,426.2 718.7,426.1 716.9,426.1 715.2,426.3 713.4,426.5 711.6,426.7 709.8,426.7 708.1,426.8 706.3,426.8 704.5,426.8 702.7,426.7 700.9,426.9 699.2,427.1 697.4,427.0 695.6,426.6 693.8,426.4 692.1,426.5 690.3,426.4 688.5,426.1 686.7,425.9 685.0,425.7 683.2,425.7 681.4,425.7 679.6,425.8 677.9,426.0 676.1,426.0 674.3,425.8 672.5,425.6 670.8,425.6 669.0,425.7 667.2,425.6 665.4,425.7 663.7,426.1 661.9,426.6 660.1,426.6 658.3,426.3 656.6,426.1 654.8,426.1 653.0,426.2 651.2,426.3 649.5,426.5 647.7,426.5 645.9,426.6 644.1,426.8 642.4,427.1 640.6,427.0 638.8,426.6 637.0,426.3 635.3,426.2 633.5,426.3 631.7,426.3 629.9,426.1 628.2,425.8 626.4,425.7 624.6,425.8 622.8,426.1 621.1,426.3 619.3,426.3 617.5,426.4 615.7,426.6 614.0,426.9 612.2,426.9 610.4,426.5 608.6,426.3 606.9,426.1 605.1,426.0 603.3,426.0 601.5,426.3 599.8,426.8 598.0,427.1 596.2,427.0 594.4,426.7 592.6,426.4 590.9,426.2 589.1,426.2 587.3,426.4 585.5,426.6 583.8,426.8 582.0,426.8 580.2,426.7 578.4,426.9 576.7,426.9 574.9,426.6 573.1,426.2 571.3,426.2 569.6,426.7 567.8,427.5 566.0,428.0 564.2,427.8 562.5,427.1 560.7,426.5 558.9,426.2 557.1,426.3 555.4,426.8 553.6,427.1 551.8,427.1 550.0,426.7 548.3,426.4 546.5,426.3 544.7,426.4 542.9,426.5 541.2,426.5 539.4,426.6 537.6,426.8 535.8,426.9 534.1,427.0 532.3,427.3 530.5,427.5 528.7,427.4 527.0,427.1 525.2,427.2 523.4,427.2 521.6,427.0 519.9,427.0 518.1,427.2 516.3,427.3 514.5,427.3 512.8,427.1 511.0,426.7 509.2,426.2 507.4,426.0 505.7,426.6 503.9,427.4 502.1,427.6 500.3,427.0 498.6,426.6 496.8,426.6 495.0,426.5 493.2,426.2 491.5,426.0 489.7,426.1 487.9,426.2 486.1,426.1 484.4,426.1 482.6,426.3 480.8,426.7 479.0,427.1 477.2,427.4 475.5,427.5 473.7,427.3 471.9,427.1 470.1,427.0 468.4,426.9 466.6,426.8 464.8,426.7 463.0,426.7 461.3,426.6 459.5,426.6 457.7,426.6 455.9,426.6 454.2,426.8 452.4,427.1 450.6,427.2 448.8,427.1 447.1,426.7 445.3,426.5 443.5,426.7 441.7,427.0 440.0,427.3 438.2,427.3 436.4,427.1 434.6,427.0 432.9,426.9 431.1,426.8 429.3,426.8 427.5,426.9 425.8,426.8 424.0,426.7 422.2,426.8 420.4,426.9 418.7,426.9 416.9,426.7 415.1,426.5 413.3,426.3 411.6,426.4 409.8,426.4 408.0,426.7 406.2,427.4 404.5,427.9 402.7,427.9 400.9,427.4 399.1,427.3 397.4,427.4 395.6,427.1 393.8,426.9 392.0,427.2 390.3,427.4 388.5,427.2 386.7,427.0 384.9,427.2 383.2,427.3 381.4,427.4 379.6,427.3 377.8,427.1 376.1,427.3 374.3,427.6 372.5,427.9 370.7,427.7 368.9,427.3 367.2,426.7 365.4,426.4 363.6,426.6 361.8,426.9 360.1,427.1 358.3,427.0 356.5,426.7 354.7,426.5 353.0,426.7 351.2,427.2 349.4,427.6 347.6,427.7 345.9,427.4 344.1,427.1 342.3,427.0 340.5,426.8 338.8,427.0 337.0,427.1 335.2,426.8 333.4,426.7 331.7,427.1 329.9,427.6 328.1,427.7 326.3,427.5 324.6,427.2 322.8,427.2 321.0,427.3 319.2,427.4 317.5,427.4 315.7,427.3 313.9,427.0 312.1,426.8 310.4,427.0 308.6,427.5 306.8,427.9 305.0,428.0 303.3,428.0 301.5,428.0 299.7,428.0 297.9,427.8 296.2,427.6 294.4,427.6 292.6,427.7 290.8,427.8 289.1,428.0 287.3,428.5 285.5,429.0 283.7,429.1 282.0,428.9 280.2,428.5 278.4,427.9 276.6,427.3 274.9,427.1 273.1,427.5 271.3,428.2 269.5,428.6 267.8,428.4 266.0,428.0 264.2,427.8 262.4,427.8 260.6,428.0 258.9,428.1 257.1,428.3 255.3,428.6 253.5,428.8 251.8,428.9 250.0,428.7 248.2,428.7 246.4,429.0 244.7,429.5 242.9,429.8 241.1,429.6 239.3,429.1 237.6,428.5 235.8,428.1 234.0,428.2 232.2,428.8 230.5,429.1 228.7,429.0 226.9,429.1 225.1,429.3 223.4,429.3 221.6,429.0 219.8,428.8 218.0,428.9 216.3,428.8 214.5,428.5 212.7,428.4 210.9,428.8 209.2,429.6 207.4,430.4 205.6,430.6 203.8,430.2 202.1,429.5 200.3,429.1 198.5,429.1 196.7,429.3 195.0,429.4 193.2,429.4 191.4,429.2 189.6,428.8 187.9,429.0 186.1,429.4 184.3,429.6 182.5,429.3 180.8,429.2 179.0,429.1 177.2,429.1 175.4,429.1 173.7,429.4 171.9,429.2 170.1,428.7 168.3,428.6 166.6,428.8 164.8,429.1 163.0,429.3 161.2,429.2 159.5,429.6 157.7,430.3 155.9,430.5 154.1,430.4 152.4,430.5 150.6,430.5 148.8,430.5 147.0,430.8 145.2,431.1 143.5,431.0 141.7,430.9 139.9,430.6 138.1,430.4 136.4,430.4 134.6,430.3 132.8,430.3 131.0,430.4 129.3,430.6 127.5,430.9 125.7,431.0 123.9,430.9 122.2,430.9 120.4,431.0 118.6,431.2 116.8,431.2 115.1,431.0 113.3,431.0 111.5,431.1 109.7,431.4 108.0,431.9 106.2,431.2 104.4,427.2" fill="#808080" fill-opacity="0.52"/>
<line x1="101.6" y1="419.4" x2="1299.6" y2="419.4" stroke="#555" stroke-width="1.4"/>
<line x1="330.8" y1="348.4" x2="330.8" y2="432.0" stroke="#666" stroke-width="1.3" stroke-dasharray="4 2.2"/>
<line x1="390.5" y1="348.4" x2="390.5" y2="432.0" stroke="#000" stroke-width="1.3" stroke-dasharray="1.6 1.6"/>
<rect x="132.8" y="348.4" width="12.1" height="83.6" fill="#808080" fill-opacity="0.7" stroke="#333" stroke-width="1.2"/>
<path d="M132.8 363.1L145.0 352.6M132.8 408.2L145.0 398.8M132.8 431.3L145.0 422.9" stroke="#222" stroke-width="1"/>
<rect x="1270.3" y="348.4" width="6.6" height="83.6" fill="#808080" fill-opacity="0.7" stroke="#333" stroke-width="1.2"/>
<path d="M1270.3 369.6L1276.9 365.5M1270.3 417.3L1276.9 411.9" stroke="#222" stroke-width="1"/>
<polyline points="100.9,423.4 102.0,411.5 103.2,414.6 104.4,358.4 105.6,371.6 106.8,394.2 108.0,405.5 109.1,414.9 110.3,428.1 111.5,361.5 112.7,378.4 113.9,393.2 115.1,413.2 116.3,394.1 117.4,385.3 118.6,390.2 119.8,383.2 121.0,402.1 122.2,429.3 123.4,375.2 124.5,379.6 125.7,384.1 126.9,393.9 128.1,405.3 129.3,358.5 130.5,397.8 131.6,404.8 132.8,384.6 134.0,415.2 135.2,401.2 136.4,378.4 137.6,375.7 138.7,394.6 139.9,389.7 141.1,356.1 142.3,392.5 143.5,352.3 144.7,385.7 145.8,387.4 147.0,386.8 148.2,373.5 149.4,385.4 150.6,396.3 151.8,386.4 152.9,368.6 154.1,396.4 155.3,396.2 156.5,399.8 157.7,390.1 158.9,403.8 160.0,386.7 161.2,383.0 162.4,399.7 163.6,403.8 164.8,408.7 166.0,394.4 167.1,404.3 168.3,400.2 169.5,397.6 170.7,397.9 171.9,380.4 173.1,375.3 174.2,413.4 175.4,402.9 176.6,391.3 177.8,403.3 179.0,398.5 180.2,387.9 181.3,370.9 182.5,377.1 183.7,392.9 184.9,391.3 186.1,395.9 187.3,396.1 188.5,370.1 189.6,413.6 190.8,397.3 192.0,381.0 193.2,385.3 194.4,411.8 195.6,398.2 196.7,399.2 197.9,392.0 199.1,402.8 200.3,384.7 201.5,392.8 202.7,385.6 203.8,385.5 205.0,413.0 206.2,396.0 207.4,377.1 208.6,389.3 209.8,381.4 210.9,388.0 212.1,397.8 213.3,389.7 214.5,380.0 215.7,376.2 216.9,378.0 218.0,402.3 219.2,388.6 220.4,407.6 221.6,421.3 222.8,395.6 224.0,387.3 225.1,388.2 226.3,381.5 227.5,397.9 228.7,385.9 229.9,389.2 231.1,395.7 232.2,405.9 233.4,390.2 234.6,423.0 235.8,387.1 237.0,394.1 238.2,396.0 239.3,391.2 240.5,389.9 241.7,387.5 242.9,382.3 244.1,394.7 245.3,384.7 246.4,409.9 247.6,391.2 248.8,396.5 250.0,383.0 251.2,396.8 252.4,388.9 253.5,399.9 254.7,400.8 255.9,389.0 257.1,388.3 258.3,395.2 259.5,379.8 260.6,392.2 261.8,385.1 263.0,399.1 264.2,400.0 265.4,394.5 266.6,399.0 267.8,393.1 268.9,405.6 270.1,394.3 271.3,397.1 272.5,399.0 273.7,392.7 274.9,394.4 276.0,395.0 277.2,388.1 278.4,390.0 279.6,389.1 280.8,384.5 282.0,391.2 283.1,387.9 284.3,393.7 285.5,388.7 286.7,389.2 287.9,396.2 289.1,402.4 290.2,401.5 291.4,398.1 292.6,389.6 293.8,392.5 295.0,393.3 296.2,388.7 297.3,386.1 298.5,383.5 299.7,393.5 300.9,388.7 302.1,389.3 303.3,395.9 304.4,394.2 305.6,398.2 306.8,396.8 308.0,396.1 309.2,404.2 310.4,400.4 311.5,397.6 312.7,392.8 313.9,393.1 315.1,388.3 316.3,390.4 317.5,386.7 318.6,379.7 319.8,377.4 321.0,375.5 322.2,375.5 323.4,372.5 324.6,372.5 325.7,379.9 326.9,380.6 328.1,378.1 329.3,367.0 330.5,379.5 331.7,388.7 332.8,383.7 334.0,382.2 335.2,390.8 336.4,389.5 337.6,395.0 338.8,394.2 340.0,388.3 341.1,393.5 342.3,391.7 343.5,386.7 344.7,382.8 345.9,389.5 347.1,398.4 348.2,395.8 349.4,381.8 350.6,385.9 351.8,377.3 353.0,378.8 354.2,369.0 355.3,367.1 356.5,372.1 357.7,370.8 358.9,385.3 360.1,389.5 361.3,390.8 362.4,388.0 363.6,384.2 364.8,391.3 366.0,399.2 367.2,404.3 368.4,420.2 369.5,417.2 370.7,412.6 371.9,403.4 373.1,391.3 374.3,385.3 375.5,384.4 376.6,382.6 377.8,374.5 379.0,384.6 380.2,385.8 381.4,386.6 382.6,390.6 383.7,396.7 384.9,396.2 386.1,394.6 387.3,394.3 388.5,400.6 389.7,405.5 390.8,411.6 392.0,398.3 393.2,392.8 394.4,382.3 395.6,383.1 396.8,385.7 397.9,390.2 399.1,393.4 400.3,391.7 401.5,388.4 402.7,390.1 403.9,380.2 405.0,381.2 406.2,394.7 407.4,394.7 408.6,389.1 409.8,383.8 411.0,385.3 412.2,381.9 413.3,376.7 414.5,378.3 415.7,384.7 416.9,385.0 418.1,378.0 419.3,373.0 420.4,374.9 421.6,377.9 422.8,380.0 424.0,385.7 425.2,390.1 426.4,394.7 427.5,399.6 428.7,385.3 429.9,382.2 431.1,379.0 432.3,381.6 433.5,378.1 434.6,379.7 435.8,385.1 437.0,398.9 438.2,391.9 439.4,391.2 440.6,386.8 441.7,390.9 442.9,386.5 444.1,383.2 445.3,386.8 446.5,379.0 447.7,388.2 448.8,393.5 450.0,390.6 451.2,391.0 452.4,387.6 453.6,382.7 454.8,388.4 455.9,388.0 457.1,381.3 458.3,384.6 459.5,381.5 460.7,387.8 461.9,398.1 463.0,398.7 464.2,399.6 465.4,381.8 466.6,384.9 467.8,392.1 469.0,395.2 470.1,386.9 471.3,388.6 472.5,387.1 473.7,394.7 474.9,395.1 476.1,379.7 477.2,393.3 478.4,388.2 479.6,381.1 480.8,398.7 482.0,385.3 483.2,387.4 484.4,389.0 485.5,387.8 486.7,397.9 487.9,402.4 489.1,378.2 490.3,387.8 491.5,381.8 492.6,380.1 493.8,385.1 495.0,384.5 496.2,381.9 497.4,377.1 498.6,382.7 499.7,380.0 500.9,389.5 502.1,391.2 503.3,387.8 504.5,385.2 505.7,382.9 506.8,374.7 508.0,381.3 509.2,385.5 510.4,375.4 511.6,384.2 512.8,385.4 513.9,385.2 515.1,390.9 516.3,395.3 517.5,388.7 518.7,390.9 519.9,393.9 521.0,388.5 522.2,390.0 523.4,393.7 524.6,400.0 525.8,389.4 527.0,376.9 528.1,380.5 529.3,381.0 530.5,386.7 531.7,382.5 532.9,391.9 534.1,391.2 535.2,386.7 536.4,396.5 537.6,388.9 538.8,385.1 540.0,378.5 541.2,390.8 542.3,386.9 543.5,392.3 544.7,394.3 545.9,405.6 547.1,395.2 548.3,381.8 549.4,384.2 550.6,385.0 551.8,373.2 553.0,384.2 554.2,395.3 555.4,390.5 556.6,387.6 557.7,379.7 558.9,392.0 560.1,385.8 561.3,383.0 562.5,392.2 563.7,390.0 564.8,399.8 566.0,391.0 567.2,401.2 568.4,390.9 569.6,378.5 570.8,384.6 571.9,387.6 573.1,385.8 574.3,375.6 575.5,382.7 576.7,382.4 577.9,390.3 579.0,391.9 580.2,394.6 581.4,390.6 582.6,391.6 583.8,382.9 585.0,384.1 586.1,388.9 587.3,393.6 588.5,405.2 589.7,393.5 590.9,386.6 592.1,386.7 593.2,406.6 594.4,403.7 595.6,390.0 596.8,394.0 598.0,390.6 599.2,390.6 600.3,386.8 601.5,398.5 602.7,392.1 603.9,383.4 605.1,387.1 606.3,392.4 607.4,386.2 608.6,387.1 609.8,392.4 611.0,384.7 612.2,384.2 613.4,387.8 614.5,384.1 615.7,393.4 616.9,385.2 618.1,389.5 619.3,394.0 620.5,391.4 621.6,382.8 622.8,390.7 624.0,391.1 625.2,392.7 626.4,392.4 627.6,382.1 628.7,374.7 629.9,379.1 631.1,384.1 632.3,384.1 633.5,390.0 634.7,392.1 635.9,393.9 637.0,381.7 638.2,389.6 639.4,392.8 640.6,392.1 641.8,388.1 643.0,391.1 644.1,388.5 645.3,386.4 646.5,382.0 647.7,393.7 648.9,388.1 650.1,392.1 651.2,389.9 652.4,379.6 653.6,384.1 654.8,389.6 656.0,386.0 657.2,387.3 658.3,382.8 659.5,389.7 660.7,386.2 661.9,389.0 663.1,388.5 664.3,389.5 665.4,391.6 666.6,387.5 667.8,383.5 669.0,391.1 670.2,390.5 671.4,387.2 672.5,391.4 673.7,383.8 674.9,385.6 676.1,400.2 677.3,394.1 678.5,393.8 679.6,384.1 680.8,383.7 682.0,394.3 683.2,392.8 684.4,389.4 685.6,389.8 686.7,384.1 687.9,382.3 689.1,383.8 690.3,381.6 691.5,382.7 692.7,388.3 693.8,391.1 695.0,391.8 696.2,384.0 697.4,382.4 698.6,382.7 699.8,389.5 700.9,390.3 702.1,386.3 703.3,381.4 704.5,385.4 705.7,387.4 706.9,392.0 708.1,386.2 709.2,385.9 710.4,391.5 711.6,380.6 712.8,391.1 714.0,384.3 715.2,388.6 716.3,388.1 717.5,392.5 718.7,391.2 719.9,385.2 721.1,389.0 722.3,389.5 723.4,383.5 724.6,384.0 725.8,386.8 727.0,385.8 728.2,379.6 729.4,387.7 730.5,386.1 731.7,386.8 732.9,396.3 734.1,398.8 735.3,388.3 736.5,383.7 737.6,387.0 738.8,391.2 740.0,391.3 741.2,384.9 742.4,390.3 743.6,396.0 744.7,385.8 745.9,386.4 747.1,385.5 748.3,382.0 749.5,380.6 750.7,384.7 751.8,390.2 753.0,398.6 754.2,388.3 755.4,387.9 756.6,381.0 757.8,380.8 758.9,384.2 760.1,381.3 761.3,387.7 762.5,389.1 763.7,392.6 764.9,390.2 766.0,386.7 767.2,383.4 768.4,390.6 769.6,383.3 770.8,377.2 772.0,393.5 773.1,390.4 774.3,387.7 775.5,382.0 776.7,377.0 777.9,380.9 779.1,388.2 780.3,392.5 781.4,389.1 782.6,388.3 783.8,387.7 785.0,391.5 786.2,381.9 787.4,390.3 788.5,385.3 789.7,387.5 790.9,393.5 792.1,388.7 793.3,388.3 794.5,388.6 795.6,384.7 796.8,388.4 798.0,375.3 799.2,381.7 800.4,393.7 801.6,400.3 802.7,383.6 803.9,386.2 805.1,388.4 806.3,394.0 807.5,397.2 808.7,396.7 809.8,375.8 811.0,379.1 812.2,388.7 813.4,380.7 814.6,395.7 815.8,385.6 816.9,384.9 818.1,392.4 819.3,391.8 820.5,393.7 821.7,387.9 822.9,381.1 824.0,382.2 825.2,384.8 826.4,383.7 827.6,395.0 828.8,379.6 830.0,388.1 831.1,395.1 832.3,391.5 833.5,391.7 834.7,388.1 835.9,388.3 837.1,398.8 838.2,382.5 839.4,379.6 840.6,391.3 841.8,380.9 843.0,380.4 844.2,381.4 845.3,380.5 846.5,393.6 847.7,386.3 848.9,391.3 850.1,377.9 851.3,392.4 852.5,394.3 853.6,383.2 854.8,384.5 856.0,387.7 857.2,387.2 858.4,384.0 859.6,379.8 860.7,391.1 861.9,392.0 863.1,391.6 864.3,389.1 865.5,389.2 866.7,394.5 867.8,388.5 869.0,394.6 870.2,390.9 871.4,389.9 872.6,388.7 873.8,380.0 874.9,378.5 876.1,380.8 877.3,379.9 878.5,387.7 879.7,381.6 880.9,387.5 882.0,387.1 883.2,387.7 884.4,395.2 885.6,392.4 886.8,389.3 888.0,386.7 889.1,389.3 890.3,393.4 891.5,394.7 892.7,389.9 893.9,395.0 895.1,395.1 896.2,389.5 897.4,388.1 898.6,393.6 899.8,397.6 901.0,387.6 902.2,384.4 903.3,390.1 904.5,392.1 905.7,399.6 906.9,386.2 908.1,392.7 909.3,385.9 910.4,390.9 911.6,389.6 912.8,390.6 914.0,395.6 915.2,376.9 916.4,394.2 917.5,389.4 918.7,392.5 919.9,389.1 921.1,382.9 922.3,396.8 923.5,390.0 924.6,385.9 925.8,387.2 927.0,386.8 928.2,392.9 929.4,397.9 930.6,396.3 931.8,390.8 932.9,384.9 934.1,386.4 935.3,380.2 936.5,386.6 937.7,387.2 938.9,388.4 940.0,396.5 941.2,387.4 942.4,393.7 943.6,389.4 944.8,377.8 946.0,392.8 947.1,388.4 948.3,386.7 949.5,387.5 950.7,388.6 951.9,389.8 953.1,380.2 954.2,397.7 955.4,393.8 956.6,381.3 957.8,385.1 959.0,392.4 960.2,393.5 961.3,388.4 962.5,375.0 963.7,384.8 964.9,393.0 966.1,388.3 967.3,390.3 968.4,381.1 969.6,385.0 970.8,381.8 972.0,385.3 973.2,377.8 974.4,384.7 975.5,387.4 976.7,393.5 977.9,390.9 979.1,387.0 980.3,388.9 981.5,376.3 982.6,387.2 983.8,391.5 985.0,384.3 986.2,390.0 987.4,386.7 988.6,389.0 989.7,391.1 990.9,381.9 992.1,386.2 993.3,383.1 994.5,390.3 995.7,396.5 996.8,395.9 998.0,391.9 999.2,389.6 1000.4,387.9 1001.6,386.6 1002.8,394.0 1004.0,388.9 1005.1,394.7 1006.3,390.8 1007.5,375.2 1008.7,380.5 1009.9,388.1 1011.1,378.7 1012.2,379.5 1013.4,382.0 1014.6,380.6 1015.8,388.7 1017.0,389.7 1018.2,392.3 1019.3,386.9 1020.5,394.5 1021.7,391.4 1022.9,386.7 1024.1,390.3 1025.3,385.7 1026.4,379.7 1027.6,391.1 1028.8,382.5 1030.0,391.4 1031.2,393.3 1032.4,387.2 1033.5,383.6 1034.7,391.7 1035.9,392.8 1037.1,391.5 1038.3,392.1 1039.5,388.4 1040.6,391.9 1041.8,389.9 1043.0,387.0 1044.2,389.4 1045.4,383.3 1046.6,391.5 1047.7,391.3 1048.9,377.7 1050.1,379.4 1051.3,386.4 1052.5,383.9 1053.7,386.4 1054.8,390.2 1056.0,385.1 1057.2,385.5 1058.4,383.0 1059.6,396.1 1060.8,385.5 1061.9,387.4 1063.1,391.9 1064.3,391.2 1065.5,391.5 1066.7,395.6 1067.9,391.6 1069.0,385.9 1070.2,395.6 1071.4,392.8 1072.6,400.8 1073.8,392.5 1075.0,386.8 1076.2,388.3 1077.3,388.9 1078.5,393.5 1079.7,386.9 1080.9,391.9 1082.1,384.3 1083.3,386.9 1084.4,389.1 1085.6,381.5 1086.8,388.6 1088.0,383.4 1089.2,387.1 1090.4,387.6 1091.5,383.1 1092.7,385.5 1093.9,388.2 1095.1,388.8 1096.3,387.3 1097.5,388.0 1098.6,390.6 1099.8,395.5 1101.0,402.0 1102.2,390.8 1103.4,388.8 1104.6,382.2 1105.7,384.5 1106.9,381.2 1108.1,379.0 1109.3,388.3 1110.5,392.1 1111.7,385.2 1112.8,390.9 1114.0,389.0 1115.2,381.0 1116.4,383.9 1117.6,383.4 1118.8,394.3 1119.9,388.3 1121.1,383.6 1122.3,393.8 1123.5,387.9 1124.7,387.7 1125.9,398.5 1127.0,382.4 1128.2,390.9 1129.4,388.4 1130.6,381.3 1131.8,395.8 1133.0,387.5 1134.1,390.2 1135.3,389.0 1136.5,391.5 1137.7,382.8 1138.9,392.7 1140.1,386.9 1141.2,385.5 1142.4,388.6 1143.6,389.9 1144.8,389.1 1146.0,383.1 1147.2,385.4 1148.4,389.2 1149.5,393.7 1150.7,387.9 1151.9,385.6 1153.1,387.2 1154.3,382.5 1155.5,395.2 1156.6,377.3 1157.8,388.3 1159.0,395.3 1160.2,397.2 1161.4,384.8 1162.6,385.0 1163.7,389.1 1164.9,388.6 1166.1,387.8 1167.3,389.5 1168.5,382.4 1169.7,384.5 1170.8,389.6 1172.0,395.6 1173.2,382.9 1174.4,390.5 1175.6,392.9 1176.8,382.3 1177.9,386.3 1179.1,399.1 1180.3,398.2 1181.5,392.3 1182.7,394.9 1183.9,388.2 1185.0,373.4 1186.2,371.7 1187.4,386.0 1188.6,383.7 1189.8,383.4 1191.0,389.3 1192.1,395.0 1193.3,384.1 1194.5,388.2 1195.7,385.7 1196.9,385.0 1198.1,390.7 1199.2,380.4 1200.4,386.6 1201.6,387.4 1202.8,389.8 1204.0,384.4 1205.2,383.1 1206.3,390.0 1207.5,386.0 1208.7,390.9 1209.9,394.9 1211.1,390.4 1212.3,385.1 1213.4,384.4 1214.6,383.0 1215.8,391.1 1217.0,390.2 1218.2,387.7 1219.4,385.2 1220.5,389.1 1221.7,394.1 1222.9,395.9 1224.1,382.7 1225.3,382.6 1226.5,389.9 1227.7,381.4 1228.8,387.3 1230.0,385.2 1231.2,382.0 1232.4,390.3 1233.6,393.6 1234.8,397.3 1235.9,387.6 1237.1,385.2 1238.3,383.2 1239.5,384.6 1240.7,386.6 1241.9,383.1 1243.0,392.3 1244.2,386.7 1245.4,385.5 1246.6,387.3 1247.8,379.4 1249.0,384.0 1250.1,380.6 1251.3,383.0 1252.5,387.2 1253.7,378.0 1254.9,381.4 1256.1,387.5 1257.2,389.5 1258.4,393.6 1259.6,389.9 1260.8,389.4 1262.0,387.6 1263.2,389.8 1264.3,385.7 1265.5,389.3 1266.7,396.5 1267.9,392.5 1269.1,393.9 1270.3,395.4 1271.4,389.8 1272.6,384.6 1273.8,394.6 1275.0,399.1 1276.2,388.4 1277.4,373.8 1278.5,389.0 1279.7,387.6 1280.9,389.5 1282.1,383.2 1283.3,380.6 1284.5,387.3 1285.6,383.2 1286.8,392.7 1288.0,388.8 1289.2,394.3 1290.4,388.6 1291.6,391.0 1292.7,388.2 1293.9,393.5 1295.1,387.7 1296.3,387.9 1297.5,391.5 1298.7,393.4 1299.9,395.0 1301.0,390.7 1302.2,386.2" fill="none" stroke="#0000ff" stroke-width="1.25" stroke-linejoin="round"/>
</g>
<rect x="101.6" y="348.4" width="1198.0" height="83.6" fill="none" stroke="#333" stroke-width="1"/>
<text transform="translate(112.70 447.50) scale(1.07 1)" font-family="'Liberation Sans', sans-serif" font-size="10.0" fill="#000" text-anchor="middle" stroke="#000" stroke-width="0.18">3500</text>
<text transform="translate(171.88 447.50) scale(1.07 1)" font-family="'Liberation Sans', sans-serif" font-size="10.0" fill="#000" text-anchor="middle" stroke="#000" stroke-width="0.18">3600</text>
<text transform="translate(231.06 447.50) scale(1.07 1)" font-family="'Liberation Sans', sans-serif" font-size="10.0" fill="#000" text-anchor="middle" stroke="#000" stroke-width="0.18">3700</text>
<text transform="translate(290.24 447.50) scale(1.07 1)" font-family="'Liberation Sans', sans-serif" font-size="10.0" fill="#000" text-anchor="middle" stroke="#000" stroke-width="0.18">3800</text>
<text transform="translate(349.42 447.50) scale(1.07 1)" font-family="'Liberation Sans', sans-serif" font-size="10.0" fill="#000" text-anchor="middle" stroke="#000" stroke-width="0.18">3900</text>
<text transform="translate(408.60 447.50) scale(1.07 1)" font-family="'Liberation Sans', sans-serif" font-size="10.0" fill="#000" text-anchor="middle" stroke="#000" stroke-width="0.18">4000</text>
<text transform="translate(467.78 447.50) scale(1.07 1)" font-family="'Liberation Sans', sans-serif" font-size="10.0" fill="#000" text-anchor="middle" stroke="#000" stroke-width="0.18">4100</text>
<text transform="translate(526.96 447.50) scale(1.07 1)" font-family="'Liberation Sans', sans-serif" font-size="10.0" fill="#000" text-anchor="middle" stroke="#000" stroke-width="0.18">4200</text>
<text transform="translate(586.14 447.50) scale(1.07 1)" font-family="'Liberation Sans', sans-serif" font-size="10.0" fill="#000" text-anchor="middle" stroke="#000" stroke-width="0.18">4300</text>
<text transform="translate(645.32 447.50) scale(1.07 1)" font-family="'Liberation Sans', sans-serif" font-size="10.0" fill="#000" text-anchor="middle" stroke="#000" stroke-width="0.18">4400</text>
<text transform="translate(704.50 447.50) scale(1.07 1)" font-family="'Liberation Sans', sans-serif" font-size="10.0" fill="#000" text-anchor="middle" stroke="#000" stroke-width="0.18">4500</text>
<text transform="translate(763.68 447.50) scale(1.07 1)" font-family="'Liberation Sans', sans-serif" font-size="10.0" fill="#000" text-anchor="middle" stroke="#000" stroke-width="0.18">4600</text>
<text transform="translate(822.86 447.50) scale(1.07 1)" font-family="'Liberation Sans', sans-serif" font-size="10.0" fill="#000" text-anchor="middle" stroke="#000" stroke-width="0.18">4700</text>
<text transform="translate(882.04 447.50) scale(1.07 1)" font-family="'Liberation Sans', sans-serif" font-size="10.0" fill="#000" text-anchor="middle" stroke="#000" stroke-width="0.18">4800</text>
<text transform="translate(941.22 447.50) scale(1.07 1)" font-family="'Liberation Sans', sans-serif" font-size="10.0" fill="#000" text-anchor="middle" stroke="#000" stroke-width="0.18">4900</text>
<text transform="translate(1000.40 447.50) scale(1.07 1)" font-family="'Liberation Sans', sans-serif" font-size="10.0" fill="#000" text-anchor="middle" stroke="#000" stroke-width="0.18">5000</text>
<text transform="translate(1059.58 447.50) scale(1.07 1)" font-family="'Liberation Sans', sans-serif" font-size="10.0" fill="#000" text-anchor="middle" stroke="#000" stroke-width="0.18">5100</text>
<text transform="translate(1118.76 447.50) scale(1.07 1)" font-family="'Liberation Sans', sans-serif" font-size="10.0" fill="#000" text-anchor="middle" stroke="#000" stroke-width="0.18">5200</text>
<text transform="translate(1177.94 447.50) scale(1.07 1)" font-family="'Liberation Sans', sans-serif" font-size="10.0" fill="#000" text-anchor="middle" stroke="#000" stroke-width="0.18">5300</text>
<text transform="translate(1237.12 447.50) scale(1.07 1)" font-family="'Liberation Sans', sans-serif" font-size="10.0" fill="#000" text-anchor="middle" stroke="#000" stroke-width="0.18">5400</text>
<text transform="translate(1296.30 447.50) scale(1.07 1)" font-family="'Liberation Sans', sans-serif" font-size="10.0" fill="#000" text-anchor="middle" stroke="#000" stroke-width="0.18">5500</text>
<text transform="translate(95.50 423.00) scale(1.07 1)" font-family="'Liberation Sans', sans-serif" font-size="10.0" fill="#000" text-anchor="end" stroke="#000" stroke-width="0.18">0</text>
<text transform="translate(95.50 391.95) scale(1.07 1)" font-family="'Liberation Sans', sans-serif" font-size="10.0" fill="#000" text-anchor="end" stroke="#000" stroke-width="0.18">5</text>
<text transform="translate(95.50 360.90) scale(1.07 1)" font-family="'Liberation Sans', sans-serif" font-size="10.0" fill="#000" text-anchor="end" stroke="#000" stroke-width="0.18">10</text>
<path d="M112.7 432.0v3.5M171.9 432.0v3.5M231.1 432.0v3.5M290.2 432.0v3.5M349.4 432.0v3.5M408.6 432.0v3.5M467.8 432.0v3.5M527.0 432.0v3.5M586.1 432.0v3.5M645.3 432.0v3.5M704.5 432.0v3.5M763.7 432.0v3.5M822.9 432.0v3.5M882.0 432.0v3.5M941.2 432.0v3.5M1000.4 432.0v3.5M1059.6 432.0v3.5M1118.8 432.0v3.5M1177.9 432.0v3.5M1237.1 432.0v3.5M1296.3 432.0v3.5M101.6 419.4h-3.5M101.6 388.3h-3.5M101.6 357.3h-3.5" stroke="#333" stroke-width="0.9"/>
<text x="112.5" y="346.2" font-family="'Liberation Sans', sans-serif" font-size="10.8" fill="#222">e<tspan dy="-3.8" font-size="7">−17</tspan><tspan dy="3.8">x2</tspan><tspan font-style="italic">Å</tspan></text>
<text transform="translate(156.6 337.4) rotate(90)" font-family="'Liberation Sans', sans-serif" font-size="10.6" fill="#8a2be2" text-anchor="end">SiIV</text>
<text transform="translate(156.6 348.2) rotate(90)" font-family="'Liberation Sans', sans-serif" font-size="10.6" fill="#8a2be2" text-anchor="end">{</text>
<text transform="translate(243.7 337.4) rotate(90)" font-family="'Liberation Sans', sans-serif" font-size="10.6" fill="#87ceeb" text-anchor="end">OII</text>
<text transform="translate(243.7 348.2) rotate(90)" font-family="'Liberation Sans', sans-serif" font-size="10.6" fill="#87ceeb" text-anchor="end">{</text>
<text transform="translate(257.1 337.4) rotate(90)" font-family="'Liberation Sans', sans-serif" font-size="10.6" fill="#ffa500" text-anchor="end">CIV</text>
<text transform="translate(257.1 348.2) rotate(90)" font-family="'Liberation Sans', sans-serif" font-size="10.6" fill="#ffa500" text-anchor="end">{</text>
<text transform="translate(264.1 337.4) rotate(90)" font-family="'Liberation Sans', sans-serif" font-size="10.6" fill="#87ceeb" text-anchor="end">OII</text>
<text transform="translate(264.1 348.2) rotate(90)" font-family="'Liberation Sans', sans-serif" font-size="10.6" fill="#87ceeb" text-anchor="end">{</text>
<text transform="translate(365.7 337.4) rotate(90)" font-family="'Liberation Sans', sans-serif" font-size="10.6" fill="#87ceeb" text-anchor="end">(K)CaII</text>
<text transform="translate(365.7 348.2) rotate(90)" font-family="'Liberation Sans', sans-serif" font-size="10.6" fill="#87ceeb" text-anchor="end">{</text>
<text transform="translate(434.1 337.4) rotate(90)" font-family="'Liberation Sans', sans-serif" font-size="10.6" fill="#ff0000" text-anchor="end">NV</text>
<text transform="translate(434.1 348.2) rotate(90)" font-family="'Liberation Sans', sans-serif" font-size="10.6" fill="#ff0000" text-anchor="end">{</text>
<text transform="translate(478.6 337.4) rotate(90)" font-family="'Liberation Sans', sans-serif" font-size="10.6" fill="#ff0000" text-anchor="end">SiII</text>
<text transform="translate(478.6 348.2) rotate(90)" font-family="'Liberation Sans', sans-serif" font-size="10.6" fill="#ff0000" text-anchor="end">{</text>
<text transform="translate(525.1 337.4) rotate(90)" font-family="'Liberation Sans', sans-serif" font-size="10.6" fill="#8a2be2" text-anchor="end">HeII</text>
<text transform="translate(525.1 348.2) rotate(90)" font-family="'Liberation Sans', sans-serif" font-size="10.6" fill="#8a2be2" text-anchor="end">{</text>
<text transform="translate(605.1 337.4) rotate(90)" font-family="'Liberation Sans', sans-serif" font-size="10.6" fill="#87ceeb" text-anchor="end">Hγ</text>
<text transform="translate(605.1 348.2) rotate(90)" font-family="'Liberation Sans', sans-serif" font-size="10.6" fill="#87ceeb" text-anchor="end">{</text>
<text transform="translate(628.1 337.4) rotate(90)" font-family="'Liberation Sans', sans-serif" font-size="10.6" fill="#87ceeb" text-anchor="end">Hγ</text>
<text transform="translate(628.1 348.2) rotate(90)" font-family="'Liberation Sans', sans-serif" font-size="10.6" fill="#87ceeb" text-anchor="end">{</text>
<text transform="translate(738.1 337.4) rotate(90)" font-family="'Liberation Sans', sans-serif" font-size="10.6" fill="#ff0000" text-anchor="end">SiIV</text>
<text transform="translate(738.1 348.2) rotate(90)" font-family="'Liberation Sans', sans-serif" font-size="10.6" fill="#ff0000" text-anchor="end">{</text>
<text transform="translate(771.4 297.8) rotate(90)" font-family="'Liberation Sans', sans-serif" font-size="10.6" fill="#ffa500" text-anchor="end">CIII</text>
<text transform="translate(771.4 305.5) rotate(90)" font-family="'Liberation Sans', sans-serif" font-size="10.6" fill="#ffa500" text-anchor="end">{</text>
<text transform="translate(772.1 337.4) rotate(90)" font-family="'Liberation Sans', sans-serif" font-size="10.6" fill="#008000" text-anchor="end">Hγ</text>
<text transform="translate(772.1 348.2) rotate(90)" font-family="'Liberation Sans', sans-serif" font-size="10.6" fill="#008000" text-anchor="end">{</text>
<text transform="translate(897.6 337.4) rotate(90)" font-family="'Liberation Sans', sans-serif" font-size="10.6" fill="#800080" text-anchor="end">CII</text>
<text transform="translate(897.6 348.2) rotate(90)" font-family="'Liberation Sans', sans-serif" font-size="10.6" fill="#800080" text-anchor="end">{</text>
<text transform="translate(914.1 337.4) rotate(90)" font-family="'Liberation Sans', sans-serif" font-size="10.6" fill="#87ceeb" text-anchor="end">Hβ</text>
<text transform="translate(914.1 348.2) rotate(90)" font-family="'Liberation Sans', sans-serif" font-size="10.6" fill="#87ceeb" text-anchor="end">{</text>
<text transform="translate(930.8 337.4) rotate(90)" font-family="'Liberation Sans', sans-serif" font-size="10.6" fill="#8a2be2" text-anchor="end">CIII</text>
<text transform="translate(930.8 348.2) rotate(90)" font-family="'Liberation Sans', sans-serif" font-size="10.6" fill="#8a2be2" text-anchor="end">{</text>
<text transform="translate(940.6 337.4) rotate(90)" font-family="'Liberation Sans', sans-serif" font-size="10.6" fill="#87ceeb" text-anchor="end">Hβ</text>
<text transform="translate(940.6 348.2) rotate(90)" font-family="'Liberation Sans', sans-serif" font-size="10.6" fill="#87ceeb" text-anchor="end">{</text>
<text transform="translate(972.9 337.4) rotate(90)" font-family="'Liberation Sans', sans-serif" font-size="10.6" fill="#87ceeb" text-anchor="end">OIII</text>
<text transform="translate(972.9 348.2) rotate(90)" font-family="'Liberation Sans', sans-serif" font-size="10.6" fill="#87ceeb" text-anchor="end">{</text>
<text transform="translate(999.5 297.8) rotate(90)" font-family="'Liberation Sans', sans-serif" font-size="10.6" fill="#87ceeb" text-anchor="end">OIII</text>
<text transform="translate(999.5 305.5) rotate(90)" font-family="'Liberation Sans', sans-serif" font-size="10.6" fill="#87ceeb" text-anchor="end">{</text>
<text transform="translate(999.5 337.4) rotate(90)" font-family="'Liberation Sans', sans-serif" font-size="10.6" fill="#87ceeb" text-anchor="end">OIII</text>
<text transform="translate(999.5 348.2) rotate(90)" font-family="'Liberation Sans', sans-serif" font-size="10.6" fill="#87ceeb" text-anchor="end">{</text>
<text transform="translate(1027.4 297.8) rotate(90)" font-family="'Liberation Sans', sans-serif" font-size="10.6" fill="#87ceeb" text-anchor="end">OIII</text>
<text transform="translate(1027.4 305.5) rotate(90)" font-family="'Liberation Sans', sans-serif" font-size="10.6" fill="#87ceeb" text-anchor="end">{</text>
<text transform="translate(1031.8 337.4) rotate(90)" font-family="'Liberation Sans', sans-serif" font-size="10.6" fill="#ff0000" text-anchor="end">CIV</text>
<text transform="translate(1031.8 348.2) rotate(90)" font-family="'Liberation Sans', sans-serif" font-size="10.6" fill="#ff0000" text-anchor="end">{</text>
<text transform="translate(1100.4 337.4) rotate(90)" font-family="'Liberation Sans', sans-serif" font-size="10.6" fill="#008000" text-anchor="end">Hβ</text>
<text transform="translate(1100.4 348.2) rotate(90)" font-family="'Liberation Sans', sans-serif" font-size="10.6" fill="#008000" text-anchor="end">{</text>
<text transform="translate(1166.9 297.8) rotate(90)" font-family="'Liberation Sans', sans-serif" font-size="10.6" fill="#ff00ff" text-anchor="end">OII</text>
<text transform="translate(1166.9 305.5) rotate(90)" font-family="'Liberation Sans', sans-serif" font-size="10.6" fill="#ff00ff" text-anchor="end">{</text>
<text transform="translate(1162.4 337.4) rotate(90)" font-family="'Liberation Sans', sans-serif" font-size="10.6" fill="#008000" text-anchor="end">OIII</text>
<text transform="translate(1162.4 348.2) rotate(90)" font-family="'Liberation Sans', sans-serif" font-size="10.6" fill="#008000" text-anchor="end">{</text>
<text transform="translate(1193.0 337.4) rotate(90)" font-family="'Liberation Sans', sans-serif" font-size="10.6" fill="#008000" text-anchor="end">OIII</text>
<text transform="translate(1193.0 348.2) rotate(90)" font-family="'Liberation Sans', sans-serif" font-size="10.6" fill="#008000" text-anchor="end">{</text>
<text transform="translate(1207.6 337.4) rotate(90)" font-family="'Liberation Sans', sans-serif" font-size="10.6" fill="#ff0000" text-anchor="end">HeII</text>
<text transform="translate(1207.6 348.2) rotate(90)" font-family="'Liberation Sans', sans-serif" font-size="10.6" fill="#ff0000" text-anchor="end">{</text>
<rect x="480.0" y="449.4" width="16.4" height="6.3" fill="#ff0000"/>
<text transform="translate(502.50 456.00) scale(1.0 1)" font-family="'Liberation Sans', sans-serif" font-size="9.0" fill="#222" stroke="#222" stroke-width="0.18">Lyα</text>
<rect x="533.7" y="449.4" width="16.4" height="6.3" fill="#008000"/>
<text transform="translate(556.20 456.00) scale(1.0 1)" font-family="'Liberation Sans', sans-serif" font-size="9.0" fill="#222" stroke="#222" stroke-width="0.18">OII</text>
<rect x="586.4" y="449.4" width="16.4" height="6.3" fill="#8a2be2"/>
<text transform="translate(608.90 456.00) scale(1.0 1)" font-family="'Liberation Sans', sans-serif" font-size="9.0" fill="#222" stroke="#222" stroke-width="0.18">CIV</text>
<rect x="640.0" y="449.4" width="16.4" height="6.3" fill="#800080"/>
<text transform="translate(662.50 456.00) scale(1.0 1)" font-family="'Liberation Sans', sans-serif" font-size="9.0" fill="#222" stroke="#222" stroke-width="0.18">CIII</text>
<rect x="692.6" y="449.4" width="16.4" height="6.3" fill="#ff00ff"/>
<text transform="translate(715.10 456.00) scale(1.0 1)" font-family="'Liberation Sans', sans-serif" font-size="9.0" fill="#222" stroke="#222" stroke-width="0.18">MgII</text>
<rect x="748.7" y="449.4" width="16.4" height="6.3" fill="#ffa500"/>
<text transform="translate(771.20 456.00) scale(1.0 1)" font-family="'Liberation Sans', sans-serif" font-size="9.0" fill="#222" stroke="#222" stroke-width="0.18">HeII</text>
<rect x="803.0" y="449.4" width="16.4" height="6.3" fill="#87ceeb"/>
<text transform="translate(825.50 456.00) scale(1.0 1)" font-family="'Liberation Sans', sans-serif" font-size="9.0" fill="#222" stroke="#222" stroke-width="0.18">(K)CaII</text>
<rect x="869.6" y="449.4" width="16.4" height="6.3" fill="#87ceeb"/>
<text transform="translate(892.10 456.00) scale(1.0 1)" font-family="'Liberation Sans', sans-serif" font-size="9.0" fill="#222" stroke="#222" stroke-width="0.18">(H)CaII</text>
<g><rect x="70.1" y="532.9" width="147.6" height="147.6" fill="#c7c7c7"/>
<path stroke="#070707" stroke-width="3.23" d="M141.2 591.7h8.7M135.7 594.4h19.6M133 597.1h25.1M130.2 599.9h27.8M127.5 602.6h33.3M127.5 605.3h33.3M127.5 608.1h33.3M127.5 610.8h33.3M130.2 613.5h30.6M130.2 616.3h27.8M133 619h22.4M135.7 621.7h16.9"/>
<path stroke="#171717" stroke-width="3.23" d="M138.4 591.7h3.2M149.4 591.7h3.2M133 594.4h3.2M130.2 597.1h3.2M157.6 599.9h3.2M127.5 613.5h3.2M130.2 619h3.2M154.8 619h3.2M152.1 621.7h3.2M141.2 624.5h6"/>
<path stroke="#272727" stroke-width="3.23" d="M135.7 591.7h3.2M154.8 594.4h3.2M127.5 599.9h3.2M160.3 605.3h3.2M160.3 608.1h3.2M160.3 610.8h3.2M127.5 616.3h3.2M157.6 616.3h3.2M133 621.7h3.2M138.4 624.5h3.2M146.6 624.5h3.2"/>
<path stroke="#373737" stroke-width="3.23" d="M133 591.7h3.2M152.1 591.7h3.2M130.2 594.4h3.2M157.6 597.1h3.2M124.8 602.6h3.2M160.3 602.6h3.2M124.8 605.3h3.2M124.8 608.1h3.2M124.8 610.8h3.2M160.3 613.5h3.2M157.6 619h3.2M154.8 621.7h3.2M135.7 624.5h3.2M149.4 624.5h3.2"/>
<path stroke="#474747" stroke-width="3.23" d="M135.7 588.9h14.2M127.5 597.1h3.2M124.8 599.9h3.2M160.3 599.9h3.2M124.8 613.5h3.2M127.5 619h3.2M130.2 621.7h3.2M152.1 624.5h3.2M143.9 627.2h3.2"/>
<path stroke="#575757" stroke-width="3.23" d="M133 588.9h3.2M149.4 588.9h3.2M130.2 591.7h3.2M154.8 591.7h3.2M127.5 594.4h3.2M157.6 594.4h3.2M160.3 597.1h3.2M163 605.3h3.2M163 608.1h3.2M160.3 616.3h3.2M133 624.5h3.2M154.8 624.5h3.2M141.2 627.2h3.2M146.6 627.2h6"/>
<path stroke="#676767" stroke-width="3.23" d="M141.2 586.2h8.7M152.1 588.9h6M160.3 594.4h3.2M124.8 597.1h3.2M163 602.6h3.2M122 605.3h3.2M122 608.1h3.2M122 610.8h3.2M163 610.8h3.2M163 613.5h3.2M124.8 616.3h3.2M163 616.3h3.2M124.8 619h3.2M160.3 619h3.2M127.5 621.7h3.2M157.6 621.7h3.2M130.2 624.5h3.2M135.7 627.2h6M141.2 629.9h3.2"/>
<path stroke="#777777" stroke-width="3.23" d="M138.4 586.2h3.2M149.4 586.2h3.2M127.5 591.7h3.2M157.6 591.7h6M124.8 594.4h3.2M163 597.1h3.2M163 599.9h3.2M122 602.6h3.2M165.8 605.3h3.2M165.8 608.1h3.2M122 613.5h3.2M165.8 613.5h3.2M122 616.3h3.2M124.8 621.7h3.2M157.6 624.5h3.2M133 627.2h3.2M152.1 627.2h3.2M143.9 629.9h6"/>
<path stroke="#878787" stroke-width="3.23" d="M133 583.5h3.2M143.9 583.5h3.2M130.2 586.2h8.7M152.1 586.2h6M127.5 588.9h6M157.6 588.9h3.2M124.8 591.7h3.2M163 594.4h3.2M122 597.1h3.2M122 599.9h3.2M119.3 602.6h3.2M119.3 605.3h3.2M119.3 608.1h3.2M119.3 610.8h3.2M165.8 610.8h3.2M119.3 613.5h3.2M163 619h3.2M160.3 621.7h3.2M127.5 624.5h3.2M130.2 627.2h3.2M154.8 627.2h6M135.7 629.9h6M149.4 629.9h6M141.2 632.7h6"/>
<path stroke="#979797" stroke-width="3.23" d="M116.6 550.7h3.2M143.9 580.7h3.2M152.1 580.7h3.2M135.7 583.5h8.7M146.6 583.5h6M127.5 586.2h3.2M157.6 586.2h3.2M163 588.9h3.2M122 591.7h3.2M163 591.7h3.2M122 594.4h3.2M165.8 597.1h3.2M119.3 599.9h3.2M165.8 599.9h6M165.8 602.6h3.2M116.6 605.3h3.2M168.5 605.3h3.2M113.8 608.1h6M168.5 608.1h3.2M168.5 610.8h3.2M116.6 613.5h3.2M168.5 613.5h3.2M113.8 616.3h3.2M119.3 616.3h3.2M165.8 616.3h3.2M119.3 619h6M165.8 619h3.2M122 621.7h3.2M124.8 624.5h3.2M160.3 624.5h6M124.8 627.2h6M127.5 629.9h3.2M133 629.9h3.2M154.8 629.9h6M130.2 632.7h3.2M135.7 632.7h3.2M152.1 632.7h3.2M157.6 635.4h3.2"/>
<path stroke="#a7a7a7" stroke-width="3.23" d="M86.5 537h3.2M193.1 537h3.2M190.4 539.7h3.2M100.2 545.2h3.2M127.5 547.9h3.2M190.4 547.9h3.2M215 547.9h3.2M152.1 550.7h3.2M165.8 553.4h3.2M146.6 556.1h3.2M100.2 558.9h3.2M179.4 561.6h3.2M157.6 564.3h3.2M122 567.1h3.2M83.8 569.8h3.2M146.6 569.8h3.2M179.4 569.8h3.2M127.5 575.3h3.2M135.7 578h6M127.5 580.7h3.2M133 580.7h3.2M124.8 583.5h8.7M152.1 583.5h6M124.8 586.2h3.2M119.3 588.9h8.7M160.3 588.9h3.2M195.8 588.9h3.2M206.8 588.9h3.2M165.8 591.7h6M75.6 594.4h3.2M116.6 594.4h6M165.8 594.4h3.2M113.8 597.1h3.2M119.3 597.1h3.2M168.5 597.1h3.2M116.6 599.9h3.2M116.6 602.6h3.2M168.5 602.6h8.7M108.4 605.3h8.7M108.4 608.1h3.2M116.6 610.8h3.2M171.2 610.8h3.2M179.4 610.8h3.2M171.2 613.5h3.2M168.5 616.3h6M116.6 619h3.2M168.5 619h3.2M102.9 621.7h3.2M119.3 621.7h3.2M163 621.7h8.7M209.5 621.7h3.2M116.6 624.5h8.7M165.8 624.5h3.2M102.9 627.2h3.2M116.6 627.2h3.2M160.3 627.2h3.2M165.8 627.2h6M184.9 627.2h3.2M206.8 627.2h3.2M70.1 629.9h3.2M124.8 629.9h3.2M130.2 629.9h3.2M160.3 629.9h6M206.8 629.9h3.2M119.3 632.7h3.2M133 632.7h3.2M138.4 632.7h3.2M146.6 632.7h6M163 632.7h3.2M201.3 632.7h3.2M133 635.4h8.7M143.9 635.4h3.2M75.6 638.1h3.2M119.3 638.1h3.2M160.3 638.1h3.2M72.8 640.9h3.2M149.4 640.9h3.2M187.6 646.3h3.2M119.3 649.1h3.2M154.8 657.3h3.2M163 660h3.2M168.5 662.7h3.2M204 662.7h3.2M111.1 665.5h3.2M165.8 673.7h3.2M193.1 673.7h3.2M105.6 676.4h3.2M124.8 679.1h6"/>
<path stroke="#b7b7b7" stroke-width="3.23" d="M149.4 534.3h3.2M157.6 534.3h6M168.5 534.3h3.2M176.7 534.3h3.2M182.2 534.3h3.2M193.1 534.3h3.2M212.2 534.3h3.2M94.7 537h3.2M100.2 537h3.2M108.4 537h3.2M116.6 537h6M157.6 537h6M198.6 537h3.2M209.5 537h3.2M86.5 539.7h3.2M105.6 539.7h6M146.6 539.7h3.2M157.6 539.7h3.2M165.8 539.7h3.2M174 539.7h3.2M184.9 539.7h3.2M81 542.5h3.2M113.8 542.5h3.2M130.2 542.5h3.2M171.2 542.5h3.2M176.7 542.5h3.2M195.8 542.5h3.2M212.2 542.5h3.2M72.8 545.2h3.2M89.2 545.2h3.2M141.2 545.2h3.2M149.4 545.2h3.2M157.6 545.2h3.2M163 545.2h3.2M171.2 545.2h3.2M187.6 545.2h3.2M198.6 545.2h3.2M212.2 545.2h3.2M75.6 547.9h3.2M89.2 547.9h3.2M94.7 547.9h8.7M111.1 547.9h11.4M149.4 547.9h3.2M154.8 547.9h3.2M160.3 547.9h3.2M168.5 547.9h3.2M212.2 547.9h3.2M86.5 550.7h3.2M119.3 550.7h6M133 550.7h3.2M171.2 550.7h3.2M176.7 550.7h3.2M190.4 550.7h3.2M195.8 550.7h6M206.8 550.7h3.2M70.1 553.4h6M78.3 553.4h3.2M94.7 553.4h3.2M105.6 553.4h3.2M116.6 553.4h3.2M122 553.4h3.2M127.5 553.4h3.2M138.4 553.4h3.2M154.8 553.4h3.2M174 553.4h3.2M184.9 553.4h3.2M195.8 553.4h6M206.8 553.4h6M72.8 556.1h3.2M81 556.1h3.2M89.2 556.1h6M100.2 556.1h3.2M105.6 556.1h3.2M119.3 556.1h3.2M133 556.1h3.2M141.2 556.1h3.2M149.4 556.1h3.2M160.3 556.1h3.2M168.5 556.1h3.2M184.9 556.1h3.2M198.6 556.1h3.2M215 556.1h3.2M92 558.9h3.2M127.5 558.9h8.7M138.4 558.9h3.2M163 558.9h3.2M171.2 558.9h3.2M92 561.6h3.2M105.6 561.6h11.4M130.2 561.6h3.2M138.4 561.6h3.2M149.4 561.6h3.2M157.6 561.6h3.2M168.5 561.6h3.2M190.4 561.6h6M212.2 561.6h3.2M83.8 564.3h3.2M92 564.3h6M105.6 564.3h6M113.8 564.3h3.2M119.3 564.3h3.2M130.2 564.3h8.7M179.4 564.3h3.2M198.6 564.3h3.2M206.8 564.3h3.2M100.2 567.1h3.2M111.1 567.1h6M130.2 567.1h6M179.4 567.1h3.2M204 567.1h3.2M111.1 569.8h3.2M119.3 569.8h6M135.7 569.8h3.2M165.8 569.8h3.2M190.4 569.8h3.2M209.5 569.8h3.2M70.1 572.5h3.2M75.6 572.5h3.2M111.1 572.5h3.2M135.7 572.5h8.7M146.6 572.5h3.2M157.6 572.5h3.2M168.5 572.5h3.2M195.8 572.5h3.2M201.3 572.5h3.2M70.1 575.3h3.2M81 575.3h3.2M116.6 575.3h3.2M122 575.3h3.2M138.4 575.3h6M149.4 575.3h3.2M187.6 575.3h3.2M70.1 578h3.2M100.2 578h3.2M111.1 578h3.2M116.6 578h3.2M127.5 578h3.2M133 578h3.2M141.2 578h25.1M187.6 578h3.2M193.1 578h3.2M204 578h3.2M209.5 578h3.2M215 578h3.2M86.5 580.7h3.2M92 580.7h3.2M97.4 580.7h3.2M108.4 580.7h3.2M113.8 580.7h3.2M119.3 580.7h3.2M124.8 580.7h3.2M130.2 580.7h3.2M135.7 580.7h8.7M146.6 580.7h6M160.3 580.7h3.2M165.8 580.7h3.2M176.7 580.7h3.2M204 580.7h3.2M209.5 580.7h3.2M86.5 583.5h8.7M97.4 583.5h3.2M102.9 583.5h3.2M113.8 583.5h3.2M157.6 583.5h3.2M163 583.5h6M171.2 583.5h3.2M179.4 583.5h3.2M209.5 583.5h3.2M83.8 586.2h3.2M100.2 586.2h3.2M119.3 586.2h6M163 586.2h6M171.2 586.2h3.2M179.4 586.2h3.2M81 588.9h3.2M97.4 588.9h8.7M111.1 588.9h3.2M165.8 588.9h3.2M184.9 588.9h8.7M198.6 588.9h3.2M70.1 591.7h3.2M86.5 591.7h3.2M100.2 591.7h3.2M116.6 591.7h6M171.2 591.7h6M190.4 591.7h3.2M94.7 594.4h6M113.8 594.4h3.2M168.5 594.4h11.4M201.3 594.4h3.2M86.5 597.1h3.2M116.6 597.1h3.2M171.2 597.1h8.7M209.5 597.1h3.2M215 597.1h3.2M81 599.9h3.2M108.4 599.9h3.2M113.8 599.9h3.2M174 599.9h3.2M182.2 599.9h3.2M206.8 599.9h3.2M215 599.9h3.2M70.1 602.6h3.2M86.5 602.6h3.2M100.2 602.6h3.2M105.6 602.6h3.2M113.8 602.6h3.2M176.7 602.6h3.2M182.2 602.6h3.2M193.1 602.6h3.2M215 602.6h3.2M100.2 605.3h3.2M171.2 605.3h6M184.9 605.3h6M195.8 605.3h3.2M212.2 605.3h6M75.6 608.1h6M86.5 608.1h3.2M171.2 608.1h3.2M176.7 608.1h6M193.1 608.1h3.2M212.2 608.1h3.2M75.6 610.8h3.2M102.9 610.8h3.2M108.4 610.8h3.2M113.8 610.8h3.2M174 610.8h3.2M184.9 610.8h3.2M193.1 610.8h6M201.3 610.8h3.2M75.6 613.5h3.2M108.4 613.5h6M174 613.5h3.2M182.2 613.5h3.2M215 613.5h3.2M78.3 616.3h3.2M94.7 616.3h3.2M111.1 616.3h3.2M116.6 616.3h3.2M174 616.3h8.7M190.4 616.3h6M198.6 616.3h3.2M92 619h3.2M100.2 619h3.2M111.1 619h6M171.2 619h3.2M195.8 619h3.2M201.3 619h3.2M92 621.7h3.2M108.4 621.7h3.2M116.6 621.7h3.2M198.6 621.7h3.2M78.3 624.5h3.2M97.4 624.5h3.2M102.9 624.5h3.2M108.4 624.5h8.7M168.5 624.5h6M204 624.5h3.2M209.5 624.5h3.2M215 624.5h3.2M75.6 627.2h3.2M100.2 627.2h3.2M108.4 627.2h8.7M122 627.2h3.2M163 627.2h3.2M201.3 627.2h3.2M215 627.2h3.2M86.5 629.9h3.2M113.8 629.9h6M122 629.9h3.2M182.2 629.9h3.2M72.8 632.7h3.2M113.8 632.7h6M122 632.7h8.7M154.8 632.7h3.2M174 632.7h3.2M179.4 632.7h3.2M206.8 632.7h3.2M215 632.7h3.2M70.1 635.4h6M83.8 635.4h3.2M92 635.4h6M119.3 635.4h3.2M124.8 635.4h3.2M130.2 635.4h3.2M141.2 635.4h3.2M146.6 635.4h8.7M182.2 635.4h3.2M198.6 635.4h3.2M209.5 635.4h3.2M81 638.1h3.2M86.5 638.1h3.2M102.9 638.1h3.2M116.6 638.1h3.2M122 638.1h3.2M135.7 638.1h16.9M165.8 638.1h3.2M174 638.1h6M209.5 638.1h3.2M105.6 640.9h6M124.8 640.9h6M135.7 640.9h8.7M160.3 640.9h3.2M195.8 640.9h3.2M209.5 640.9h6M81 643.6h3.2M89.2 643.6h3.2M94.7 643.6h3.2M113.8 643.6h3.2M133 643.6h6M141.2 643.6h6M157.6 643.6h3.2M165.8 643.6h3.2M209.5 643.6h3.2M215 643.6h3.2M83.8 646.3h3.2M102.9 646.3h3.2M127.5 646.3h3.2M141.2 646.3h3.2M146.6 646.3h3.2M157.6 646.3h3.2M176.7 646.3h3.2M182.2 646.3h3.2M195.8 646.3h6M204 646.3h3.2M212.2 646.3h6M78.3 649.1h3.2M83.8 649.1h14.2M124.8 649.1h3.2M135.7 649.1h3.2M204 649.1h6M70.1 651.8h6M81 651.8h6M108.4 651.8h6M116.6 651.8h3.2M122 651.8h3.2M135.7 651.8h6M152.1 651.8h3.2M165.8 651.8h6M174 651.8h3.2M204 651.8h3.2M78.3 654.5h3.2M86.5 654.5h6M97.4 654.5h3.2M113.8 654.5h3.2M146.6 654.5h6M154.8 654.5h3.2M168.5 654.5h3.2M215 654.5h3.2M89.2 657.3h3.2M105.6 657.3h8.7M116.6 657.3h3.2M133 657.3h3.2M157.6 657.3h3.2M182.2 657.3h3.2M193.1 657.3h3.2M198.6 657.3h3.2M206.8 657.3h3.2M215 657.3h3.2M78.3 660h11.4M127.5 660h3.2M143.9 660h6M152.1 660h3.2M195.8 660h3.2M201.3 660h3.2M81 662.7h3.2M130.2 662.7h3.2M135.7 662.7h6M174 662.7h3.2M179.4 662.7h3.2M190.4 662.7h3.2M198.6 662.7h3.2M206.8 662.7h6M215 662.7h3.2M81 665.5h3.2M97.4 665.5h3.2M119.3 665.5h3.2M130.2 665.5h3.2M138.4 665.5h3.2M204 665.5h6M78.3 668.2h3.2M100.2 668.2h3.2M113.8 668.2h3.2M135.7 668.2h6M168.5 668.2h6M201.3 668.2h3.2M206.8 668.2h6M83.8 670.9h3.2M94.7 670.9h3.2M100.2 670.9h6M135.7 670.9h3.2M149.4 670.9h3.2M184.9 670.9h3.2M198.6 670.9h3.2M209.5 670.9h3.2M78.3 673.7h3.2M86.5 673.7h6M119.3 673.7h3.2M138.4 673.7h6M179.4 673.7h3.2M206.8 673.7h3.2M100.2 676.4h6M108.4 676.4h3.2M119.3 676.4h3.2M135.7 676.4h3.2M182.2 676.4h3.2M204 676.4h3.2M70.1 679.1h3.2M83.8 679.1h6M100.2 679.1h3.2M105.6 679.1h3.2M130.2 679.1h6M138.4 679.1h6M149.4 679.1h3.2M163 679.1h3.2M201.3 679.1h6M209.5 679.1h3.2"/>
<path stroke="#d7d7d7" stroke-width="3.23" d="M75.6 534.3h3.2M86.5 534.3h8.7M105.6 534.3h6M113.8 534.3h3.2M122 534.3h8.7M135.7 534.3h3.2M143.9 534.3h3.2M163 534.3h6M179.4 534.3h3.2M187.6 534.3h3.2M70.1 537h3.2M75.6 537h6M92 537h3.2M97.4 537h3.2M102.9 537h3.2M124.8 537h8.7M141.2 537h6M149.4 537h3.2M154.8 537h3.2M163 537h3.2M171.2 537h3.2M182.2 537h6M195.8 537h3.2M212.2 537h3.2M75.6 539.7h6M83.8 539.7h3.2M89.2 539.7h3.2M94.7 539.7h3.2M102.9 539.7h3.2M130.2 539.7h3.2M138.4 539.7h3.2M143.9 539.7h3.2M168.5 539.7h3.2M176.7 539.7h3.2M187.6 539.7h3.2M195.8 539.7h6M75.6 542.5h3.2M89.2 542.5h3.2M100.2 542.5h3.2M122 542.5h6M135.7 542.5h3.2M143.9 542.5h3.2M168.5 542.5h3.2M179.4 542.5h16.9M198.6 542.5h3.2M209.5 542.5h3.2M215 542.5h3.2M70.1 545.2h3.2M83.8 545.2h3.2M92 545.2h3.2M97.4 545.2h3.2M105.6 545.2h3.2M111.1 545.2h3.2M116.6 545.2h6M130.2 545.2h3.2M146.6 545.2h3.2M168.5 545.2h3.2M174 545.2h8.7M201.3 545.2h3.2M206.8 545.2h3.2M215 545.2h3.2M70.1 547.9h6M86.5 547.9h3.2M92 547.9h3.2M102.9 547.9h3.2M133 547.9h3.2M163 547.9h6M171.2 547.9h3.2M176.7 547.9h3.2M187.6 547.9h3.2M204 547.9h8.7M78.3 550.7h3.2M89.2 550.7h3.2M97.4 550.7h6M113.8 550.7h3.2M124.8 550.7h3.2M130.2 550.7h3.2M138.4 550.7h3.2M149.4 550.7h3.2M154.8 550.7h3.2M163 550.7h3.2M168.5 550.7h3.2M174 550.7h3.2M182.2 550.7h3.2M193.1 550.7h3.2M209.5 550.7h3.2M86.5 553.4h8.7M108.4 553.4h3.2M133 553.4h6M168.5 553.4h3.2M176.7 553.4h3.2M187.6 553.4h3.2M75.6 556.1h3.2M102.9 556.1h3.2M108.4 556.1h3.2M124.8 556.1h3.2M130.2 556.1h3.2M138.4 556.1h3.2M154.8 556.1h3.2M174 556.1h6M193.1 556.1h3.2M201.3 556.1h6M72.8 558.9h3.2M86.5 558.9h6M102.9 558.9h3.2M122 558.9h3.2M135.7 558.9h3.2M141.2 558.9h3.2M149.4 558.9h3.2M168.5 558.9h3.2M176.7 558.9h3.2M182.2 558.9h3.2M187.6 558.9h8.7M198.6 558.9h3.2M204 558.9h6M72.8 561.6h3.2M81 561.6h3.2M97.4 561.6h3.2M102.9 561.6h3.2M141.2 561.6h3.2M146.6 561.6h3.2M165.8 561.6h3.2M171.2 561.6h6M187.6 561.6h3.2M195.8 561.6h3.2M201.3 561.6h3.2M206.8 561.6h6M70.1 564.3h3.2M75.6 564.3h3.2M81 564.3h3.2M100.2 564.3h3.2M111.1 564.3h3.2M116.6 564.3h3.2M124.8 564.3h6M138.4 564.3h3.2M154.8 564.3h3.2M160.3 564.3h3.2M174 564.3h3.2M195.8 564.3h3.2M209.5 564.3h8.7M70.1 567.1h3.2M78.3 567.1h6M86.5 567.1h3.2M116.6 567.1h6M127.5 567.1h3.2M143.9 567.1h8.7M157.6 567.1h3.2M163 567.1h6M171.2 567.1h8.7M195.8 567.1h6M75.6 569.8h3.2M113.8 569.8h3.2M127.5 569.8h6M138.4 569.8h3.2M149.4 569.8h8.7M171.2 569.8h6M187.6 569.8h3.2M204 569.8h3.2M212.2 569.8h3.2M72.8 572.5h3.2M86.5 572.5h8.7M97.4 572.5h3.2M102.9 572.5h3.2M113.8 572.5h6M122 572.5h3.2M127.5 572.5h8.7M149.4 572.5h3.2M154.8 572.5h3.2M165.8 572.5h3.2M176.7 572.5h3.2M187.6 572.5h3.2M193.1 572.5h3.2M212.2 572.5h3.2M75.6 575.3h3.2M83.8 575.3h3.2M89.2 575.3h3.2M94.7 575.3h6M105.6 575.3h8.7M130.2 575.3h6M174 575.3h3.2M190.4 575.3h6M212.2 575.3h3.2M86.5 578h6M97.4 578h3.2M102.9 578h3.2M108.4 578h3.2M176.7 578h3.2M182.2 578h6M190.4 578h3.2M195.8 578h6M212.2 578h3.2M83.8 580.7h3.2M89.2 580.7h3.2M102.9 580.7h6M116.6 580.7h3.2M174 580.7h3.2M184.9 580.7h6M193.1 580.7h11.4M70.1 583.5h3.2M94.7 583.5h3.2M105.6 583.5h3.2M111.1 583.5h3.2M176.7 583.5h3.2M184.9 583.5h6M201.3 583.5h3.2M206.8 583.5h3.2M212.2 583.5h3.2M70.1 586.2h3.2M75.6 586.2h3.2M89.2 586.2h6M108.4 586.2h3.2M113.8 586.2h6M160.3 586.2h3.2M176.7 586.2h3.2M195.8 586.2h3.2M201.3 586.2h6M215 586.2h3.2M94.7 588.9h3.2M116.6 588.9h3.2M176.7 588.9h3.2M182.2 588.9h3.2M193.1 588.9h3.2M201.3 588.9h3.2M215 588.9h3.2M75.6 591.7h6M89.2 591.7h3.2M94.7 591.7h6M105.6 591.7h3.2M111.1 591.7h3.2M179.4 591.7h3.2M184.9 591.7h3.2M195.8 591.7h6M215 591.7h3.2M70.1 594.4h6M83.8 594.4h3.2M89.2 594.4h3.2M100.2 594.4h6M108.4 594.4h3.2M184.9 594.4h6M204 594.4h6M215 594.4h3.2M75.6 597.1h3.2M94.7 597.1h3.2M100.2 597.1h6M108.4 597.1h3.2M190.4 597.1h6M198.6 597.1h3.2M206.8 597.1h3.2M72.8 599.9h3.2M78.3 599.9h3.2M83.8 599.9h3.2M92 599.9h3.2M97.4 599.9h3.2M102.9 599.9h3.2M187.6 599.9h3.2M193.1 599.9h3.2M212.2 599.9h3.2M75.6 602.6h6M83.8 602.6h3.2M92 602.6h3.2M111.1 602.6h3.2M195.8 602.6h3.2M201.3 602.6h8.7M75.6 605.3h16.9M176.7 605.3h6M83.8 608.1h3.2M89.2 608.1h3.2M100.2 608.1h3.2M182.2 608.1h3.2M187.6 608.1h6M83.8 610.8h3.2M94.7 610.8h3.2M100.2 610.8h3.2M105.6 610.8h3.2M198.6 610.8h3.2M212.2 610.8h6M78.3 613.5h3.2M94.7 613.5h6M179.4 613.5h3.2M187.6 613.5h8.7M206.8 613.5h8.7M83.8 616.3h3.2M100.2 616.3h11.4M187.6 616.3h3.2M212.2 616.3h6M81 619h3.2M102.9 619h6M187.6 619h3.2M204 619h8.7M215 619h3.2M75.6 621.7h3.2M83.8 621.7h8.7M105.6 621.7h3.2M111.1 621.7h3.2M171.2 621.7h3.2M176.7 621.7h6M193.1 621.7h3.2M215 621.7h3.2M81 624.5h3.2M89.2 624.5h3.2M100.2 624.5h3.2M105.6 624.5h3.2M176.7 624.5h3.2M182.2 624.5h3.2M190.4 624.5h3.2M195.8 624.5h3.2M72.8 627.2h3.2M78.3 627.2h3.2M83.8 627.2h3.2M97.4 627.2h3.2M171.2 627.2h3.2M182.2 627.2h3.2M187.6 627.2h3.2M193.1 627.2h3.2M204 627.2h3.2M212.2 627.2h3.2M75.6 629.9h6M94.7 629.9h3.2M108.4 629.9h3.2M174 629.9h3.2M187.6 629.9h6M212.2 629.9h3.2M70.1 632.7h3.2M75.6 632.7h3.2M81 632.7h3.2M89.2 632.7h11.4M102.9 632.7h3.2M176.7 632.7h3.2M184.9 632.7h8.7M204 632.7h3.2M78.3 635.4h3.2M86.5 635.4h3.2M100.2 635.4h3.2M168.5 635.4h3.2M176.7 635.4h3.2M184.9 635.4h3.2M193.1 635.4h3.2M212.2 635.4h3.2M78.3 638.1h3.2M83.8 638.1h3.2M89.2 638.1h3.2M97.4 638.1h6M113.8 638.1h3.2M154.8 638.1h6M163 638.1h3.2M171.2 638.1h3.2M184.9 638.1h3.2M201.3 638.1h3.2M206.8 638.1h3.2M75.6 640.9h6M83.8 640.9h3.2M89.2 640.9h8.7M100.2 640.9h3.2M111.1 640.9h6M122 640.9h3.2M163 640.9h3.2M174 640.9h6M70.1 643.6h3.2M75.6 643.6h6M152.1 643.6h3.2M160.3 643.6h6M168.5 643.6h3.2M179.4 643.6h8.7M204 643.6h6M212.2 643.6h3.2M75.6 646.3h3.2M81 646.3h3.2M94.7 646.3h3.2M111.1 646.3h6M122 646.3h3.2M135.7 646.3h3.2M193.1 646.3h3.2M201.3 646.3h3.2M75.6 649.1h3.2M100.2 649.1h3.2M105.6 649.1h3.2M111.1 649.1h8.7M122 649.1h3.2M127.5 649.1h3.2M138.4 649.1h6M149.4 649.1h8.7M163 649.1h8.7M179.4 649.1h3.2M184.9 649.1h3.2M190.4 649.1h3.2M198.6 649.1h3.2M209.5 649.1h3.2M86.5 651.8h3.2M92 651.8h8.7M105.6 651.8h3.2M119.3 651.8h3.2M146.6 651.8h6M154.8 651.8h8.7M179.4 651.8h3.2M187.6 651.8h6M198.6 651.8h3.2M206.8 651.8h3.2M70.1 654.5h6M81 654.5h3.2M105.6 654.5h3.2M124.8 654.5h3.2M130.2 654.5h6M138.4 654.5h3.2M143.9 654.5h3.2M163 654.5h6M171.2 654.5h3.2M184.9 654.5h3.2M190.4 654.5h6M206.8 654.5h6M70.1 657.3h3.2M81 657.3h8.7M94.7 657.3h3.2M119.3 657.3h3.2M127.5 657.3h3.2M152.1 657.3h3.2M165.8 657.3h3.2M171.2 657.3h11.4M195.8 657.3h3.2M201.3 657.3h6M209.5 657.3h3.2M70.1 660h6M89.2 660h3.2M97.4 660h6M119.3 660h3.2M124.8 660h3.2M130.2 660h3.2M135.7 660h3.2M160.3 660h3.2M165.8 660h3.2M193.1 660h3.2M204 660h3.2M212.2 660h3.2M108.4 662.7h3.2M133 662.7h3.2M141.2 662.7h8.7M154.8 662.7h3.2M165.8 662.7h3.2M171.2 662.7h3.2M176.7 662.7h3.2M182.2 662.7h3.2M201.3 662.7h3.2M70.1 665.5h6M89.2 665.5h6M102.9 665.5h3.2M108.4 665.5h3.2M124.8 665.5h3.2M135.7 665.5h3.2M143.9 665.5h3.2M149.4 665.5h3.2M154.8 665.5h8.7M171.2 665.5h6M179.4 665.5h3.2M190.4 665.5h3.2M195.8 665.5h6M212.2 665.5h6M72.8 668.2h3.2M89.2 668.2h3.2M94.7 668.2h6M105.6 668.2h6M122 668.2h3.2M133 668.2h3.2M143.9 668.2h6M160.3 668.2h3.2M179.4 668.2h3.2M187.6 668.2h3.2M193.1 668.2h3.2M204 668.2h3.2M215 668.2h3.2M92 670.9h3.2M97.4 670.9h3.2M108.4 670.9h8.7M119.3 670.9h3.2M133 670.9h3.2M138.4 670.9h3.2M143.9 670.9h6M154.8 670.9h3.2M165.8 670.9h6M174 670.9h8.7M190.4 670.9h3.2M201.3 670.9h3.2M70.1 673.7h6M81 673.7h3.2M108.4 673.7h3.2M116.6 673.7h3.2M122 673.7h6M133 673.7h6M149.4 673.7h3.2M163 673.7h3.2M168.5 673.7h6M190.4 673.7h3.2M201.3 673.7h3.2M215 673.7h3.2M81 676.4h6M92 676.4h3.2M113.8 676.4h3.2M124.8 676.4h3.2M130.2 676.4h3.2M146.6 676.4h3.2M165.8 676.4h8.7M176.7 676.4h3.2M187.6 676.4h3.2M193.1 676.4h6M206.8 676.4h3.2M212.2 676.4h3.2M72.8 679.1h6M89.2 679.1h3.2M111.1 679.1h3.2M135.7 679.1h3.2M152.1 679.1h6M160.3 679.1h3.2M174 679.1h3.2M182.2 679.1h8.7M206.8 679.1h3.2"/>
<path stroke="#e7e7e7" stroke-width="3.23" d="M94.7 534.3h3.2M130.2 534.3h3.2M138.4 534.3h6M154.8 534.3h3.2M184.9 534.3h3.2M146.6 537h3.2M204 537h3.2M122 539.7h3.2M163 539.7h3.2M209.5 539.7h3.2M119.3 542.5h3.2M204 542.5h3.2M86.5 545.2h3.2M81 550.7h3.2M152.1 553.4h3.2M215 553.4h3.2M75.6 558.9h3.2M165.8 558.9h3.2M184.9 558.9h3.2M78.3 561.6h3.2M127.5 561.6h3.2M152.1 561.6h6M201.3 564.3h3.2M89.2 567.1h3.2M78.3 569.8h3.2M100.2 569.8h3.2M143.9 569.8h3.2M168.5 569.8h3.2M215 569.8h3.2M81 572.5h3.2M100.2 572.5h3.2M72.8 578h3.2M75.6 588.9h3.2M204 591.7h3.2M209.5 594.4h3.2M184.9 597.1h3.2M198.6 599.9h3.2M204 599.9h3.2M81 616.3h3.2M86.5 619h3.2M198.6 619h3.2M78.3 621.7h3.2M190.4 621.7h3.2M89.2 627.2h3.2M198.6 627.2h3.2M89.2 629.9h3.2M102.9 629.9h3.2M209.5 629.9h3.2M182.2 638.1h3.2M70.1 640.9h3.2M86.5 640.9h3.2M179.4 640.9h3.2M190.4 640.9h3.2M215 640.9h3.2M116.6 643.6h3.2M193.1 643.6h3.2M130.2 646.3h3.2M138.4 646.3h3.2M165.8 646.3h3.2M70.1 649.1h3.2M195.8 649.1h3.2M143.9 651.8h3.2M163 651.8h3.2M187.6 654.5h3.2M97.4 657.3h3.2M138.4 657.3h3.2M168.5 657.3h3.2M116.6 660h3.2M176.7 660h3.2M100.2 662.7h6M184.9 662.7h3.2M193.1 662.7h3.2M182.2 665.5h3.2M70.1 668.2h3.2M86.5 670.9h3.2M206.8 670.9h3.2M146.6 673.7h3.2M143.9 676.4h3.2"/>
<path stroke="#f7f7f7" stroke-width="3.23" d="M154.8 539.7h3.2M138.4 545.2h3.2M70.1 646.3h3.2"/>
</g>
<rect x="94.7" y="557.5" width="98.4" height="98.4" fill="none" stroke="#ff0000" stroke-width="1.3"/>
<g fill="none" stroke="#606060" stroke-width="1.2"><circle cx="137.0" cy="555.4" r="12.2"/><circle cx="161.3" cy="560.5" r="12.2"/><circle cx="121.9" cy="574.6" r="12.2"/><circle cx="146.2" cy="577.3" r="12.2"/><circle cx="169.3" cy="582.1" r="12.2"/><circle cx="106.8" cy="592.4" r="12.2"/><circle cx="193.8" cy="587.3" r="12.2"/><circle cx="178.7" cy="605.1" r="12.2"/><circle cx="90.6" cy="609.7" r="12.2"/><circle cx="114.9" cy="615.6" r="12.2"/><circle cx="201.8" cy="608.5" r="12.2"/><circle cx="99.9" cy="633.6" r="12.2"/><circle cx="186.4" cy="628.2" r="12.2"/><circle cx="123.1" cy="637.4" r="12.2"/><circle cx="146.7" cy="642.0" r="12.2"/><circle cx="171.3" cy="645.6" r="12.2"/><circle cx="131.6" cy="660.5" r="12.2"/></g>
<circle cx="129.6" cy="597.0" r="12.2" fill="none" stroke="#ffa500" stroke-width="1.3"/>
<circle cx="153.9" cy="601.6" r="12.2" fill="none" stroke="#0000ff" stroke-width="1.3"/>
<circle cx="139.3" cy="619.5" r="12.2" fill="none" stroke="#00ff00" stroke-width="1.3"/>
<circle cx="162.4" cy="622.9" r="12.2" fill="none" stroke="#ff0000" stroke-width="1.3"/>
<path d="M141.4 606.7h5M143.9 604.2v5" stroke="#ff0000" stroke-width="1.2"/>
<text transform="translate(143.90 546.60) scale(1.0 1)" font-family="'Liberation Sans', sans-serif" font-size="10.6" fill="#ff0000" text-anchor="middle" stroke="#ff0000" stroke-width="0.18">N</text>
<text transform="translate(80.40 611.00) scale(1.0 1)" font-family="'Liberation Sans', sans-serif" font-size="10.6" fill="#ff0000" text-anchor="middle" stroke="#ff0000" stroke-width="0.18">E</text>
<rect x="70.1" y="532.9" width="147.6" height="147.6" fill="none" stroke="#222" stroke-width="1.1"/>
<text transform="translate(75.10 696.20) scale(1.0 1)" font-family="'Liberation Sans', sans-serif" font-size="11.3" fill="#000" text-anchor="middle" stroke="#000" stroke-width="0.18">−4</text>
<text transform="translate(62.50 676.30) scale(1.0 1)" font-family="'Liberation Sans', sans-serif" font-size="11.3" fill="#000" text-anchor="end" stroke="#000" stroke-width="0.18">−4</text>
<text transform="translate(107.90 696.20) scale(1.0 1)" font-family="'Liberation Sans', sans-serif" font-size="11.3" fill="#000" text-anchor="middle" stroke="#000" stroke-width="0.18">−2</text>
<text transform="translate(62.50 643.50) scale(1.0 1)" font-family="'Liberation Sans', sans-serif" font-size="11.3" fill="#000" text-anchor="end" stroke="#000" stroke-width="0.18">−2</text>
<text transform="translate(143.90 696.20) scale(1.0 1)" font-family="'Liberation Sans', sans-serif" font-size="11.3" fill="#000" text-anchor="middle" stroke="#000" stroke-width="0.18">0</text>
<text transform="translate(62.50 610.70) scale(1.0 1)" font-family="'Liberation Sans', sans-serif" font-size="11.3" fill="#000" text-anchor="end" stroke="#000" stroke-width="0.18">0</text>
<text transform="translate(176.70 696.20) scale(1.0 1)" font-family="'Liberation Sans', sans-serif" font-size="11.3" fill="#000" text-anchor="middle" stroke="#000" stroke-width="0.18">2</text>
<text transform="translate(62.50 577.90) scale(1.0 1)" font-family="'Liberation Sans', sans-serif" font-size="11.3" fill="#000" text-anchor="end" stroke="#000" stroke-width="0.18">2</text>
<text transform="translate(209.50 696.20) scale(1.0 1)" font-family="'Liberation Sans', sans-serif" font-size="11.3" fill="#000" text-anchor="middle" stroke="#000" stroke-width="0.18">4</text>
<text transform="translate(62.50 545.10) scale(1.0 1)" font-family="'Liberation Sans', sans-serif" font-size="11.3" fill="#000" text-anchor="end" stroke="#000" stroke-width="0.18">4</text>
<path d="M78.3 680.5v3.5M70.1 672.3h-3.5M111.1 680.5v3.5M70.1 639.5h-3.5M143.9 680.5v3.5M70.1 606.7h-3.5M176.7 680.5v3.5M70.1 573.9h-3.5M209.5 680.5v3.5M70.1 541.1h-3.5" stroke="#222" stroke-width="0.9"/>
<text x="143.9" y="525.7" font-family="'Liberation Sans', sans-serif" font-size="12.2" text-anchor="middle" textLength="92" lengthAdjust="spacingAndGlyphs" fill="#111" stroke="#111" stroke-width="0.2">Fiber Positions</text>
<text x="143.9" y="706.2" font-family="'Liberation Sans', sans-serif" font-size="10.6" text-anchor="middle" textLength="39.6" lengthAdjust="spacingAndGlyphs" fill="#111" stroke="#111" stroke-width="0.2">arcsecs</text>
<g><rect x="255.2" y="532.9" width="147.6" height="147.6" fill="#450b5e"/>
<path stroke="#472172" stroke-width="3.57" d="M310.5 534.4h3.6M362.8 534.4h6.6M310.5 537.5h3.6M362.8 537.5h6.6M310.5 540.6h3.6M362.8 540.6h6.6M310.5 543.7h3.6M362.8 543.7h3.6M310.5 546.7h3.6M362.8 546.7h3.6M270.6 549.8h3.6M313.6 549.8h6.6M359.8 549.8h6.6M270.6 552.9h3.6M313.6 552.9h9.7M356.7 552.9h6.6M270.6 556h6.6M316.7 556h6.6M353.6 556h9.7M273.6 559h3.6M347.4 559h15.9M273.6 562.1h6.6M353.6 562.1h12.8M273.6 565.2h6.6M356.7 565.2h3.6M362.8 565.2h6.6M273.6 568.3h6.6M359.8 568.3h9.7M270.6 571.3h6.6M359.8 571.3h6.6M270.6 574.4h6.6M322.8 574.4h3.6M359.8 574.4h6.6M255.2 577.5h15.9M316.7 577.5h9.7M359.8 577.5h6.6M255.2 580.6h6.6M307.5 580.6h12.8M356.7 580.6h12.8M301.3 583.6h3.6M325.9 583.6h3.6M353.6 583.6h6.6M362.8 583.6h6.6M396.6 583.6h6.6M301.3 586.7h3.6M325.9 586.7h3.6M350.5 586.7h9.7M362.8 586.7h6.6M396.6 586.7h6.6M301.3 589.8h3.6M329 589.8h25.1M362.8 589.8h6.6M396.6 589.8h6.6M301.3 592.9h3.6M362.8 592.9h6.6M396.6 592.9h6.6M301.3 595.9h3.6M362.8 595.9h6.6M304.4 599h3.6M362.8 599h6.6M304.4 602.1h6.6M362.8 602.1h6.6M310.5 605.2h12.8M356.7 605.2h9.7M319.8 608.2h6.6M353.6 608.2h9.7M255.2 611.3h6.6M322.8 611.3h6.6M353.6 611.3h6.6M255.2 614.4h12.8M319.8 614.4h6.6M350.5 614.4h6.6M264.4 617.5h12.8M289 617.5h18.9M316.7 617.5h9.7M347.4 617.5h9.7M307.5 620.5h15.9M344.4 620.5h9.7M313.6 623.6h3.6M332.1 623.6h15.9M329 626.7h9.7M325.9 629.8h6.6M325.9 632.8h3.6M322.8 635.9h6.6M316.7 639h9.7M304.4 642.1h15.9M295.2 645.1h15.9M289 648.2h12.8M279.8 651.3h12.8M276.7 654.4h9.7M273.6 657.4h6.6M270.6 660.5h6.6M255.2 663.6h18.9M255.2 666.7h15.9"/>
<path stroke="#44367f" stroke-width="3.57" d="M270.6 534.4h3.6M307.5 534.4h3.6M369 534.4h3.6M270.6 537.5h3.6M307.5 537.5h3.6M369 537.5h3.6M270.6 540.6h3.6M307.5 540.6h3.6M369 540.6h3.6M270.6 543.7h3.6M307.5 543.7h3.6M365.9 543.7h6.6M270.6 546.7h3.6M307.5 546.7h3.6M365.9 546.7h3.6M310.5 549.8h3.6M365.9 549.8h3.6M273.6 552.9h3.6M310.5 552.9h3.6M362.8 552.9h6.6M276.7 556h3.6M313.6 556h3.6M362.8 556h3.6M276.7 559h3.6M316.7 559h31.2M362.8 559h6.6M347.4 562.1h6.6M365.9 562.1h6.6M353.6 565.2h3.6M369 565.2h3.6M356.7 568.3h3.6M369 568.3h3.6M276.7 571.3h3.6M322.8 571.3h3.6M356.7 571.3h3.6M365.9 571.3h6.6M276.7 574.4h3.6M316.7 574.4h6.6M356.7 574.4h3.6M365.9 574.4h6.6M270.6 577.5h6.6M310.5 577.5h6.6M325.9 577.5h3.6M356.7 577.5h3.6M365.9 577.5h6.6M261.3 580.6h9.7M301.3 580.6h6.6M325.9 580.6h3.6M353.6 580.6h3.6M369 580.6h3.6M396.6 580.6h6.6M255.2 583.6h9.7M298.2 583.6h3.6M350.5 583.6h3.6M369 583.6h3.6M390.5 583.6h6.6M255.2 586.7h6.6M298.2 586.7h3.6M329 586.7h3.6M344.4 586.7h6.6M369 586.7h3.6M390.5 586.7h6.6M255.2 589.8h6.6M298.2 589.8h3.6M369 589.8h3.6M393.6 589.8h3.6M298.2 592.9h3.6M369 592.9h3.6M393.6 592.9h3.6M298.2 595.9h3.6M369 595.9h3.6M396.6 595.9h6.6M298.2 599h6.6M369 599h3.6M301.3 602.1h3.6M369 602.1h3.6M255.2 605.2h6.6M304.4 605.2h6.6M365.9 605.2h6.6M255.2 608.2h9.7M310.5 608.2h9.7M362.8 608.2h6.6M261.3 611.3h6.6M319.8 611.3h3.6M359.8 611.3h6.6M267.5 614.4h6.6M304.4 614.4h3.6M316.7 614.4h3.6M356.7 614.4h6.6M276.7 617.5h12.8M307.5 617.5h9.7M356.7 617.5h6.6M353.6 620.5h6.6M347.4 623.6h9.7M338.2 626.7h12.8M332.1 629.8h9.7M329 632.8h6.6M329 635.9h3.6M325.9 639h3.6M319.8 642.1h6.6M310.5 645.1h12.8M301.3 648.2h12.8M292.1 651.3h12.8M341.3 651.3h3.6M285.9 654.4h9.7M341.3 654.4h6.6M279.8 657.4h6.6M341.3 657.4h9.7M276.7 660.5h6.6M273.6 663.6h6.6M270.6 666.7h6.6M255.2 669.7h18.9"/>
<path stroke="#3e4988" stroke-width="3.57" d="M273.6 534.4h3.6M301.3 534.4h6.6M372 534.4h3.6M273.6 537.5h3.6M301.3 537.5h6.6M372 537.5h3.6M273.6 540.6h3.6M304.4 540.6h3.6M372 540.6h3.6M273.6 543.7h3.6M304.4 543.7h3.6M273.6 546.7h3.6M369 546.7h3.6M273.6 549.8h3.6M307.5 549.8h3.6M369 549.8h3.6M276.7 552.9h3.6M307.5 552.9h3.6M369 552.9h3.6M279.8 556h3.6M310.5 556h3.6M365.9 556h3.6M279.8 559h3.6M310.5 559h6.6M369 559h3.6M279.8 562.1h3.6M313.6 562.1h34.3M279.8 565.2h3.6M350.5 565.2h3.6M372 565.2h3.6M279.8 568.3h3.6M319.8 568.3h6.6M353.6 568.3h3.6M372 568.3h3.6M279.8 571.3h3.6M313.6 571.3h9.7M325.9 571.3h3.6M353.6 571.3h3.6M372 571.3h3.6M279.8 574.4h6.6M310.5 574.4h6.6M325.9 574.4h3.6M372 574.4h6.6M276.7 577.5h6.6M304.4 577.5h6.6M353.6 577.5h3.6M372 577.5h3.6M270.6 580.6h6.6M298.2 580.6h3.6M329 580.6h3.6M350.5 580.6h3.6M372 580.6h3.6M387.4 580.6h9.7M264.4 583.6h3.6M329 583.6h3.6M344.4 583.6h6.6M372 583.6h3.6M387.4 583.6h3.6M261.3 586.7h6.6M295.2 586.7h3.6M332.1 586.7h12.8M372 586.7h3.6M387.4 586.7h3.6M261.3 589.8h3.6M295.2 589.8h3.6M372 589.8h3.6M387.4 589.8h6.6M255.2 592.9h6.6M292.1 592.9h6.6M372 592.9h3.6M390.5 592.9h3.6M255.2 595.9h6.6M295.2 595.9h3.6M372 595.9h3.6M390.5 595.9h6.6M255.2 599h6.6M295.2 599h3.6M372 599h3.6M396.6 599h6.6M255.2 602.1h6.6M298.2 602.1h3.6M372 602.1h3.6M261.3 605.2h3.6M298.2 605.2h6.6M372 605.2h3.6M264.4 608.2h3.6M301.3 608.2h9.7M369 608.2h3.6M267.5 611.3h3.6M316.7 611.3h3.6M365.9 611.3h3.6M273.6 614.4h31.2M307.5 614.4h9.7M362.8 614.4h6.6M362.8 617.5h6.6M359.8 620.5h6.6M356.7 623.6h6.6M350.5 626.7h9.7M341.3 629.8h9.7M335.1 632.8h12.8M332.1 635.9h9.7M329 639h3.6M325.9 642.1h6.6M322.8 645.1h6.6M341.3 645.1h6.6M313.6 648.2h9.7M338.2 648.2h12.8M304.4 651.3h15.9M338.2 651.3h3.6M344.4 651.3h9.7M295.2 654.4h12.8M338.2 654.4h3.6M347.4 654.4h6.6M285.9 657.4h9.7M335.1 657.4h6.6M350.5 657.4h3.6M396.6 657.4h6.6M282.9 660.5h6.6M338.2 660.5h15.9M393.6 660.5h9.7M279.8 663.6h6.6M341.3 663.6h3.6M393.6 663.6h9.7M276.7 666.7h6.6M393.6 666.7h9.7M273.6 669.7h6.6M261.3 672.8h15.9"/>
<path stroke="#37598b" stroke-width="3.57" d="M298.2 534.4h3.6M375.1 534.4h3.6M298.2 537.5h3.6M375.1 537.5h3.6M298.2 540.6h6.6M375.1 540.6h3.6M301.3 543.7h3.6M372 543.7h3.6M301.3 546.7h6.6M372 546.7h3.6M276.7 549.8h3.6M301.3 549.8h6.6M372 549.8h3.6M279.8 552.9h3.6M304.4 552.9h3.6M372 552.9h3.6M282.9 556h3.6M304.4 556h6.6M369 556h3.6M282.9 559h3.6M307.5 559h3.6M372 559h3.6M282.9 562.1h3.6M307.5 562.1h6.6M372 562.1h3.6M282.9 565.2h3.6M313.6 565.2h22M344.4 565.2h6.6M375.1 565.2h3.6M282.9 568.3h3.6M307.5 568.3h12.8M325.9 568.3h6.6M347.4 568.3h6.6M375.1 568.3h3.6M282.9 571.3h3.6M307.5 571.3h6.6M350.5 571.3h3.6M375.1 571.3h3.6M285.9 574.4h3.6M304.4 574.4h6.6M353.6 574.4h3.6M378.2 574.4h12.8M282.9 577.5h12.8M298.2 577.5h6.6M329 577.5h3.6M350.5 577.5h3.6M375.1 577.5h3.6M381.3 577.5h22M276.7 580.6h22M347.4 580.6h3.6M375.1 580.6h3.6M381.3 580.6h6.6M267.5 583.6h31.2M332.1 583.6h12.8M375.1 583.6h3.6M381.3 583.6h6.6M267.5 586.7h6.6M289 586.7h6.6M375.1 586.7h3.6M381.3 586.7h6.6M264.4 589.8h3.6M289 589.8h6.6M375.1 589.8h3.6M381.3 589.8h6.6M261.3 592.9h6.6M289 592.9h3.6M375.1 592.9h3.6M384.3 592.9h6.6M261.3 595.9h6.6M292.1 595.9h3.6M375.1 595.9h3.6M384.3 595.9h6.6M261.3 599h6.6M292.1 599h3.6M375.1 599h3.6M390.5 599h6.6M261.3 602.1h6.6M292.1 602.1h6.6M375.1 602.1h3.6M396.6 602.1h6.6M264.4 605.2h6.6M292.1 605.2h6.6M375.1 605.2h3.6M267.5 608.2h6.6M292.1 608.2h9.7M372 608.2h6.6M270.6 611.3h6.6M295.2 611.3h22M369 611.3h6.6M369 614.4h6.6M369 617.5h3.6M365.9 620.5h6.6M362.8 623.6h6.6M359.8 626.7h9.7M350.5 629.8h12.8M347.4 632.8h12.8M341.3 635.9h15.9M332.1 639h22M332.1 642.1h25.1M329 645.1h12.8M347.4 645.1h9.7M322.8 648.2h15.9M350.5 648.2h6.6M319.8 651.3h18.9M353.6 651.3h6.6M307.5 654.4h31.2M353.6 654.4h6.6M393.6 654.4h9.7M295.2 657.4h40.5M353.6 657.4h6.6M390.5 657.4h6.6M289 660.5h15.9M335.1 660.5h3.6M353.6 660.5h3.6M390.5 660.5h3.6M285.9 663.6h9.7M335.1 663.6h6.6M344.4 663.6h12.8M390.5 663.6h3.6M282.9 666.7h6.6M341.3 666.7h12.8M387.4 666.7h6.6M279.8 669.7h6.6M390.5 669.7h12.8M255.2 672.8h6.6M276.7 672.8h9.7M396.6 672.8h6.6M264.4 675.9h15.9M264.4 679h15.9"/>
<path stroke="#30698d" stroke-width="3.57" d="M276.7 534.4h6.6M292.1 534.4h6.6M378.2 534.4h3.6M276.7 537.5h6.6M292.1 537.5h6.6M378.2 537.5h3.6M276.7 540.6h6.6M295.2 540.6h3.6M276.7 543.7h6.6M295.2 543.7h6.6M375.1 543.7h3.6M276.7 546.7h6.6M298.2 546.7h3.6M375.1 546.7h3.6M279.8 549.8h6.6M298.2 549.8h3.6M375.1 549.8h3.6M282.9 552.9h6.6M298.2 552.9h6.6M285.9 556h6.6M298.2 556h6.6M372 556h3.6M285.9 559h3.6M301.3 559h6.6M375.1 559h3.6M285.9 562.1h3.6M301.3 562.1h6.6M375.1 562.1h3.6M304.4 565.2h9.7M335.1 565.2h9.7M378.2 565.2h6.6M285.9 568.3h6.6M301.3 568.3h6.6M332.1 568.3h6.6M344.4 568.3h3.6M378.2 568.3h15.9M285.9 571.3h9.7M298.2 571.3h9.7M329 571.3h3.6M347.4 571.3h3.6M378.2 571.3h25.1M289 574.4h15.9M329 574.4h3.6M350.5 574.4h3.6M390.5 574.4h12.8M295.2 577.5h3.6M347.4 577.5h3.6M378.2 577.5h3.6M332.1 580.6h15.9M378.2 580.6h3.6M378.2 583.6h3.6M273.6 586.7h15.9M378.2 586.7h3.6M267.5 589.8h9.7M282.9 589.8h6.6M378.2 589.8h3.6M267.5 592.9h3.6M285.9 592.9h3.6M378.2 592.9h6.6M267.5 595.9h3.6M285.9 595.9h6.6M378.2 595.9h6.6M267.5 599h3.6M289 599h3.6M378.2 599h12.8M267.5 602.1h3.6M289 602.1h3.6M378.2 602.1h18.9M270.6 605.2h3.6M289 605.2h3.6M378.2 605.2h25.1M273.6 608.2h3.6M282.9 608.2h9.7M378.2 608.2h9.7M393.6 608.2h9.7M276.7 611.3h18.9M375.1 611.3h9.7M375.1 614.4h6.6M372 617.5h6.6M372 620.5h6.6M369 623.6h9.7M369 626.7h6.6M362.8 629.8h12.8M359.8 632.8h12.8M356.7 635.9h12.8M353.6 639h12.8M356.7 642.1h9.7M356.7 645.1h9.7M356.7 648.2h9.7M359.8 651.3h6.6M393.6 651.3h9.7M359.8 654.4h3.6M390.5 654.4h3.6M359.8 657.4h3.6M387.4 657.4h3.6M304.4 660.5h31.2M356.7 660.5h6.6M387.4 660.5h3.6M295.2 663.6h40.5M356.7 663.6h3.6M384.3 663.6h6.6M289 666.7h52.8M353.6 666.7h6.6M384.3 666.7h3.6M285.9 669.7h71.2M384.3 669.7h6.6M285.9 672.8h9.7M338.2 672.8h15.9M387.4 672.8h9.7M255.2 675.9h9.7M279.8 675.9h12.8M393.6 675.9h9.7M255.2 679h9.7M279.8 679h12.8M393.6 679h9.7"/>
<path stroke="#29798d" stroke-width="3.57" d="M282.9 534.4h9.7M282.9 537.5h9.7M282.9 540.6h12.8M378.2 540.6h3.6M282.9 543.7h12.8M378.2 543.7h3.6M282.9 546.7h15.9M285.9 549.8h12.8M289 552.9h9.7M375.1 552.9h3.6M292.1 556h6.6M375.1 556h3.6M289 559h12.8M378.2 559h6.6M289 562.1h12.8M378.2 562.1h25.1M285.9 565.2h9.7M298.2 565.2h6.6M384.3 565.2h18.9M292.1 568.3h9.7M338.2 568.3h6.6M393.6 568.3h9.7M295.2 571.3h3.6M332.1 571.3h9.7M344.4 571.3h3.6M347.4 574.4h3.6M332.1 577.5h15.9M276.7 589.8h6.6M270.6 592.9h6.6M279.8 592.9h6.6M270.6 595.9h6.6M279.8 595.9h6.6M270.6 599h6.6M279.8 599h9.7M270.6 602.1h6.6M279.8 602.1h9.7M273.6 605.2h15.9M276.7 608.2h6.6M387.4 608.2h6.6M384.3 611.3h18.9M381.3 614.4h22M378.2 617.5h25.1M378.2 620.5h18.9M378.2 623.6h15.9M375.1 626.7h15.9M375.1 629.8h12.8M372 632.8h12.8M369 635.9h12.8M365.9 639h12.8M365.9 642.1h12.8M396.6 642.1h6.6M365.9 645.1h12.8M396.6 645.1h6.6M365.9 648.2h12.8M393.6 648.2h9.7M365.9 651.3h9.7M390.5 651.3h3.6M362.8 654.4h9.7M384.3 654.4h6.6M362.8 657.4h6.6M384.3 657.4h3.6M362.8 660.5h6.6M381.3 660.5h6.6M359.8 663.6h6.6M381.3 663.6h3.6M359.8 666.7h6.6M381.3 666.7h3.6M356.7 669.7h6.6M381.3 669.7h3.6M295.2 672.8h43.5M353.6 672.8h9.7M381.3 672.8h6.6M292.1 675.9h68.1M381.3 675.9h12.8M292.1 679h68.1M381.3 679h12.8"/>
<path stroke="#23898c" stroke-width="3.57" d="M378.2 546.7h3.6M378.2 549.8h3.6M378.2 552.9h3.6M378.2 556h9.7M384.3 559h18.9M295.2 565.2h3.6M341.3 571.3h3.6M332.1 574.4h9.7M344.4 574.4h3.6M276.7 592.9h3.6M276.7 595.9h3.6M276.7 599h3.6M276.7 602.1h3.6M396.6 620.5h6.6M393.6 623.6h9.7M390.5 626.7h12.8M387.4 629.8h15.9M384.3 632.8h18.9M381.3 635.9h22M378.2 639h25.1M378.2 642.1h18.9M378.2 645.1h18.9M378.2 648.2h9.7M390.5 648.2h3.6M375.1 651.3h15.9M372 654.4h12.8M369 657.4h9.7M381.3 657.4h3.6M369 660.5h12.8M365.9 663.6h15.9M365.9 666.7h3.6M372 666.7h9.7M362.8 669.7h6.6M372 669.7h9.7M362.8 672.8h6.6M372 672.8h9.7M359.8 675.9h9.7M372 675.9h9.7M359.8 679h9.7M372 679h9.7"/>
<path stroke="#219889" stroke-width="3.57" d="M381.3 534.4h3.6M381.3 537.5h3.6M381.3 540.6h3.6M381.3 543.7h3.6M381.3 549.8h3.6M381.3 552.9h6.6M396.6 552.9h6.6M387.4 556h15.9M341.3 574.4h3.6M387.4 648.2h3.6M378.2 657.4h3.6M369 666.7h3.6M369 669.7h3.6M369 672.8h3.6M369 675.9h3.6M369 679h3.6"/>
<path stroke="#21a684" stroke-width="3.57" d="M381.3 546.7h3.6M384.3 549.8h3.6M396.6 549.8h6.6M387.4 552.9h9.7"/>
<path stroke="#35b478" stroke-width="3.57" d="M396.6 543.7h6.6M384.3 546.7h3.6M396.6 546.7h6.6M390.5 549.8h6.6"/>
<path stroke="#4ec26a" stroke-width="3.57" d="M384.3 534.4h3.6M384.3 537.5h3.6M384.3 540.6h3.6M396.6 540.6h6.6M384.3 543.7h3.6M393.6 543.7h3.6M393.6 546.7h3.6M387.4 549.8h3.6"/>
<path stroke="#6fcd56" stroke-width="3.57" d="M396.6 534.4h6.6M396.6 537.5h6.6M393.6 540.6h3.6M390.5 543.7h3.6M387.4 546.7h6.6"/>
<path stroke="#97d73e" stroke-width="3.57" d="M393.6 534.4h3.6M393.6 537.5h3.6M390.5 540.6h3.6M387.4 543.7h3.6"/>
<path stroke="#c1df25" stroke-width="3.57" d="M390.5 534.4h3.6M390.5 537.5h3.6M387.4 540.6h3.6"/>
<path stroke="#e9e425" stroke-width="3.57" d="M387.4 534.4h3.6M387.4 537.5h3.6"/>
</g>
<rect x="279.8" y="557.5" width="98.4" height="98.4" fill="none" stroke="#ff0000" stroke-width="1.3"/>
<path d="M291.3 606.7H320.8M337.2 606.7H366.7M329.0 569.0V598.5M329.0 614.9V644.4" stroke="#ff0000" stroke-width="1.3"/>
<text transform="translate(329.00 546.60) scale(1.0 1)" font-family="'Liberation Sans', sans-serif" font-size="10.6" fill="#ff0000" text-anchor="middle" stroke="#ff0000" stroke-width="0.18">N</text>
<text transform="translate(265.50 611.00) scale(1.0 1)" font-family="'Liberation Sans', sans-serif" font-size="10.6" fill="#ff0000" text-anchor="middle" stroke="#ff0000" stroke-width="0.18">E</text>
<rect x="255.2" y="532.9" width="147.6" height="147.6" fill="none" stroke="#222" stroke-width="1.1"/>
<text transform="translate(260.20 696.20) scale(1.0 1)" font-family="'Liberation Sans', sans-serif" font-size="11.3" fill="#000" text-anchor="middle" stroke="#000" stroke-width="0.18">−4</text>
<text transform="translate(247.60 676.30) scale(1.0 1)" font-family="'Liberation Sans', sans-serif" font-size="11.3" fill="#000" text-anchor="end" stroke="#000" stroke-width="0.18">−4</text>
<text transform="translate(293.00 696.20) scale(1.0 1)" font-family="'Liberation Sans', sans-serif" font-size="11.3" fill="#000" text-anchor="middle" stroke="#000" stroke-width="0.18">−2</text>
<text transform="translate(247.60 643.50) scale(1.0 1)" font-family="'Liberation Sans', sans-serif" font-size="11.3" fill="#000" text-anchor="end" stroke="#000" stroke-width="0.18">−2</text>
<text transform="translate(329.00 696.20) scale(1.0 1)" font-family="'Liberation Sans', sans-serif" font-size="11.3" fill="#000" text-anchor="middle" stroke="#000" stroke-width="0.18">0</text>
<text transform="translate(247.60 610.70) scale(1.0 1)" font-family="'Liberation Sans', sans-serif" font-size="11.3" fill="#000" text-anchor="end" stroke="#000" stroke-width="0.18">0</text>
<text transform="translate(361.80 696.20) scale(1.0 1)" font-family="'Liberation Sans', sans-serif" font-size="11.3" fill="#000" text-anchor="middle" stroke="#000" stroke-width="0.18">2</text>
<text transform="translate(247.60 577.90) scale(1.0 1)" font-family="'Liberation Sans', sans-serif" font-size="11.3" fill="#000" text-anchor="end" stroke="#000" stroke-width="0.18">2</text>
<text transform="translate(394.60 696.20) scale(1.0 1)" font-family="'Liberation Sans', sans-serif" font-size="11.3" fill="#000" text-anchor="middle" stroke="#000" stroke-width="0.18">4</text>
<text transform="translate(247.60 545.10) scale(1.0 1)" font-family="'Liberation Sans', sans-serif" font-size="11.3" fill="#000" text-anchor="end" stroke="#000" stroke-width="0.18">4</text>
<path d="M263.4 680.5v3.5M255.2 672.3h-3.5M296.2 680.5v3.5M255.2 639.5h-3.5M329.0 680.5v3.5M255.2 606.7h-3.5M361.8 680.5v3.5M255.2 573.9h-3.5M394.6 680.5v3.5M255.2 541.1h-3.5" stroke="#222" stroke-width="0.9"/>
<text x="329.0" y="525.7" font-family="'Liberation Sans', sans-serif" font-size="12.2" text-anchor="middle" textLength="82.4" lengthAdjust="spacingAndGlyphs" fill="#111" stroke="#111" stroke-width="0.2">Lineflux Map</text>
<text x="329.0" y="706.2" font-family="'Liberation Sans', sans-serif" font-size="10.6" text-anchor="middle" textLength="101.5" lengthAdjust="spacingAndGlyphs" fill="#111" stroke="#111" stroke-width="0.2">s/b: -2.02 +/- 0.081</text>
<g><rect x="440.9" y="532.9" width="147.6" height="147.6" fill="#c7c7c7"/>
<path stroke="#070707" stroke-width="3.23" d="M512 591.7h8.7M506.5 594.4h19.6M503.8 597.1h25.1M501 599.9h27.8M498.3 602.6h33.3M498.3 605.3h33.3M498.3 608.1h33.3M498.3 610.8h33.3M501 613.5h30.6M501 616.3h27.8M503.8 619h22.4M506.5 621.7h16.9"/>
<path stroke="#171717" stroke-width="3.23" d="M509.2 591.7h3.2M520.2 591.7h3.2M503.8 594.4h3.2M501 597.1h3.2M528.4 599.9h3.2M498.3 613.5h3.2M501 619h3.2M525.6 619h3.2M522.9 621.7h3.2M512 624.5h6"/>
<path stroke="#272727" stroke-width="3.23" d="M506.5 591.7h3.2M525.6 594.4h3.2M498.3 599.9h3.2M531.1 605.3h3.2M531.1 608.1h3.2M531.1 610.8h3.2M498.3 616.3h3.2M528.4 616.3h3.2M503.8 621.7h3.2M509.2 624.5h3.2M517.4 624.5h3.2"/>
<path stroke="#373737" stroke-width="3.23" d="M503.8 591.7h3.2M522.9 591.7h3.2M501 594.4h3.2M528.4 597.1h3.2M495.6 602.6h3.2M531.1 602.6h3.2M495.6 605.3h3.2M495.6 608.1h3.2M495.6 610.8h3.2M531.1 613.5h3.2M528.4 619h3.2M525.6 621.7h3.2M506.5 624.5h3.2M520.2 624.5h3.2"/>
<path stroke="#474747" stroke-width="3.23" d="M506.5 588.9h14.2M498.3 597.1h3.2M495.6 599.9h3.2M531.1 599.9h3.2M495.6 613.5h3.2M498.3 619h3.2M501 621.7h3.2M522.9 624.5h3.2M514.7 627.2h3.2"/>
<path stroke="#575757" stroke-width="3.23" d="M503.8 588.9h3.2M520.2 588.9h3.2M501 591.7h3.2M525.6 591.7h3.2M498.3 594.4h3.2M528.4 594.4h3.2M531.1 597.1h3.2M533.8 605.3h3.2M533.8 608.1h3.2M531.1 616.3h3.2M503.8 624.5h3.2M525.6 624.5h3.2M512 627.2h3.2M517.4 627.2h6"/>
<path stroke="#676767" stroke-width="3.23" d="M512 586.2h8.7M522.9 588.9h6M531.1 594.4h3.2M495.6 597.1h3.2M533.8 602.6h3.2M492.8 605.3h3.2M492.8 608.1h3.2M492.8 610.8h3.2M533.8 610.8h3.2M533.8 613.5h3.2M495.6 616.3h3.2M533.8 616.3h3.2M495.6 619h3.2M531.1 619h3.2M498.3 621.7h3.2M528.4 621.7h3.2M501 624.5h3.2M506.5 627.2h6M512 629.9h3.2"/>
<path stroke="#777777" stroke-width="3.23" d="M509.2 586.2h3.2M520.2 586.2h3.2M498.3 591.7h3.2M528.4 591.7h6M495.6 594.4h3.2M533.8 597.1h3.2M533.8 599.9h3.2M492.8 602.6h3.2M536.6 605.3h3.2M536.6 608.1h3.2M492.8 613.5h3.2M536.6 613.5h3.2M492.8 616.3h3.2M495.6 621.7h3.2M528.4 624.5h3.2M503.8 627.2h3.2M522.9 627.2h3.2M514.7 629.9h6"/>
<path stroke="#878787" stroke-width="3.23" d="M503.8 583.5h3.2M514.7 583.5h3.2M501 586.2h8.7M522.9 586.2h6M498.3 588.9h6M528.4 588.9h3.2M495.6 591.7h3.2M533.8 594.4h3.2M492.8 597.1h3.2M492.8 599.9h3.2M490.1 602.6h3.2M490.1 605.3h3.2M490.1 608.1h3.2M490.1 610.8h3.2M536.6 610.8h3.2M490.1 613.5h3.2M533.8 619h3.2M531.1 621.7h3.2M498.3 624.5h3.2M501 627.2h3.2M525.6 627.2h6M506.5 629.9h6M520.2 629.9h6M512 632.7h6"/>
<path stroke="#979797" stroke-width="3.23" d="M487.4 550.7h3.2M514.7 580.7h3.2M522.9 580.7h3.2M506.5 583.5h8.7M517.4 583.5h6M498.3 586.2h3.2M528.4 586.2h3.2M533.8 588.9h3.2M492.8 591.7h3.2M533.8 591.7h3.2M492.8 594.4h3.2M536.6 597.1h3.2M490.1 599.9h3.2M536.6 599.9h6M536.6 602.6h3.2M487.4 605.3h3.2M539.3 605.3h3.2M484.6 608.1h6M539.3 608.1h3.2M539.3 610.8h3.2M487.4 613.5h3.2M539.3 613.5h3.2M484.6 616.3h3.2M490.1 616.3h3.2M536.6 616.3h3.2M490.1 619h6M536.6 619h3.2M492.8 621.7h3.2M495.6 624.5h3.2M531.1 624.5h6M495.6 627.2h6M498.3 629.9h3.2M503.8 629.9h3.2M525.6 629.9h6M501 632.7h3.2M506.5 632.7h3.2M522.9 632.7h3.2M528.4 635.4h3.2"/>
<path stroke="#a7a7a7" stroke-width="3.23" d="M457.3 537h3.2M563.9 537h3.2M561.2 539.7h3.2M471 545.2h3.2M498.3 547.9h3.2M561.2 547.9h3.2M585.8 547.9h3.2M522.9 550.7h3.2M536.6 553.4h3.2M517.4 556.1h3.2M471 558.9h3.2M550.2 561.6h3.2M528.4 564.3h3.2M492.8 567.1h3.2M454.6 569.8h3.2M517.4 569.8h3.2M550.2 569.8h3.2M498.3 575.3h3.2M506.5 578h6M498.3 580.7h3.2M503.8 580.7h3.2M495.6 583.5h8.7M522.9 583.5h6M495.6 586.2h3.2M490.1 588.9h8.7M531.1 588.9h3.2M566.6 588.9h3.2M577.6 588.9h3.2M536.6 591.7h6M446.4 594.4h3.2M487.4 594.4h6M536.6 594.4h3.2M484.6 597.1h3.2M490.1 597.1h3.2M539.3 597.1h3.2M487.4 599.9h3.2M487.4 602.6h3.2M539.3 602.6h8.7M479.2 605.3h8.7M479.2 608.1h3.2M487.4 610.8h3.2M542 610.8h3.2M550.2 610.8h3.2M542 613.5h3.2M539.3 616.3h6M487.4 619h3.2M539.3 619h3.2M473.7 621.7h3.2M490.1 621.7h3.2M533.8 621.7h8.7M580.3 621.7h3.2M487.4 624.5h8.7M536.6 624.5h3.2M473.7 627.2h3.2M487.4 627.2h3.2M531.1 627.2h3.2M536.6 627.2h6M555.7 627.2h3.2M577.6 627.2h3.2M440.9 629.9h3.2M495.6 629.9h3.2M501 629.9h3.2M531.1 629.9h6M577.6 629.9h3.2M490.1 632.7h3.2M503.8 632.7h3.2M509.2 632.7h3.2M517.4 632.7h6M533.8 632.7h3.2M572.1 632.7h3.2M503.8 635.4h8.7M514.7 635.4h3.2M446.4 638.1h3.2M490.1 638.1h3.2M531.1 638.1h3.2M443.6 640.9h3.2M520.2 640.9h3.2M558.4 646.3h3.2M490.1 649.1h3.2M525.6 657.3h3.2M533.8 660h3.2M539.3 662.7h3.2M574.8 662.7h3.2M481.9 665.5h3.2M536.6 673.7h3.2M563.9 673.7h3.2M476.4 676.4h3.2M495.6 679.1h6"/>
<path stroke="#b7b7b7" stroke-width="3.23" d="M520.2 534.3h3.2M528.4 534.3h6M539.3 534.3h3.2M547.5 534.3h3.2M553 534.3h3.2M563.9 534.3h3.2M583 534.3h3.2M465.5 537h3.2M471 537h3.2M479.2 537h3.2M487.4 537h6M528.4 537h6M569.4 537h3.2M580.3 537h3.2M457.3 539.7h3.2M476.4 539.7h6M517.4 539.7h3.2M528.4 539.7h3.2M536.6 539.7h3.2M544.8 539.7h3.2M555.7 539.7h3.2M451.8 542.5h3.2M484.6 542.5h3.2M501 542.5h3.2M542 542.5h3.2M547.5 542.5h3.2M566.6 542.5h3.2M583 542.5h3.2M443.6 545.2h3.2M460 545.2h3.2M512 545.2h3.2M520.2 545.2h3.2M528.4 545.2h3.2M533.8 545.2h3.2M542 545.2h3.2M558.4 545.2h3.2M569.4 545.2h3.2M583 545.2h3.2M446.4 547.9h3.2M460 547.9h3.2M465.5 547.9h8.7M481.9 547.9h11.4M520.2 547.9h3.2M525.6 547.9h3.2M531.1 547.9h3.2M539.3 547.9h3.2M583 547.9h3.2M457.3 550.7h3.2M490.1 550.7h6M503.8 550.7h3.2M542 550.7h3.2M547.5 550.7h3.2M561.2 550.7h3.2M566.6 550.7h6M577.6 550.7h3.2M440.9 553.4h6M449.1 553.4h3.2M465.5 553.4h3.2M476.4 553.4h3.2M487.4 553.4h3.2M492.8 553.4h3.2M498.3 553.4h3.2M509.2 553.4h3.2M525.6 553.4h3.2M544.8 553.4h3.2M555.7 553.4h3.2M566.6 553.4h6M577.6 553.4h6M443.6 556.1h3.2M451.8 556.1h3.2M460 556.1h6M471 556.1h3.2M476.4 556.1h3.2M490.1 556.1h3.2M503.8 556.1h3.2M512 556.1h3.2M520.2 556.1h3.2M531.1 556.1h3.2M539.3 556.1h3.2M555.7 556.1h3.2M569.4 556.1h3.2M585.8 556.1h3.2M462.8 558.9h3.2M498.3 558.9h8.7M509.2 558.9h3.2M533.8 558.9h3.2M542 558.9h3.2M462.8 561.6h3.2M476.4 561.6h11.4M501 561.6h3.2M509.2 561.6h3.2M520.2 561.6h3.2M528.4 561.6h3.2M539.3 561.6h3.2M561.2 561.6h6M583 561.6h3.2M454.6 564.3h3.2M462.8 564.3h6M476.4 564.3h6M484.6 564.3h3.2M490.1 564.3h3.2M501 564.3h8.7M550.2 564.3h3.2M569.4 564.3h3.2M577.6 564.3h3.2M471 567.1h3.2M481.9 567.1h6M501 567.1h6M550.2 567.1h3.2M574.8 567.1h3.2M481.9 569.8h3.2M490.1 569.8h6M506.5 569.8h3.2M536.6 569.8h3.2M561.2 569.8h3.2M580.3 569.8h3.2M440.9 572.5h3.2M446.4 572.5h3.2M481.9 572.5h3.2M506.5 572.5h8.7M517.4 572.5h3.2M528.4 572.5h3.2M539.3 572.5h3.2M566.6 572.5h3.2M572.1 572.5h3.2M440.9 575.3h3.2M451.8 575.3h3.2M487.4 575.3h3.2M492.8 575.3h3.2M509.2 575.3h6M520.2 575.3h3.2M558.4 575.3h3.2M440.9 578h3.2M471 578h3.2M481.9 578h3.2M487.4 578h3.2M498.3 578h3.2M503.8 578h3.2M512 578h25.1M558.4 578h3.2M563.9 578h3.2M574.8 578h3.2M580.3 578h3.2M585.8 578h3.2M457.3 580.7h3.2M462.8 580.7h3.2M468.2 580.7h3.2M479.2 580.7h3.2M484.6 580.7h3.2M490.1 580.7h3.2M495.6 580.7h3.2M501 580.7h3.2M506.5 580.7h8.7M517.4 580.7h6M531.1 580.7h3.2M536.6 580.7h3.2M547.5 580.7h3.2M574.8 580.7h3.2M580.3 580.7h3.2M457.3 583.5h8.7M468.2 583.5h3.2M473.7 583.5h3.2M484.6 583.5h3.2M528.4 583.5h3.2M533.8 583.5h6M542 583.5h3.2M550.2 583.5h3.2M580.3 583.5h3.2M454.6 586.2h3.2M471 586.2h3.2M490.1 586.2h6M533.8 586.2h6M542 586.2h3.2M550.2 586.2h3.2M451.8 588.9h3.2M468.2 588.9h8.7M481.9 588.9h3.2M536.6 588.9h3.2M555.7 588.9h8.7M569.4 588.9h3.2M440.9 591.7h3.2M457.3 591.7h3.2M471 591.7h3.2M487.4 591.7h6M542 591.7h6M561.2 591.7h3.2M465.5 594.4h6M484.6 594.4h3.2M539.3 594.4h11.4M572.1 594.4h3.2M457.3 597.1h3.2M487.4 597.1h3.2M542 597.1h8.7M580.3 597.1h3.2M585.8 597.1h3.2M451.8 599.9h3.2M479.2 599.9h3.2M484.6 599.9h3.2M544.8 599.9h3.2M553 599.9h3.2M577.6 599.9h3.2M585.8 599.9h3.2M440.9 602.6h3.2M457.3 602.6h3.2M471 602.6h3.2M476.4 602.6h3.2M484.6 602.6h3.2M547.5 602.6h3.2M553 602.6h3.2M563.9 602.6h3.2M585.8 602.6h3.2M471 605.3h3.2M542 605.3h6M555.7 605.3h6M566.6 605.3h3.2M583 605.3h6M446.4 608.1h6M457.3 608.1h3.2M542 608.1h3.2M547.5 608.1h6M563.9 608.1h3.2M583 608.1h3.2M446.4 610.8h3.2M473.7 610.8h3.2M479.2 610.8h3.2M484.6 610.8h3.2M544.8 610.8h3.2M555.7 610.8h3.2M563.9 610.8h6M572.1 610.8h3.2M446.4 613.5h3.2M479.2 613.5h6M544.8 613.5h3.2M553 613.5h3.2M585.8 613.5h3.2M449.1 616.3h3.2M465.5 616.3h3.2M481.9 616.3h3.2M487.4 616.3h3.2M544.8 616.3h8.7M561.2 616.3h6M569.4 616.3h3.2M462.8 619h3.2M471 619h3.2M481.9 619h6M542 619h3.2M566.6 619h3.2M572.1 619h3.2M462.8 621.7h3.2M479.2 621.7h3.2M487.4 621.7h3.2M569.4 621.7h3.2M449.1 624.5h3.2M468.2 624.5h3.2M473.7 624.5h3.2M479.2 624.5h8.7M539.3 624.5h6M574.8 624.5h3.2M580.3 624.5h3.2M585.8 624.5h3.2M446.4 627.2h3.2M471 627.2h3.2M479.2 627.2h8.7M492.8 627.2h3.2M533.8 627.2h3.2M572.1 627.2h3.2M585.8 627.2h3.2M457.3 629.9h3.2M484.6 629.9h6M492.8 629.9h3.2M553 629.9h3.2M443.6 632.7h3.2M484.6 632.7h6M492.8 632.7h8.7M525.6 632.7h3.2M544.8 632.7h3.2M550.2 632.7h3.2M577.6 632.7h3.2M585.8 632.7h3.2M440.9 635.4h6M454.6 635.4h3.2M462.8 635.4h6M490.1 635.4h3.2M495.6 635.4h3.2M501 635.4h3.2M512 635.4h3.2M517.4 635.4h8.7M553 635.4h3.2M569.4 635.4h3.2M580.3 635.4h3.2M451.8 638.1h3.2M457.3 638.1h3.2M473.7 638.1h3.2M487.4 638.1h3.2M492.8 638.1h3.2M506.5 638.1h16.9M536.6 638.1h3.2M544.8 638.1h6M580.3 638.1h3.2M476.4 640.9h6M495.6 640.9h6M506.5 640.9h8.7M531.1 640.9h3.2M566.6 640.9h3.2M580.3 640.9h6M451.8 643.6h3.2M460 643.6h3.2M465.5 643.6h3.2M484.6 643.6h3.2M503.8 643.6h6M512 643.6h6M528.4 643.6h3.2M536.6 643.6h3.2M580.3 643.6h3.2M585.8 643.6h3.2M454.6 646.3h3.2M473.7 646.3h3.2M498.3 646.3h3.2M512 646.3h3.2M517.4 646.3h3.2M528.4 646.3h3.2M547.5 646.3h3.2M553 646.3h3.2M566.6 646.3h6M574.8 646.3h3.2M583 646.3h6M449.1 649.1h3.2M454.6 649.1h14.2M495.6 649.1h3.2M506.5 649.1h3.2M574.8 649.1h6M440.9 651.8h6M451.8 651.8h6M479.2 651.8h6M487.4 651.8h3.2M492.8 651.8h3.2M506.5 651.8h6M522.9 651.8h3.2M536.6 651.8h6M544.8 651.8h3.2M574.8 651.8h3.2M449.1 654.5h3.2M457.3 654.5h6M468.2 654.5h3.2M484.6 654.5h3.2M517.4 654.5h6M525.6 654.5h3.2M539.3 654.5h3.2M585.8 654.5h3.2M460 657.3h3.2M476.4 657.3h8.7M487.4 657.3h3.2M503.8 657.3h3.2M528.4 657.3h3.2M553 657.3h3.2M563.9 657.3h3.2M569.4 657.3h3.2M577.6 657.3h3.2M585.8 657.3h3.2M449.1 660h11.4M498.3 660h3.2M514.7 660h6M522.9 660h3.2M566.6 660h3.2M572.1 660h3.2M451.8 662.7h3.2M501 662.7h3.2M506.5 662.7h6M544.8 662.7h3.2M550.2 662.7h3.2M561.2 662.7h3.2M569.4 662.7h3.2M577.6 662.7h6M585.8 662.7h3.2M451.8 665.5h3.2M468.2 665.5h3.2M490.1 665.5h3.2M501 665.5h3.2M509.2 665.5h3.2M574.8 665.5h6M449.1 668.2h3.2M471 668.2h3.2M484.6 668.2h3.2M506.5 668.2h6M539.3 668.2h6M572.1 668.2h3.2M577.6 668.2h6M454.6 670.9h3.2M465.5 670.9h3.2M471 670.9h6M506.5 670.9h3.2M520.2 670.9h3.2M555.7 670.9h3.2M569.4 670.9h3.2M580.3 670.9h3.2M449.1 673.7h3.2M457.3 673.7h6M490.1 673.7h3.2M509.2 673.7h6M550.2 673.7h3.2M577.6 673.7h3.2M471 676.4h6M479.2 676.4h3.2M490.1 676.4h3.2M506.5 676.4h3.2M553 676.4h3.2M574.8 676.4h3.2M440.9 679.1h3.2M454.6 679.1h6M471 679.1h3.2M476.4 679.1h3.2M501 679.1h6M509.2 679.1h6M520.2 679.1h3.2M533.8 679.1h3.2M572.1 679.1h6M580.3 679.1h3.2"/>
<path stroke="#d7d7d7" stroke-width="3.23" d="M446.4 534.3h3.2M457.3 534.3h8.7M476.4 534.3h6M484.6 534.3h3.2M492.8 534.3h8.7M506.5 534.3h3.2M514.7 534.3h3.2M533.8 534.3h6M550.2 534.3h3.2M558.4 534.3h3.2M440.9 537h3.2M446.4 537h6M462.8 537h3.2M468.2 537h3.2M473.7 537h3.2M495.6 537h8.7M512 537h6M520.2 537h3.2M525.6 537h3.2M533.8 537h3.2M542 537h3.2M553 537h6M566.6 537h3.2M583 537h3.2M446.4 539.7h6M454.6 539.7h3.2M460 539.7h3.2M465.5 539.7h3.2M473.7 539.7h3.2M501 539.7h3.2M509.2 539.7h3.2M514.7 539.7h3.2M539.3 539.7h3.2M547.5 539.7h3.2M558.4 539.7h3.2M566.6 539.7h6M446.4 542.5h3.2M460 542.5h3.2M471 542.5h3.2M492.8 542.5h6M506.5 542.5h3.2M514.7 542.5h3.2M539.3 542.5h3.2M550.2 542.5h16.9M569.4 542.5h3.2M580.3 542.5h3.2M585.8 542.5h3.2M440.9 545.2h3.2M454.6 545.2h3.2M462.8 545.2h3.2M468.2 545.2h3.2M476.4 545.2h3.2M481.9 545.2h3.2M487.4 545.2h6M501 545.2h3.2M517.4 545.2h3.2M539.3 545.2h3.2M544.8 545.2h8.7M572.1 545.2h3.2M577.6 545.2h3.2M585.8 545.2h3.2M440.9 547.9h6M457.3 547.9h3.2M462.8 547.9h3.2M473.7 547.9h3.2M503.8 547.9h3.2M533.8 547.9h6M542 547.9h3.2M547.5 547.9h3.2M558.4 547.9h3.2M574.8 547.9h8.7M449.1 550.7h3.2M460 550.7h3.2M468.2 550.7h6M484.6 550.7h3.2M495.6 550.7h3.2M501 550.7h3.2M509.2 550.7h3.2M520.2 550.7h3.2M525.6 550.7h3.2M533.8 550.7h3.2M539.3 550.7h3.2M544.8 550.7h3.2M553 550.7h3.2M563.9 550.7h3.2M580.3 550.7h3.2M457.3 553.4h8.7M479.2 553.4h3.2M503.8 553.4h6M539.3 553.4h3.2M547.5 553.4h3.2M558.4 553.4h3.2M446.4 556.1h3.2M473.7 556.1h3.2M479.2 556.1h3.2M495.6 556.1h3.2M501 556.1h3.2M509.2 556.1h3.2M525.6 556.1h3.2M544.8 556.1h6M563.9 556.1h3.2M572.1 556.1h6M443.6 558.9h3.2M457.3 558.9h6M473.7 558.9h3.2M492.8 558.9h3.2M506.5 558.9h3.2M512 558.9h3.2M520.2 558.9h3.2M539.3 558.9h3.2M547.5 558.9h3.2M553 558.9h3.2M558.4 558.9h8.7M569.4 558.9h3.2M574.8 558.9h6M443.6 561.6h3.2M451.8 561.6h3.2M468.2 561.6h3.2M473.7 561.6h3.2M512 561.6h3.2M517.4 561.6h3.2M536.6 561.6h3.2M542 561.6h6M558.4 561.6h3.2M566.6 561.6h3.2M572.1 561.6h3.2M577.6 561.6h6M440.9 564.3h3.2M446.4 564.3h3.2M451.8 564.3h3.2M471 564.3h3.2M481.9 564.3h3.2M487.4 564.3h3.2M495.6 564.3h6M509.2 564.3h3.2M525.6 564.3h3.2M531.1 564.3h3.2M544.8 564.3h3.2M566.6 564.3h3.2M580.3 564.3h8.7M440.9 567.1h3.2M449.1 567.1h6M457.3 567.1h3.2M487.4 567.1h6M498.3 567.1h3.2M514.7 567.1h8.7M528.4 567.1h3.2M533.8 567.1h6M542 567.1h8.7M566.6 567.1h6M446.4 569.8h3.2M484.6 569.8h3.2M498.3 569.8h6M509.2 569.8h3.2M520.2 569.8h8.7M542 569.8h6M558.4 569.8h3.2M574.8 569.8h3.2M583 569.8h3.2M443.6 572.5h3.2M457.3 572.5h8.7M468.2 572.5h3.2M473.7 572.5h3.2M484.6 572.5h6M492.8 572.5h3.2M498.3 572.5h8.7M520.2 572.5h3.2M525.6 572.5h3.2M536.6 572.5h3.2M547.5 572.5h3.2M558.4 572.5h3.2M563.9 572.5h3.2M583 572.5h3.2M446.4 575.3h3.2M454.6 575.3h3.2M460 575.3h3.2M465.5 575.3h6M476.4 575.3h8.7M501 575.3h6M544.8 575.3h3.2M561.2 575.3h6M583 575.3h3.2M457.3 578h6M468.2 578h3.2M473.7 578h3.2M479.2 578h3.2M547.5 578h3.2M553 578h6M561.2 578h3.2M566.6 578h6M583 578h3.2M454.6 580.7h3.2M460 580.7h3.2M473.7 580.7h6M487.4 580.7h3.2M544.8 580.7h3.2M555.7 580.7h6M563.9 580.7h11.4M440.9 583.5h3.2M465.5 583.5h3.2M476.4 583.5h3.2M481.9 583.5h3.2M547.5 583.5h3.2M555.7 583.5h6M572.1 583.5h3.2M577.6 583.5h3.2M583 583.5h3.2M440.9 586.2h3.2M446.4 586.2h3.2M460 586.2h6M479.2 586.2h3.2M484.6 586.2h6M531.1 586.2h3.2M547.5 586.2h3.2M566.6 586.2h3.2M572.1 586.2h6M585.8 586.2h3.2M465.5 588.9h3.2M487.4 588.9h3.2M547.5 588.9h3.2M553 588.9h3.2M563.9 588.9h3.2M572.1 588.9h3.2M585.8 588.9h3.2M446.4 591.7h6M460 591.7h3.2M465.5 591.7h6M476.4 591.7h3.2M481.9 591.7h3.2M550.2 591.7h3.2M555.7 591.7h3.2M566.6 591.7h6M585.8 591.7h3.2M440.9 594.4h6M454.6 594.4h3.2M460 594.4h3.2M471 594.4h6M479.2 594.4h3.2M555.7 594.4h6M574.8 594.4h6M585.8 594.4h3.2M446.4 597.1h3.2M465.5 597.1h3.2M471 597.1h6M479.2 597.1h3.2M561.2 597.1h6M569.4 597.1h3.2M577.6 597.1h3.2M443.6 599.9h3.2M449.1 599.9h3.2M454.6 599.9h3.2M462.8 599.9h3.2M468.2 599.9h3.2M473.7 599.9h3.2M558.4 599.9h3.2M563.9 599.9h3.2M583 599.9h3.2M446.4 602.6h6M454.6 602.6h3.2M462.8 602.6h3.2M481.9 602.6h3.2M566.6 602.6h3.2M572.1 602.6h8.7M446.4 605.3h16.9M547.5 605.3h6M454.6 608.1h3.2M460 608.1h3.2M471 608.1h3.2M553 608.1h3.2M558.4 608.1h6M454.6 610.8h3.2M465.5 610.8h3.2M471 610.8h3.2M476.4 610.8h3.2M569.4 610.8h3.2M583 610.8h6M449.1 613.5h3.2M465.5 613.5h6M550.2 613.5h3.2M558.4 613.5h8.7M577.6 613.5h8.7M454.6 616.3h3.2M471 616.3h11.4M558.4 616.3h3.2M583 616.3h6M451.8 619h3.2M473.7 619h6M558.4 619h3.2M574.8 619h8.7M585.8 619h3.2M446.4 621.7h3.2M454.6 621.7h8.7M476.4 621.7h3.2M481.9 621.7h3.2M542 621.7h3.2M547.5 621.7h6M563.9 621.7h3.2M585.8 621.7h3.2M451.8 624.5h3.2M460 624.5h3.2M471 624.5h3.2M476.4 624.5h3.2M547.5 624.5h3.2M553 624.5h3.2M561.2 624.5h3.2M566.6 624.5h3.2M443.6 627.2h3.2M449.1 627.2h3.2M454.6 627.2h3.2M468.2 627.2h3.2M542 627.2h3.2M553 627.2h3.2M558.4 627.2h3.2M563.9 627.2h3.2M574.8 627.2h3.2M583 627.2h3.2M446.4 629.9h6M465.5 629.9h3.2M479.2 629.9h3.2M544.8 629.9h3.2M558.4 629.9h6M583 629.9h3.2M440.9 632.7h3.2M446.4 632.7h3.2M451.8 632.7h3.2M460 632.7h11.4M473.7 632.7h3.2M547.5 632.7h3.2M555.7 632.7h8.7M574.8 632.7h3.2M449.1 635.4h3.2M457.3 635.4h3.2M471 635.4h3.2M539.3 635.4h3.2M547.5 635.4h3.2M555.7 635.4h3.2M563.9 635.4h3.2M583 635.4h3.2M449.1 638.1h3.2M454.6 638.1h3.2M460 638.1h3.2M468.2 638.1h6M484.6 638.1h3.2M525.6 638.1h6M533.8 638.1h3.2M542 638.1h3.2M555.7 638.1h3.2M572.1 638.1h3.2M577.6 638.1h3.2M446.4 640.9h6M454.6 640.9h3.2M460 640.9h8.7M471 640.9h3.2M481.9 640.9h6M492.8 640.9h3.2M533.8 640.9h3.2M544.8 640.9h6M440.9 643.6h3.2M446.4 643.6h6M522.9 643.6h3.2M531.1 643.6h6M539.3 643.6h3.2M550.2 643.6h8.7M574.8 643.6h6M583 643.6h3.2M446.4 646.3h3.2M451.8 646.3h3.2M465.5 646.3h3.2M481.9 646.3h6M492.8 646.3h3.2M506.5 646.3h3.2M563.9 646.3h3.2M572.1 646.3h3.2M446.4 649.1h3.2M471 649.1h3.2M476.4 649.1h3.2M481.9 649.1h8.7M492.8 649.1h3.2M498.3 649.1h3.2M509.2 649.1h6M520.2 649.1h8.7M533.8 649.1h8.7M550.2 649.1h3.2M555.7 649.1h3.2M561.2 649.1h3.2M569.4 649.1h3.2M580.3 649.1h3.2M457.3 651.8h3.2M462.8 651.8h8.7M476.4 651.8h3.2M490.1 651.8h3.2M517.4 651.8h6M525.6 651.8h8.7M550.2 651.8h3.2M558.4 651.8h6M569.4 651.8h3.2M577.6 651.8h3.2M440.9 654.5h6M451.8 654.5h3.2M476.4 654.5h3.2M495.6 654.5h3.2M501 654.5h6M509.2 654.5h3.2M514.7 654.5h3.2M533.8 654.5h6M542 654.5h3.2M555.7 654.5h3.2M561.2 654.5h6M577.6 654.5h6M440.9 657.3h3.2M451.8 657.3h8.7M465.5 657.3h3.2M490.1 657.3h3.2M498.3 657.3h3.2M522.9 657.3h3.2M536.6 657.3h3.2M542 657.3h11.4M566.6 657.3h3.2M572.1 657.3h6M580.3 657.3h3.2M440.9 660h6M460 660h3.2M468.2 660h6M490.1 660h3.2M495.6 660h3.2M501 660h3.2M506.5 660h3.2M531.1 660h3.2M536.6 660h3.2M563.9 660h3.2M574.8 660h3.2M583 660h3.2M479.2 662.7h3.2M503.8 662.7h3.2M512 662.7h8.7M525.6 662.7h3.2M536.6 662.7h3.2M542 662.7h3.2M547.5 662.7h3.2M553 662.7h3.2M572.1 662.7h3.2M440.9 665.5h6M460 665.5h6M473.7 665.5h3.2M479.2 665.5h3.2M495.6 665.5h3.2M506.5 665.5h3.2M514.7 665.5h3.2M520.2 665.5h3.2M525.6 665.5h8.7M542 665.5h6M550.2 665.5h3.2M561.2 665.5h3.2M566.6 665.5h6M583 665.5h6M443.6 668.2h3.2M460 668.2h3.2M465.5 668.2h6M476.4 668.2h6M492.8 668.2h3.2M503.8 668.2h3.2M514.7 668.2h6M531.1 668.2h3.2M550.2 668.2h3.2M558.4 668.2h3.2M563.9 668.2h3.2M574.8 668.2h3.2M585.8 668.2h3.2M462.8 670.9h3.2M468.2 670.9h3.2M479.2 670.9h8.7M490.1 670.9h3.2M503.8 670.9h3.2M509.2 670.9h3.2M514.7 670.9h6M525.6 670.9h3.2M536.6 670.9h6M544.8 670.9h8.7M561.2 670.9h3.2M572.1 670.9h3.2M440.9 673.7h6M451.8 673.7h3.2M479.2 673.7h3.2M487.4 673.7h3.2M492.8 673.7h6M503.8 673.7h6M520.2 673.7h3.2M533.8 673.7h3.2M539.3 673.7h6M561.2 673.7h3.2M572.1 673.7h3.2M585.8 673.7h3.2M451.8 676.4h6M462.8 676.4h3.2M484.6 676.4h3.2M495.6 676.4h3.2M501 676.4h3.2M517.4 676.4h3.2M536.6 676.4h8.7M547.5 676.4h3.2M558.4 676.4h3.2M563.9 676.4h6M577.6 676.4h3.2M583 676.4h3.2M443.6 679.1h6M460 679.1h3.2M481.9 679.1h3.2M506.5 679.1h3.2M522.9 679.1h6M531.1 679.1h3.2M544.8 679.1h3.2M553 679.1h8.7M577.6 679.1h3.2"/>
<path stroke="#e7e7e7" stroke-width="3.23" d="M465.5 534.3h3.2M501 534.3h3.2M509.2 534.3h6M525.6 534.3h3.2M555.7 534.3h3.2M517.4 537h3.2M574.8 537h3.2M492.8 539.7h3.2M533.8 539.7h3.2M580.3 539.7h3.2M490.1 542.5h3.2M574.8 542.5h3.2M457.3 545.2h3.2M451.8 550.7h3.2M522.9 553.4h3.2M585.8 553.4h3.2M446.4 558.9h3.2M536.6 558.9h3.2M555.7 558.9h3.2M449.1 561.6h3.2M498.3 561.6h3.2M522.9 561.6h6M572.1 564.3h3.2M460 567.1h3.2M449.1 569.8h3.2M471 569.8h3.2M514.7 569.8h3.2M539.3 569.8h3.2M585.8 569.8h3.2M451.8 572.5h3.2M471 572.5h3.2M443.6 578h3.2M446.4 588.9h3.2M574.8 591.7h3.2M580.3 594.4h3.2M555.7 597.1h3.2M569.4 599.9h3.2M574.8 599.9h3.2M451.8 616.3h3.2M457.3 619h3.2M569.4 619h3.2M449.1 621.7h3.2M561.2 621.7h3.2M460 627.2h3.2M569.4 627.2h3.2M460 629.9h3.2M473.7 629.9h3.2M580.3 629.9h3.2M553 638.1h3.2M440.9 640.9h3.2M457.3 640.9h3.2M550.2 640.9h3.2M561.2 640.9h3.2M585.8 640.9h3.2M487.4 643.6h3.2M563.9 643.6h3.2M501 646.3h3.2M509.2 646.3h3.2M536.6 646.3h3.2M440.9 649.1h3.2M566.6 649.1h3.2M514.7 651.8h3.2M533.8 651.8h3.2M558.4 654.5h3.2M468.2 657.3h3.2M509.2 657.3h3.2M539.3 657.3h3.2M487.4 660h3.2M547.5 660h3.2M471 662.7h6M555.7 662.7h3.2M563.9 662.7h3.2M553 665.5h3.2M440.9 668.2h3.2M457.3 670.9h3.2M577.6 670.9h3.2M517.4 673.7h3.2M514.7 676.4h3.2"/>
<path stroke="#f7f7f7" stroke-width="3.23" d="M525.6 539.7h3.2M509.2 545.2h3.2M440.9 646.3h3.2"/>
</g>
<rect x="465.5" y="557.5" width="98.4" height="98.4" fill="none" stroke="#ff0000" stroke-width="1.3"/>
<path d="M477.0 606.7H506.5M522.9 606.7H552.4M514.7 569.0V598.5M514.7 614.9V644.4" stroke="#ff0000" stroke-width="1.3"/>
<circle cx="514.7" cy="606.7" r="24.8" fill="none" stroke="#ffd000" stroke-width="1.7"/>
<rect x="506.7" y="601.9" width="13.0" height="12.6" fill="none" stroke="#0000ff" stroke-width="1.4"/>
<text transform="translate(514.70 546.60) scale(1.0 1)" font-family="'Liberation Sans', sans-serif" font-size="10.6" fill="#ff0000" text-anchor="middle" stroke="#ff0000" stroke-width="0.18">N</text>
<text transform="translate(451.20 611.00) scale(1.0 1)" font-family="'Liberation Sans', sans-serif" font-size="10.6" fill="#ff0000" text-anchor="middle" stroke="#ff0000" stroke-width="0.18">E</text>
<rect x="440.9" y="532.9" width="147.6" height="147.6" fill="none" stroke="#222" stroke-width="1.1"/>
<text transform="translate(445.90 696.20) scale(1.0 1)" font-family="'Liberation Sans', sans-serif" font-size="11.3" fill="#000" text-anchor="middle" stroke="#000" stroke-width="0.18">−4</text>
<text transform="translate(433.30 676.30) scale(1.0 1)" font-family="'Liberation Sans', sans-serif" font-size="11.3" fill="#000" text-anchor="end" stroke="#000" stroke-width="0.18">−4</text>
<text transform="translate(478.70 696.20) scale(1.0 1)" font-family="'Liberation Sans', sans-serif" font-size="11.3" fill="#000" text-anchor="middle" stroke="#000" stroke-width="0.18">−2</text>
<text transform="translate(433.30 643.50) scale(1.0 1)" font-family="'Liberation Sans', sans-serif" font-size="11.3" fill="#000" text-anchor="end" stroke="#000" stroke-width="0.18">−2</text>
<text transform="translate(514.70 696.20) scale(1.0 1)" font-family="'Liberation Sans', sans-serif" font-size="11.3" fill="#000" text-anchor="middle" stroke="#000" stroke-width="0.18">0</text>
<text transform="translate(433.30 610.70) scale(1.0 1)" font-family="'Liberation Sans', sans-serif" font-size="11.3" fill="#000" text-anchor="end" stroke="#000" stroke-width="0.18">0</text>
<text transform="translate(547.50 696.20) scale(1.0 1)" font-family="'Liberation Sans', sans-serif" font-size="11.3" fill="#000" text-anchor="middle" stroke="#000" stroke-width="0.18">2</text>
<text transform="translate(433.30 577.90) scale(1.0 1)" font-family="'Liberation Sans', sans-serif" font-size="11.3" fill="#000" text-anchor="end" stroke="#000" stroke-width="0.18">2</text>
<text transform="translate(580.30 696.20) scale(1.0 1)" font-family="'Liberation Sans', sans-serif" font-size="11.3" fill="#000" text-anchor="middle" stroke="#000" stroke-width="0.18">4</text>
<text transform="translate(433.30 545.10) scale(1.0 1)" font-family="'Liberation Sans', sans-serif" font-size="11.3" fill="#000" text-anchor="end" stroke="#000" stroke-width="0.18">4</text>
<path d="M449.1 680.5v3.5M440.9 672.3h-3.5M481.9 680.5v3.5M440.9 639.5h-3.5M514.7 680.5v3.5M440.9 606.7h-3.5M547.5 680.5v3.5M440.9 573.9h-3.5M580.3 680.5v3.5M440.9 541.1h-3.5" stroke="#222" stroke-width="0.9"/>
<text x="514.7" y="525.7" font-family="'Liberation Sans', sans-serif" font-size="12.2" text-anchor="middle" textLength="74" lengthAdjust="spacingAndGlyphs" fill="#111" stroke="#111" stroke-width="0.2">HSC(26.2) r</text>
<text x="514.7" y="706.2" font-family="'Liberation Sans', sans-serif" font-size="10.6" text-anchor="middle" textLength="120" lengthAdjust="spacingAndGlyphs" fill="#111" stroke="#111" stroke-width="0.2">m:20.3  re:1.5"  s:0.0"</text>
</svg></body></html>
